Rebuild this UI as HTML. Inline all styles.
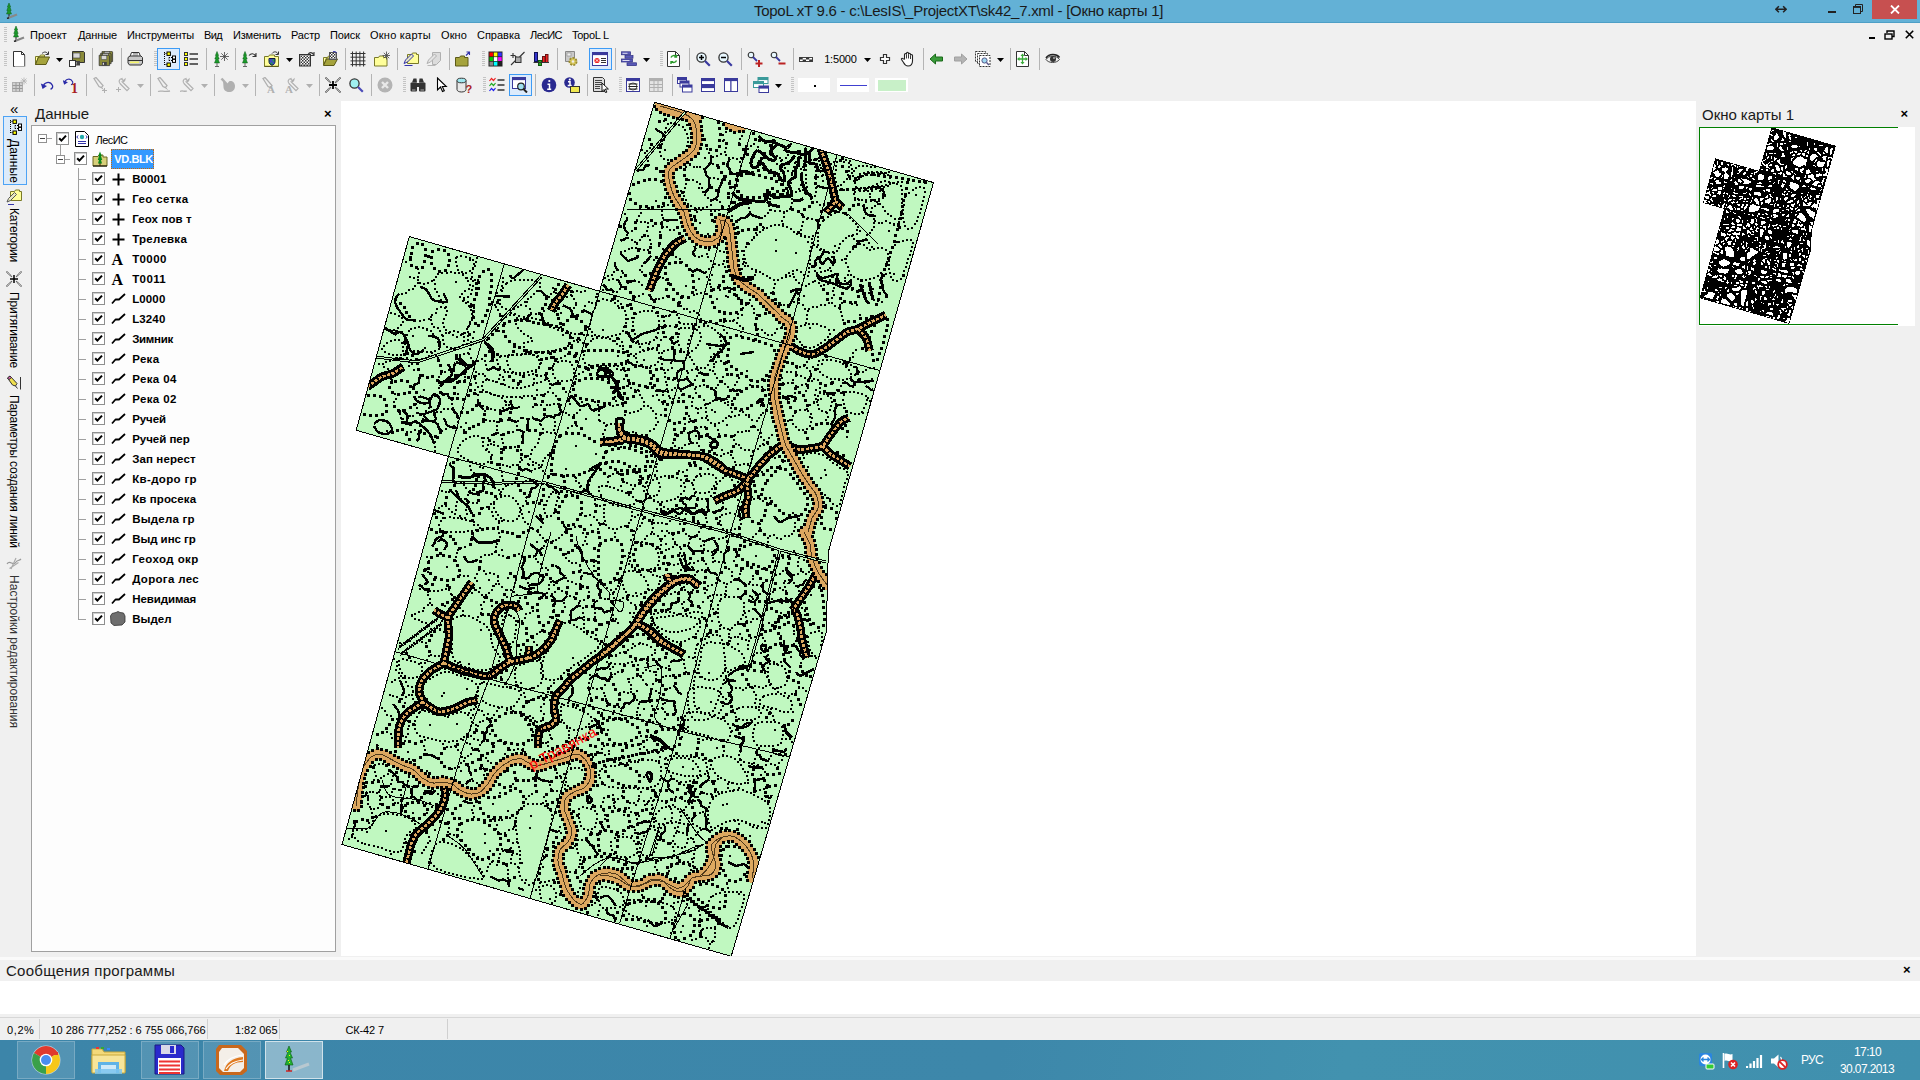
<!DOCTYPE html>
<html lang="ru"><head><meta charset="utf-8"><title>TopoL xT</title>
<style>
html,body{margin:0;padding:0;}
body{width:1920px;height:1080px;overflow:hidden;background:#f0f0f0;font-family:"Liberation Sans",sans-serif;font-size:11px;color:#000;position:relative;}
.a{position:absolute;}
.t{position:absolute;white-space:nowrap;line-height:1;}
#title{left:0;top:0;width:1920px;height:22px;background:#63b1d6;border-bottom:1px solid #4d9fc6;}
#closebtn{left:1872px;top:0;width:45px;height:19px;background:#c75050;}
#map{left:341px;top:101px;width:1355px;height:855px;background:#fff;}
#tree{left:31px;top:125px;width:303px;height:825px;background:#fdfdfd;border:1px solid #a0a0a0;box-sizing:content-box;}
.cb{position:absolute;width:11px;height:11px;border:1px solid #8e8f8f;background:#fff;box-shadow:inset 1px 1px 0 #cfcfcf;}
.vt{position:absolute;white-space:nowrap;transform-origin:0 0;transform:rotate(90deg);font-size:12px;line-height:1;}
.sep{position:absolute;width:1px;height:22px;background:#b4b4b4;}
.grip{position:absolute;width:3px;height:16px;background:repeating-linear-gradient(to bottom,#c4c4c4 0,#c4c4c4 1px,transparent 1px,transparent 2px);}
#taskbar{left:0;top:1040px;width:1920px;height:40px;background:linear-gradient(100deg,#3c85a9 0%,#3d87aa 52%,#4292af 70%,#4090ae 100%);}
.tb{position:absolute;top:1041px;width:58px;height:38px;background:rgba(255,255,255,.12);border:1px solid rgba(255,255,255,.22);box-sizing:border-box;}
</style></head><body>
<div class="a" id="title"></div><div class="a" id="closebtn"></div>
<div class="t" id="ttl" style="letter-spacing:-0.27px;left:754px;top:3px;font-size:15px;color:#1a1a1a;">TopoL xT 9.6 - c:\LesIS\_ProjectXT\sk42_7.xml - [Окно карты 1]</div>
<div class="t m" id="m0" style="letter-spacing:0.13px;left:30px;top:30px;font-size:11px;">Проект</div>
<div class="t m" id="m1" style="letter-spacing:-0.12px;left:78px;top:30px;font-size:11px;">Данные</div>
<div class="t m" id="m2" style="letter-spacing:-0.14px;left:127px;top:30px;font-size:11px;">Инструменты</div>
<div class="t m" id="m3" style="letter-spacing:-0.64px;left:204px;top:30px;font-size:11px;">Вид</div>
<div class="t m" id="m4" style="letter-spacing:-0.20px;left:233px;top:30px;font-size:11px;">Изменить</div>
<div class="t m" id="m5" style="letter-spacing:-0.15px;left:291px;top:30px;font-size:11px;">Растр</div>
<div class="t m" id="m6" style="letter-spacing:-0.10px;left:330px;top:30px;font-size:11px;">Поиск</div>
<div class="t m" id="m7" style="letter-spacing:0.24px;left:370px;top:30px;font-size:11px;">Окно карты</div>
<div class="t m" id="m8" style="letter-spacing:0.11px;left:441px;top:30px;font-size:11px;">Окно</div>
<div class="t m" id="m9" style="letter-spacing:-0.02px;left:477px;top:30px;font-size:11px;">Справка</div>
<div class="t m" id="m10" style="letter-spacing:-0.54px;left:530px;top:30px;font-size:11px;">ЛесИС</div>
<div class="t m" id="m11" style="letter-spacing:-0.25px;left:572px;top:30px;font-size:11px;">TopoL L</div>
<div class="a" id="map"></div>
<div class="a" id="tree"></div>
<div class="t" id="hd1" style="left:35px;top:106px;font-size:15px;color:#1a1a1a;">Данные</div>
<div class="t" style="left:324px;top:106.5px;font-size:13px;font-weight:bold;">×</div>
<div class="a" style="left:38px;top:134px;width:7px;height:7px;border:1px solid #919191;background:#fff"><div class="a" style="left:1px;top:3px;width:5px;height:1px;background:#444"></div></div>
<div class="a" style="left:47px;top:138px;width:5px;height:1px;background:#a0a0a0"></div>
<div class="cb" style="left:56px;top:132px"><svg width="11" height="11" viewBox="0 0 11 11" style="position:absolute;left:0;top:0"><path d="M2.2 5.2 L4.4 7.6 L9 2.6" stroke="#000" stroke-width="2" fill="none"/></svg></div>
<svg class="a" style="left:74px;top:131px" width="16" height="16" viewBox="0 0 16 16"><path d="M1.5 .5h9l4 4v11h-13z" fill="#fff" stroke="#000"/><circle cx="8" cy="6" r="2.2" fill="#2aa"/><path d="M4 4.5 2.8 6 4 7.5M12 4.5 13.2 6 12 7.5" stroke="#22a" fill="none"/><path d="M4 10.5h8M4 12.5h8" stroke="#33a"/></svg>
<div class="t" id="r_les" style="letter-spacing:-0.56px;left:95.6px;top:134.5px;font-size:11px;">ЛесИС</div>
<div class="a" style="left:60px;top:144px;width:1px;height:11px;background:#a0a0a0"></div>
<div class="a" style="left:56px;top:155px;width:7px;height:7px;border:1px solid #919191;background:#fff"><div class="a" style="left:1px;top:3px;width:5px;height:1px;background:#444"></div></div>
<div class="a" style="left:65px;top:159px;width:5px;height:1px;background:#a0a0a0"></div>
<div class="cb" style="left:74px;top:152px"><svg width="11" height="11" viewBox="0 0 11 11" style="position:absolute;left:0;top:0"><path d="M2.2 5.2 L4.4 7.6 L9 2.6" stroke="#000" stroke-width="2" fill="none"/></svg></div>
<svg class="a" style="left:92px;top:151px" width="16" height="16" viewBox="0 0 16 16"><path d="M1 5.5h5l1-1.5h4v2h4v9H1z" fill="#d8cf7a" stroke="#6b6820"/><path d="M1 15h14" stroke="#000"/><path d="M8 .5 6.2 5 7 5 5.8 9 7 9 6 12.5h4L9 9h1.2L9 5h.8z" fill="#0a8a1a"/><path d="M8 12v3" stroke="#320"/></svg>
<div class="a" style="left:111px;top:149px;width:41px;height:18px;background:#3399ff;border:1px dotted #c60;"></div>
<div class="t" id="r_vd" style="letter-spacing:-0.41px;left:114.3px;top:154px;font-size:11px;font-weight:bold;color:#fff">VD.BLK</div>
<div class="a" style="left:78px;top:168px;width:1px;height:452px;background:#a0a0a0"></div>
<div class="a" style="left:79px;top:179px;width:7px;height:1px;background:#a0a0a0"></div>
<div class="cb" style="left:92px;top:172px"><svg width="11" height="11" viewBox="0 0 11 11" style="position:absolute;left:0;top:0"><path d="M2.2 5.2 L4.4 7.6 L9 2.6" stroke="#000" stroke-width="2" fill="none"/></svg></div>
<svg class="a" style="left:112px;top:173px" width="13" height="13" viewBox="0 0 13 13"><path d="M6.5 .5v12M.5 6.5h12" stroke="#000" stroke-width="2"/></svg>
<div class="t r" id="r0" style="letter-spacing:0.06px;left:132.2px;top:174px;font-size:11.5px;font-weight:bold;">B0001</div>
<div class="a" style="left:79px;top:199px;width:7px;height:1px;background:#a0a0a0"></div>
<div class="cb" style="left:92px;top:192px"><svg width="11" height="11" viewBox="0 0 11 11" style="position:absolute;left:0;top:0"><path d="M2.2 5.2 L4.4 7.6 L9 2.6" stroke="#000" stroke-width="2" fill="none"/></svg></div>
<svg class="a" style="left:112px;top:193px" width="13" height="13" viewBox="0 0 13 13"><path d="M6.5 .5v12M.5 6.5h12" stroke="#000" stroke-width="2"/></svg>
<div class="t r" id="r1" style="letter-spacing:0.36px;left:132.2px;top:194px;font-size:11.5px;font-weight:bold;">Гео сетка</div>
<div class="a" style="left:79px;top:219px;width:7px;height:1px;background:#a0a0a0"></div>
<div class="cb" style="left:92px;top:212px"><svg width="11" height="11" viewBox="0 0 11 11" style="position:absolute;left:0;top:0"><path d="M2.2 5.2 L4.4 7.6 L9 2.6" stroke="#000" stroke-width="2" fill="none"/></svg></div>
<svg class="a" style="left:112px;top:213px" width="13" height="13" viewBox="0 0 13 13"><path d="M6.5 .5v12M.5 6.5h12" stroke="#000" stroke-width="2"/></svg>
<div class="t r" id="r2" style="letter-spacing:0.11px;left:132.2px;top:214px;font-size:11.5px;font-weight:bold;">Геох пов т</div>
<div class="a" style="left:79px;top:239px;width:7px;height:1px;background:#a0a0a0"></div>
<div class="cb" style="left:92px;top:232px"><svg width="11" height="11" viewBox="0 0 11 11" style="position:absolute;left:0;top:0"><path d="M2.2 5.2 L4.4 7.6 L9 2.6" stroke="#000" stroke-width="2" fill="none"/></svg></div>
<svg class="a" style="left:112px;top:233px" width="13" height="13" viewBox="0 0 13 13"><path d="M6.5 .5v12M.5 6.5h12" stroke="#000" stroke-width="2"/></svg>
<div class="t r" id="r3" style="letter-spacing:0.26px;left:132.2px;top:234px;font-size:11.5px;font-weight:bold;">Трелевка</div>
<div class="a" style="left:79px;top:259px;width:7px;height:1px;background:#a0a0a0"></div>
<div class="cb" style="left:92px;top:252px"><svg width="11" height="11" viewBox="0 0 11 11" style="position:absolute;left:0;top:0"><path d="M2.2 5.2 L4.4 7.6 L9 2.6" stroke="#000" stroke-width="2" fill="none"/></svg></div>
<div class="t" style="left:111.5px;top:252px;font-family:'Liberation Serif',serif;font-weight:bold;font-size:16px;">A</div>
<div class="t r" id="r4" style="letter-spacing:0.38px;left:132.2px;top:254px;font-size:11.5px;font-weight:bold;">T0000</div>
<div class="a" style="left:79px;top:279px;width:7px;height:1px;background:#a0a0a0"></div>
<div class="cb" style="left:92px;top:272px"><svg width="11" height="11" viewBox="0 0 11 11" style="position:absolute;left:0;top:0"><path d="M2.2 5.2 L4.4 7.6 L9 2.6" stroke="#000" stroke-width="2" fill="none"/></svg></div>
<div class="t" style="left:111.5px;top:272px;font-family:'Liberation Serif',serif;font-weight:bold;font-size:16px;">A</div>
<div class="t r" id="r5" style="letter-spacing:0.40px;left:132.2px;top:274px;font-size:11.5px;font-weight:bold;">T0011</div>
<div class="a" style="left:79px;top:299px;width:7px;height:1px;background:#a0a0a0"></div>
<div class="cb" style="left:92px;top:292px"><svg width="11" height="11" viewBox="0 0 11 11" style="position:absolute;left:0;top:0"><path d="M2.2 5.2 L4.4 7.6 L9 2.6" stroke="#000" stroke-width="2" fill="none"/></svg></div>
<svg class="a" style="left:111px;top:293px" width="15" height="12" viewBox="0 0 15 12"><path d="M1 10.5 4.5 6.5H8L14 1" stroke="#000" stroke-width="1.8" fill="none" stroke-linejoin="round"/></svg>
<div class="t r" id="r6" style="letter-spacing:0.12px;left:132.2px;top:294px;font-size:11.5px;font-weight:bold;">L0000</div>
<div class="a" style="left:79px;top:319px;width:7px;height:1px;background:#a0a0a0"></div>
<div class="cb" style="left:92px;top:312px"><svg width="11" height="11" viewBox="0 0 11 11" style="position:absolute;left:0;top:0"><path d="M2.2 5.2 L4.4 7.6 L9 2.6" stroke="#000" stroke-width="2" fill="none"/></svg></div>
<svg class="a" style="left:111px;top:313px" width="15" height="12" viewBox="0 0 15 12"><path d="M1 10.5 4.5 6.5H8L14 1" stroke="#000" stroke-width="1.8" fill="none" stroke-linejoin="round"/></svg>
<div class="t r" id="r7" style="letter-spacing:0.12px;left:132.2px;top:314px;font-size:11.5px;font-weight:bold;">L3240</div>
<div class="a" style="left:79px;top:339px;width:7px;height:1px;background:#a0a0a0"></div>
<div class="cb" style="left:92px;top:332px"><svg width="11" height="11" viewBox="0 0 11 11" style="position:absolute;left:0;top:0"><path d="M2.2 5.2 L4.4 7.6 L9 2.6" stroke="#000" stroke-width="2" fill="none"/></svg></div>
<svg class="a" style="left:111px;top:333px" width="15" height="12" viewBox="0 0 15 12"><path d="M1 10.5 4.5 6.5H8L14 1" stroke="#000" stroke-width="1.8" fill="none" stroke-linejoin="round"/></svg>
<div class="t r" id="r8" style="letter-spacing:-0.31px;left:132.2px;top:334px;font-size:11.5px;font-weight:bold;">Зимник</div>
<div class="a" style="left:79px;top:359px;width:7px;height:1px;background:#a0a0a0"></div>
<div class="cb" style="left:92px;top:352px"><svg width="11" height="11" viewBox="0 0 11 11" style="position:absolute;left:0;top:0"><path d="M2.2 5.2 L4.4 7.6 L9 2.6" stroke="#000" stroke-width="2" fill="none"/></svg></div>
<svg class="a" style="left:111px;top:353px" width="15" height="12" viewBox="0 0 15 12"><path d="M1 10.5 4.5 6.5H8L14 1" stroke="#000" stroke-width="1.8" fill="none" stroke-linejoin="round"/></svg>
<div class="t r" id="r9" style="letter-spacing:0.32px;left:132.2px;top:354px;font-size:11.5px;font-weight:bold;">Река</div>
<div class="a" style="left:79px;top:379px;width:7px;height:1px;background:#a0a0a0"></div>
<div class="cb" style="left:92px;top:372px"><svg width="11" height="11" viewBox="0 0 11 11" style="position:absolute;left:0;top:0"><path d="M2.2 5.2 L4.4 7.6 L9 2.6" stroke="#000" stroke-width="2" fill="none"/></svg></div>
<svg class="a" style="left:111px;top:373px" width="15" height="12" viewBox="0 0 15 12"><path d="M1 10.5 4.5 6.5H8L14 1" stroke="#000" stroke-width="1.8" fill="none" stroke-linejoin="round"/></svg>
<div class="t r" id="r10" style="letter-spacing:0.38px;left:132.2px;top:374px;font-size:11.5px;font-weight:bold;">Река 04</div>
<div class="a" style="left:79px;top:399px;width:7px;height:1px;background:#a0a0a0"></div>
<div class="cb" style="left:92px;top:392px"><svg width="11" height="11" viewBox="0 0 11 11" style="position:absolute;left:0;top:0"><path d="M2.2 5.2 L4.4 7.6 L9 2.6" stroke="#000" stroke-width="2" fill="none"/></svg></div>
<svg class="a" style="left:111px;top:393px" width="15" height="12" viewBox="0 0 15 12"><path d="M1 10.5 4.5 6.5H8L14 1" stroke="#000" stroke-width="1.8" fill="none" stroke-linejoin="round"/></svg>
<div class="t r" id="r11" style="letter-spacing:0.38px;left:132.2px;top:394px;font-size:11.5px;font-weight:bold;">Река 02</div>
<div class="a" style="left:79px;top:419px;width:7px;height:1px;background:#a0a0a0"></div>
<div class="cb" style="left:92px;top:412px"><svg width="11" height="11" viewBox="0 0 11 11" style="position:absolute;left:0;top:0"><path d="M2.2 5.2 L4.4 7.6 L9 2.6" stroke="#000" stroke-width="2" fill="none"/></svg></div>
<svg class="a" style="left:111px;top:413px" width="15" height="12" viewBox="0 0 15 12"><path d="M1 10.5 4.5 6.5H8L14 1" stroke="#000" stroke-width="1.8" fill="none" stroke-linejoin="round"/></svg>
<div class="t r" id="r12" style="letter-spacing:-0.10px;left:132.2px;top:414px;font-size:11.5px;font-weight:bold;">Ручей</div>
<div class="a" style="left:79px;top:439px;width:7px;height:1px;background:#a0a0a0"></div>
<div class="cb" style="left:92px;top:432px"><svg width="11" height="11" viewBox="0 0 11 11" style="position:absolute;left:0;top:0"><path d="M2.2 5.2 L4.4 7.6 L9 2.6" stroke="#000" stroke-width="2" fill="none"/></svg></div>
<svg class="a" style="left:111px;top:433px" width="15" height="12" viewBox="0 0 15 12"><path d="M1 10.5 4.5 6.5H8L14 1" stroke="#000" stroke-width="1.8" fill="none" stroke-linejoin="round"/></svg>
<div class="t r" id="r13" style="letter-spacing:-0.03px;left:132.2px;top:434px;font-size:11.5px;font-weight:bold;">Ручей пер</div>
<div class="a" style="left:79px;top:459px;width:7px;height:1px;background:#a0a0a0"></div>
<div class="cb" style="left:92px;top:452px"><svg width="11" height="11" viewBox="0 0 11 11" style="position:absolute;left:0;top:0"><path d="M2.2 5.2 L4.4 7.6 L9 2.6" stroke="#000" stroke-width="2" fill="none"/></svg></div>
<svg class="a" style="left:111px;top:453px" width="15" height="12" viewBox="0 0 15 12"><path d="M1 10.5 4.5 6.5H8L14 1" stroke="#000" stroke-width="1.8" fill="none" stroke-linejoin="round"/></svg>
<div class="t r" id="r14" style="letter-spacing:0.11px;left:132.2px;top:454px;font-size:11.5px;font-weight:bold;">Зап нерест</div>
<div class="a" style="left:79px;top:479px;width:7px;height:1px;background:#a0a0a0"></div>
<div class="cb" style="left:92px;top:472px"><svg width="11" height="11" viewBox="0 0 11 11" style="position:absolute;left:0;top:0"><path d="M2.2 5.2 L4.4 7.6 L9 2.6" stroke="#000" stroke-width="2" fill="none"/></svg></div>
<svg class="a" style="left:111px;top:473px" width="15" height="12" viewBox="0 0 15 12"><path d="M1 10.5 4.5 6.5H8L14 1" stroke="#000" stroke-width="1.8" fill="none" stroke-linejoin="round"/></svg>
<div class="t r" id="r15" style="letter-spacing:0.35px;left:132.2px;top:474px;font-size:11.5px;font-weight:bold;">Кв-доро гр</div>
<div class="a" style="left:79px;top:499px;width:7px;height:1px;background:#a0a0a0"></div>
<div class="cb" style="left:92px;top:492px"><svg width="11" height="11" viewBox="0 0 11 11" style="position:absolute;left:0;top:0"><path d="M2.2 5.2 L4.4 7.6 L9 2.6" stroke="#000" stroke-width="2" fill="none"/></svg></div>
<svg class="a" style="left:111px;top:493px" width="15" height="12" viewBox="0 0 15 12"><path d="M1 10.5 4.5 6.5H8L14 1" stroke="#000" stroke-width="1.8" fill="none" stroke-linejoin="round"/></svg>
<div class="t r" id="r16" style="letter-spacing:0.09px;left:132.2px;top:494px;font-size:11.5px;font-weight:bold;">Кв просека</div>
<div class="a" style="left:79px;top:519px;width:7px;height:1px;background:#a0a0a0"></div>
<div class="cb" style="left:92px;top:512px"><svg width="11" height="11" viewBox="0 0 11 11" style="position:absolute;left:0;top:0"><path d="M2.2 5.2 L4.4 7.6 L9 2.6" stroke="#000" stroke-width="2" fill="none"/></svg></div>
<svg class="a" style="left:111px;top:513px" width="15" height="12" viewBox="0 0 15 12"><path d="M1 10.5 4.5 6.5H8L14 1" stroke="#000" stroke-width="1.8" fill="none" stroke-linejoin="round"/></svg>
<div class="t r" id="r17" style="letter-spacing:0.24px;left:132.2px;top:514px;font-size:11.5px;font-weight:bold;">Выдела гр</div>
<div class="a" style="left:79px;top:539px;width:7px;height:1px;background:#a0a0a0"></div>
<div class="cb" style="left:92px;top:532px"><svg width="11" height="11" viewBox="0 0 11 11" style="position:absolute;left:0;top:0"><path d="M2.2 5.2 L4.4 7.6 L9 2.6" stroke="#000" stroke-width="2" fill="none"/></svg></div>
<svg class="a" style="left:111px;top:533px" width="15" height="12" viewBox="0 0 15 12"><path d="M1 10.5 4.5 6.5H8L14 1" stroke="#000" stroke-width="1.8" fill="none" stroke-linejoin="round"/></svg>
<div class="t r" id="r18" style="letter-spacing:-0.05px;left:132.2px;top:534px;font-size:11.5px;font-weight:bold;">Выд инс гр</div>
<div class="a" style="left:79px;top:559px;width:7px;height:1px;background:#a0a0a0"></div>
<div class="cb" style="left:92px;top:552px"><svg width="11" height="11" viewBox="0 0 11 11" style="position:absolute;left:0;top:0"><path d="M2.2 5.2 L4.4 7.6 L9 2.6" stroke="#000" stroke-width="2" fill="none"/></svg></div>
<svg class="a" style="left:111px;top:553px" width="15" height="12" viewBox="0 0 15 12"><path d="M1 10.5 4.5 6.5H8L14 1" stroke="#000" stroke-width="1.8" fill="none" stroke-linejoin="round"/></svg>
<div class="t r" id="r19" style="letter-spacing:0.42px;left:132.2px;top:554px;font-size:11.5px;font-weight:bold;">Геоход окр</div>
<div class="a" style="left:79px;top:579px;width:7px;height:1px;background:#a0a0a0"></div>
<div class="cb" style="left:92px;top:572px"><svg width="11" height="11" viewBox="0 0 11 11" style="position:absolute;left:0;top:0"><path d="M2.2 5.2 L4.4 7.6 L9 2.6" stroke="#000" stroke-width="2" fill="none"/></svg></div>
<svg class="a" style="left:111px;top:573px" width="15" height="12" viewBox="0 0 15 12"><path d="M1 10.5 4.5 6.5H8L14 1" stroke="#000" stroke-width="1.8" fill="none" stroke-linejoin="round"/></svg>
<div class="t r" id="r20" style="letter-spacing:0.32px;left:132.2px;top:574px;font-size:11.5px;font-weight:bold;">Дорога лес</div>
<div class="a" style="left:79px;top:599px;width:7px;height:1px;background:#a0a0a0"></div>
<div class="cb" style="left:92px;top:592px"><svg width="11" height="11" viewBox="0 0 11 11" style="position:absolute;left:0;top:0"><path d="M2.2 5.2 L4.4 7.6 L9 2.6" stroke="#000" stroke-width="2" fill="none"/></svg></div>
<svg class="a" style="left:111px;top:593px" width="15" height="12" viewBox="0 0 15 12"><path d="M1 10.5 4.5 6.5H8L14 1" stroke="#000" stroke-width="1.8" fill="none" stroke-linejoin="round"/></svg>
<div class="t r" id="r21" style="letter-spacing:-0.07px;left:132.2px;top:594px;font-size:11.5px;font-weight:bold;">Невидимая</div>
<div class="a" style="left:79px;top:619px;width:7px;height:1px;background:#a0a0a0"></div>
<div class="cb" style="left:92px;top:612px"><svg width="11" height="11" viewBox="0 0 11 11" style="position:absolute;left:0;top:0"><path d="M2.2 5.2 L4.4 7.6 L9 2.6" stroke="#000" stroke-width="2" fill="none"/></svg></div>
<svg class="a" style="left:110px;top:611px" width="16" height="15" viewBox="0 0 16 15"><path d="M2 2.5 6 1.5 8 .5 10 1.5 13.5 2 15 5 15 11 12 14 4 14.5 1 12 .5 5z" fill="#6e6e6e" stroke="#333" stroke-width=".8"/></svg>
<div class="t r" id="r22" style="letter-spacing:0.05px;left:132.2px;top:614px;font-size:11.5px;font-weight:bold;">Выдел</div>
<div class="t" style="left:10px;top:101px;font-size:15px;">«</div>
<div class="a" style="left:3px;top:116px;width:22px;height:67px;background:#dcebfa;border:1px solid #4da3f5"></div>
<div class="vt" id="v0" style="letter-spacing:0.11px;left:20px;top:138.5px;">Данные</div>
<div class="vt" id="v1" style="letter-spacing:-0.26px;left:20px;top:208px;">Категории</div>
<div class="vt" id="v2" style="letter-spacing:-0.17px;left:20px;top:292px;">Притягивание</div>
<div class="vt" id="v3" style="letter-spacing:-0.12px;left:20px;top:395px;">Параметры создания линий</div>
<div class="vt" id="v4" style="letter-spacing:0.02px;left:20px;top:575px;color:#333">Настройки редактирования</div>
<div class="a" style="left:1696px;top:103px;width:219px;height:24px;background:#f0f0f0"></div>
<div class="t" id="hd2" style="letter-spacing:-0.04px;left:1702px;top:106.5px;font-size:15px;color:#1a1a1a;">Окно карты 1</div>
<div class="t" style="left:1900.5px;top:107px;font-size:13px;font-weight:bold;">×</div>
<div class="a" id="ov" style="left:1699px;top:127px;width:216px;height:199px;background:#fff"></div>
<div class="a" style="left:1699px;top:127px;width:199px;height:1px;background:#008000"></div>
<div class="a" style="left:1699px;top:127px;width:1px;height:198px;background:#008000"></div>
<div class="a" style="left:1699px;top:324px;width:199px;height:1px;background:#008000"></div>
<div class="a" style="left:0;top:957px;width:1920px;height:3px;background:#fafafa"></div>
<div class="t" id="hd3" style="letter-spacing:0.27px;left:6px;top:963px;font-size:15px;color:#1a1a1a;">Сообщения программы</div>
<div class="t" style="left:1903px;top:963px;font-size:13px;font-weight:bold;">×</div>
<div class="a" style="left:0;top:981px;width:1920px;height:33px;background:#fff"></div>
<div class="a" style="left:0;top:1017px;width:1920px;height:1px;background:#d7d7d7"></div>
<div class="a" style="left:39px;top:1019px;width:1px;height:20px;background:#d0d0d0"></div>
<div class="a" style="left:207px;top:1019px;width:1px;height:20px;background:#d0d0d0"></div>
<div class="a" style="left:279px;top:1019px;width:1px;height:20px;background:#d0d0d0"></div>
<div class="a" style="left:447px;top:1019px;width:1px;height:20px;background:#d0d0d0"></div>
<div class="t" id="s0" style="letter-spacing:0.61px;left:7px;top:1025px;font-size:11px;">0,2%</div>
<div class="t" id="s1" style="letter-spacing:-0.03px;left:50.5px;top:1025px;font-size:11px;">10 286 777,252 : 6 755 066,766</div>
<div class="t" id="s2" style="letter-spacing:-0.04px;left:235px;top:1025px;font-size:11px;">1:82 065</div>
<div class="t" id="s3" style="letter-spacing:-0.13px;left:345.5px;top:1025px;font-size:11px;">СК-42 7</div>
<div class="a" id="taskbar"></div>
<div class="tb" style="left:17px;"></div>
<div class="tb" style="left:141px;"></div>
<div class="tb" style="left:203px;"></div>
<div class="tb" style="left:265px;background:rgba(255,255,255,.40);border-color:rgba(255,255,255,.6)"></div>
<div class="t" id="k0" style="letter-spacing:-0.68px;left:1801px;top:1054px;font-size:12px;color:#fff;">РУС</div>
<div class="t" id="k1" style="letter-spacing:-0.61px;left:1854px;top:1046px;font-size:12px;color:#fff;">17:10</div>
<div class="t" id="k2" style="letter-spacing:-0.61px;left:1840px;top:1063px;font-size:12px;color:#fff;">30.07.2013</div>
<div class="grip" style="left:4px;top:51px"></div>
<svg class="a" style="left:10.7px;top:51.0px" width="16" height="16" viewBox="0 0 16 16"><path d="M2.5 .5h8l3 3v12h-11z" fill="#fff" stroke="#333"/><path d="M10.5 .5v3h3" fill="none" stroke="#333"/><path d="M3.5 15.5h10.5v-11" fill="none" stroke="#aaa"/></svg>
<svg class="a" style="left:34.0px;top:51.0px" width="16" height="16" viewBox="0 0 16 16"><path d="M1.5 5.5h4l1-1.5h4v2h-6l-3 7.5z" fill="#ffff9a" stroke="#7a7a28"/><path d="M1.5 13.5l3-7.5h11l-3.5 7.5z" fill="#a5a33c" stroke="#5c5a18"/><path d="M8 2.5c2-2 4.5-2 6 .5M14.5 .5v3h-3" fill="none" stroke="#333" stroke-width="1"/></svg>
<svg class="a" style="left:56.0px;top:58.0px" width="7" height="4" viewBox="0 0 7 4"><path d="M0 0h7L3.5 4z" fill="#000"/></svg>
<svg class="a" style="left:69.0px;top:51.0px" width="16" height="16" viewBox="0 0 16 16"><path d="M3.5 .5h11l1 1v10h-12z" fill="#8a8a3a" stroke="#333"/><rect x="4" y="2" width="7" height="5" fill="#d8d8d8" stroke="#333" stroke-width=".6"/><rect x="5" y="10" width="6" height="4.5" fill="#444"/><rect x="6" y="11" width="1.5" height="2.5" fill="#ddd"/><rect x=".5" y="9.5" width="6" height="6" fill="#fff" stroke="#333"/></svg>
<div class="sep" style="left:92px;top:48px"></div>
<svg class="a" style="left:97.8px;top:51.0px" width="16" height="16" viewBox="0 0 16 16"><g transform="translate(3,-1) scale(.8)"><path d="M1.5 1.5h12l1 1v12h-13z" fill="#8a8a3a" stroke="#333"/><rect x="4" y="2" width="7" height="5" fill="#d8d8d8" stroke="#333" stroke-width=".6"/><rect x="5" y="10" width="6" height="4.5" fill="#444"/><rect x="6" y="11" width="1.5" height="2.5" fill="#ddd"/></g><g transform="translate(1.5,1) scale(.8)"><path d="M1.5 1.5h12l1 1v12h-13z" fill="#8a8a3a" stroke="#333"/><rect x="4" y="2" width="7" height="5" fill="#d8d8d8" stroke="#333" stroke-width=".6"/><rect x="5" y="10" width="6" height="4.5" fill="#444"/><rect x="6" y="11" width="1.5" height="2.5" fill="#ddd"/></g><g transform="translate(0,3) scale(.8)"><path d="M1.5 1.5h12l1 1v12h-13z" fill="#8a8a3a" stroke="#333"/><rect x="4" y="2" width="7" height="5" fill="#d8d8d8" stroke="#333" stroke-width=".6"/><rect x="5" y="10" width="6" height="4.5" fill="#444"/><rect x="6" y="11" width="1.5" height="2.5" fill="#ddd"/></g></svg>
<div class="sep" style="left:121px;top:48px"></div>
<svg class="a" style="left:127.0px;top:51.0px" width="16" height="16" viewBox="0 0 16 16"><path d="M4.5 1.5h7.5l1.5 4h-10.5z" fill="#fff" stroke="#333"/><path d="M1 6.5l2-1.5h11l1.5 1.5v5.5l-1.5 2h-11.5l-1.5-2z" fill="#c8c8c8" stroke="#333"/><path d="M1 9.5h14.5" stroke="#333"/><rect x="3" y="10.5" width="9" height="1.6" fill="#f5f56a"/><path d="M6 2.8h5M5.6 4.2h5.6" stroke="#555" stroke-width=".7"/></svg>
<div class="grip" style="left:154px;top:51px"></div>
<div class="a" style="left:157px;top:48px;width:23px;height:22px;background:#dcebfc;border:1px solid #3d9bf5;box-sizing:border-box"></div>
<svg class="a" style="left:160.5px;top:51.0px" width="16" height="16" viewBox="0 0 16 16"><path d="M3.5 1v13M3.5 2.5h4M3.5 13.5h4M8 6.5v3M8 6.5h4M8 9.5h4" stroke="#000" stroke-dasharray="1 1" fill="none"/><rect x="6" y="1" width="3.4" height="3.4" fill="#ff0" stroke="#000"/><rect x="6" y="12" width="3.4" height="3.4" fill="#ff0" stroke="#000"/><rect x="11.5" y="5" width="3" height="3" fill="#fff" stroke="#000"/><rect x="11.5" y="8.4" width="3" height="3" fill="#fff" stroke="#000"/></svg>
<svg class="a" style="left:183.0px;top:51.0px" width="16" height="16" viewBox="0 0 16 16"><rect x="1.5" y="1.5" width="3" height="3" fill="#ff0" stroke="#333"/><rect x="1.5" y="6.5" width="3" height="3" fill="#ff0" stroke="#333"/><rect x="1.5" y="11.5" width="3" height="3" fill="#ff0" stroke="#333"/><path d="M6.5 3h8.5M6.5 8h8.5M6.5 13h8.5" stroke="#333" stroke-width="1.6"/></svg>
<div class="sep" style="left:206px;top:48px"></div>
<svg class="a" style="left:212.5px;top:51.0px" width="16" height="16" viewBox="0 0 16 16"><g transform="translate(0,0)"><path d="M4 .5 2.4 4.5 3.2 4.5 1.8 8 3 8 1.5 12h5L5 8h1.2L4.8 4.5h.8z" fill="#1b9a2a" stroke="#0a5a14" stroke-width=".5"/><path d="M4 12v3.5M2 15.5h4" stroke="#666" stroke-width="1"/></g><path d="M11.5 1v9M7 5.5h9M8.3 2.3l6.4 6.4M14.7 2.3l-6.4 6.4" stroke="#444" stroke-width=".8"/></svg>
<div class="sep" style="left:235px;top:48px"></div>
<svg class="a" style="left:241.0px;top:51.0px" width="16" height="16" viewBox="0 0 16 16"><g transform="translate(0,0)"><path d="M4 .5 2.4 4.5 3.2 4.5 1.8 8 3 8 1.5 12h5L5 8h1.2L4.8 4.5h.8z" fill="#1b9a2a" stroke="#0a5a14" stroke-width=".5"/><path d="M4 12v3.5M2 15.5h4" stroke="#666" stroke-width="1"/></g><path d="M8 4.5c2-2.5 5-2.5 6.5.5M15 2v3.5h-3.5" fill="none" stroke="#333" stroke-width="1.1"/></svg>
<svg class="a" style="left:264.0px;top:51.0px" width="16" height="16" viewBox="0 0 16 16"><path d="M.5 5.5h4l1-1.5h5v1.5h4v10h-14z" fill="#ffff9a" stroke="#7a7a28"/><path d="M.5 15.5h14" stroke="#5c5a18" stroke-width="1.4"/><path d="M5 7.5h6v3c0 2-1.5 3.2-3 3.8-1.5-.6-3-1.8-3-3.8z" fill="#2a8a6a" stroke="#114"/><path d="M5.5 8l5 5M8 8l-2 4" stroke="#44c" stroke-width="1.2"/><path d="M8 2.5c2-2.5 5-2 6 .5M14.5 .5v3h-3" fill="none" stroke="#333"/></svg>
<svg class="a" style="left:286.0px;top:58.0px" width="7" height="4" viewBox="0 0 7 4"><path d="M0 0h7L3.5 4z" fill="#000"/></svg>
<svg class="a" style="left:298.7px;top:51.0px" width="16" height="16" viewBox="0 0 16 16"><pattern id="ck" width="3" height="3" patternUnits="userSpaceOnUse"><rect width="3" height="3" fill="#fff"/><rect width="1.5" height="1.5" fill="#333"/><rect x="1.5" y="1.5" width="1.5" height="1.5" fill="#333"/></pattern><rect x=".5" y="3.5" width="11" height="11.5" fill="url(#ck)" stroke="#333"/><path d="M9 3.5c1.5-2.5 4-2.5 5.5 0M15 1v3.5h-3.5" fill="none" stroke="#333" stroke-width="1.1"/></svg>
<svg class="a" style="left:322.0px;top:51.0px" width="16" height="16" viewBox="0 0 16 16"><path d="M1.5 6.5h4l1-1.5h3v2h-5l-3 7z" fill="#ffff9a" stroke="#7a7a28"/><path d="M1.5 14.5l3-6.5h11l-3.5 6.5z" fill="#a5a33c" stroke="#5c5a18"/><rect x="7.5" y="1.5" width="7" height="7" fill="url(#ck)" stroke="#555"/><path d="M11 .8c1.5-.8 3 0 3.8 1.2" stroke="#33a" fill="none"/></svg>
<div class="sep" style="left:345px;top:48px"></div>
<svg class="a" style="left:350.3px;top:51.0px" width="16" height="16" viewBox="0 0 16 16"><path d="M.5 2.5h15M.5 6.2h15M.5 9.9h15M.5 13.6h15M2.5 .5v15M6.2 .5v15M9.9 .5v15M13.6 .5v15" stroke="#333" stroke-width="1"/></svg>
<svg class="a" style="left:374.0px;top:51.0px" width="16" height="16" viewBox="0 0 16 16"><path d="M.5 6.5h4l1-1.5h4v1.5h3.5v8.5h-12.5z" fill="#ffff9a" stroke="#7a7a28"/><path d="M12.5 .5v8M8.5 4.5h7.5M9.8 1.8l5.4 5.4M15.2 1.8l-5.4 5.4" stroke="#444" stroke-width=".8"/></svg>
<div class="sep" style="left:397px;top:48px"></div>
<svg class="a" style="left:402.5px;top:51.0px" width="16" height="16" viewBox="0 0 16 16"><path d="M4.5 3.5h4l1-1.5h4v1.5h2v9h-11z" fill="#ffff9a" stroke="#7a7a28"/><path d="M1 12.5l1.5-3.5 6-6 2 2-6 6z" fill="#e8e8c0" stroke="#33a" stroke-width="1"/><path d="M1.5 14.5h8" stroke="#33a"/></svg>
<svg class="a" style="left:425.7px;top:51.0px" width="16" height="16" viewBox="0 0 16 16"><path d="M6.5 1.5h8v8l-4 4h-4z" fill="#dcdcdc" stroke="#b0b0b0"/><path d="M1 12.5l1.5-3.5 6-6 2 2-6 6z" fill="#e4e4e4" stroke="#b0b0b0"/><path d="M1.5 14.5h8" stroke="#b8b8b8"/></svg>
<div class="sep" style="left:449px;top:48px"></div>
<svg class="a" style="left:455.0px;top:51.0px" width="16" height="16" viewBox="0 0 16 16"><path d="M.5 6.5h4l1-1.5h4v1.5h3.5v8.5h-12.5z" fill="#a5a33c" stroke="#5c5a18"/><path d="M11 4.5l3.5-3.5M11.5 1h3v3" stroke="#33a" fill="none" stroke-width="1.1"/></svg>
<div class="grip" style="left:482px;top:51px"></div>
<svg class="a" style="left:487.8px;top:51.0px" width="16" height="16" viewBox="0 0 16 16"><rect x=".5" y=".5" width="14" height="15" fill="#222"/><rect x="1.5" y="1.5" width="3.6" height="3.9" fill="#f00"/><rect x="5.8" y="1.5" width="3.6" height="3.9" fill="#ff0"/><rect x="10.1" y="1.5" width="3.6" height="3.9" fill="#33f"/><rect x="1.5" y="6.1" width="3.6" height="3.9" fill="#0c0"/><rect x="5.8" y="6.1" width="3.6" height="3.9" fill="#fff"/><rect x="10.1" y="6.1" width="3.6" height="3.9" fill="#f0f"/><rect x="1.5" y="10.7" width="3.6" height="3.9" fill="#888"/><rect x="5.8" y="10.7" width="3.6" height="3.9" fill="#0ff"/><rect x="10.1" y="10.7" width="3.6" height="3.9" fill="#222"/></svg>
<svg class="a" style="left:510.3px;top:51.0px" width="16" height="16" viewBox="0 0 16 16"><path d="M1 14l5-5M9.5 6l5-5M3 2v5M.5 4.5h5M5 5l2 2" stroke="#333" stroke-width="1.1"/><rect x="5.5" y="6" width="5.5" height="5.5" fill="#aaa" stroke="#333"/></svg>
<svg class="a" style="left:533.0px;top:51.0px" width="16" height="16" viewBox="0 0 16 16"><rect x="1.5" y="1.5" width="3" height="9" fill="#33c" stroke="#115"/><rect x="5.5" y="9.5" width="3" height="5" fill="#2a2" stroke="#151"/><rect x="9.5" y="5.5" width="2.5" height="6" fill="#e22" stroke="#611"/><rect x="12.5" y="3.5" width="2.5" height="8" fill="#e22" stroke="#611"/><path d="M.5 11.5h15.5" stroke="#333"/></svg>
<div class="sep" style="left:557px;top:48px"></div>
<svg class="a" style="left:563.7px;top:51.0px" width="16" height="16" viewBox="0 0 16 16"><path d="M1.5 .5h9v10h-9z" fill="#c9c9c9" stroke="#888"/><rect x="3" y="2" width="4" height="3" fill="#eee" stroke="#888" stroke-width=".6"/><circle cx="9" cy="10.5" r="3.6" fill="#d8c860" stroke="#9a8c30" stroke-width="1.8" stroke-dasharray="2 1.2"/><circle cx="9" cy="10.5" r="1.2" fill="#eee"/></svg>
<div class="a" style="left:589px;top:48px;width:23px;height:22px;background:#dcebfc;border:1px solid #3d9bf5;box-sizing:border-box"></div>
<svg class="a" style="left:592.3px;top:51.0px" width="16" height="16" viewBox="0 0 16 16"><rect x="0.5" y="1.5" width="15" height="13" fill="#fff" stroke="#3a3a9c"/><rect x="0.5" y="1.5" width="15" height="2.6" fill="#3a3a9c"/><circle cx="5" cy="9.5" r="2.6" fill="#e22"/><path d="M3.8 8.3l2.4 2.4M6.2 8.3l-2.4 2.4" stroke="#fff" stroke-width=".9"/><path d="M9 7.5h5M9 9.5h5M9 11.5h5" stroke="#333"/></svg>
<div class="sep" style="left:615px;top:48px"></div>
<svg class="a" style="left:621.0px;top:51.0px" width="16" height="16" viewBox="0 0 16 16"><g fill="#5a5ab8" stroke="#2a2a80" stroke-width=".7"><rect x=".5" y=".8" width="9" height="3"/><rect x="4" y="4.6" width="8" height="2.6"/><rect x=".5" y="8" width="11" height="3"/><rect x="6" y="11.8" width="9.5" height="2.8"/></g><path d="M1.5 2.3h5M1.5 9.5h7" stroke="#fff" stroke-width=".8"/></svg>
<svg class="a" style="left:643.0px;top:58.0px" width="7" height="4" viewBox="0 0 7 4"><path d="M0 0h7L3.5 4z" fill="#000"/></svg>
<div class="grip" style="left:660px;top:51px"></div>
<svg class="a" style="left:665.7px;top:51.0px" width="16" height="16" viewBox="0 0 16 16"><path d="M1.5 .5h8l4 4v11h-12z" fill="#fff" stroke="#333"/><path d="M9.5 .5v4h4" fill="none" stroke="#333"/><path d="M5 6.5a3 3 0 0 1 5-1M10.5 3.8v2.2h-2.2M10.5 9.5a3 3 0 0 1-5 1M5 13v-2.2h2.2" fill="none" stroke="#2a9a2a" stroke-width="1.4"/></svg>
<div class="sep" style="left:689px;top:48px"></div>
<svg class="a" style="left:694.5px;top:51.0px" width="16" height="16" viewBox="0 0 16 16"><circle cx="6.5" cy="6.5" r="4.6" fill="#e8f8ff" stroke="#333" stroke-width="1.3"/><path d="M10 10l4.8 4.8" stroke="#3a3aa0" stroke-width="2.2"/><path d="M4 6.5h5M6.5 4v5" stroke="#000" stroke-width="1.5"/></svg>
<svg class="a" style="left:717.4px;top:51.0px" width="16" height="16" viewBox="0 0 16 16"><circle cx="6.5" cy="6.5" r="4.6" fill="#e8f8ff" stroke="#333" stroke-width="1.3"/><path d="M10 10l4.8 4.8" stroke="#3a3aa0" stroke-width="2.2"/><path d="M4 6.5h5" stroke="#000" stroke-width="1.5"/></svg>
<div class="sep" style="left:741px;top:48px"></div>
<svg class="a" style="left:746.6px;top:51.0px" width="16" height="16" viewBox="0 0 16 16"><circle cx="4" cy="4" r="2.8" fill="#e8f8ff" stroke="#333" stroke-width="1.1"/><path d="M6 6l4 4" stroke="#3a3aa0" stroke-width="1.8"/><path d="M8.5 12.5h7M12 9v7" stroke="#b22" stroke-width="2"/></svg>
<svg class="a" style="left:769.5px;top:51.0px" width="16" height="16" viewBox="0 0 16 16"><circle cx="4" cy="4" r="2.8" fill="#e8f8ff" stroke="#333" stroke-width="1.1"/><path d="M6 6l4 4" stroke="#3a3aa0" stroke-width="1.8"/><path d="M8.5 12.5h7" stroke="#b22" stroke-width="2"/></svg>
<div class="sep" style="left:793px;top:48px"></div>
<svg class="a" style="left:798.7px;top:51.5px" width="16" height="16" viewBox="0 0 16 16"><rect x=".5" y="5.5" width="13" height="4" fill="#fff" stroke="#444"/><path d="M.5 5.5h3.2v2h-3.2zM7 5.5h3.2v2H7zM3.7 7.5H7v2H3.7zM10.2 7.5h3.3v2h-3.3z" fill="#333"/></svg>
<div class="t" id="sc" style="letter-spacing:-0.19px;left:824.2px;top:54px;font-size:11px;">1:5000</div>
<svg class="a" style="left:864.0px;top:58.0px" width="7" height="4" viewBox="0 0 7 4"><path d="M0 0h7L3.5 4z" fill="#000"/></svg>
<svg class="a" style="left:876.5px;top:51.0px" width="16" height="16" viewBox="0 0 16 16"><path d="M6.5 3.5h3v3h3v3h-3v3h-3v-3h-3v-3h3z" fill="#fff" stroke="#333" stroke-width="1.2"/></svg>
<svg class="a" style="left:900.0px;top:51.0px" width="16" height="16" viewBox="0 0 16 16"><path d="M4.5 8V3.5a1 1 0 0 1 2 0V2.2a1 1 0 0 1 2 0v1a1 1 0 0 1 2 0v1.300a1 1 0 0 1 2 0V10c0 3-1.500 5-4.500 5-2.500 0-3.500-1.500-4.500-3.500L1.500 8.500c-.5-1 .7-1.800 1.500-.8z" fill="#fff" stroke="#222" stroke-width="1.1"/><path d="M6.5 3.5v4M8.5 3.2v4.300M10.5 4.500v3.500" stroke="#222" stroke-width=".9"/></svg>
<div class="sep" style="left:923px;top:48px"></div>
<svg class="a" style="left:929.0px;top:51.0px" width="16" height="16" viewBox="0 0 16 16"><path d="M1 8l5.5-5v3h7v4h-7v3z" fill="#3a9a3a" stroke="#1a6a1a"/></svg>
<svg class="a" style="left:952.0px;top:51.0px" width="16" height="16" viewBox="0 0 16 16"><path d="M15 8l-5.5-5v3h-7v4h7v3z" fill="#b4b4b4" stroke="#a0a0a0"/></svg>
<svg class="a" style="left:975.0px;top:51.0px" width="16" height="16" viewBox="0 0 16 16"><rect x=".5" y=".5" width="10" height="10" fill="#fff" stroke="#333" stroke-dasharray="2 1"/><rect x="2.5" y="2.5" width="10" height="10" fill="#fff" stroke="#333" stroke-dasharray="2 1"/><rect x="4.500" y="4.500" width="10.500" height="11" fill="#fff" stroke="#333" stroke-dasharray="2 1"/><circle cx="9.500" cy="9.500" r="2.600" fill="#9fd8f0" stroke="#558"/><path d="M11.500 11.500l2.500 2.500" stroke="#558" stroke-width="1.500"/></svg>
<svg class="a" style="left:996.9px;top:58.0px" width="7" height="4" viewBox="0 0 7 4"><path d="M0 0h7L3.5 4z" fill="#000"/></svg>
<div class="sep" style="left:1010px;top:48px"></div>
<svg class="a" style="left:1015.3px;top:51.0px" width="16" height="16" viewBox="0 0 16 16"><path d="M1.500 .5h8l4 4v11h-12z" fill="#fff" stroke="#333"/><path d="M9.500 .5v4h4" fill="none" stroke="#333"/><path d="M7.500 3.500v9M3 8h9" stroke="#3aaa3a" stroke-width="1.300"/><path d="M7.500 2.500l-2 2.500h4zM7.500 13.500l-2-2.500h4zM2 8l2.500-2v4zM13 8l-2.500-2v4z" fill="#3aaa3a"/></svg>
<div class="sep" style="left:1039px;top:48px"></div>
<svg class="a" style="left:1045.0px;top:51.0px" width="16" height="16" viewBox="0 0 16 16"><path d="M1 8.500c2.500-4.500 10.500-4.500 13.500 0-3 4-11 4-13.500 0z" fill="#eee" stroke="#444"/><circle cx="8" cy="8" r="3" fill="#333"/><circle cx="9" cy="7" r="1" fill="#aaa"/><path d="M1 7c3-4.500 10.500-4.500 13.500-.5" fill="none" stroke="#222" stroke-width="1.600"/></svg>
<div class="grip" style="left:4px;top:77px"></div>
<svg class="a" style="left:11.0px;top:77.0px" width="16" height="16" viewBox="0 0 16 16"><rect x="1.5" y="5.500" width="10" height="9" fill="#d0d0d0" stroke="#b0b0b0"/><path d="M1.500 8.500h10M1.500 11.500h10M5 5.500v9M8.500 5.500v9" stroke="#9a9a9a"/><path d="M13 .5v7M9.500 4h7M10.500 1.500l5 5M15.500 1.500l-5 5" stroke="#b0b0b0" stroke-width=".8"/></svg>
<div class="sep" style="left:34px;top:74px"></div>
<svg class="a" style="left:40.0px;top:77.0px" width="16" height="16" viewBox="0 0 16 16"><path d="M3 10.500C3.500 5 10 3.500 12.500 8.500c.8 2-1 3.500-2 3.500" fill="none" stroke="#2a2aa8" stroke-width="1.300"/><path d="M.8 6.500l1.800 5.500 4.400-3z" fill="#2a2aa8"/></svg>
<svg class="a" style="left:63.0px;top:77.0px" width="16" height="16" viewBox="0 0 16 16"><g transform="translate(-1,-2.500) scale(.85)"><path d="M3 10.500C3.500 5 10 3.500 12.500 8.500c.8 2-1 3.500-2 3.500" fill="none" stroke="#2a2aa8" stroke-width="1.300"/><path d="M.8 6.500l1.800 5.500 4.400-3z" fill="#2a2aa8"/></g><text x="8" y="15.500" font-family="Liberation Serif,serif" font-weight="bold" font-size="14" fill="#a82020">1</text></svg>
<div class="sep" style="left:86px;top:74px"></div>
<svg class="a" style="left:92.0px;top:77.0px" width="16" height="16" viewBox="0 0 16 16"><path d="M2 1.5l2-1 7 8-1.5 2.2L7 9.5z" fill="none" stroke="#b0b0b0" stroke-width="1.3"/><path d="M9.5 10.7l2 1.8" stroke="#b0b0b0"/><path d="M10 13.500h5M12.500 11v5" stroke="#b0b0b0"/></svg>
<svg class="a" style="left:115.7px;top:77.0px" width="16" height="16" viewBox="0 0 16 16"><path d="M6 1.5a3 3 0 0 0-1.8 5.3l6.8 6.8 2-2L6.3 4.9A3 3 0 0 0 9 2.2L7.3 3.6 5.9 2.2z" fill="none" stroke="#b0b0b0" stroke-width="1.2"/><path d="M0 12.500h5M2.500 10v5" stroke="#b0b0b0"/></svg>
<svg class="a" style="left:137.2px;top:84.0px" width="7" height="4" viewBox="0 0 7 4"><path d="M0 0h7L3.5 4z" fill="#b0b0b0"/></svg>
<div class="sep" style="left:150px;top:74px"></div>
<svg class="a" style="left:155.8px;top:77.0px" width="16" height="16" viewBox="0 0 16 16"><path d="M2 1.5l2-1 7 8-1.5 2.2L7 9.5z" fill="none" stroke="#b0b0b0" stroke-width="1.3"/><path d="M9.5 10.7l2 1.8" stroke="#b0b0b0"/><path d="M2 14.500c3-1.500 6 1 12-.5" stroke="#b0b0b0" fill="none" stroke-width="1.300"/></svg>
<svg class="a" style="left:179.5px;top:77.0px" width="16" height="16" viewBox="0 0 16 16"><path d="M6 1.5a3 3 0 0 0-1.8 5.3l6.8 6.8 2-2L6.3 4.9A3 3 0 0 0 9 2.2L7.3 3.6 5.9 2.2z" fill="none" stroke="#b0b0b0" stroke-width="1.2"/><path d="M0 14.500c2-1.500 4 .5 7-.5" stroke="#b0b0b0" fill="none" stroke-width="1.300"/></svg>
<svg class="a" style="left:201.0px;top:84.0px" width="7" height="4" viewBox="0 0 7 4"><path d="M0 0h7L3.5 4z" fill="#b0b0b0"/></svg>
<div class="sep" style="left:214px;top:74px"></div>
<svg class="a" style="left:220.0px;top:77.0px" width="16" height="16" viewBox="0 0 16 16"><path d="M3 3.500l4 3.500 2-2.500c2-1.500 6 .5 6 4.500s-2.500 6-6 6-5.500-2.500-5.500-5z" fill="#b0b0b0"/><path d="M1.500 1.500l5.500 6" stroke="#b0b0b0" stroke-width="2.500"/></svg>
<svg class="a" style="left:241.8px;top:84.0px" width="7" height="4" viewBox="0 0 7 4"><path d="M0 0h7L3.5 4z" fill="#b0b0b0"/></svg>
<div class="sep" style="left:255px;top:74px"></div>
<svg class="a" style="left:260.8px;top:77.0px" width="16" height="16" viewBox="0 0 16 16"><path d="M2 1.5l2-1 7 8-1.5 2.2L7 9.5z" fill="none" stroke="#b0b0b0" stroke-width="1.3"/><path d="M9.5 10.7l2 1.8" stroke="#b0b0b0"/><text x="6" y="16" font-family="Liberation Serif,serif" font-weight="bold" font-size="11" fill="#b0b0b0">A</text></svg>
<svg class="a" style="left:284.5px;top:77.0px" width="16" height="16" viewBox="0 0 16 16"><path d="M6 1.5a3 3 0 0 0-1.8 5.3l6.8 6.8 2-2L6.3 4.9A3 3 0 0 0 9 2.2L7.3 3.6 5.9 2.2z" fill="none" stroke="#b0b0b0" stroke-width="1.2"/><text x="0" y="16" font-family="Liberation Serif,serif" font-weight="bold" font-size="11" fill="#b0b0b0">A</text></svg>
<svg class="a" style="left:306.0px;top:84.0px" width="7" height="4" viewBox="0 0 7 4"><path d="M0 0h7L3.5 4z" fill="#b0b0b0"/></svg>
<div class="sep" style="left:319px;top:74px"></div>
<svg class="a" style="left:325.0px;top:77.0px" width="16" height="16" viewBox="0 0 16 16"><path d="M.5 .5l5.500 5.500M15.500 .5l-5.500 5.500M.5 15.500l5.500-5.500M15.500 15.500l-5.500-5.500" stroke="#555" stroke-width="2" stroke-dasharray="1 .6"/><path d="M8 4v8M4 8h8" stroke="#000" stroke-width="1.800"/></svg>
<svg class="a" style="left:348.3px;top:77.0px" width="16" height="16" viewBox="0 0 16 16"><circle cx="6.5" cy="6.5" r="4.6" fill="#9ff0f0" stroke="#333" stroke-width="1.3"/><path d="M10 10l4.8 4.8" stroke="#4a4ab8" stroke-width="2.2"/></svg>
<div class="sep" style="left:371px;top:74px"></div>
<svg class="a" style="left:377.0px;top:77.0px" width="16" height="16" viewBox="0 0 16 16"><circle cx="8" cy="8" r="7.500" fill="#b4b4b4"/><path d="M5 5l6 6M11 5l-6 6" stroke="#e8e8e8" stroke-width="2.400"/></svg>
<div class="grip" style="left:403px;top:77px"></div>
<svg class="a" style="left:409.5px;top:77.0px" width="16" height="16" viewBox="0 0 16 16"><path d="M2 5.500l1.500-4h3l.5 4zM9 5.500l.5-4h3l1.500 4z" fill="#333"/><rect x=".5" y="5.500" width="6.500" height="9" rx="1" fill="#333"/><rect x="9" y="5.500" width="6.500" height="9" rx="1" fill="#333"/><rect x="6.500" y="6" width="3" height="4" fill="#333"/><path d="M2 13h3.500M10.500 13h3.500" stroke="#aaa"/></svg>
<svg class="a" style="left:433.0px;top:77.0px" width="16" height="16" viewBox="0 0 16 16"><path d="M4.500 1v12l3-3 2 4.500 1.800-.8-2-4.200h4z" fill="#fff" stroke="#000" stroke-width="1.100"/></svg>
<svg class="a" style="left:456.0px;top:77.0px" width="16" height="16" viewBox="0 0 16 16"><path d="M1 3.500v9c0 1.500 2 2.500 4.500 2.500s4.500-1 4.500-2.500v-9" fill="#e8e8e8" stroke="#333"/><ellipse cx="5.500" cy="3.500" rx="4.500" ry="2.300" fill="#9fe8f0" stroke="#333"/><text x="9.500" y="15.500" font-family="Liberation Sans,sans-serif" font-weight="bold" font-size="11" fill="#a22">?</text></svg>
<div class="grip" style="left:483px;top:77px"></div>
<svg class="a" style="left:488.7px;top:77.0px" width="16" height="16" viewBox="0 0 16 16"><path d="M.5 4l2-2.500 2 2 2-2.500" stroke="#e22" fill="none" stroke-width="1.200"/><path d="M.5 9l2-2.500 2 2 2-2.500" stroke="#2a2" fill="none" stroke-width="1.200"/><path d="M.5 14l2-2.500 2 2 2-2.500" stroke="#22e" fill="none" stroke-width="1.200"/><path d="M8.500 3h7M8.500 8h7M8.500 13h7" stroke="#333" stroke-width="1.600"/></svg>
<div class="a" style="left:509px;top:74px;width:23px;height:22px;background:#dcebfc;border:1px solid #3d9bf5;box-sizing:border-box"></div>
<svg class="a" style="left:512.4px;top:77.0px" width="16" height="16" viewBox="0 0 16 16"><rect x="0.5" y="0.5" width="13" height="11" fill="#fff" stroke="#3a3a9c"/><rect x="0.5" y="0.5" width="13" height="2.6" fill="#3a3a9c"/><circle cx="9" cy="9.500" r="3.300" fill="#9fe0f0" stroke="#222" stroke-width="1.200"/><path d="M11.500 12l3.500 3.500" stroke="#222" stroke-width="2"/></svg>
<div class="sep" style="left:535px;top:74px"></div>
<svg class="a" style="left:540.5px;top:77.0px" width="16" height="16" viewBox="0 0 16 16"><circle cx="8" cy="8" r="7.3" fill="#2a2a90"/><path d="M6.5 7.2h2v4.526M6.2 12.225999999999999h4" stroke="#fff" stroke-width="1.500" fill="none"/><circle cx="8.3" cy="3.9849999999999994" r="1.100" fill="#fff"/></svg>
<svg class="a" style="left:563.7px;top:77.0px" width="16" height="16" viewBox="0 0 16 16"><circle cx="5.5" cy="5.5" r="5.3" fill="#2a2a90"/><path d="M4.0 4.7h2v3.286M3.7 8.485999999999999h4" stroke="#fff" stroke-width="1.500" fill="none"/><circle cx="5.8" cy="2.585" r="1.100" fill="#fff"/><rect x="6.500" y="9.500" width="9" height="6" fill="#f0e850" stroke="#333"/></svg>
<div class="sep" style="left:587px;top:74px"></div>
<svg class="a" style="left:593.0px;top:77.0px" width="16" height="16" viewBox="0 0 16 16"><path d="M.5 .5h9l2 2v12h-11z" fill="#ddd" stroke="#333"/><path d="M2 3.500h7M2 5.500h7M2 7.500h7M2 9.500h5M2 11.500h5" stroke="#333" stroke-width=".9"/><path d="M9 6v8.500l2-2 1.500 3.200 1.400-.6-1.500-3.100h3z" fill="#fff" stroke="#000" stroke-width=".9"/></svg>
<div class="grip" style="left:619px;top:77px"></div>
<svg class="a" style="left:625.5px;top:77.0px" width="16" height="16" viewBox="0 0 16 16"><rect x="0.5" y="1.5" width="13" height="13" fill="#fff" stroke="#3a3a9c"/><rect x="0.5" y="1.5" width="13" height="2.6" fill="#3a3a9c"/><path d="M2.500 7h9M2.500 9.500h9M2.500 12h9" stroke="#222" stroke-width="1.200"/><ellipse cx="7" cy="9.500" rx="4" ry="3.500" fill="none" stroke="#222" stroke-width=".8"/></svg>
<svg class="a" style="left:648.5px;top:77.0px" width="16" height="16" viewBox="0 0 16 16"><rect x=".5" y="1.500" width="13" height="13" fill="#e4e4e4" stroke="#b0b0b0"/><rect x=".5" y="1.500" width="13" height="2.600" fill="#b0b0b0"/><path d="M.5 7.500h13M.5 10.500h13M5 4v10.500M9 4v10.500" stroke="#b0b0b0"/></svg>
<div class="sep" style="left:672px;top:74px"></div>
<svg class="a" style="left:677.0px;top:77.0px" width="16" height="16" viewBox="0 0 16 16"><rect x="0.5" y="0.5" width="9" height="6" fill="#fff" stroke="#3a3a9c"/><rect x="0.5" y="0.5" width="9" height="2.6" fill="#3a3a9c"/><rect x="3" y="4" width="9" height="6" fill="#fff" stroke="#3a3a9c"/><rect x="3" y="4" width="9" height="2.6" fill="#3a3a9c"/><rect x="5.5" y="8" width="9.5" height="7" fill="#fff" stroke="#3a3a9c"/><rect x="5.5" y="8" width="9.5" height="2.6" fill="#3a3a9c"/></svg>
<svg class="a" style="left:700.5px;top:77.0px" width="16" height="16" viewBox="0 0 16 16"><rect x="0.5" y="1.5" width="13" height="6" fill="#fff" stroke="#3a3a9c"/><rect x="0.5" y="1.5" width="13" height="2.6" fill="#3a3a9c"/><rect x="0.5" y="8.5" width="13" height="6" fill="#fff" stroke="#3a3a9c"/><rect x="0.5" y="8.5" width="13" height="2.6" fill="#3a3a9c"/></svg>
<svg class="a" style="left:723.5px;top:77.0px" width="16" height="16" viewBox="0 0 16 16"><rect x="0.5" y="1.5" width="6.5" height="13" fill="#fff" stroke="#3a3a9c"/><rect x="0.5" y="1.5" width="6.5" height="2.6" fill="#3a3a9c"/><rect x="7" y="1.5" width="6.5" height="13" fill="#fff" stroke="#3a3a9c"/><rect x="7" y="1.5" width="6.5" height="2.6" fill="#3a3a9c"/></svg>
<div class="sep" style="left:747px;top:74px"></div>
<svg class="a" style="left:753.0px;top:77.0px" width="16" height="16" viewBox="0 0 16 16"><rect x="5" y="0.5" width="10" height="6" fill="#fff" stroke="#3a9a9a"/><rect x="5" y="0.5" width="10" height="2.6" fill="#3a9a9a"/><rect x="0.5" y="4.5" width="10" height="6" fill="#fff" stroke="#3a9a9a"/><rect x="0.5" y="4.5" width="10" height="2.6" fill="#3a9a9a"/><rect x="6" y="9" width="9.5" height="6.5" fill="#fff" stroke="#3a3a9c"/><rect x="6" y="9" width="9.5" height="2.6" fill="#3a3a9c"/></svg>
<svg class="a" style="left:774.8px;top:84.0px" width="7" height="4" viewBox="0 0 7 4"><path d="M0 0h7L3.5 4z" fill="#000"/></svg>
<div class="grip" style="left:791px;top:77px"></div>
<div class="a" style="left:798px;top:78px;width:32px;height:14px;background:#fff"></div><div class="a" style="left:813.5px;top:84.5px;width:2px;height:2px;background:#000"></div>
<div class="a" style="left:837px;top:78px;width:32px;height:14px;background:#fff"></div><div class="a" style="left:840px;top:85px;width:27px;height:1px;background:#4040d0"></div>
<div class="a" style="left:875px;top:78px;width:33px;height:14px;background:#fff"></div><div class="a" style="left:878px;top:80px;width:28px;height:11px;background:#c8f0c8"></div>
<svg class="a" style="left:1775px;top:5px" width="12" height="8.5" viewBox="0 0 14 10"><path d="M1 5h12M4.500 1.500 1 5l3.500 3.500M9.500 1.500 13 5 9.500 8.500" stroke="#222" stroke-width="1.800" fill="none"/></svg>
<div class="a" style="left:1828px;top:11px;width:8px;height:2px;background:#222"></div>
<svg class="a" style="left:1852px;top:3px" width="12" height="12" viewBox="0 0 12 12"><path d="M3.500 3.500V1.500h7v7h-2" fill="none" stroke="#222"/><rect x="1.500" y="3.500" width="7" height="7" fill="none" stroke="#222"/><path d="M1.500 4.200h7" stroke="#222" stroke-width="1.400"/></svg>
<svg class="a" style="left:1890px;top:5px" width="10" height="9" viewBox="0 0 10 9"><path d="M1 .5l8 8M9 .5l-8 8" stroke="#fff" stroke-width="1.800"/></svg>
<div class="a" style="left:1869px;top:37px;width:6px;height:2px;background:#000"></div>
<svg class="a" style="left:1884px;top:30px" width="11" height="10" viewBox="0 0 11 10"><path d="M3 3V1h7v5.500h-2" fill="none" stroke="#000" stroke-width="1.400"/><rect x="1" y="4" width="7" height="5" fill="none" stroke="#000" stroke-width="1.400"/></svg>
<svg class="a" style="left:1905px;top:30px" width="9" height="9" viewBox="0 0 9 9"><path d="M.8 .8l7.400 7.400M8.200 .8.800 8.200" stroke="#000" stroke-width="1.600"/></svg>
<svg class="a" style="left:4px;top:3px" width="16" height="16" viewBox="0 0 14 16"><path d="M4 0 2.400 4 3.200 4 1.800 7.500 3 7.500 1.500 11h5L5 7.500h1.200L4.800 4h.8z" fill="#1b9a2a" stroke="#0a5a14" stroke-width=".5"/><path d="M4 11v3.500" stroke="#222"/><path d="M3 15l9-3.500" stroke="#888" stroke-width="2"/><path d="M2 15.500l2-.8" stroke="#222" stroke-width="1.500"/></svg>
<svg class="a" style="left:11px;top:26px" width="16" height="16" viewBox="0 0 14 16"><path d="M4 0 2.400 4 3.200 4 1.800 7.500 3 7.500 1.500 11h5L5 7.500h1.200L4.800 4h.8z" fill="#1b9a2a" stroke="#0a5a14" stroke-width=".5"/><path d="M4 11v3.500" stroke="#222"/><path d="M3 15l9-3.500" stroke="#888" stroke-width="2"/><path d="M2 15.500l2-.8" stroke="#222" stroke-width="1.500"/></svg>
<div class="grip" style="left:4px;top:27px"></div>
<svg class="a" style="left:7px;top:119px" width="16" height="16" viewBox="0 0 16 16"><path d="M3.5 1v13M3.5 2.5h4M3.5 13.5h4M8 6.5v3M8 6.5h4M8 9.5h4" stroke="#000" stroke-dasharray="1 1" fill="none"/><rect x="6" y="1" width="3.4" height="3.4" fill="#ff0" stroke="#000"/><rect x="6" y="12" width="3.4" height="3.4" fill="#ff0" stroke="#000"/><rect x="11.5" y="5" width="3" height="3" fill="#fff" stroke="#000"/><rect x="11.5" y="8.4" width="3" height="3" fill="#fff" stroke="#000"/></svg>
<svg class="a" style="left:6px;top:189px" width="16" height="16" viewBox="0 0 16 16"><path d="M4.500 2.500h4l1-1.500h4v1.500h2v9h-11z" fill="#ffff9a" stroke="#7a7a28"/><path d="M1 13l1.500-3.500 6-6 2 2-6 6z" fill="#e8e8c0" stroke="#555"/><path d="M2 15.500h6" stroke="#33a"/></svg>
<svg class="a" style="left:6px;top:271px" width="16" height="16" viewBox="0 0 16 16"><path d="M.5 .5l5.500 5.500M15.500 .5l-5.500 5.500M.5 15.500l5.500-5.500M15.500 15.500l-5.500-5.500" stroke="#555" stroke-width="1.600" stroke-dasharray="1 .6"/><path d="M8 4v8M4 8h8" stroke="#000" stroke-width="1.500"/></svg>
<svg class="a" style="left:6px;top:375px" width="16" height="16" viewBox="0 0 16 16"><path d="M1.500 3l2.500-2 7 7.500-1.500 2.500-3-1z" fill="#f0e050" stroke="#333"/><path d="M1.500 3l2.500-2 1.500 1.500-2.500 2z" fill="#e060c0" stroke="#333"/><path d="M9.500 11l2 2.500M14.500 2v12.500" stroke="#333"/></svg>
<svg class="a" style="left:6px;top:555px" width="16" height="16" viewBox="0 0 16 16"><path d="M1 9c3-5 6 3 9-2 1-2 3-1 5-3" fill="none" stroke="#999" stroke-width="1.200"/><path d="M5 14l5-11M3.500 13.500l9-6" stroke="#aaa" stroke-width="1.200"/></svg>
<svg class="a" style="left:31px;top:1045px" width="30" height="30" viewBox="0 0 30 30"><circle cx="15" cy="15" r="14.500" fill="#fff" opacity=".6"/><path d="M15 15 2.900 8A14 14 0 0 1 27.100 8z" fill="#e03a2e"/><path d="M15 15 27.100 8A14 14 0 0 1 15 29z" fill="#f6c719"/><path d="M15 15 15 29A14 14 0 0 1 2.900 8z" fill="#3aa04a"/><path d="M15 8.500h12" stroke="#e03a2e" stroke-width="3"/><circle cx="15" cy="15" r="6.300" fill="#fff"/><circle cx="15" cy="15" r="5" fill="#4a8df0"/></svg>
<svg class="a" style="left:91px;top:1045px" width="35" height="30" viewBox="0 0 35 30"><path d="M1 4h10l2 3h21v20H1z" fill="#f3d97a" stroke="#c9a93a"/><rect x="5" y="2" width="3" height="2" fill="#e33"/><rect x="10" y="2" width="3" height="2" fill="#3a3"/><rect x="16" y="3" width="3" height="2" fill="#38f"/><path d="M1 10h33v18H1z" fill="#f7e59a" stroke="#c9a93a"/><path d="M7 17h21v11H7z" fill="#5fb3e6"/><path d="M10 20h15v8H10z" fill="#cfeaf8"/><path d="M4 24h27v5H4z" fill="#7cc4ee" opacity=".85"/></svg>
<svg class="a" style="left:154px;top:1044px" width="31" height="31" viewBox="0 0 31 31"><path d="M1 1h26l3 3v26H1z" fill="#2a2acc" stroke="#1a1a80"/><rect x="7" y="1" width="15" height="9" fill="#d8d8e8"/><rect x="16" y="2" width="4" height="7" fill="#2a2acc"/><rect x="4" y="14" width="23" height="16" fill="#fff"/><path d="M5 17.500h21M5 21.500h21M5 25.500h21M5 29h21" stroke="#e33" stroke-width="2"/></svg>
<svg class="a" style="left:215px;top:1044px" width="33" height="32" viewBox="0 0 33 32"><path d="M4 1h22l6 6v20l-5 4H5l-4-4V5z" fill="#c8681c"/><path d="M7 4h16l6 6v14l-4 4H8l-4-4V8z" fill="#f4efe8"/><path d="M9 27c2-8 8-13 19-14v5c-8 0-13 3-15 9z" fill="#e07a20"/><path d="M9 21c3-5 9-9 19-10" stroke="#fff" stroke-width="1.200" fill="none"/><path d="M11 25c3-5 9-8 17-9" stroke="#fff" stroke-width="1.200" fill="none"/></svg>
<svg class="a" style="left:283px;top:1046px" width="30" height="28" viewBox="0 0 30 28"><path d="M6 0 3.500 6 5 6 2.500 12 4.500 12 2 19h8l-2.500-7h2L7 6h1.500z" fill="#22b030" stroke="#0a5a14" stroke-width=".6"/><path d="M4 5l1 1M7 9l-1 1M5 14l1 1M7 16l-1 1" stroke="#ff0" stroke-width="1"/><path d="M6 19v6" stroke="#111" stroke-width="1.500"/><path d="M3 25h6" stroke="#c22" stroke-width="1.500"/><path d="M10 24l16-6" stroke="#b8c8d0" stroke-width="3"/></svg>
<svg class="a" style="left:1698px;top:1053px" width="17" height="17" viewBox="0 0 17 17"><rect x="1" y="0" width="13" height="13" rx="2" fill="#2a86e0"/><circle cx="7.500" cy="6.500" r="5" fill="#fff"/><path d="M3.500 6.500h8M5.500 4.500l-2 2 2 2M9.500 4.500l2 2-2 2" stroke="#2a86e0" stroke-width="1.300" fill="none"/><rect x="8" y="11" width="8" height="5" rx="1" fill="#3c3" stroke="#fff"/></svg>
<svg class="a" style="left:1721px;top:1052px" width="18" height="18" viewBox="0 0 18 18"><path d="M2.500 1v15" stroke="#fff" stroke-width="1.600"/><path d="M3.500 2c3-1.500 5 1.500 8 0v7c-3 1.500-5-1.500-8 0z" fill="#fff"/><circle cx="12" cy="12.500" r="4.800" fill="#d22"/><path d="M10 10.500l4 4M14 10.500l-4 4" stroke="#fff" stroke-width="1.500"/></svg>
<svg class="a" style="left:1746px;top:1054px" width="17" height="15" viewBox="0 0 17 15"><path d="M1 14v-2M4.500 14v-4.500M8 14V7M11.500 14V4M15 14V1" stroke="#fff" stroke-width="2.200"/></svg>
<svg class="a" style="left:1770px;top:1052px" width="18" height="18" viewBox="0 0 18 18"><path d="M1 6.500h3l4.500-4v13l-4.500-4H1z" fill="#fff"/><path d="M10.500 5c1.500 1.500 1.500 6 0 7.500" stroke="#fff" fill="none" stroke-width="1.200"/><circle cx="12.500" cy="12.500" r="4.300" fill="#fff" stroke="#d22" stroke-width="1.800"/><path d="M9.600 9.600l5.800 5.800" stroke="#d22" stroke-width="1.800"/></svg>
<svg class="a" style="left:341px;top:101px" width="1355" height="855" viewBox="341 101 1355 855" shape-rendering="crispEdges" fill="none">
<defs><clipPath id="mc"><polygon points="654.6,102.2 933.5,182.6 828.3,552 826.2,632 731.2,956.3 342,844.5 448.5,456.5 356.2,430.3 409.3,236.6 599.6,291.2"/></clipPath></defs>
<polygon points="654.6,102.2 933.5,182.6 828.3,552 826.2,632 731.2,956.3 342,844.5 448.5,456.5 356.2,430.3 409.3,236.6 599.6,291.2" fill="#c0f8c0"/>
<g clip-path="url(#mc)">
<path d="M655.0 102.5L678.3 109.2L685.8 111.5L703.3 116.0L700.0 123.5L693.3 121.0L686.7 120.2L678.3 118.5L670.0 116.0L661.7 112.7L655.0 108.5Z" fill="#dca860"/>
<path d="M722.4 120.8L725.6 128.0L733.6 132.0L742.0 131.6L747.6 128.4Z" fill="#dca860"/>
<path d="M821.0 149.0L829.5 174.1L835.1 199.1L834.2 203.1L826.0 213.0M835.0 201.0L843.0 208.0M685.0 238.0L676.0 243.0L670.2 248.8L664.9 255.6L657.0 270.1L649.0 291.0M619.0 423.0L619.3 427.4L620.7 431.9L623.0 435.6L625.0 437.0L628.6 437.8L640.0 439.0L646.3 441.1L652.0 444.0L659.9 451.0L663.6 452.5L698.6 455.5L706.8 457.3L715.9 462.3L724.0 469.0M791.0 346.0L797.9 350.6L805.9 353.7L812.0 354.4L815.7 353.5L826.4 347.4L847.0 332.0L858.0 329.0L872.9 321.1L886.0 315.0M858.0 329.0L863.4 334.4L866.0 338.0L867.7 342.5L869.6 351.0M788.0 446.0L797.9 449.2L802.0 449.7L820.6 446.9L824.0 444.6L829.0 437.0L839.4 423.2L843.0 420.3L849.0 417.6M822.4 446.0L831.0 454.4L850.0 466.4M600.0 442.4L612.0 441.2L624.0 439.0L632.0 439.6L640.0 441.0L646.5 443.1L652.0 446.0L657.7 452.8L661.5 454.4L667.1 454.9L694.6 455.3L702.5 456.7L708.3 459.7L724.0 470.0L746.8 478.3L749.0 477.6L751.6 475.3L760.0 464.4L768.5 455.4L781.0 445.6M619.0 424.0L620.0 432.0L623.0 438.4M748.4 478.0L747.0 486.0L748.4 497.0L745.2 508.0L746.4 518.4M748.4 479.0L741.5 487.2L738.0 490.4L734.1 492.5L724.0 496.4L714.0 501.0M472.0 582.0L448.7 615.6L447.8 621.5L448.9 632.0L448.8 638.1L444.0 662.0M448.0 618.0L440.0 614.0L434.0 610.0M444.0 663.0L432.0 670.0L425.7 675.4L422.0 680.0L419.7 686.0L419.0 692.0L419.5 694.1L422.4 700.0L422.0 702.0L419.6 704.5L408.0 712.0L403.8 716.9L401.7 720.4L399.4 725.9L398.6 730.1L397.9 740.4L398.0 748.0M422.0 702.0L435.6 710.6L437.5 711.6L440.0 712.0L445.6 711.2L456.0 708.0L468.0 702.0L478.0 700.0M444.0 663.0L455.6 668.3L464.1 671.3L482.8 675.8L489.0 676.0L492.9 674.0L500.0 668.0L508.0 662.9L512.0 661.3L530.0 658.0L536.0 654.9L540.0 652.0L547.4 645.1L551.3 640.1L560.0 620.0M510.0 662.0L506.0 648.0L495.2 625.6L494.2 621.8L494.2 617.8L495.7 613.5L498.0 610.0L501.6 606.8L506.0 605.0L510.2 604.8L516.0 606.0L518.1 608.6L519.0 611.0M698.0 586.0L689.9 578.8L686.1 577.8L682.1 578.4L678.0 580.0L670.8 584.4L661.0 592.7L654.0 600.0L644.0 612.0L635.7 624.6L617.5 642.6L607.4 651.3L592.0 662.0L570.0 680.0L562.0 690.0L556.8 695.0L554.9 698.9L554.0 708.0L556.1 718.3L555.2 722.0L550.0 726.0L541.6 728.8L540.0 730.0L539.1 731.6L538.0 740.0L538.0 748.0M638.0 624.0L650.0 630.0L660.0 640.0L666.8 644.8L674.1 649.2L684.0 654.0M816.0 574.0L808.0 588.0L792.4 610.4M792.4 610.4L794.5 611.4L797.0 614.0L797.6 615.5L800.0 626.0L802.5 642.2L807.0 658.0M600.0 656.0L622.4 637.4L631.5 628.9L635.4 624.1L640.0 616.0L650.0 602.0L655.6 596.1L670.2 583.1L676.0 580.5L686.0 579.0L690.5 580.1L700.0 586.0M638.0 624.0L648.0 630.0L656.6 638.7L660.0 641.5L680.0 652.0L684.0 655.0M444.0 785.0L445.1 793.3L445.0 798.0L442.3 806.0L438.9 811.7L433.1 818.7L428.3 823.5L419.4 830.6L415.0 835.9L411.3 843.9L406.0 864.0M568.3 285.0L561.7 295.0L555.0 303.3L550.8 310.8M367.5 386.7L381.7 376.7L393.3 373.3L403.3 366.7" stroke="#000" stroke-width="8.5" stroke-linejoin="round"/>
<path d="M606.0 442.4L624.0 440.4M528.0 659.0L529.0 646.0M668.0 574.0L670.0 581.0M666.0 574.0L668.0 580.0" stroke="#000" stroke-width="8.0" stroke-linejoin="round"/>
<path d="M660.0 106.0L678.2 111.3L688.4 115.9L693.0 120.0L694.8 123.5L696.0 127.6L696.9 134.0L696.9 140.3L695.7 146.3L694.0 150.0L689.5 154.6L671.1 167.6L669.0 171.0L668.5 173.0L669.3 181.8L672.3 191.9L674.9 197.8L684.0 212.0L687.3 224.1L690.9 231.7L694.6 236.7L699.8 240.2L706.1 241.9L712.4 241.3L718.0 238.0L719.3 236.4L721.1 232.1L722.0 228.0L720.0 220.0L723.7 220.5L726.1 221.9L728.0 224.0L729.5 228.9L734.0 268.6L736.0 276.0L738.3 279.4L741.2 282.2L747.6 287.2L758.0 294.0L780.0 315.0M780.0 316.0L788.8 322.3L790.6 325.7L791.0 329.6L789.5 337.9L780.9 357.9L775.0 375.9L773.8 385.9L775.0 400.0L778.9 420.0L784.0 440.1L786.0 446.0L802.0 474.0L810.0 486.0L815.1 492.6L817.6 497.9L818.4 504.1L818.0 508.0L817.2 510.1L812.0 518.0L808.0 532.0M804.0 532.0L810.0 544.0L811.5 556.0L815.0 566.1L819.2 574.0L827.0 585.0M356.0 806.0L359.1 779.8L361.0 772.0L363.9 766.2L368.8 759.3L371.9 756.4L375.8 754.4L380.0 754.0L381.9 754.4L402.1 765.1L412.2 769.0L415.7 771.4L422.0 778.0L430.0 782.4L434.0 783.1L442.0 782.0L450.1 783.3L453.7 785.0L458.3 788.9L463.9 792.0L468.0 793.6L472.0 794.1L478.1 792.9L481.8 790.8L488.0 784.0L492.7 775.9L497.0 770.6L503.9 764.6L512.0 760.0L518.1 758.7L522.0 759.0L531.9 764.9L535.7 766.0L538.0 766.0L564.0 758.0L574.3 754.2L578.3 754.3L580.4 755.1L585.4 759.6L589.2 765.8L590.7 772.0L590.4 778.2L589.2 781.9L585.6 786.7L582.2 789.0L575.9 791.1L570.4 794.1L567.2 796.5L565.1 799.7L564.1 803.7L564.3 809.9L571.3 828.1L572.0 832.0L571.8 834.2L570.3 838.2L568.0 842.0L561.3 848.2L560.0 850.0L558.7 853.7L557.9 860.0L558.9 865.9L562.0 874.0L565.2 886.1L566.9 889.9L570.4 895.5L574.0 900.0L578.1 903.2L580.1 904.0L582.0 904.0L583.4 903.2L587.1 898.0L588.5 894.2L590.0 884.0L593.1 878.6L597.7 875.0L603.9 873.3L610.1 872.9L616.0 874.0L619.3 876.0L628.5 884.2L632.0 886.0L635.8 886.0L640.0 885.1L646.1 883.2L652.0 880.4L656.0 880.0L664.0 882.0L676.0 888.0L678.3 888.2L682.1 887.1L685.6 884.7L692.0 878.0L700.0 876.0L703.3 873.4L706.5 870.0L710.3 864.3L713.3 858.0L714.5 854.0L715.0 847.7L716.0 844.0L719.2 840.1L724.0 836.0M600.0 876.0L607.8 875.7L612.0 876.5L620.0 880.0L628.0 885.2L634.0 886.7L640.0 886.0L650.0 880.0L656.1 879.1L660.2 879.5L663.8 881.2L668.3 886.5L674.0 890.4L678.1 891.9L681.8 891.5L685.2 889.0L688.0 886.0L690.7 879.6L692.0 878.0L695.6 876.8L710.4 874.9L713.3 872.5L715.3 868.5L716.0 864.0L711.5 849.7L711.3 845.8L712.0 844.0L714.4 841.3L720.0 838.0L725.9 836.2L730.1 835.8L734.2 836.6L740.2 840.4L746.4 846.6L750.0 852.0L752.6 857.8L754.0 864.0L753.8 868.3L752.0 878.0" stroke="#dca860" stroke-width="10.0" stroke-linecap="round" stroke-linejoin="round"/>
<path d="M821.0 149.0L829.5 174.1L835.1 199.1L834.2 203.1L826.0 213.0M835.0 201.0L843.0 208.0M685.0 238.0L676.0 243.0L670.2 248.8L664.9 255.6L657.0 270.1L649.0 291.0M619.0 423.0L619.3 427.4L620.7 431.9L623.0 435.6L625.0 437.0L628.6 437.8L640.0 439.0L646.3 441.1L652.0 444.0L659.9 451.0L663.6 452.5L698.6 455.5L706.8 457.3L715.9 462.3L724.0 469.0M791.0 346.0L797.9 350.6L805.9 353.7L812.0 354.4L815.7 353.5L826.4 347.4L847.0 332.0L858.0 329.0L872.9 321.1L886.0 315.0M858.0 329.0L863.4 334.4L866.0 338.0L867.7 342.5L869.6 351.0M788.0 446.0L797.9 449.2L802.0 449.7L820.6 446.9L824.0 444.6L829.0 437.0L839.4 423.2L843.0 420.3L849.0 417.6M822.4 446.0L831.0 454.4L850.0 466.4M600.0 442.4L612.0 441.2L624.0 439.0L632.0 439.6L640.0 441.0L646.5 443.1L652.0 446.0L657.7 452.8L661.5 454.4L667.1 454.9L694.6 455.3L702.5 456.7L708.3 459.7L724.0 470.0L746.8 478.3L749.0 477.6L751.6 475.3L760.0 464.4L768.5 455.4L781.0 445.6M619.0 424.0L620.0 432.0L623.0 438.4M748.4 478.0L747.0 486.0L748.4 497.0L745.2 508.0L746.4 518.4M748.4 479.0L741.5 487.2L738.0 490.4L734.1 492.5L724.0 496.4L714.0 501.0M472.0 582.0L448.7 615.6L447.8 621.5L448.9 632.0L448.8 638.1L444.0 662.0M448.0 618.0L440.0 614.0L434.0 610.0M444.0 663.0L432.0 670.0L425.7 675.4L422.0 680.0L419.7 686.0L419.0 692.0L419.5 694.1L422.4 700.0L422.0 702.0L419.6 704.5L408.0 712.0L403.8 716.9L401.7 720.4L399.4 725.9L398.6 730.1L397.9 740.4L398.0 748.0M422.0 702.0L435.6 710.6L437.5 711.6L440.0 712.0L445.6 711.2L456.0 708.0L468.0 702.0L478.0 700.0M444.0 663.0L455.6 668.3L464.1 671.3L482.8 675.8L489.0 676.0L492.9 674.0L500.0 668.0L508.0 662.9L512.0 661.3L530.0 658.0L536.0 654.9L540.0 652.0L547.4 645.1L551.3 640.1L560.0 620.0M510.0 662.0L506.0 648.0L495.2 625.6L494.2 621.8L494.2 617.8L495.7 613.5L498.0 610.0L501.6 606.8L506.0 605.0L510.2 604.8L516.0 606.0L518.1 608.6L519.0 611.0M698.0 586.0L689.9 578.8L686.1 577.8L682.1 578.4L678.0 580.0L670.8 584.4L661.0 592.7L654.0 600.0L644.0 612.0L635.7 624.6L617.5 642.6L607.4 651.3L592.0 662.0L570.0 680.0L562.0 690.0L556.8 695.0L554.9 698.9L554.0 708.0L556.1 718.3L555.2 722.0L550.0 726.0L541.6 728.8L540.0 730.0L539.1 731.6L538.0 740.0L538.0 748.0M638.0 624.0L650.0 630.0L660.0 640.0L666.8 644.8L674.1 649.2L684.0 654.0M816.0 574.0L808.0 588.0L792.4 610.4M792.4 610.4L794.5 611.4L797.0 614.0L797.6 615.5L800.0 626.0L802.5 642.2L807.0 658.0M600.0 656.0L622.4 637.4L631.5 628.9L635.4 624.1L640.0 616.0L650.0 602.0L655.6 596.1L670.2 583.1L676.0 580.5L686.0 579.0L690.5 580.1L700.0 586.0M638.0 624.0L648.0 630.0L656.6 638.7L660.0 641.5L680.0 652.0L684.0 655.0M444.0 785.0L445.1 793.3L445.0 798.0L442.3 806.0L438.9 811.7L433.1 818.7L428.3 823.5L419.4 830.6L415.0 835.9L411.3 843.9L406.0 864.0M568.3 285.0L561.7 295.0L555.0 303.3L550.8 310.8M367.5 386.7L381.7 376.7L393.3 373.3L403.3 366.7" stroke="#dca860" stroke-width="2.6" stroke-dasharray="3 1.6"/>
<path d="M606.0 442.4L624.0 440.4M528.0 659.0L529.0 646.0M668.0 574.0L670.0 581.0M666.0 574.0L668.0 580.0" stroke="#dca860" stroke-width="2.1" stroke-dasharray="3 1.6"/>
<path d="M660.0 106.0L678.2 111.3L688.4 115.9L693.0 120.0L694.8 123.5L696.0 127.6L696.9 134.0L696.9 140.3L695.7 146.3L694.0 150.0L689.5 154.6L671.1 167.6L669.0 171.0L668.5 173.0L669.3 181.8L672.3 191.9L674.9 197.8L684.0 212.0L687.3 224.1L690.9 231.7L694.6 236.7L699.8 240.2L706.1 241.9L712.4 241.3L718.0 238.0L719.3 236.4L721.1 232.1L722.0 228.0L720.0 220.0L723.7 220.5L726.1 221.9L728.0 224.0L729.5 228.9L734.0 268.6L736.0 276.0L738.3 279.4L741.2 282.2L747.6 287.2L758.0 294.0L780.0 315.0M780.0 316.0L788.8 322.3L790.6 325.7L791.0 329.6L789.5 337.9L780.9 357.9L775.0 375.9L773.8 385.9L775.0 400.0L778.9 420.0L784.0 440.1L786.0 446.0L802.0 474.0L810.0 486.0L815.1 492.6L817.6 497.9L818.4 504.1L818.0 508.0L817.2 510.1L812.0 518.0L808.0 532.0M804.0 532.0L810.0 544.0L811.5 556.0L815.0 566.1L819.2 574.0L827.0 585.0M356.0 806.0L359.1 779.8L361.0 772.0L363.9 766.2L368.8 759.3L371.9 756.4L375.8 754.4L380.0 754.0L381.9 754.4L402.1 765.1L412.2 769.0L415.7 771.4L422.0 778.0L430.0 782.4L434.0 783.1L442.0 782.0L450.1 783.3L453.7 785.0L458.3 788.9L463.9 792.0L468.0 793.6L472.0 794.1L478.1 792.9L481.8 790.8L488.0 784.0L492.7 775.9L497.0 770.6L503.9 764.6L512.0 760.0L518.1 758.7L522.0 759.0L531.9 764.9L535.7 766.0L538.0 766.0L564.0 758.0L574.3 754.2L578.3 754.3L580.4 755.1L585.4 759.6L589.2 765.8L590.7 772.0L590.4 778.2L589.2 781.9L585.6 786.7L582.2 789.0L575.9 791.1L570.4 794.1L567.2 796.5L565.1 799.7L564.1 803.7L564.3 809.9L571.3 828.1L572.0 832.0L571.8 834.2L570.3 838.2L568.0 842.0L561.3 848.2L560.0 850.0L558.7 853.7L557.9 860.0L558.9 865.9L562.0 874.0L565.2 886.1L566.9 889.9L570.4 895.5L574.0 900.0L578.1 903.2L580.1 904.0L582.0 904.0L583.4 903.2L587.1 898.0L588.5 894.2L590.0 884.0L593.1 878.6L597.7 875.0L603.9 873.3L610.1 872.9L616.0 874.0L619.3 876.0L628.5 884.2L632.0 886.0L635.8 886.0L640.0 885.1L646.1 883.2L652.0 880.4L656.0 880.0L664.0 882.0L676.0 888.0L678.3 888.2L682.1 887.1L685.6 884.7L692.0 878.0L700.0 876.0L703.3 873.4L706.5 870.0L710.3 864.3L713.3 858.0L714.5 854.0L715.0 847.7L716.0 844.0L719.2 840.1L724.0 836.0M600.0 876.0L607.8 875.7L612.0 876.5L620.0 880.0L628.0 885.2L634.0 886.7L640.0 886.0L650.0 880.0L656.1 879.1L660.2 879.5L663.8 881.2L668.3 886.5L674.0 890.4L678.1 891.9L681.8 891.5L685.2 889.0L688.0 886.0L690.7 879.6L692.0 878.0L695.6 876.8L710.4 874.9L713.3 872.5L715.3 868.5L716.0 864.0L711.5 849.7L711.3 845.8L712.0 844.0L714.4 841.3L720.0 838.0L725.9 836.2L730.1 835.8L734.2 836.6L740.2 840.4L746.4 846.6L750.0 852.0L752.6 857.8L754.0 864.0L753.8 868.3L752.0 878.0" stroke="#50391a" stroke-width="1"/>
<path d="M504.2 264.2L448.5 456.5M599.6 291.2L578.0 364.0L542.0 482.0L528.5 532.0L489.0 679.0L463.0 748.0L428.0 869.0M751.5 130.3L530.0 898.5M837.0 154.8L794.0 316.0L730.5 532.0L674.0 748.0L619.5 923.5M599.6 291.2L879.5 370.5M448.5 456.5L542.0 482.0M395.0 651.6L489.0 679.0L598.0 708.0L684.0 732.0L790.0 757.0M624.0 209.0L728.0 209.6M551.0 532.0L540.0 572.0L537.0 590.0M408.0 780.0L401.0 806.0M688.0 904.0L672.0 932.0M686.0 888.0L678.0 914.0L670.0 938.0" stroke="#000" stroke-width="1"/>
<path d="M440.6 481.6L494.0 483.2L542.0 482.0L636.0 509.0L724.0 531.6L780.0 550.0L826.0 562.0M686.0 111.0L636.0 170.0M780.0 550.0L770.0 588.0L758.0 636.0L748.0 670.0M541.7 275.8L483.3 339.7L416.7 362.0L375.8 357.0" stroke="#000" stroke-width="3"/><path d="M440.6 481.6L494.0 483.2L542.0 482.0L636.0 509.0L724.0 531.6L780.0 550.0L826.0 562.0M686.0 111.0L636.0 170.0M780.0 550.0L770.0 588.0L758.0 636.0L748.0 670.0M541.7 275.8L483.3 339.7L416.7 362.0L375.8 357.0" stroke="#c0f8c0" stroke-width="1"/>
<path d="M848.0 214.0L878.0 244.0M511.0 596.4L532.0 594.0L535.3 592.6L538.0 590.0M516.0 611.0L518.7 616.6L520.0 622.0L517.0 640.0L516.3 658.2L514.8 664.5L512.3 670.9L508.4 679.0L506.0 682.0M576.0 536.0L579.0 549.5L588.1 567.0L595.5 578.0L609.0 592.0L610.0 594.5L609.4 597.9L610.0 600.0L611.0 601.7L612.4 603.7L614.0 605.9L618.8 611.3L620.0 612.0L621.6 611.3L622.9 608.9L624.0 604.0L622.9 602.0L618.2 600.8L616.0 600.8L613.6 600.9L611.5 601.0L610.0 601.0M644.0 668.0L656.7 664.9L660.0 666.0L661.1 668.6L661.7 677.1L660.6 692.5L658.0 704.0L654.6 712.4L654.0 716.0L656.0 719.9L660.0 724.0M382.0 780.0L385.5 790.3L388.0 794.0L389.5 795.1L395.3 797.0L420.0 800.0L434.0 806.0M344.0 828.0L360.0 829.0L368.0 828.0L371.5 825.6L377.6 816.6L380.0 814.0L383.9 812.2L387.7 811.7L395.8 812.7L404.2 815.4L410.4 818.1L420.0 824.0M448.0 836.0L459.0 843.6L465.4 849.6L484.0 878.0M580.0 876.0L592.0 866.0L599.8 861.2L606.0 858.5L610.0 857.8L616.2 858.2L626.2 860.7L631.9 863.3L636.0 864.0L639.6 863.1L652.0 858.0L667.9 857.6L674.0 856.4L692.0 848.0L704.0 844.0M660.0 824.0L652.0 856.0M660.0 824.0L648.0 860.0M600.0 866.0L607.3 858.7L612.0 857.0L617.0 857.7L631.5 862.5L636.0 863.0L641.7 862.6L688.4 852.5L694.5 850.0L704.0 844.0M680.0 808.0L696.0 832.0L699.6 836.2L706.0 842.0" stroke="#000" stroke-width="1"/>
<path d="M398.0 650.0l2.2 -5M400.5 656.0l2.2 -5M399.8 648.6l2.2 -5M402.3 654.6l2.2 -5M401.6 647.3l2.2 -5M404.1 653.3l2.2 -5M403.5 645.9l2.2 -5M406.0 651.9l2.2 -5M405.3 644.5l2.2 -5M407.8 650.5l2.2 -5M407.1 643.2l2.2 -5M409.6 649.2l2.2 -5M408.9 641.8l2.2 -5M411.4 647.8l2.2 -5M410.7 640.5l2.2 -5M413.2 646.5l2.2 -5M412.5 639.1l2.2 -5M415.0 645.1l2.2 -5M414.4 637.7l2.2 -5M416.9 643.7l2.2 -5M416.2 636.4l2.2 -5M418.7 642.4l2.2 -5M418.0 635.0l2.2 -5M420.5 641.0l2.2 -5M419.8 633.6l2.2 -5M422.3 639.6l2.2 -5M421.6 632.3l2.2 -5M424.1 638.3l2.2 -5M423.5 630.9l2.2 -5M426.0 636.9l2.2 -5M425.3 629.5l2.2 -5M427.8 635.5l2.2 -5M427.1 628.2l2.2 -5M429.6 634.2l2.2 -5M428.9 626.8l2.2 -5M431.4 632.8l2.2 -5M430.7 625.5l2.2 -5M433.2 631.5l2.2 -5M432.5 624.1l2.2 -5M435.0 630.1l2.2 -5M434.4 622.7l2.2 -5M436.9 628.7l2.2 -5M436.2 621.4l2.2 -5M438.7 627.4l2.2 -5" stroke="#000" stroke-width="1"/>
<path d="M758.3 135.8L763.3 140.8L772.2 141.8L785.7 147.4L787.5 147.5L790.0 145.0M776.7 145.0L771.7 149.2L770.3 151.3L770.0 153.3L774.2 156.7L776.7 160.0M757.5 150.0L769.2 159.2L774.2 160.8M757.5 150.0L754.8 152.9L752.5 156.9L750.8 163.3L751.7 166.0L753.3 167.5L755.5 167.7L757.5 166.7L759.2 161.7L761.1 162.3L763.3 164.2L766.7 169.2L768.2 170.5L771.7 172.5L777.5 174.2L781.7 180.0L784.2 181.7M784.2 149.2L787.5 151.7L795.0 152.5L803.3 154.6L805.3 154.2L810.0 151.7L813.3 148.3M795.0 155.8L789.7 161.8L787.5 163.3L781.7 165.0L780.3 166.6L780.0 168.3L783.3 171.7L784.0 174.1L784.2 181.7M799.2 155.8L798.3 163.3L795.8 169.2L795.8 176.7L790.0 180.0L788.6 182.0L788.3 184.2L790.8 189.2L791.5 191.9L791.7 194.2L790.0 195.8M739.2 170.8L746.7 171.7L751.7 174.2M732.5 192.5L736.6 197.0L740.2 199.1L761.6 201.8L763.3 201.7L765.5 199.9L766.7 197.5L767.5 192.5L774.2 197.5L793.3 195.8M793.3 200.0L800.8 200.0L803.3 198.3M801.7 173.3L801.7 180.0L805.8 193.3L810.0 194.2L811.7 197.5M805.0 147.5L805.8 157.1L805.0 163.3L803.3 168.3M810.0 151.7L809.1 161.2L810.0 163.3L816.7 164.2L817.5 170.0L821.7 171.7M766.7 201.7L771.7 205.0L780.0 206.7M860.0 284.0L866.0 300.0L869.0 304.0M869.0 282.0L873.0 300.0M458.0 476.0L463.4 477.5L468.0 478.0L478.2 474.4L484.4 474.3L489.8 477.4L493.0 481.3L494.0 483.0L493.9 485.9L493.0 488.0M617.0 425.0L616.0 420.0L617.7 418.5L620.0 418.0L622.4 419.1L624.0 421.0L622.0 425.6M710.0 444.0L714.0 441.0L716.4 442.1L718.0 444.0L717.0 446.2L715.0 448.0L712.9 447.9L711.0 447.0L710.0 444.0M472.0 536.0L475.9 540.7L478.0 542.0L481.6 542.9L490.0 543.0L500.0 540.0M784.0 724.0L786.0 732.0L792.0 738.0M588.0 795.0L592.0 800.0L590.9 802.1L589.0 803.0L587.8 801.4L587.0 799.0L588.0 795.0" stroke="#000" stroke-width="3.0" stroke-linejoin="round"/>
<path d="M746.7 145.0L745.0 153.3L742.5 160.0M817.0 274.0L819.9 277.0L822.0 278.0L825.8 277.4L836.7 273.8L838.0 274.0L835.9 280.2L836.0 282.0L839.4 283.5L846.0 284.0L848.3 282.7L851.0 280.0L850.9 283.9L850.0 286.0L848.6 287.2L846.6 288.0L842.3 287.5L832.0 283.0L820.0 280.0L818.2 278.0L817.0 274.0M818.0 256.0L820.8 262.8L822.0 264.0L823.4 263.2L826.5 259.0L828.0 258.0L829.9 259.6L833.0 264.0L833.6 262.8L834.0 256.0M790.0 292.0L796.8 288.8L798.0 289.0L788.0 308.0M864.0 204.0L864.5 210.1L866.0 214.0L869.9 215.5L876.0 216.0M878.0 186.0L884.0 192.0L884.1 194.2L883.0 198.0M385.0 328.0L394.0 334.0L400.0 332.0L403.1 334.1L406.8 339.7L410.0 350.0L413.8 353.6L416.0 354.0L418.0 353.5L424.0 350.0M428.0 336.0L434.1 336.5L438.0 338.0L439.5 341.9L440.0 348.0M414.0 396.0L416.1 400.1L418.0 402.0L424.0 403.6L428.0 403.0L429.5 401.6L432.9 395.0L434.0 394.0L435.7 394.4L439.2 397.9L440.0 400.0L439.5 404.0L437.5 408.3L436.0 410.0L424.0 414.0L424.3 416.1L428.0 420.0M402.0 410.0L406.9 414.2L408.0 416.0L406.0 424.0L407.3 424.1L414.0 422.0L417.8 422.6L420.0 424.0L425.9 429.3L430.0 434.0L432.2 438.5L434.0 444.0M374.0 424.0L377.6 421.0L380.0 420.0L386.2 420.9L389.5 423.7L391.8 428.1L392.0 430.0L390.8 431.9L388.5 433.3L386.0 434.0L381.9 433.6L378.0 432.0L376.2 430.1L374.0 426.0M444.0 418.0L446.5 424.2L448.0 426.0L452.0 427.3L458.0 428.0M448.0 364.0L451.1 369.7L452.0 374.0L450.9 375.9L444.0 382.0L444.8 382.3L452.0 380.0L458.2 376.7L463.7 372.5L467.8 367.4L468.0 366.0L466.8 364.8L460.0 362.0L459.4 359.9L460.0 356.0M484.0 342.0L490.7 346.6L492.0 348.0L493.8 352.0L494.0 356.0L493.0 358.4L490.0 362.0M596.0 374.0L600.0 370.0L604.0 369.8L608.0 371.0L609.2 372.4L612.0 378.0L616.9 382.1L618.0 384.0L618.0 396.0L619.8 398.1L624.0 400.0M568.0 402.0L570.2 397.0L572.0 396.0L580.0 406.0L582.1 406.2L588.0 404.0L589.4 405.7L590.4 408.3L592.0 410.0L598.1 409.2L606.0 406.0M630.0 340.0L636.0 338.0L640.0 335.0L643.8 333.4L656.0 330.0L660.0 326.0M706.0 344.0L720.0 346.0L722.9 345.1L724.0 344.0M456.0 490.0L460.0 500.0L468.0 506.0L472.0 514.0M468.0 492.0L473.8 493.9L476.0 494.0L484.0 490.0M434.0 510.0L444.0 514.0M588.0 472.0L592.0 468.0L594.2 466.7L599.3 464.3L600.0 465.0L589.9 478.6L588.0 482.0L587.4 486.8L589.0 494.0M660.0 512.0L665.5 514.0L668.0 514.0L675.9 509.4L680.0 508.0L682.0 508.4L692.0 514.0L694.3 513.5L698.2 510.5L700.0 510.0L701.8 510.9L706.0 516.0M536.0 516.0L542.0 522.0L540.0 514.0M602.0 370.0L608.0 372.5L610.0 374.0L612.7 377.6L616.0 384.0L619.0 394.0L622.0 400.0M850.0 378.0L851.4 380.0L854.0 382.0L855.6 382.3L874.0 381.0M856.0 366.0L858.0 372.0L854.0 376.0M782.0 398.0L790.0 396.0L794.7 397.0L796.0 398.0L794.0 402.0M757.0 402.0L760.0 399.0L761.9 401.2L763.0 404.0L760.0 406.0M660.0 510.0L668.0 513.0L672.0 510.0L678.0 513.5L680.0 514.0L681.6 512.9L684.4 508.9L686.0 508.0L687.5 508.6L692.4 513.3L694.0 514.0L696.1 513.3L702.0 509.0L703.8 510.1L706.0 514.0M774.0 516.0L778.2 521.1L780.0 522.0L781.8 521.7L788.0 518.0L800.0 516.0M720.0 334.0L724.0 338.0L725.9 341.9L726.0 344.0L725.0 346.2L722.0 350.0M740.0 354.0L754.0 352.0M712.0 362.0L715.0 356.0L720.0 352.0M438.0 542.0L439.7 540.2L442.0 539.0L445.9 542.0L447.0 544.0L446.5 546.1L444.0 550.0M464.0 556.0L466.1 560.4L468.0 562.0L472.0 561.7L478.0 560.0M422.0 574.0L428.0 582.0L426.4 583.5L424.0 584.0M519.0 586.0L526.0 589.0L535.0 588.0M530.0 544.0L540.0 552.0L542.0 556.0M393.0 704.0L398.0 710.0L400.0 718.0M400.0 680.0L404.0 690.0L403.7 692.5L402.0 696.0M594.0 718.0L600.0 726.0L602.0 734.0M684.0 552.0L686.0 564.0L690.0 570.0M680.0 724.0L684.0 732.0M768.0 603.0L780.0 600.0L788.0 602.0L790.5 600.1L792.0 598.0M784.0 640.0L784.2 648.4L785.0 652.0L787.1 652.9L792.0 652.0M762.0 644.0L766.0 647.0L765.4 649.9L764.0 652.0L762.3 650.6L761.0 648.0L762.0 644.0M764.0 656.0L767.3 659.9L768.0 662.0L762.0 666.0L762.7 668.1L766.0 672.0M728.0 676.0L734.1 671.0L740.2 668.6L746.0 668.0L747.6 669.9L748.0 672.0M720.0 702.0L726.1 704.0L728.0 704.0L729.9 702.6L731.4 700.3L732.0 698.0L731.1 695.8L728.0 692.0M724.0 684.0L728.0 680.0L736.0 681.0M796.0 672.0L797.5 674.2L800.0 676.0L814.0 669.0M732.0 724.0L737.8 727.3L742.1 728.0L748.0 726.0L752.0 722.0M734.0 736.0L744.0 739.0M678.0 732.0L681.9 727.6L684.0 724.0L684.0 721.8L682.0 716.0M786.0 572.0L791.1 576.4L792.0 578.0L791.3 580.2L788.0 584.0M714.0 540.0L717.6 545.8L718.0 548.0L716.0 551.6L712.0 556.0M680.0 558.0L681.8 564.1L684.0 568.0L688.0 569.5L694.0 570.0M752.0 590.0L757.1 594.4L758.0 596.0L757.5 598.3L754.0 602.0L751.9 601.9L748.0 600.0M424.0 792.0L432.0 794.0L433.5 792.1L434.0 790.0M646.0 774.0L649.0 780.8L650.0 782.0L651.0 781.0L652.0 776.0L650.2 773.5L648.0 772.0L646.0 774.0M688.0 786.0L690.2 792.8L692.0 796.0L693.1 795.1L696.0 788.0M506.0 852.0L514.0 851.0M518.0 888.0L524.0 890.0M648.0 920.0L654.0 926.0L656.2 925.9L660.0 924.0M600.0 898.0L605.8 895.7L608.0 896.0L611.0 898.8L616.0 906.0M646.0 774.0L648.7 778.7L650.0 780.0L651.0 778.7L652.0 774.0L650.2 772.5L648.0 772.0L646.0 774.0M688.0 784.0L690.8 789.7L692.0 794.0L691.3 796.4L688.0 802.0L689.5 802.0L694.0 800.0M686.0 788.0L694.0 786.0M764.0 796.0L770.0 798.0L772.0 795.0M748.0 766.0L756.0 768.0L757.5 766.1L758.0 764.0M728.0 862.0L736.0 866.0L744.0 864.0L746.5 865.9L748.0 868.0M774.0 750.0L784.0 752.0L785.6 750.1L786.0 748.0M712.0 916.0L720.0 920.0L719.5 922.2L718.0 924.0M399.2 293.3L395.8 297.9L395.0 300.1L395.0 302.5L397.3 307.8L405.0 318.3L407.4 319.8L413.3 320.0M420.0 286.7L424.2 288.3L426.7 290.0L431.8 298.7L435.4 300.9L443.2 302.2L446.7 301.7L446.9 300.1L443.3 293.3M384.2 328.3L396.7 335.0M485.0 341.7L491.7 351.7L492.5 356.1L492.5 361.7M460.0 358.3L466.7 365.0L473.3 365.0L463.3 371.7L456.7 378.3L446.7 380.0L444.6 381.5L440.0 386.7M596.7 370.0L602.4 368.5L606.7 368.3L611.5 371.5L613.2 373.5L613.3 375.0L607.3 376.5L600.0 376.7L597.5 375.1L596.7 373.3M613.3 386.7L620.0 393.3L623.3 400.0M510.0 275.0L511.0 277.2L513.3 278.3L523.3 270.0M495.0 295.8L510.0 296.7M509.7 886.6L508.4 884.5L508.6 882.0M508.6 882.0L502.8 879.3L499.0 880.8L490.3 876.4M515.4 820.4L515.3 824.4L513.9 828.2M510.6 849.3L507.4 850.6L504.0 850.1M376.0 744.2L378.1 746.5M394.2 773.1L391.8 772.2L389.9 770.6M831.5 423.7L834.9 417.9L835.4 414.6L834.6 410.9L835.5 407.7L837.3 404.9M825.8 393.4L834.1 393.6M605.3 524.0L603.3 523.6L600.0 524.6M404.5 842.8L407.6 842.4M615.0 919.0L613.7 915.8L609.9 914.7L606.9 912.9L606.4 908.8M542.9 858.9L545.7 856.3M706.6 905.9L704.5 907.2L701.1 907.6L698.7 909.6M462.8 800.6L469.4 803.2L473.0 803.1M404.7 785.5L402.7 782.3L397.8 781.9L397.5 777.1L394.4 774.9M687.6 544.6L689.7 548.5L693.1 551.3M690.3 537.5L693.8 537.1L697.1 535.6M702.8 551.1L693.1 551.3M707.9 512.1L697.8 511.4M739.8 518.1L739.2 511.6L739.8 508.4M865.6 386.0L868.7 387.4L871.2 390.0L873.4 389.4M550.7 384.3L552.4 384.9L555.7 383.4L558.9 383.5M547.8 379.4L546.4 378.0L545.4 375.0M558.3 403.6L561.1 411.5M801.3 212.8L803.4 216.6M818.6 227.4L818.3 223.4L816.9 220.6M837.7 211.9L833.4 210.9L833.2 210.4M858.0 241.7L866.1 239.9M843.9 382.2L847.1 383.2L849.5 385.8L852.8 386.5M837.3 404.9L840.7 404.9M782.1 396.0L788.0 399.9M682.9 361.4L674.1 360.5M674.5 350.8L674.1 360.5M608.4 704.4L606.6 701.5L605.9 698.3M567.0 528.8L564.3 526.2L564.0 524.3M353.4 820.3L354.7 823.4L354.7 826.5L352.8 829.8L353.1 830.8M626.7 864.4L626.2 860.7L626.7 857.5M596.3 892.7L596.0 896.6L598.0 901.2M550.2 829.6L558.5 832.2M438.5 759.3L432.4 755.5L428.7 755.1L425.4 753.9M430.5 791.8L425.3 791.3M419.2 785.2L417.7 786.4L414.4 786.4L411.6 787.6M737.6 727.3L741.5 727.7L744.3 724.5L747.6 722.9L751.5 723.3M740.1 752.4L741.1 749.1L740.2 745.3L743.2 742.5L743.6 739.1M752.1 719.8L751.5 723.3M756.9 754.5L760.1 755.2L761.2 759.2L764.6 759.6L767.2 761.2M710.3 831.3L706.1 829.1M706.1 829.1L701.6 829.2M660.5 839.9L660.5 836.5L661.7 833.6L665.0 831.4L665.0 828.1M686.3 833.8L687.7 831.5L687.5 827.5L689.2 824.1M589.8 727.9L592.8 725.9L597.3 724.2M713.2 551.5L716.1 549.9M724.1 561.9L724.3 553.3M797.1 587.3L799.5 585.4L802.9 584.6L804.5 581.5L806.9 579.6M723.3 507.2L720.8 510.3L717.0 510.8L713.7 512.2M709.1 511.2L707.5 507.4L708.1 503.4L707.2 499.5M643.2 502.0L647.1 498.1M579.4 494.0L581.8 491.7L584.9 490.6M630.7 492.2L626.6 492.8M643.2 502.0L636.2 500.8M617.5 472.9L621.5 474.9M717.8 575.5L714.7 573.2L710.3 572.6L707.9 569.2M691.9 605.6L691.8 602.2L688.3 599.6L690.3 595.8L688.9 592.7M647.7 668.5L648.0 664.9L646.8 661.5M661.2 667.0L656.7 662.6L656.0 660.3M627.1 598.7L627.9 594.4M613.9 580.7L615.9 579.9L619.1 579.9M621.8 577.9L619.1 579.7M611.5 611.5L608.2 610.9L604.4 612.7L601.7 608.4L594.8 608.2M735.3 550.1L737.2 552.9L737.4 556.3M738.5 579.4L734.7 579.5M724.3 553.3L729.4 549.3M490.8 435.0L494.3 434.6L497.2 432.6M453.2 408.7L454.1 411.7L456.7 413.9L457.4 417.0M442.1 431.0L438.8 428.6L437.8 424.3L434.5 421.9M434.7 411.5L434.4 415.0L435.9 418.5L434.5 421.9M434.5 421.9L430.8 420.9L423.1 420.5M416.7 441.1L419.2 438.1L418.6 433.7L421.6 431.0M420.8 375.5L419.1 378.8L418.8 383.1L414.5 384.7L412.7 388.0M391.1 378.2L392.1 381.4M419.3 396.2L429.4 399.4M430.3 406.5L429.4 399.4M452.1 399.0L449.0 397.8L447.5 393.8L443.2 394.6L440.8 392.3M405.8 353.3L407.2 348.0M405.8 344.9L404.6 343.7L404.9 337.3L406.0 334.1M592.0 314.1L584.3 310.6M530.8 353.3L527.2 352.1L525.8 353.5M656.5 390.7L659.7 390.4L663.0 391.6L666.1 390.4M626.2 371.3L622.9 369.9M692.7 384.3L680.8 389.6M692.7 384.3L689.4 381.6L687.0 378.1M678.0 386.7L680.8 389.6M677.4 380.3L684.0 379.9L687.0 378.1M682.9 361.4L684.3 365.0L683.5 368.7M621.4 287.4L623.5 287.0L625.5 287.7M634.9 280.5L628.8 281.9M706.1 174.9L704.9 168.9M881.4 273.2L882.5 276.0L880.6 279.7L880.9 283.0L883.1 285.7L882.9 289.0L884.1 292.0L886.4 294.7L886.7 297.8M853.7 247.9L853.5 246.8L857.1 245.1M857.4 244.8L858.0 241.7M823.7 252.0L820.6 257.3L817.0 258.5L815.2 261.0L815.7 265.1L813.3 267.1M829.0 252.2L823.7 252.0M663.6 134.8L661.2 132.2L657.9 130.6L655.4 128.1M554.0 449.2L552.5 452.3L549.6 453.8M561.1 411.5L559.5 414.6L555.6 414.9L553.7 417.5M600.7 598.0L599.1 594.8L601.2 590.7L597.8 587.9L597.4 584.4M571.4 620.1L575.4 619.8L579.1 617.6L583.2 618.6M571.4 620.1L570.6 615.6L570.9 611.1M579.2 604.8L570.9 611.1M529.2 591.3L531.8 593.2L535.1 592.4L541.2 592.9L543.9 594.4M611.1 653.8L608.9 656.8L609.1 657.3M609.8 663.0L608.4 667.1M611.5 673.8L609.0 680.6M481.8 491.2L483.9 488.7L483.0 485.2L483.5 482.2L485.6 479.8M428.6 589.9L424.5 589.5L421.8 586.4L418.4 584.8M550.0 782.1L546.5 780.8L542.7 780.5L536.1 777.0M466.0 784.7L468.1 781.1L471.4 780.2M540.7 656.5L539.4 659.8L538.2 660.9M569.7 701.5L568.9 698.2L571.6 695.7L572.5 692.8L572.8 686.7M592.9 846.0L589.9 844.5L588.2 841.3L585.1 839.9M596.8 855.5L597.5 854.1L593.9 848.9L592.9 846.0M600.9 823.0L602.2 826.6L604.5 830.1M706.1 829.1L706.6 819.1L705.1 815.8L704.8 812.5M728.3 927.7L718.6 922.9M718.6 922.9L716.9 920.3L716.8 918.1M523.8 577.6L523.3 570.7L521.6 567.3L524.8 560.4L523.3 557.0M484.3 733.9L484.3 740.2M484.3 740.2L480.8 742.8M491.5 723.9L487.0 728.3L486.7 731.8L484.3 733.9M435.9 804.5L436.3 808.1L435.7 809.2M411.6 787.6L411.5 792.1L412.2 796.5M420.0 799.7L417.0 800.2M412.2 796.5L415.1 797.7L417.0 800.2M390.3 786.2L381.5 786.7M364.5 796.6L366.0 794.8L367.1 791.4M762.7 767.6L754.5 767.5M691.7 819.7L695.7 814.6M749.1 686.9L752.7 687.6M755.0 790.4L754.5 787.5L755.3 784.4L754.0 781.5M763.6 778.8L754.8 780.1M703.8 541.6L713.4 537.9M706.3 637.3L707.4 634.3L710.7 632.3M683.3 658.9L677.5 661.2L674.0 660.5L670.8 661.7M678.3 601.3L675.3 602.8L671.6 603.3L671.0 608.2L664.8 610.8M792.3 575.9L786.4 570.0M661.0 276.3L657.2 280.1M648.3 294.9L650.1 295.6L651.5 298.9L654.3 300.4M628.0 219.1L625.0 222.1L624.1 226.3M627.9 232.7L625.0 230.1L624.1 226.3M626.7 237.4L623.9 239.6L620.4 240.7M553.7 417.5L549.7 416.1L545.6 416.7M545.6 416.7L540.8 421.1M573.2 316.3L572.0 311.9M572.0 311.9L569.9 308.5L562.9 305.5M539.7 314.0L542.1 315.9L543.0 323.0L550.0 325.1M540.1 290.1L544.7 295.1L548.0 296.5M526.3 318.8L528.5 316.0L531.4 313.9M688.8 433.1L688.7 436.8L691.3 443.6M637.2 364.8L633.4 365.0L630.3 362.9L627.9 362.2M683.5 368.7L680.0 369.8L677.3 372.3M676.5 379.3L677.3 372.3M674.5 350.8L672.3 348.5M673.5 361.1L670.6 359.9L664.3 359.8L661.4 358.6M708.7 177.6L706.1 174.9M708.7 177.6L709.6 187.6M704.3 193.3L709.6 187.6M828.6 188.2L824.4 187.9L818.0 186.1L816.5 187.5M812.8 160.0L818.4 159.0M811.1 372.5L811.0 375.6L809.7 378.4M555.9 601.0L559.5 601.2L563.1 600.4M555.9 601.0L554.5 603.8L553.8 607.3M567.2 595.7L563.1 600.4M529.3 585.4L532.8 584.3L536.4 584.5L539.9 583.5M525.2 578.2L528.9 577.7L531.1 574.4L534.4 573.2M534.4 573.2L537.7 573.1L540.5 575.4L543.9 575.6M539.9 583.5L542.5 579.9L543.9 575.6M550.6 595.0L553.6 597.7L555.9 601.0M608.4 667.1L605.2 668.8L601.3 668.1L597.9 669.5M607.3 681.0L605.2 678.5L601.6 678.6L596.3 675.4M596.3 675.4L592.7 676.2L590.1 678.7M587.4 686.7L589.3 689.1M533.1 557.0L535.9 555.0L537.4 551.5L543.1 547.6M582.8 572.9L586.2 573.0L589.6 574.2L593.1 573.1M579.0 547.0L582.2 553.1L581.7 556.8L583.0 559.9M449.1 589.6L449.8 585.8M645.1 832.5L642.4 832.7L639.1 834.1L636.2 832.5M650.6 821.4L647.5 821.8L644.4 821.4L641.5 822.8L638.5 823.2M629.5 825.5L634.8 827.7M700.3 936.4L700.4 932.5L702.1 929.0M711.3 942.2L714.1 940.5M401.2 814.9L401.5 807.5M790.9 667.6L783.7 661.0M802.3 656.7L800.4 655.5L800.0 651.9L797.8 649.8L796.5 646.9L793.8 645.2M695.4 495.5L691.9 496.0L689.3 499.5L685.2 497.6L682.1 499.2M695.6 507.7L686.6 508.3M686.6 508.3L686.0 505.1L683.2 503.1L681.9 500.2M633.0 693.2L634.5 695.9L634.7 699.0M639.1 702.5L642.1 701.1L645.5 701.6L648.6 700.8M648.6 700.8L650.7 693.2L651.0 689.3M620.9 709.1L623.6 707.1L624.9 703.0L629.5 703.5L634.7 699.0M659.1 723.2L660.4 726.5L663.1 729.0M699.3 372.3L705.0 374.7M621.4 287.4L620.3 283.8L618.4 280.6M614.6 262.4L615.3 266.2L617.3 269.6M602.8 284.5L605.1 286.2L607.0 290.0L611.8 289.6L614.1 292.7M628.2 261.4L625.9 258.5L620.4 253.6M528.2 419.6L527.5 426.5L527.7 430.0M531.9 417.2L534.5 419.3L537.9 419.6L540.8 421.1M523.6 432.2L522.3 436.4L523.4 440.7M509.3 419.5L516.9 422.2M518.1 408.2L513.3 408.0M498.9 410.5L502.5 411.0L505.9 410.0L509.2 408.3L512.8 408.4M518.0 429.8L521.0 430.7L523.6 432.2M634.0 342.6L631.5 340.1L630.2 336.8L628.1 334.0M672.7 344.2L671.7 340.9L669.6 338.2M672.7 344.2L677.8 341.4M711.1 162.6L704.9 168.9M711.1 162.6L710.8 159.6L711.8 156.6M694.2 245.8L695.4 248.9L693.0 252.5L694.0 256.0M705.3 273.3L696.9 269.4L693.1 271.7L690.5 269.9M710.5 200.3L715.5 199.0M736.2 221.5L741.6 217.9L745.3 217.9L750.3 213.5M760.9 218.5L757.4 216.8L753.5 216.0L750.3 213.5M727.3 163.0L729.0 160.9L729.7 158.3M727.3 163.0L727.6 166.7L730.1 169.6L730.6 173.2M730.6 173.2L734.9 174.1L739.2 173.1M734.4 289.7L727.8 287.6L726.3 288.5M636.5 171.1L639.7 169.7L643.5 169.7L645.3 165.4L649.0 165.3M465.7 498.5L468.4 502.2M551.9 580.7L554.1 581.9L556.6 581.6M556.6 581.6L565.3 576.9M519.3 468.1L522.2 470.4L526.1 468.8L532.4 471.7M525.7 498.0L529.2 496.4L531.4 488.7L535.6 487.7L538.0 485.0M530.4 480.0L533.2 481.3L538.0 485.0M485.7 769.6L482.3 768.0M672.4 778.3L667.8 781.5M667.8 781.5L668.6 785.0L668.0 788.5M668.0 788.5L674.0 792.9M660.8 777.4L664.1 779.9L667.8 781.5M707.5 809.3L701.0 805.7L700.3 801.2L697.1 799.4M728.7 679.7L725.4 677.6M731.8 690.4L731.5 686.6L728.9 683.5L728.7 679.7M741.9 667.8L745.8 665.9L750.2 665.6M788.9 612.3L789.3 616.1L786.9 618.3M792.6 602.8L785.9 598.8M738.5 579.4L745.8 585.0M745.7 593.5L743.0 594.9L741.0 597.2M674.9 701.1L667.7 700.7L664.1 699.8M681.7 694.4L678.6 692.5L675.1 686.5M674.9 714.9L675.8 711.4L674.1 704.5L674.9 701.1M740.8 390.8L738.6 390.0L734.9 391.3L732.3 389.3M661.6 223.1L662.2 226.7M663.5 219.4L667.1 220.8L670.8 219.9L678.2 220.0M643.5 263.6L646.4 261.4L651.1 255.8M628.2 261.4L631.2 259.7L637.7 257.7M478.1 401.1L478.7 404.5M483.4 409.8L481.4 406.9L478.7 404.5M510.3 402.3L513.3 408.0M500.7 368.0L498.2 370.2L493.7 367.2L487.3 370.7M718.4 190.5L722.8 179.6M715.5 199.0L718.1 195.4L718.5 191.0M735.9 187.4L731.0 187.0M458.4 498.4L453.3 493.1L450.4 490.9M443.6 532.4L442.6 536.2L438.4 537.4L435.6 539.8L434.4 543.4L432.2 546.3M555.4 565.4L560.1 569.2L560.3 573.1L565.4 576.6M450.1 462.5L450.3 465.6L453.5 468.0L453.3 480.6L455.2 483.3M546.3 484.6L548.6 486.7L552.3 486.7L554.3 489.3L559.3 493.0M473.9 749.2L476.1 749.8L478.2 749.2M471.4 774.0L469.1 771.2L469.0 767.3L466.8 764.5M697.4 797.5L693.6 796.1L687.7 791.0M767.7 607.6L766.5 605.7L767.6 601.5M737.4 623.9L744.7 624.6M454.3 379.6L451.6 381.3L448.6 382.1L445.2 380.8L439.5 382.9M438.1 380.2L439.5 382.9M455.2 362.6L453.3 369.8M465.7 366.6L466.1 371.2L464.0 375.2M455.7 362.2L462.7 364.3L465.7 366.6M727.2 398.4L723.7 399.7L720.1 398.4L716.5 398.5M716.5 398.5L715.5 395.4L715.5 391.9L713.3 389.3M700.5 785.9L703.0 783.4L709.0 779.5M712.8 798.2L711.7 794.4M707.8 774.7L708.8 777.0L709.0 779.5M761.9 617.6L754.1 608.4M768.7 595.0L763.5 591.1M763.5 591.1L762.4 586.2M762.4 586.2L762.7 583.9L764.0 582.0M696.3 429.9L698.9 433.4L699.5 437.7M714.0 440.2L707.5 435.7M688.8 433.1L696.3 429.9" stroke="#000" stroke-width="2.4" stroke-linejoin="round"/>
<path d="M728.0 211.6L740.0 204.0L752.0 201.6M732.0 276.0L744.0 280.0L748.6 279.5L754.0 278.0M650.0 736.0L660.0 740.0L668.0 748.0" stroke="#000" stroke-width="4.0" stroke-linejoin="round"/>
<path d="M663 120h2v2h-2zm7 2h2v2h-2zm-3 1h2v2h-2zm7 0h2v2h-2zm4 1h2v2h-2zm8 0h2v2h-2zm-4 2h2v2h-2zm-17 1h2v2h-2zm19 2h2v2h-2zm-20 2h2v2h-2zm61 0h2v2h-2zm-39 2h2v2h-2zm36 1h2v2h-2zm-58 1h2v2h-2zm77 0h2v2h-2zm-54 2h2v2h-2zm52 1h2v2h-2zm-76 1h2v2h-2zm60 0h2v2h-2zm32 0h2v2h-2zm-33 1h2v2h-2zm52 0h2v2h-2zm-87 1h2v2h-2zm51 1h2v2h-2zm-77 1h2v2h-2zm65 0h2v2h-2zm27 0h2v2h-2zm37 0h2v2h-2zm-104 2h2v2h-2zm64 0h2v2h-2zm-97 1h2v2h-2zm104 0h2v2h-2zm-108 1h2v2h-2zm8 0h2v2h-2zm2 0h2v2h-2zm1 0h2v2h-2zm65 0h2v2h-2zm45 0h2v2h-2zm-64 1h2v2h-2zm41 0h2v2h-2zm-106 1h2v2h-2zm23 0h2v2h-2zm-18 1h2v2h-2zm151 0h2v2h-2zm2 0h2v2h-2zm-140 1h2v2h-2zm65 0h2v2h-2zm21 0h2v2h-2zm14 0h2v2h-2zm12 0h2v2h-2zm19 0h2v2h-2zm4 0h2v2h-2zm-150 1h2v2h-2zm64 0h2v2h-2zm12 1h2v2h-2zm52 0h2v2h-2zm-47 1h2v2h-2zm62 0h2v2h-2zm13 0h2v2h-2zm-140 1h2v2h-2zm50 0h2v2h-2zm6 0h2v2h-2zm60 0h2v2h-2zm-131 1h2v2h-2zm67 0h2v2h-2zm-8 1h2v2h-2zm24 0h2v2h-2zm4 0h2v2h-2zm8 0h2v2h-2zm23 0h2v2h-2zm2 0h2v2h-2zm14 0h2v2h-2zm6 0h2v2h-2zm15 0h2v2h-2zm18 0h2v2h-2zm-155 1h2v2h-2zm73 0h2v2h-2zm33 0h2v2h-2zm72 0h2v2h-2zm-174 1h2v2h-2zm114 0h2v2h-2zm29 0h2v2h-2zm35 0h2v2h-2zm-198 1h2v2h-2zm113 0h2v2h-2zm13 0h2v2h-2zm7 0h2v2h-2zm23 0h2v2h-2zm15 0h2v2h-2zm31 0h2v2h-2zm-110 1h2v2h-2zm56 0h2v2h-2zm12 0h2v2h-2zm26 0h2v2h-2zm3 0h2v2h-2zm7 0h2v2h-2zm-49 1h2v2h-2zm19 0h2v2h-2zm35 0h2v2h-2zm-159 1h2v2h-2zm23 0h2v2h-2zm64 0h2v2h-2zm12 0h2v2h-2zm42 0h2v2h-2zm-182 1h2v2h-2zm41 0h2v2h-2zm70 0h2v2h-2zm39 0h2v2h-2zm21 0h2v2h-2zm31 0h2v2h-2zm-110 1h2v2h-2zm41 0h2v2h-2zm17 0h2v2h-2zm7 0h2v2h-2zm30 0h2v2h-2zm23 0h2v2h-2zm4 0h2v2h-2zm4 0h2v2h-2zm-181 1h2v2h-2zm8 0h2v2h-2zm3 0h2v2h-2zm3 0h2v2h-2zm80 0h2v2h-2zm2 0h2v2h-2zm12 0h2v2h-2zm21 0h2v2h-2zm34 0h2v2h-2zm22 0h2v2h-2zm4 0h2v2h-2zm-112 1h2v2h-2zm22 0h2v2h-2zm36 0h2v2h-2zm35 0h2v2h-2zm-152 1h2v2h-2zm63 0h2v2h-2zm34 0h2v2h-2zm22 0h2v2h-2zm29 0h2v2h-2zm-112 1h2v2h-2zm31 0h2v2h-2zm33 0h2v2h-2zm2 0h2v2h-2zm30 0h2v2h-2zm-55 1h2v2h-2zm7 0h2v2h-2zm5 0h2v2h-2zm23 0h2v2h-2zm7 0h2v2h-2zm26 0h2v2h-2zm5 0h2v2h-2zm-79 1h2v2h-2zm93 0h2v2h-2zm4 0h2v2h-2zm5 0h2v2h-2zm4 0h2v2h-2zm8 0h2v2h-2zm-97 1h2v2h-2zm10 0h2v2h-2zm50 0h2v2h-2zm12 0h2v2h-2zm5 0h2v2h-2zm5 0h2v2h-2zm4 0h2v2h-2zm4 0h2v2h-2zm3 0h2v2h-2zm1 0h2v2h-2zm-107 1h2v2h-2zm56 0h2v2h-2zm25 0h2v2h-2zm5 0h2v2h-2zm15 0h2v2h-2zm4 0h2v2h-2zm-92 1h2v2h-2zm14 0h2v2h-2zm10 0h2v2h-2zm7 0h2v2h-2zm25 0h2v2h-2zm19 0h2v2h-2zm4 0h2v2h-2zm4 0h2v2h-2zm13 0h2v2h-2zm-151 1h2v2h-2zm85 0h2v2h-2zm31 0h2v2h-2zm9 0h2v2h-2zm1 0h2v2h-2zm-138 1h2v2h-2zm55 0h2v2h-2zm22 0h2v2h-2zm16 0h2v2h-2zm40 0h2v2h-2zm2 0h2v2h-2zm-150 1h2v2h-2zm4 0h2v2h-2zm121 0h2v2h-2zm55 0h2v2h-2zm-172 1h2v2h-2zm5 0h2v2h-2zm68 0h2v2h-2zm15 0h2v2h-2zm10 0h2v2h-2zm31 0h2v2h-2zm3 0h2v2h-2zm9 0h2v2h-2zm-171 1h2v2h-2zm1 0h2v2h-2zm4 0h2v2h-2zm29 0h2v2h-2zm133 0h2v2h-2zm2 0h2v2h-2zm-127 1h2v2h-2zm72 0h2v2h-2zm21 0h2v2h-2zm31 0h2v2h-2zm1 0h2v2h-2zm30 0h2v2h-2zm-188 1h2v2h-2zm139 0h2v2h-2zm8 0h2v2h-2zm37 0h2v2h-2zm8 0h2v2h-2zm9 0h2v2h-2zm4 0h2v2h-2zm-111 1h2v2h-2zm15 0h2v2h-2zm10 0h2v2h-2zm39 0h2v2h-2zm35 0h2v2h-2zm3 0h2v2h-2zm1 0h2v2h-2zm-208 1h2v2h-2zm14 0h2v2h-2zm177 0h2v2h-2zm13 0h2v2h-2zm7 0h2v2h-2zm-96 1h2v2h-2zm40 0h2v2h-2zm45 0h2v2h-2zm-48 1h2v2h-2zm35 0h2v2h-2zm5 0h2v2h-2zm4 0h2v2h-2zm6 0h2v2h-2zm13 0h2v2h-2zm-94 1h2v2h-2zm49 0h2v2h-2zm13 0h2v2h-2zm3 0h2v2h-2zm1 0h2v2h-2zm1 0h2v2h-2zm2 0h2v2h-2zm4 0h2v2h-2zm4 0h2v2h-2zm36 0h2v2h-2zm-235 1h2v2h-2zm14 0h2v2h-2zm3 0h2v2h-2zm89 0h2v2h-2zm25 0h2v2h-2zm41 0h2v2h-2zm4 0h2v2h-2zm3 0h2v2h-2zm1 0h2v2h-2zm3 0h2v2h-2zm48 0h2v2h-2zm8 0h2v2h-2zm-125 1h2v2h-2zm7 0h2v2h-2zm42 0h2v2h-2zm7 0h2v2h-2zm21 0h2v2h-2zm-73 1h2v2h-2zm37 0h2v2h-2zm4 0h2v2h-2zm28 0h2v2h-2zm30 0h2v2h-2zm11 0h2v2h-2zm-232 1h2v2h-2zm107 0h2v2h-2zm12 0h2v2h-2zm7 0h2v2h-2zm53 0h2v2h-2zm4 0h2v2h-2zm4 0h2v2h-2zm4 0h2v2h-2zm8 0h2v2h-2zm-196 1h2v2h-2zm19 0h2v2h-2zm64 0h2v2h-2zm25 0h2v2h-2zm4 0h2v2h-2zm20 0h2v2h-2zm39 0h2v2h-2zm70 0h2v2h-2zm-16 1h2v2h-2zm-139 1h2v2h-2zm3 0h2v2h-2zm19 0h2v2h-2zm62 0h2v2h-2zm16 0h2v2h-2zm13 0h2v2h-2zm19 0h2v2h-2zm-197 1h2v2h-2zm104 0h2v2h-2zm97 0h2v2h-2zm10 0h2v2h-2zm-232 1h2v2h-2zm131 0h2v2h-2zm91 0h2v2h-2zm-36 1h2v2h-2zm35 0h2v2h-2zm19 0h2v2h-2zm-216 1h2v2h-2zm104 0h2v2h-2zm43 0h2v2h-2zm28 0h2v2h-2zm-116 1h2v2h-2zm3 0h2v2h-2zm22 0h2v2h-2zm19 0h2v2h-2zm47 0h2v2h-2zm21 0h2v2h-2zm23 0h2v2h-2zm-216 1h2v2h-2zm31 0h2v2h-2zm29 0h2v2h-2zm109 0h2v2h-2zm4 0h2v2h-2zm3 0h2v2h-2zm4 0h2v2h-2zm5 0h2v2h-2zm2 0h2v2h-2zm2 0h2v2h-2zm-219 1h2v2h-2zm55 0h2v2h-2zm160 0h2v2h-2zm4 0h2v2h-2zm4 0h2v2h-2zm25 0h2v2h-2zm19 0h2v2h-2zm-203 1h2v2h-2zm50 0h2v2h-2zm43 0h2v2h-2zm4 0h2v2h-2zm49 0h2v2h-2zm11 0h2v2h-2zm-85 1h2v2h-2zm110 0h2v2h-2zm-214 1h2v2h-2zm60 0h2v2h-2zm111 0h2v2h-2zm19 0h2v2h-2zm2 0h2v2h-2zm-212 1h2v2h-2zm43 0h2v2h-2zm109 0h2v2h-2zm4 0h2v2h-2zm35 0h2v2h-2zm45 0h2v2h-2zm18 0h2v2h-2zm-258 1h2v2h-2zm27 0h2v2h-2zm31 0h2v2h-2zm7 0h2v2h-2zm40 0h2v2h-2zm94 0h2v2h-2zm12 0h2v2h-2zm-213 1h2v2h-2zm45 0h2v2h-2zm84 0h2v2h-2zm92 0h2v2h-2zm19 0h2v2h-2zm-250 1h2v2h-2zm43 0h2v2h-2zm4 0h2v2h-2zm4 0h2v2h-2zm46 0h2v2h-2zm118 0h2v2h-2zm5 0h2v2h-2zm-232 1h2v2h-2zm88 0h2v2h-2zm62 0h2v2h-2zm131 0h2v2h-2zm-220 1h2v2h-2zm18 0h2v2h-2zm51 0h2v2h-2zm1 0h2v2h-2zm132 0h2v2h-2zm-241 1h2v2h-2zm49 0h2v2h-2zm4 0h2v2h-2zm60 0h2v2h-2zm5 0h2v2h-2zm7 0h2v2h-2zm98 0h2v2h-2zm17 0h2v2h-2zm-205 1h2v2h-2zm32 0h2v2h-2zm21 0h2v2h-2zm34 0h2v2h-2zm55 0h2v2h-2zm32 0h2v2h-2zm-230 1h2v2h-2zm127 0h2v2h-2zm16 0h2v2h-2zm51 0h2v2h-2zm8 0h2v2h-2zm77 0h2v2h-2zm-295 1h2v2h-2zm87 0h2v2h-2zm176 0h2v2h-2zm15 0h2v2h-2zm-241 1h2v2h-2zm169 0h2v2h-2zm16 0h2v2h-2zm26 0h2v2h-2zm28 0h2v2h-2zm-262 1h2v2h-2zm93 0h2v2h-2zm33 0h2v2h-2zm126 0h2v2h-2zm-107 1h2v2h-2zm19 0h2v2h-2zm1 0h2v2h-2zm24 0h2v2h-2zm90 0h2v2h-2zm-291 1h2v2h-2zm36 0h2v2h-2zm32 0h2v2h-2zm67 0h2v2h-2zm46 0h2v2h-2zm42 0h2v2h-2zm14 0h2v2h-2zm39 0h2v2h-2zm-96 1h2v2h-2zm5 0h2v2h-2zm62 0h2v2h-2zm21 0h2v2h-2zm4 0h2v2h-2zm-262 1h2v2h-2zm179 0h2v2h-2zm8 0h2v2h-2zm-187 1h2v2h-2zm145 0h2v2h-2zm41 0h2v2h-2zm30 0h2v2h-2zm22 0h2v2h-2zm11 0h2v2h-2zm31 0h2v2h-2zm-276 1h2v2h-2zm4 0h2v2h-2zm17 0h2v2h-2zm141 0h2v2h-2zm96 0h2v2h-2zm5 0h2v2h-2zm-256 1h2v2h-2zm52 0h2v2h-2zm174 0h2v2h-2zm5 0h2v2h-2zm3 0h2v2h-2zm8 0h2v2h-2zm-107 1h2v2h-2zm73 0h2v2h-2zm38 0h2v2h-2zm21 0h2v2h-2zm-140 1h2v2h-2zm4 0h2v2h-2zm41 0h2v2h-2zm74 0h2v2h-2zm-241 1h2v2h-2zm118 0h2v2h-2zm12 0h2v2h-2zm19 0h2v2h-2zm96 0h2v2h-2zm1 0h2v2h-2zm6 0h2v2h-2zm-257 1h2v2h-2zm15 0h2v2h-2zm4 0h2v2h-2zm90 0h2v2h-2zm6 0h2v2h-2zm24 0h2v2h-2zm71 0h2v2h-2zm16 0h2v2h-2zm-212 1h2v2h-2zm102 0h2v2h-2zm3 0h2v2h-2zm52 0h2v2h-2zm93 0h2v2h-2zm-276 1h2v2h-2zm155 0h2v2h-2zm117 0h2v2h-2zm-238 1h2v2h-2zm4 0h2v2h-2zm89 0h2v2h-2zm38 0h2v2h-2zm56 0h2v2h-2zm15 0h2v2h-2zm-240 1h2v2h-2zm15 0h2v2h-2zm213 0h2v2h-2zm29 0h2v2h-2zm-229 1h2v2h-2zm100 0h2v2h-2zm34 0h2v2h-2zm-166 1h2v2h-2zm128 0h2v2h-2zm60 0h2v2h-2zm2 0h2v2h-2zm52 0h2v2h-2zm-162 1h2v2h-2zm30 0h2v2h-2zm59 0h2v2h-2zm4 0h2v2h-2zm56 0h2v2h-2zm-230 1h2v2h-2zm130 0h2v2h-2zm96 0h2v2h-2zm14 0h2v2h-2zm-219 1h2v2h-2zm153 0h2v2h-2zm4 0h2v2h-2zm8 0h2v2h-2zm36 0h2v2h-2zm3 0h2v2h-2zm-210 1h2v2h-2zm112 0h2v2h-2zm51 0h2v2h-2zm4 0h2v2h-2zm9 0h2v2h-2zm-190 1h2v2h-2zm126 0h2v2h-2zm92 0h2v2h-2zm-34 1h2v2h-2zm42 0h2v2h-2zm12 0h2v2h-2zm-234 1h2v2h-2zm8 0h2v2h-2zm10 0h2v2h-2zm102 0h2v2h-2zm24 0h2v2h-2zm91 0h2v2h-2zm40 0h2v2h-2zm4 0h2v2h-2zm-93 1h2v2h-2zm25 0h2v2h-2zm14 0h2v2h-2zm46 0h2v2h-2zm-268 1h2v2h-2zm173 0h2v2h-2zm89 0h2v2h-2zm2 0h2v2h-2zm-262 1h2v2h-2zm175 0h2v2h-2zm57 0h2v2h-2zm44 0h2v2h-2zm-276 1h2v2h-2zm14 0h2v2h-2zm98 0h2v2h-2zm91 0h2v2h-2zm20 0h2v2h-2zm-46 1h2v2h-2zm4 0h2v2h-2zm46 0h2v2h-2zm31 0h2v2h-2zm-236 1h2v2h-2zm176 0h2v2h-2zm-89 1h2v2h-2zm65 0h2v2h-2zm6 0h2v2h-2zm39 0h2v2h-2zm16 0h2v2h-2zm40 0h2v2h-2zm-280 1h2v2h-2zm4 0h2v2h-2zm81 0h2v2h-2zm122 0h2v2h-2zm28 0h2v2h-2zm11 0h2v2h-2zm4 0h2v2h-2zm10 0h2v2h-2zm-263 1h2v2h-2zm11 0h2v2h-2zm23 0h2v2h-2zm158 0h2v2h-2zm32 0h2v2h-2zm21 0h2v2h-2zm-230 1h2v2h-2zm4 0h2v2h-2zm61 0h2v2h-2zm111 0h2v2h-2zm4 0h2v2h-2zm46 0h2v2h-2zm16 0h2v2h-2zm-261 1h2v2h-2zm95 0h2v2h-2zm22 0h2v2h-2zm2 0h2v2h-2zm32 0h2v2h-2zm34 0h2v2h-2zm27 0h2v2h-2zm74 0h2v2h-2zm-290 1h2v2h-2zm103 0h2v2h-2zm99 0h2v2h-2zm5 0h2v2h-2zm5 0h2v2h-2zm17 0h2v2h-2zm-177 1h2v2h-2zm123 0h2v2h-2zm33 0h2v2h-2zm5 0h2v2h-2zm-127 1h2v2h-2zm181 0h2v2h-2zm-215 1h2v2h-2zm71 0h2v2h-2zm166 0h2v2h-2zm-449 1h2v2h-2zm234 0h2v2h-2zm7 0h2v2h-2zm108 0h2v2h-2zm37 0h2v2h-2zm-390 1h2v2h-2zm9 0h2v2h-2zm210 0h2v2h-2zm23 0h2v2h-2zm9 0h2v2h-2zm124 0h2v2h-2zm58 0h2v2h-2zm-434 1h2v2h-2zm14 0h2v2h-2zm7 0h2v2h-2zm203 1h2v2h-2zm63 0h2v2h-2zm2 0h2v2h-2zm100 0h2v2h-2zm1 0h2v2h-2zm62 0h2v2h-2zm-497 1h2v2h-2zm59 0h2v2h-2zm3 0h2v2h-2zm181 0h2v2h-2zm156 0h2v2h-2zm25 0h2v2h-2zm7 0h2v2h-2zm-131 1h2v2h-2zm13 0h2v2h-2zm165 0h2v2h-2zm-483 1h2v2h-2zm50 0h2v2h-2zm20 0h2v2h-2zm206 0h2v2h-2zm62 0h2v2h-2zm91 0h2v2h-2zm52 0h2v2h-2zm-141 1h2v2h-2zm100 0h2v2h-2zm61 0h2v2h-2zm-433 1h2v2h-2zm240 0h2v2h-2zm1 0h2v2h-2zm8 0h2v2h-2zm20 0h2v2h-2zm67 0h2v2h-2zm-91 1h2v2h-2zm114 0h2v2h-2zm56 0h2v2h-2zm-432 1h2v2h-2zm18 0h2v2h-2zm167 0h2v2h-2zm45 0h2v2h-2zm58 0h2v2h-2zm3 0h2v2h-2zm138 0h2v2h-2zm-173 1h2v2h-2zm12 0h2v2h-2zm88 0h2v2h-2zm35 0h2v2h-2zm58 0h2v2h-2zm-433 1h2v2h-2zm336 0h2v2h-2zm11 0h2v2h-2zm10 0h2v2h-2zm-412 1h2v2h-2zm55 0h2v2h-2zm236 0h2v2h-2zm33 0h2v2h-2zm10 0h2v2h-2zm137 0h2v2h-2zm-431 1h2v2h-2zm159 0h2v2h-2zm1 0h2v2h-2zm22 0h2v2h-2zm60 0h2v2h-2zm56 0h2v2h-2zm41 0h2v2h-2zm31 0h2v2h-2zm-358 1h2v2h-2zm152 0h2v2h-2zm171 0h2v2h-2zm22 0h2v2h-2zm10 0h2v2h-2zm6 0h2v2h-2zm18 0h2v2h-2zm55 0h2v2h-2zm-453 1h2v2h-2zm11 0h2v2h-2zm152 0h2v2h-2zm28 0h2v2h-2zm64 0h2v2h-2zm50 0h2v2h-2zm4 0h2v2h-2zm41 0h2v2h-2zm8 0h2v2h-2zm12 0h2v2h-2zm-402 1h2v2h-2zm23 0h2v2h-2zm5 0h2v2h-2zm8 0h2v2h-2zm4 0h2v2h-2zm7 0h2v2h-2zm6 0h2v2h-2zm151 0h2v2h-2zm82 0h2v2h-2zm84 0h2v2h-2zm28 0h2v2h-2zm64 0h2v2h-2zm9 0h2v2h-2zm-452 1h2v2h-2zm25 0h2v2h-2zm300 0h2v2h-2zm30 0h2v2h-2zm93 0h2v2h-2zm8 0h2v2h-2zm-431 1h2v2h-2zm149 0h2v2h-2zm32 0h2v2h-2zm68 0h2v2h-2zm43 0h2v2h-2zm31 0h2v2h-2zm18 0h2v2h-2zm28 0h2v2h-2zm16 0h2v2h-2zm3 0h2v2h-2zm-243 1h2v2h-2zm159 0h2v2h-2zm23 0h2v2h-2zm18 0h2v2h-2zm70 0h2v2h-2zm-468 1h2v2h-2zm8 0h2v2h-2zm18 0h2v2h-2zm36 0h2v2h-2zm149 0h2v2h-2zm86 0h2v2h-2zm44 0h2v2h-2zm35 0h2v2h-2zm8 0h2v2h-2zm38 0h2v2h-2zm22 0h2v2h-2zm37 0h2v2h-2zm-477 1h2v2h-2zm52 0h2v2h-2zm1 0h2v2h-2zm36 0h2v2h-2zm38 0h2v2h-2zm64 0h2v2h-2zm58 0h2v2h-2zm107 0h2v2h-2zm12 0h2v2h-2zm63 0h2v2h-2zm29 0h2v2h-2zm-403 1h2v2h-2zm142 0h2v2h-2zm86 0h2v2h-2zm50 0h2v2h-2zm109 0h2v2h-2zm12 0h2v2h-2zm31 0h2v2h-2zm-483 1h2v2h-2zm16 0h2v2h-2zm41 0h2v2h-2zm3 0h2v2h-2zm37 0h2v2h-2zm5 0h2v2h-2zm4 0h2v2h-2zm4 0h2v2h-2zm4 0h2v2h-2zm77 0h2v2h-2zm8 0h2v2h-2zm1 0h2v2h-2zm48 0h2v2h-2zm44 0h2v2h-2zm64 0h2v2h-2zm4 0h2v2h-2zm18 0h2v2h-2zm34 0h2v2h-2zm32 0h2v2h-2zm4 0h2v2h-2zm27 0h2v2h-2zm-461 1h2v2h-2zm36 0h2v2h-2zm5 0h2v2h-2zm38 0h2v2h-2zm25 0h2v2h-2zm99 0h2v2h-2zm180 0h2v2h-2zm24 0h2v2h-2zm6 0h2v2h-2zm52 0h2v2h-2zm-441 1h2v2h-2zm47 0h2v2h-2zm136 0h2v2h-2zm174 0h2v2h-2zm-395 1h2v2h-2zm2 0h2v2h-2zm8 0h2v2h-2zm79 0h2v2h-2zm33 0h2v2h-2zm88 0h2v2h-2zm171 0h2v2h-2zm20 0h2v2h-2zm-395 1h2v2h-2zm11 0h2v2h-2zm71 0h2v2h-2zm204 0h2v2h-2zm65 0h2v2h-2zm34 0h2v2h-2zm19 0h2v2h-2zm20 0h2v2h-2zm-378 1h2v2h-2zm172 0h2v2h-2zm160 0h2v2h-2zm22 0h2v2h-2zm13 0h2v2h-2zm-422 1h2v2h-2zm58 0h2v2h-2zm19 0h2v2h-2zm10 0h2v2h-2zm184 0h2v2h-2zm120 0h2v2h-2zm15 0h2v2h-2zm-281 1h2v2h-2zm86 0h2v2h-2zm85 0h2v2h-2zm-208 1h2v2h-2zm50 0h2v2h-2zm221 0h2v2h-2zm60 0h2v2h-2zm11 0h2v2h-2zm-432 1h2v2h-2zm22 0h2v2h-2zm34 0h2v2h-2zm151 0h2v2h-2zm253 0h2v2h-2zm-464 1h2v2h-2zm63 0h2v2h-2zm29 0h2v2h-2zm102 0h2v2h-2zm93 0h2v2h-2zm24 0h2v2h-2zm132 0h2v2h-2zm-387 1h2v2h-2zm37 0h2v2h-2zm35 0h2v2h-2zm2 0h2v2h-2zm38 0h2v2h-2zm8 0h2v2h-2zm248 0h2v2h-2zm29 0h2v2h-2zm-425 1h2v2h-2zm117 0h2v2h-2zm19 0h2v2h-2zm8 0h2v2h-2zm36 0h2v2h-2zm156 0h2v2h-2zm-367 1h2v2h-2zm91 0h2v2h-2zm59 0h2v2h-2zm145 0h2v2h-2zm70 0h2v2h-2zm94 0h2v2h-2zm4 0h2v2h-2zm-467 1h2v2h-2zm60 0h2v2h-2zm9 0h2v2h-2zm63 0h2v2h-2zm17 0h2v2h-2zm46 0h2v2h-2zm46 0h2v2h-2zm54 0h2v2h-2zm8 0h2v2h-2zm2 0h2v2h-2zm-309 1h2v2h-2zm173 0h2v2h-2zm123 0h2v2h-2zm41 0h2v2h-2zm99 0h2v2h-2zm-395 1h2v2h-2zm59 0h2v2h-2zm3 0h2v2h-2zm71 0h2v2h-2zm67 0h2v2h-2zm28 0h2v2h-2zm59 0h2v2h-2zm78 0h2v2h-2zm-344 1h2v2h-2zm8 0h2v2h-2zm63 0h2v2h-2zm18 0h2v2h-2zm18 0h2v2h-2zm29 0h2v2h-2zm39 0h2v2h-2zm93 0h2v2h-2zm144 0h2v2h-2zm-408 1h2v2h-2zm199 0h2v2h-2zm169 0h2v2h-2zm-304 1h2v2h-2zm46 0h2v2h-2zm29 0h2v2h-2zm12 0h2v2h-2zm41 0h2v2h-2zm3 0h2v2h-2zm58 0h2v2h-2zm-276 1h2v2h-2zm23 0h2v2h-2zm34 0h2v2h-2zm2 0h2v2h-2zm52 0h2v2h-2zm55 0h2v2h-2zm143 0h2v2h-2zm124 0h2v2h-2zm-411 1h2v2h-2zm135 0h2v2h-2zm1 0h2v2h-2zm12 0h2v2h-2zm7 0h2v2h-2zm260 0h2v2h-2zm-410 1h2v2h-2zm24 0h2v2h-2zm33 0h2v2h-2zm2 0h2v2h-2zm62 0h2v2h-2zm205 0h2v2h-2zm88 0h2v2h-2zm-439 1h2v2h-2zm23 0h2v2h-2zm31 0h2v2h-2zm79 0h2v2h-2zm16 0h2v2h-2zm4 0h2v2h-2zm19 0h2v2h-2zm63 0h2v2h-2zm71 0h2v2h-2zm42 0h2v2h-2zm8 0h2v2h-2zm30 0h2v2h-2zm3 0h2v2h-2zm10 0h2v2h-2zm-371 1h2v2h-2zm20 0h2v2h-2zm9 0h2v2h-2zm121 0h2v2h-2zm126 0h2v2h-2zm1 0h2v2h-2zm104 0h2v2h-2zm-357 1h2v2h-2zm26 0h2v2h-2zm55 0h2v2h-2zm20 0h2v2h-2zm150 0h2v2h-2zm34 0h2v2h-2zm1 0h2v2h-2zm3 0h2v2h-2zm4 0h2v2h-2zm15 0h2v2h-2zm18 0h2v2h-2zm4 0h2v2h-2zm15 0h2v2h-2zm17 0h2v2h-2zm-388 1h2v2h-2zm57 0h2v2h-2zm59 0h2v2h-2zm33 0h2v2h-2zm63 0h2v2h-2zm71 0h2v2h-2zm83 0h2v2h-2zm-394 1h2v2h-2zm5 0h2v2h-2zm50 0h2v2h-2zm6 0h2v2h-2zm16 0h2v2h-2zm295 0h2v2h-2zm4 0h2v2h-2zm23 0h2v2h-2zm-395 1h2v2h-2zm29 0h2v2h-2zm100 0h2v2h-2zm21 0h2v2h-2zm24 0h2v2h-2zm3 0h2v2h-2zm121 0h2v2h-2zm96 0h2v2h-2zm1 0h2v2h-2zm-403 1h2v2h-2zm69 0h2v2h-2zm8 0h2v2h-2zm16 0h2v2h-2zm154 0h2v2h-2zm3 0h2v2h-2zm67 0h2v2h-2zm51 0h2v2h-2zm4 0h2v2h-2zm31 0h2v2h-2zm-369 1h2v2h-2zm27 0h2v2h-2zm12 0h2v2h-2zm74 0h2v2h-2zm-137 1h2v2h-2zm97 0h2v2h-2zm12 0h2v2h-2zm69 0h2v2h-2zm19 0h2v2h-2zm4 0h2v2h-2zm4 0h2v2h-2zm22 0h2v2h-2zm20 0h2v2h-2zm114 0h2v2h-2zm-334 1h2v2h-2zm98 0h2v2h-2zm21 0h2v2h-2zm47 0h2v2h-2zm32 0h2v2h-2zm4 0h2v2h-2zm14 0h2v2h-2zm151 0h2v2h-2zm-450 1h2v2h-2zm45 0h2v2h-2zm75 0h2v2h-2zm20 0h2v2h-2zm30 0h2v2h-2zm95 0h2v2h-2zm41 0h2v2h-2zm57 0h2v2h-2zm-359 1h2v2h-2zm77 0h2v2h-2zm28 0h2v2h-2zm15 0h2v2h-2zm16 0h2v2h-2zm5 0h2v2h-2zm6 0h2v2h-2zm94 0h2v2h-2zm102 0h2v2h-2zm-306 1h2v2h-2zm14 0h2v2h-2zm64 0h2v2h-2zm4 0h2v2h-2zm112 0h2v2h-2zm44 0h2v2h-2zm7 0h2v2h-2zm22 0h2v2h-2zm43 0h2v2h-2zm15 0h2v2h-2zm50 0h2v2h-2zm53 0h2v2h-2zm-461 1h2v2h-2zm74 0h2v2h-2zm27 0h2v2h-2zm2 0h2v2h-2zm17 0h2v2h-2zm73 0h2v2h-2zm66 0h2v2h-2zm8 0h2v2h-2zm3 0h2v2h-2zm173 0h2v2h-2zm31 0h2v2h-2zm-442 1h2v2h-2zm75 0h2v2h-2zm18 0h2v2h-2zm140 0h2v2h-2zm-262 1h2v2h-2zm70 0h2v2h-2zm45 0h2v2h-2zm11 0h2v2h-2zm4 0h2v2h-2zm100 0h2v2h-2zm2 0h2v2h-2zm45 0h2v2h-2zm59 0h2v2h-2zm-309 1h2v2h-2zm15 0h2v2h-2zm77 0h2v2h-2zm3 0h2v2h-2zm1 0h2v2h-2zm2 0h2v2h-2zm9 0h2v2h-2zm90 0h2v2h-2zm2 0h2v2h-2zm73 0h2v2h-2zm106 0h2v2h-2zm-383 1h2v2h-2zm7 0h2v2h-2zm41 0h2v2h-2zm29 0h2v2h-2zm17 0h2v2h-2zm4 0h2v2h-2zm4 0h2v2h-2zm14 0h2v2h-2zm51 0h2v2h-2zm143 0h2v2h-2zm109 0h2v2h-2zm-423 1h2v2h-2zm95 0h2v2h-2zm15 0h2v2h-2zm14 0h2v2h-2zm115 0h2v2h-2zm5 0h2v2h-2zm62 0h2v2h-2zm4 0h2v2h-2zm3 0h2v2h-2zm-330 1h2v2h-2zm67 0h2v2h-2zm64 0h2v2h-2zm99 0h2v2h-2zm46 0h2v2h-2zm45 0h2v2h-2zm-281 1h2v2h-2zm105 0h2v2h-2zm78 0h2v2h-2zm54 0h2v2h-2zm57 0h2v2h-2zm69 0h2v2h-2zm-374 1h2v2h-2zm38 0h2v2h-2zm29 0h2v2h-2zm17 0h2v2h-2zm27 0h2v2h-2zm47 0h2v2h-2zm94 0h2v2h-2zm4 0h2v2h-2zm4 0h2v2h-2zm12 0h2v2h-2zm105 0h2v2h-2zm4 0h2v2h-2zm4 0h2v2h-2zm-416 1h2v2h-2zm146 0h2v2h-2zm5 0h2v2h-2zm107 0h2v2h-2zm6 0h2v2h-2zm140 0h2v2h-2zm-336 1h2v2h-2zm164 0h2v2h-2zm33 0h2v2h-2zm4 0h2v2h-2zm34 0h2v2h-2zm4 0h2v2h-2zm15 0h2v2h-2zm17 0h2v2h-2zm61 0h2v2h-2zm20 0h2v2h-2zm-402 1h2v2h-2zm15 0h2v2h-2zm10 0h2v2h-2zm24 0h2v2h-2zm82 0h2v2h-2zm11 0h2v2h-2zm27 0h2v2h-2zm36 0h2v2h-2zm51 0h2v2h-2zm1 0h2v2h-2zm23 0h2v2h-2zm57 0h2v2h-2zm26 0h2v2h-2zm43 0h2v2h-2zm-439 1h2v2h-2zm12 0h2v2h-2zm17 0h2v2h-2zm8 0h2v2h-2zm15 0h2v2h-2zm60 0h2v2h-2zm20 0h2v2h-2zm36 0h2v2h-2zm5 0h2v2h-2zm122 0h2v2h-2zm4 0h2v2h-2zm4 0h2v2h-2zm23 0h2v2h-2zm31 0h2v2h-2zm38 0h2v2h-2zm1 0h2v2h-2zm28 0h2v2h-2zm-399 1h2v2h-2zm16 0h2v2h-2zm40 0h2v2h-2zm123 0h2v2h-2zm69 0h2v2h-2zm20 0h2v2h-2zm14 0h2v2h-2zm2 0h2v2h-2zm48 0h2v2h-2zm15 0h2v2h-2zm19 0h2v2h-2zm-387 1h2v2h-2zm4 0h2v2h-2zm33 0h2v2h-2zm19 0h2v2h-2zm112 0h2v2h-2zm5 0h2v2h-2zm40 0h2v2h-2zm31 0h2v2h-2zm63 0h2v2h-2zm18 0h2v2h-2zm9 0h2v2h-2zm38 0h2v2h-2zm67 0h2v2h-2zm5 0h2v2h-2zm-425 1h2v2h-2zm22 0h2v2h-2zm9 0h2v2h-2zm14 0h2v2h-2zm45 0h2v2h-2zm22 0h2v2h-2zm41 0h2v2h-2zm5 0h2v2h-2zm56 0h2v2h-2zm-173 1h2v2h-2zm8 0h2v2h-2zm10 0h2v2h-2zm6 0h2v2h-2zm118 0h2v2h-2zm149 0h2v2h-2zm-295 1h2v2h-2zm3 0h2v2h-2zm15 0h2v2h-2zm1 0h2v2h-2zm101 0h2v2h-2zm5 0h2v2h-2zm87 0h2v2h-2zm19 0h2v2h-2zm16 0h2v2h-2zm7 0h2v2h-2zm18 0h2v2h-2zm9 0h2v2h-2zm38 0h2v2h-2zm10 0h2v2h-2zm-342 1h2v2h-2zm29 0h2v2h-2zm1 0h2v2h-2zm61 0h2v2h-2zm51 0h2v2h-2zm4 0h2v2h-2zm41 0h2v2h-2zm15 0h2v2h-2zm44 0h2v2h-2zm151 0h2v2h-2zm-423 1h2v2h-2zm35 0h2v2h-2zm11 0h2v2h-2zm8 0h2v2h-2zm102 0h2v2h-2zm7 0h2v2h-2zm14 0h2v2h-2zm4 0h2v2h-2zm7 0h2v2h-2zm21 0h2v2h-2zm152 0h2v2h-2zm4 0h2v2h-2zm-359 1h2v2h-2zm30 0h2v2h-2zm25 0h2v2h-2zm60 0h2v2h-2zm64 0h2v2h-2zm7 0h2v2h-2zm13 0h2v2h-2zm79 0h2v2h-2zm50 0h2v2h-2zm-284 1h2v2h-2zm7 0h2v2h-2zm133 0h2v2h-2zm6 0h2v2h-2zm5 0h2v2h-2zm48 0h2v2h-2zm8 0h2v2h-2zm2 0h2v2h-2zm12 0h2v2h-2zm23 0h2v2h-2zm19 0h2v2h-2zm5 0h2v2h-2zm103 0h2v2h-2zm-392 1h2v2h-2zm37 0h2v2h-2zm58 0h2v2h-2zm42 0h2v2h-2zm24 0h2v2h-2zm5 0h2v2h-2zm4 0h2v2h-2zm30 0h2v2h-2zm21 0h2v2h-2zm-251 1h2v2h-2zm187 0h2v2h-2zm17 0h2v2h-2zm9 0h2v2h-2zm178 0h2v2h-2zm-402 1h2v2h-2zm4 0h2v2h-2zm44 0h2v2h-2zm25 0h2v2h-2zm19 0h2v2h-2zm90 0h2v2h-2zm3 0h2v2h-2zm74 0h2v2h-2zm7 0h2v2h-2zm28 0h2v2h-2zm136 0h2v2h-2zm4 0h2v2h-2zm-438 1h2v2h-2zm73 0h2v2h-2zm68 0h2v2h-2zm42 0h2v2h-2zm17 0h2v2h-2zm22 0h2v2h-2zm2 0h2v2h-2zm23 0h2v2h-2zm40 0h2v2h-2zm22 0h2v2h-2zm21 0h2v2h-2zm5 0h2v2h-2zm-288 1h2v2h-2zm33 0h2v2h-2zm57 0h2v2h-2zm50 0h2v2h-2zm44 0h2v2h-2zm15 0h2v2h-2zm1 0h2v2h-2zm12 0h2v2h-2zm150 0h2v2h-2zm-413 1h2v2h-2zm15 0h2v2h-2zm4 0h2v2h-2zm118 0h2v2h-2zm59 0h2v2h-2zm53 0h2v2h-2zm10 0h2v2h-2zm175 0h2v2h-2zm-377 1h2v2h-2zm23 0h2v2h-2zm21 0h2v2h-2zm99 0h2v2h-2zm1 0h2v2h-2zm29 0h2v2h-2zm22 0h2v2h-2zm3 0h2v2h-2zm7 0h2v2h-2zm39 0h2v2h-2zm-225 1h2v2h-2zm8 0h2v2h-2zm101 0h2v2h-2zm107 0h2v2h-2zm19 0h2v2h-2zm25 0h2v2h-2zm79 0h2v2h-2zm16 0h2v2h-2zm-434 1h2v2h-2zm55 0h2v2h-2zm129 0h2v2h-2zm52 0h2v2h-2zm3 0h2v2h-2zm-220 1h2v2h-2zm4 0h2v2h-2zm40 0h2v2h-2zm12 0h2v2h-2zm65 0h2v2h-2zm62 0h2v2h-2zm54 0h2v2h-2zm164 0h2v2h-2zm2 0h2v2h-2zm8 0h2v2h-2zm-389 1h2v2h-2zm26 0h2v2h-2zm4 0h2v2h-2zm34 0h2v2h-2zm75 0h2v2h-2zm84 0h2v2h-2zm5 0h2v2h-2zm4 0h2v2h-2zm31 0h2v2h-2zm8 0h2v2h-2zm14 0h2v2h-2zm100 0h2v2h-2zm-428 1h2v2h-2zm28 0h2v2h-2zm29 0h2v2h-2zm31 0h2v2h-2zm90 0h2v2h-2zm63 0h2v2h-2zm26 0h2v2h-2zm3 0h2v2h-2zm20 0h2v2h-2zm9 0h2v2h-2zm39 0h2v2h-2zm-193 1h2v2h-2zm29 0h2v2h-2zm87 0h2v2h-2zm5 0h2v2h-2zm9 0h2v2h-2zm11 0h2v2h-2zm188 0h2v2h-2zm-453 1h2v2h-2zm11 0h2v2h-2zm4 0h2v2h-2zm17 0h2v2h-2zm96 0h2v2h-2zm17 0h2v2h-2zm4 0h2v2h-2zm33 0h2v2h-2zm59 0h2v2h-2zm20 0h2v2h-2zm28 0h2v2h-2zm-307 1h2v2h-2zm37 0h2v2h-2zm5 0h2v2h-2zm4 0h2v2h-2zm104 0h2v2h-2zm4 0h2v2h-2zm5 0h2v2h-2zm82 0h2v2h-2zm14 0h2v2h-2zm44 0h2v2h-2zm4 0h2v2h-2zm30 0h2v2h-2zm-286 1h2v2h-2zm36 0h2v2h-2zm191 0h2v2h-2zm3 0h2v2h-2zm27 0h2v2h-2zm164 0h2v2h-2zm-464 1h2v2h-2zm75 0h2v2h-2zm5 0h2v2h-2zm48 0h2v2h-2zm5 0h2v2h-2zm3 0h2v2h-2zm1 0h2v2h-2zm3 0h2v2h-2zm1 0h2v2h-2zm38 0h2v2h-2zm63 0h2v2h-2zm5 0h2v2h-2zm78 0h2v2h-2zm-321 1h2v2h-2zm4 0h2v2h-2zm4 0h2v2h-2zm35 0h2v2h-2zm24 0h2v2h-2zm49 0h2v2h-2zm3 0h2v2h-2zm1 0h2v2h-2zm4 0h2v2h-2zm4 0h2v2h-2zm12 0h2v2h-2zm1 0h2v2h-2zm50 0h2v2h-2zm104 0h2v2h-2zm138 0h2v2h-2zm-397 1h2v2h-2zm72 0h2v2h-2zm4 0h2v2h-2zm3 0h2v2h-2zm30 0h2v2h-2zm27 0h2v2h-2zm53 0h2v2h-2zm10 0h2v2h-2zm6 0h2v2h-2zm-134 1h2v2h-2zm8 0h2v2h-2zm29 0h2v2h-2zm124 0h2v2h-2zm29 0h2v2h-2zm21 0h2v2h-2zm142 0h2v2h-2zm-446 1h2v2h-2zm19 0h2v2h-2zm12 0h2v2h-2zm33 0h2v2h-2zm90 0h2v2h-2zm75 0h2v2h-2zm23 0h2v2h-2zm27 0h2v2h-2zm164 0h2v2h-2zm-452 1h2v2h-2zm5 0h2v2h-2zm19 0h2v2h-2zm60 0h2v2h-2zm75 0h2v2h-2zm26 0h2v2h-2zm78 0h2v2h-2zm148 0h2v2h-2zm-415 1h2v2h-2zm17 0h2v2h-2zm7 0h2v2h-2zm79 0h2v2h-2zm42 0h2v2h-2zm89 0h2v2h-2zm16 0h2v2h-2zm48 0h2v2h-2zm131 0h2v2h-2zm4 0h2v2h-2zm4 0h2v2h-2zm19 0h2v2h-2zm-460 1h2v2h-2zm83 0h2v2h-2zm3 0h2v2h-2zm2 0h2v2h-2zm7 0h2v2h-2zm22 0h2v2h-2zm55 0h2v2h-2zm4 0h2v2h-2zm118 0h2v2h-2zm26 0h2v2h-2zm11 0h2v2h-2zm98 0h2v2h-2zm17 0h2v2h-2zm-450 1h2v2h-2zm23 0h2v2h-2zm66 0h2v2h-2zm83 0h2v2h-2zm12 0h2v2h-2zm67 0h2v2h-2zm21 0h2v2h-2zm58 0h2v2h-2zm91 0h2v2h-2zm33 0h2v2h-2zm8 0h2v2h-2zm-307 1h2v2h-2zm44 0h2v2h-2zm86 0h2v2h-2zm177 0h2v2h-2zm-469 1h2v2h-2zm4 0h2v2h-2zm29 0h2v2h-2zm86 0h2v2h-2zm42 0h2v2h-2zm14 0h2v2h-2zm72 0h2v2h-2zm36 0h2v2h-2zm32 0h2v2h-2zm20 0h2v2h-2zm108 0h2v2h-2zm21 0h2v2h-2zm-370 1h2v2h-2zm13 0h2v2h-2zm22 0h2v2h-2zm64 0h2v2h-2zm17 0h2v2h-2zm33 0h2v2h-2zm33 0h2v2h-2zm53 0h2v2h-2zm96 0h2v2h-2zm1 0h2v2h-2zm13 0h2v2h-2zm33 0h2v2h-2zm-442 1h2v2h-2zm144 0h2v2h-2zm40 0h2v2h-2zm4 0h2v2h-2zm4 0h2v2h-2zm5 0h2v2h-2zm4 0h2v2h-2zm4 0h2v2h-2zm4 0h2v2h-2zm21 0h2v2h-2zm12 0h2v2h-2zm153 0h2v2h-2zm-420 1h2v2h-2zm116 0h2v2h-2zm39 0h2v2h-2zm104 0h2v2h-2zm4 0h2v2h-2zm50 0h2v2h-2zm17 0h2v2h-2zm86 0h2v2h-2zm13 0h2v2h-2zm33 0h2v2h-2zm8 0h2v2h-2zm-315 1h2v2h-2zm13 0h2v2h-2zm98 0h2v2h-2zm12 0h2v2h-2zm10 0h2v2h-2zm25 0h2v2h-2zm4 0h2v2h-2zm4 0h2v2h-2zm92 0h2v2h-2zm10 0h2v2h-2zm63 0h2v2h-2zm4 0h2v2h-2zm-486 1h2v2h-2zm86 0h2v2h-2zm13 0h2v2h-2zm23 0h2v2h-2zm64 0h2v2h-2zm12 0h2v2h-2zm31 0h2v2h-2zm67 0h2v2h-2zm12 0h2v2h-2zm122 0h2v2h-2zm-404 1h2v2h-2zm35 0h2v2h-2zm4 0h2v2h-2zm51 0h2v2h-2zm32 0h2v2h-2zm17 0h2v2h-2zm68 0h2v2h-2zm43 0h2v2h-2zm4 0h2v2h-2zm24 0h2v2h-2zm6 0h2v2h-2zm12 0h2v2h-2zm139 0h2v2h-2zm17 0h2v2h-2zm-412 1h2v2h-2zm78 0h2v2h-2zm155 0h2v2h-2zm26 0h2v2h-2zm34 0h2v2h-2zm63 0h2v2h-2zm47 0h2v2h-2zm-412 1h2v2h-2zm31 0h2v2h-2zm29 0h2v2h-2zm3 0h2v2h-2zm5 0h2v2h-2zm15 0h2v2h-2zm8 0h2v2h-2zm47 0h2v2h-2zm204 0h2v2h-2zm4 0h2v2h-2zm5 0h2v2h-2zm24 0h2v2h-2zm39 0h2v2h-2zm4 0h2v2h-2zm-351 1h2v2h-2zm4 0h2v2h-2zm4 0h2v2h-2zm4 0h2v2h-2zm50 0h2v2h-2zm91 0h2v2h-2zm23 0h2v2h-2zm11 0h2v2h-2zm97 0h2v2h-2zm-355 1h2v2h-2zm38 0h2v2h-2zm4 0h2v2h-2zm33 0h2v2h-2zm17 0h2v2h-2zm20 0h2v2h-2zm26 0h2v2h-2zm136 0h2v2h-2zm81 0h2v2h-2zm55 0h2v2h-2zm-351 1h2v2h-2zm20 0h2v2h-2zm4 0h2v2h-2zm5 0h2v2h-2zm7 0h2v2h-2zm1 0h2v2h-2zm8 0h2v2h-2zm182 0h2v2h-2zm70 0h2v2h-2zm26 0h2v2h-2zm-347 1h2v2h-2zm9 0h2v2h-2zm52 0h2v2h-2zm4 0h2v2h-2zm35 0h2v2h-2zm121 0h2v2h-2zm99 0h2v2h-2zm5 0h2v2h-2zm-362 1h2v2h-2zm26 0h2v2h-2zm38 0h2v2h-2zm71 0h2v2h-2zm91 0h2v2h-2zm22 0h2v2h-2zm36 0h2v2h-2zm104 0h2v2h-2zm24 0h2v2h-2zm-296 1h2v2h-2zm162 0h2v2h-2zm22 0h2v2h-2zm43 0h2v2h-2zm23 0h2v2h-2zm5 0h2v2h-2zm-335 1h2v2h-2zm12 0h2v2h-2zm12 0h2v2h-2zm35 0h2v2h-2zm42 0h2v2h-2zm48 0h2v2h-2zm185 0h2v2h-2zm5 0h2v2h-2zm17 0h2v2h-2zm4 0h2v2h-2zm4 0h2v2h-2zm8 0h2v2h-2zm25 0h2v2h-2zm-407 1h2v2h-2zm21 0h2v2h-2zm3 0h2v2h-2zm15 0h2v2h-2zm41 0h2v2h-2zm26 0h2v2h-2zm42 0h2v2h-2zm60 0h2v2h-2zm22 0h2v2h-2zm55 0h2v2h-2zm43 0h2v2h-2zm25 0h2v2h-2zm21 0h2v2h-2zm4 0h2v2h-2zm17 0h2v2h-2zm-367 1h2v2h-2zm56 0h2v2h-2zm9 0h2v2h-2zm4 0h2v2h-2zm5 0h2v2h-2zm42 0h2v2h-2zm69 0h2v2h-2zm42 0h2v2h-2zm2 0h2v2h-2zm90 0h2v2h-2zm57 0h2v2h-2zm-386 1h2v2h-2zm13 0h2v2h-2zm1 0h2v2h-2zm44 0h2v2h-2zm34 0h2v2h-2zm91 0h2v2h-2zm54 0h2v2h-2zm17 0h2v2h-2zm127 0h2v2h-2zm-425 1h2v2h-2zm37 0h2v2h-2zm58 0h2v2h-2zm3 0h2v2h-2zm246 0h2v2h-2zm5 0h2v2h-2zm4 0h2v2h-2zm1 0h2v2h-2zm50 0h2v2h-2zm22 0h2v2h-2zm-364 1h2v2h-2zm2 0h2v2h-2zm47 0h2v2h-2zm143 0h2v2h-2zm32 0h2v2h-2zm59 0h2v2h-2zm22 0h2v2h-2zm-301 1h2v2h-2zm13 0h2v2h-2zm15 0h2v2h-2zm134 0h2v2h-2zm11 0h2v2h-2zm15 0h2v2h-2zm11 0h2v2h-2zm14 0h2v2h-2zm17 0h2v2h-2zm15 0h2v2h-2zm52 0h2v2h-2zm-320 1h2v2h-2zm47 0h2v2h-2zm44 0h2v2h-2zm54 0h2v2h-2zm1 0h2v2h-2zm72 0h2v2h-2zm96 0h2v2h-2zm45 0h2v2h-2zm-363 1h2v2h-2zm31 0h2v2h-2zm16 0h2v2h-2zm99 0h2v2h-2zm72 0h2v2h-2zm32 0h2v2h-2zm34 0h2v2h-2zm36 0h2v2h-2zm55 0h2v2h-2zm-414 1h2v2h-2zm74 0h2v2h-2zm4 0h2v2h-2zm4 0h2v2h-2zm29 0h2v2h-2zm81 0h2v2h-2zm44 0h2v2h-2zm41 0h2v2h-2zm92 0h2v2h-2zm12 0h2v2h-2zm-153 1h2v2h-2zm28 0h2v2h-2zm38 0h2v2h-2zm30 0h2v2h-2zm-339 1h2v2h-2zm51 0h2v2h-2zm8 0h2v2h-2zm54 0h2v2h-2zm37 0h2v2h-2zm61 0h2v2h-2zm3 0h2v2h-2zm34 0h2v2h-2zm93 0h2v2h-2zm51 0h2v2h-2zm21 0h2v2h-2zm-198 1h2v2h-2zm17 0h2v2h-2zm1 0h2v2h-2zm11 0h2v2h-2zm13 0h2v2h-2zm125 0h2v2h-2zm-326 1h2v2h-2zm2 0h2v2h-2zm4 0h2v2h-2zm1 0h2v2h-2zm61 0h2v2h-2zm18 0h2v2h-2zm4 0h2v2h-2zm98 0h2v2h-2zm152 0h2v2h-2zm26 0h2v2h-2zm4 0h2v2h-2zm4 0h2v2h-2zm-364 1h2v2h-2zm63 0h2v2h-2zm143 0h2v2h-2zm99 0h2v2h-2zm25 0h2v2h-2zm15 0h2v2h-2zm6 0h2v2h-2zm17 0h2v2h-2zm-463 1h2v2h-2zm63 0h2v2h-2zm18 0h2v2h-2zm15 0h2v2h-2zm54 0h2v2h-2zm279 0h2v2h-2zm38 0h2v2h-2zm-384 1h2v2h-2zm16 0h2v2h-2zm1 0h2v2h-2zm42 0h2v2h-2zm4 0h2v2h-2zm99 0h2v2h-2zm17 0h2v2h-2zm6 0h2v2h-2zm19 0h2v2h-2zm122 0h2v2h-2zm11 0h2v2h-2zm29 0h2v2h-2zm-346 1h2v2h-2zm1 0h2v2h-2zm4 0h2v2h-2zm21 0h2v2h-2zm4 0h2v2h-2zm4 0h2v2h-2zm24 0h2v2h-2zm97 0h2v2h-2zm16 0h2v2h-2zm123 0h2v2h-2zm26 0h2v2h-2zm10 0h2v2h-2zm38 0h2v2h-2zm-447 1h2v2h-2zm88 0h2v2h-2zm4 0h2v2h-2zm1 0h2v2h-2zm4 0h2v2h-2zm4 0h2v2h-2zm95 0h2v2h-2zm-113 1h2v2h-2zm20 0h2v2h-2zm120 0h2v2h-2zm28 0h2v2h-2zm9 0h2v2h-2zm14 0h2v2h-2zm138 0h2v2h-2zm37 0h2v2h-2zm-472 1h2v2h-2zm162 0h2v2h-2zm115 0h2v2h-2zm116 0h2v2h-2zm27 0h2v2h-2zm5 0h2v2h-2zm-369 1h2v2h-2zm26 0h2v2h-2zm181 0h2v2h-2zm45 0h2v2h-2zm11 0h2v2h-2zm2 0h2v2h-2zm101 0h2v2h-2zm25 0h2v2h-2zm24 0h2v2h-2zm-449 1h2v2h-2zm87 0h2v2h-2zm6 0h2v2h-2zm105 0h2v2h-2zm97 0h2v2h-2zm8 0h2v2h-2zm11 0h2v2h-2zm138 0h2v2h-2zm-476 1h2v2h-2zm112 0h2v2h-2zm4 0h2v2h-2zm72 0h2v2h-2zm13 0h2v2h-2zm49 0h2v2h-2zm18 0h2v2h-2zm30 0h2v2h-2zm36 0h2v2h-2zm32 0h2v2h-2zm54 0h2v2h-2zm3 0h2v2h-2zm15 0h2v2h-2zm-352 1h2v2h-2zm230 0h2v2h-2zm15 0h2v2h-2zm89 0h2v2h-2zm-398 1h2v2h-2zm36 0h2v2h-2zm102 0h2v2h-2zm4 0h2v2h-2zm12 0h2v2h-2zm93 0h2v2h-2zm43 0h2v2h-2zm2 0h2v2h-2zm128 0h2v2h-2zm8 0h2v2h-2zm22 0h2v2h-2zm-360 1h2v2h-2zm3 0h2v2h-2zm28 0h2v2h-2zm4 0h2v2h-2zm6 0h2v2h-2zm3 0h2v2h-2zm11 0h2v2h-2zm37 0h2v2h-2zm6 0h2v2h-2zm6 0h2v2h-2zm7 0h2v2h-2zm1 0h2v2h-2zm87 0h2v2h-2zm23 0h2v2h-2zm82 0h2v2h-2zm8 0h2v2h-2zm23 0h2v2h-2zm-358 1h2v2h-2zm97 0h2v2h-2zm33 0h2v2h-2zm10 0h2v2h-2zm21 0h2v2h-2zm4 0h2v2h-2zm44 0h2v2h-2zm139 0h2v2h-2zm-400 1h2v2h-2zm56 0h2v2h-2zm32 0h2v2h-2zm14 0h2v2h-2zm66 0h2v2h-2zm2 0h2v2h-2zm-184 1h2v2h-2zm12 0h2v2h-2zm24 0h2v2h-2zm10 0h2v2h-2zm40 0h2v2h-2zm148 0h2v2h-2zm45 0h2v2h-2zm5 0h2v2h-2zm5 0h2v2h-2zm25 0h2v2h-2zm113 0h2v2h-2zm1 0h2v2h-2zm19 0h2v2h-2zm-420 1h2v2h-2zm4 0h2v2h-2zm4 0h2v2h-2zm39 0h2v2h-2zm150 0h2v2h-2zm57 0h2v2h-2zm109 0h2v2h-2zm12 0h2v2h-2zm-385 1h2v2h-2zm61 0h2v2h-2zm5 0h2v2h-2zm80 0h2v2h-2zm132 0h2v2h-2zm88 0h2v2h-2zm5 0h2v2h-2zm25 0h2v2h-2zm-404 1h2v2h-2zm59 0h2v2h-2zm109 0h2v2h-2zm5 0h2v2h-2zm39 0h2v2h-2zm15 0h2v2h-2zm87 0h2v2h-2zm27 0h2v2h-2zm41 0h2v2h-2zm14 0h2v2h-2zm25 0h2v2h-2zm-410 1h2v2h-2zm4 0h2v2h-2zm121 0h2v2h-2zm64 0h2v2h-2zm8 0h2v2h-2zm72 0h2v2h-2zm9 0h2v2h-2zm17 0h2v2h-2zm11 0h2v2h-2zm53 0h2v2h-2zm30 0h2v2h-2zm36 0h2v2h-2zm-445 1h2v2h-2zm1 0h2v2h-2zm148 0h2v2h-2zm11 0h2v2h-2zm53 0h2v2h-2zm68 0h2v2h-2zm65 0h2v2h-2zm32 0h2v2h-2zm32 0h2v2h-2zm24 0h2v2h-2zm12 0h2v2h-2zm-463 1h2v2h-2zm23 0h2v2h-2zm233 0h2v2h-2zm155 0h2v2h-2zm44 0h2v2h-2zm4 0h2v2h-2zm-290 1h2v2h-2zm5 0h2v2h-2zm25 0h2v2h-2zm26 0h2v2h-2zm36 0h2v2h-2zm78 0h2v2h-2zm7 0h2v2h-2zm3 0h2v2h-2zm12 0h2v2h-2zm-354 1h2v2h-2zm3 0h2v2h-2zm3 0h2v2h-2zm252 0h2v2h-2zm24 0h2v2h-2zm18 0h2v2h-2zm22 0h2v2h-2zm6 0h2v2h-2zm58 0h2v2h-2zm-62 1h2v2h-2zm18 0h2v2h-2zm61 0h2v2h-2zm18 0h2v2h-2zm-427 1h2v2h-2zm57 0h2v2h-2zm63 0h2v2h-2zm2 0h2v2h-2zm31 0h2v2h-2zm68 0h2v2h-2zm34 0h2v2h-2zm46 0h2v2h-2zm4 0h2v2h-2zm20 0h2v2h-2zm33 0h2v2h-2zm53 0h2v2h-2zm-410 1h2v2h-2zm1 0h2v2h-2zm20 0h2v2h-2zm104 0h2v2h-2zm2 0h2v2h-2zm57 0h2v2h-2zm104 0h2v2h-2zm-204 1h2v2h-2zm22 0h2v2h-2zm91 0h2v2h-2zm109 0h2v2h-2zm44 0h2v2h-2zm38 0h2v2h-2zm2 0h2v2h-2zm34 0h2v2h-2zm-336 1h2v2h-2zm4 0h2v2h-2zm24 0h2v2h-2zm82 0h2v2h-2zm91 0h2v2h-2zm32 0h2v2h-2zm34 0h2v2h-2zm31 0h2v2h-2zm-330 1h2v2h-2zm39 0h2v2h-2zm2 0h2v2h-2zm56 0h2v2h-2zm103 0h2v2h-2zm31 0h2v2h-2zm122 0h2v2h-2zm-345 1h2v2h-2zm138 0h2v2h-2zm107 0h2v2h-2zm8 0h2v2h-2zm-179 1h2v2h-2zm71 0h2v2h-2zm4 0h2v2h-2zm70 0h2v2h-2zm30 0h2v2h-2zm78 0h2v2h-2zm38 0h2v2h-2zm-290 1h2v2h-2zm35 0h2v2h-2zm31 0h2v2h-2zm49 0h2v2h-2zm71 0h2v2h-2zm-307 1h2v2h-2zm34 0h2v2h-2zm43 0h2v2h-2zm20 0h2v2h-2zm38 0h2v2h-2zm17 0h2v2h-2zm5 0h2v2h-2zm29 0h2v2h-2zm109 0h2v2h-2zm95 0h2v2h-2zm-360 1h2v2h-2zm11 0h2v2h-2zm240 0h2v2h-2zm4 0h2v2h-2zm46 0h2v2h-2zm4 0h2v2h-2zm41 0h2v2h-2zm-228 1h2v2h-2zm129 0h2v2h-2zm-251 1h2v2h-2zm97 0h2v2h-2zm111 0h2v2h-2zm153 0h2v2h-2zm-404 1h2v2h-2zm12 0h2v2h-2zm6 0h2v2h-2zm43 0h2v2h-2zm33 0h2v2h-2zm20 0h2v2h-2zm1 0h2v2h-2zm9 0h2v2h-2zm27 0h2v2h-2zm51 0h2v2h-2zm113 0h2v2h-2zm40 0h2v2h-2zm41 0h2v2h-2zm4 0h2v2h-2zm-416 1h2v2h-2zm32 0h2v2h-2zm23 0h2v2h-2zm208 0h2v2h-2zm34 0h2v2h-2zm62 0h2v2h-2zm3 0h2v2h-2zm-342 1h2v2h-2zm4 0h2v2h-2zm102 0h2v2h-2zm11 0h2v2h-2zm23 0h2v2h-2zm19 0h2v2h-2zm60 0h2v2h-2zm1 0h2v2h-2zm6 0h2v2h-2zm105 0h2v2h-2zm4 0h2v2h-2zm-244 1h2v2h-2zm43 0h2v2h-2zm2 0h2v2h-2zm8 0h2v2h-2zm4 0h2v2h-2zm74 0h2v2h-2zm7 0h2v2h-2zm52 0h2v2h-2zm73 0h2v2h-2zm-205 1h2v2h-2zm47 0h2v2h-2zm116 0h2v2h-2zm-218 1h2v2h-2zm39 0h2v2h-2zm45 0h2v2h-2zm57 0h2v2h-2zm93 0h2v2h-2zm37 0h2v2h-2zm-298 1h2v2h-2zm4 0h2v2h-2zm218 0h2v2h-2zm38 0h2v2h-2zm-264 1h2v2h-2zm134 0h2v2h-2zm114 0h2v2h-2zm43 0h2v2h-2zm86 0h2v2h-2zm-410 1h2v2h-2zm45 0h2v2h-2zm2 0h2v2h-2zm4 0h2v2h-2zm281 0h2v2h-2zm-303 1h2v2h-2zm36 0h2v2h-2zm37 0h2v2h-2zm160 0h2v2h-2zm16 0h2v2h-2zm19 1h2v2h-2zm30 0h2v2h-2zm-301 1h2v2h-2zm132 0h2v2h-2zm-160 1h2v2h-2zm48 0h2v2h-2zm11 0h2v2h-2zm219 0h2v2h-2zm54 0h2v2h-2zm1 0h2v2h-2zm-265 1h2v2h-2zm35 0h2v2h-2zm135 0h2v2h-2zm20 0h2v2h-2zm4 0h2v2h-2zm70 0h2v2h-2zm-276 1h2v2h-2zm198 0h2v2h-2zm47 0h2v2h-2zm27 0h2v2h-2zm5 0h2v2h-2zm-308 1h2v2h-2zm28 0h2v2h-2zm6 0h2v2h-2zm191 0h2v2h-2zm54 0h2v2h-2zm25 0h2v2h-2zm-281 1h2v2h-2zm15 0h2v2h-2zm78 0h2v2h-2zm99 0h2v2h-2zm24 0h2v2h-2zm11 0h2v2h-2zm1 0h2v2h-2zm49 0h2v2h-2zm-325 1h2v2h-2zm69 0h2v2h-2zm11 0h2v2h-2zm20 0h2v2h-2zm86 0h2v2h-2zm-163 1h2v2h-2zm221 0h2v2h-2zm3 0h2v2h-2zm59 0h2v2h-2zm-254 1h2v2h-2zm14 0h2v2h-2zm141 0h2v2h-2zm116 0h2v2h-2zm-272 1h2v2h-2zm35 0h2v2h-2zm11 0h2v2h-2zm21 0h2v2h-2zm148 0h2v2h-2zm11 0h2v2h-2zm10 0h2v2h-2zm23 0h2v2h-2zm4 0h2v2h-2zm-314 1h2v2h-2zm318 0h2v2h-2zm1 0h2v2h-2zm-296 1h2v2h-2zm31 0h2v2h-2zm161 0h2v2h-2zm103 0h2v2h-2zm-25 1h2v2h-2zm83 0h2v2h-2zm4 0h2v2h-2zm22 0h2v2h-2zm-306 1h2v2h-2zm65 0h2v2h-2zm57 0h2v2h-2zm71 0h2v2h-2zm83 0h2v2h-2zm12 0h2v2h-2zm-327 1h2v2h-2zm56 0h2v2h-2zm169 0h2v2h-2zm14 0h2v2h-2zm72 0h2v2h-2zm20 0h2v2h-2zm-362 1h2v2h-2zm67 0h2v2h-2zm193 0h2v2h-2zm30 0h2v2h-2zm-260 1h2v2h-2zm164 0h2v2h-2zm-191 1h2v2h-2zm57 0h2v2h-2zm24 0h2v2h-2zm188 0h2v2h-2zm42 0h2v2h-2zm29 0h2v2h-2zm23 0h2v2h-2zm-336 1h2v2h-2zm39 0h2v2h-2zm129 0h2v2h-2zm93 0h2v2h-2zm-284 1h2v2h-2zm54 0h2v2h-2zm138 0h2v2h-2zm170 0h2v2h-2zm-287 1h2v2h-2zm242 0h2v2h-2zm-315 1h2v2h-2zm2 0h2v2h-2zm16 0h2v2h-2zm32 0h2v2h-2zm13 0h2v2h-2zm202 0h2v2h-2zm48 0h2v2h-2zm-307 1h2v2h-2zm60 0h2v2h-2zm215 0h2v2h-2zm82 0h2v2h-2zm-353 1h2v2h-2zm4 0h2v2h-2zm44 0h2v2h-2zm129 0h2v2h-2zm87 0h2v2h-2zm4 0h2v2h-2zm-249 1h2v2h-2zm4 0h2v2h-2zm10 0h2v2h-2zm4 0h2v2h-2zm1 0h2v2h-2zm11 0h2v2h-2zm4 0h2v2h-2zm6 0h2v2h-2zm3 0h2v2h-2zm149 0h2v2h-2zm45 0h2v2h-2zm4 0h2v2h-2zm8 0h2v2h-2zm89 0h2v2h-2zm-367 1h2v2h-2zm37 0h2v2h-2zm129 0h2v2h-2zm114 0h2v2h-2zm30 0h2v2h-2zm-300 1h2v2h-2zm30 0h2v2h-2zm31 0h2v2h-2zm115 0h2v2h-2zm56 0h2v2h-2zm96 0h2v2h-2zm-325 1h2v2h-2zm17 0h2v2h-2zm39 0h2v2h-2zm240 0h2v2h-2zm61 0h2v2h-2zm-305 1h2v2h-2zm31 0h2v2h-2zm142 0h2v2h-2zm136 0h2v2h-2zm-373 1h2v2h-2zm122 0h2v2h-2zm94 0h2v2h-2zm138 0h2v2h-2zm-282 1h2v2h-2zm114 0h2v2h-2zm22 0h2v2h-2zm-177 1h2v2h-2zm181 0h2v2h-2zm79 0h2v2h-2zm85 0h2v2h-2zm-373 1h2v2h-2zm143 0h2v2h-2zm-72 1h2v2h-2zm6 0h2v2h-2zm43 0h2v2h-2zm19 0h2v2h-2zm7 0h2v2h-2zm80 0h2v2h-2zm5 0h2v2h-2zm4 0h2v2h-2zm-236 1h2v2h-2zm177 0h2v2h-2zm5 0h2v2h-2zm58 0h2v2h-2zm113 0h2v2h-2zm22 0h2v2h-2zm-346 1h2v2h-2zm107 0h2v2h-2zm1 0h2v2h-2zm45 0h2v2h-2zm10 0h2v2h-2zm4 0h2v2h-2zm16 0h2v2h-2zm2 0h2v2h-2zm10 0h2v2h-2zm4 0h2v2h-2zm25 0h2v2h-2zm-256 1h2v2h-2zm105 0h2v2h-2zm17 0h2v2h-2zm16 0h2v2h-2zm53 0h2v2h-2zm12 0h2v2h-2zm23 0h2v2h-2zm34 0h2v2h-2zm-264 1h2v2h-2zm82 0h2v2h-2zm28 0h2v2h-2zm81 0h2v2h-2zm12 0h2v2h-2zm8 0h2v2h-2zm39 0h2v2h-2zm7 0h2v2h-2zm98 0h2v2h-2zm-173 1h2v2h-2zm9 0h2v2h-2zm30 0h2v2h-2zm160 0h2v2h-2zm-370 1h2v2h-2zm9 0h2v2h-2zm17 0h2v2h-2zm27 0h2v2h-2zm109 0h2v2h-2zm14 0h2v2h-2zm28 0h2v2h-2zm13 0h2v2h-2zm38 0h2v2h-2zm-206 1h2v2h-2zm50 0h2v2h-2zm14 0h2v2h-2zm99 0h2v2h-2zm31 0h2v2h-2zm-256 1h2v2h-2zm59 0h2v2h-2zm85 0h2v2h-2zm15 0h2v2h-2zm1 0h2v2h-2zm23 0h2v2h-2zm69 0h2v2h-2zm22 0h2v2h-2zm15 0h2v2h-2zm-297 1h2v2h-2zm5 0h2v2h-2zm54 0h2v2h-2zm32 0h2v2h-2zm32 0h2v2h-2zm48 0h2v2h-2zm14 0h2v2h-2zm5 0h2v2h-2zm4 0h2v2h-2zm9 0h2v2h-2zm25 0h2v2h-2zm8 0h2v2h-2zm153 0h2v2h-2zm-357 1h2v2h-2zm17 0h2v2h-2zm7 0h2v2h-2zm7 0h2v2h-2zm24 0h2v2h-2zm174 0h2v2h-2zm-253 1h2v2h-2zm28 0h2v2h-2zm16 0h2v2h-2zm30 0h2v2h-2zm51 0h2v2h-2zm42 0h2v2h-2zm4 0h2v2h-2zm58 0h2v2h-2zm-187 1h2v2h-2zm75 0h2v2h-2zm21 0h2v2h-2zm4 0h2v2h-2zm1 0h2v2h-2zm14 0h2v2h-2zm14 0h2v2h-2zm8 0h2v2h-2zm5 0h2v2h-2zm33 0h2v2h-2zm33 0h2v2h-2zm-153 1h2v2h-2zm19 0h2v2h-2zm19 0h2v2h-2zm11 0h2v2h-2zm35 0h2v2h-2zm15 0h2v2h-2zm25 0h2v2h-2zm159 0h2v2h-2zm-378 1h2v2h-2zm29 0h2v2h-2zm119 0h2v2h-2zm-111 1h2v2h-2zm81 0h2v2h-2zm3 0h2v2h-2zm46 0h2v2h-2zm61 0h2v2h-2zm18 0h2v2h-2zm-213 1h2v2h-2zm119 0h2v2h-2zm29 0h2v2h-2zm-205 1h2v2h-2zm28 0h2v2h-2zm104 0h2v2h-2zm25 0h2v2h-2zm23 0h2v2h-2zm22 0h2v2h-2zm15 0h2v2h-2zm25 0h2v2h-2zm-238 1h2v2h-2zm3 0h2v2h-2zm28 0h2v2h-2zm24 0h2v2h-2zm52 0h2v2h-2zm14 0h2v2h-2zm64 0h2v2h-2zm65 0h2v2h-2zm13 0h2v2h-2zm134 0h2v2h-2zm-287 1h2v2h-2zm15 0h2v2h-2zm6 0h2v2h-2zm49 0h2v2h-2zm5 0h2v2h-2zm64 0h2v2h-2zm5 0h2v2h-2zm5 0h2v2h-2zm9 0h2v2h-2zm1 0h2v2h-2zm-215 1h2v2h-2zm51 0h2v2h-2zm8 0h2v2h-2zm32 0h2v2h-2zm55 0h2v2h-2zm2 0h2v2h-2zm33 0h2v2h-2zm-213 1h2v2h-2zm33 0h2v2h-2zm100 0h2v2h-2zm28 0h2v2h-2zm28 0h2v2h-2zm168 0h2v2h-2zm-320 1h2v2h-2zm4 0h2v2h-2zm21 0h2v2h-2zm116 0h2v2h-2zm4 0h2v2h-2zm4 0h2v2h-2zm57 0h2v2h-2zm131 0h2v2h-2zm-346 1h2v2h-2zm5 0h2v2h-2zm48 0h2v2h-2zm9 0h2v2h-2zm35 0h2v2h-2zm8 0h2v2h-2zm32 0h2v2h-2zm45 0h2v2h-2zm57 0h2v2h-2zm-222 1h2v2h-2zm46 0h2v2h-2zm90 0h2v2h-2zm2 0h2v2h-2zm47 0h2v2h-2zm60 0h2v2h-2zm12 0h2v2h-2zm57 0h2v2h-2zm1 0h2v2h-2zm-367 1h2v2h-2zm4 0h2v2h-2zm32 0h2v2h-2zm106 0h2v2h-2zm72 0h2v2h-2zm27 0h2v2h-2zm4 0h2v2h-2zm2 0h2v2h-2zm46 0h2v2h-2zm6 0h2v2h-2zm70 0h2v2h-2zm-235 1h2v2h-2zm41 0h2v2h-2zm18 0h2v2h-2zm17 0h2v2h-2zm67 0h2v2h-2zm103 0h2v2h-2zm-325 1h2v2h-2zm10 0h2v2h-2zm21 0h2v2h-2zm10 0h2v2h-2zm49 0h2v2h-2zm48 0h2v2h-2zm13 0h2v2h-2zm96 0h2v2h-2zm67 0h2v2h-2zm-373 1h2v2h-2zm12 0h2v2h-2zm25 0h2v2h-2zm164 0h2v2h-2zm4 0h2v2h-2zm80 0h2v2h-2zm-274 1h2v2h-2zm5 0h2v2h-2zm4 0h2v2h-2zm133 0h2v2h-2zm4 0h2v2h-2zm109 0h2v2h-2zm44 0h2v2h-2zm-276 1h2v2h-2zm3 0h2v2h-2zm24 0h2v2h-2zm77 0h2v2h-2zm23 0h2v2h-2zm16 0h2v2h-2zm9 0h2v2h-2zm53 0h2v2h-2zm137 0h2v2h-2zm7 0h2v2h-2zm-296 1h2v2h-2zm2 0h2v2h-2zm10 0h2v2h-2zm48 0h2v2h-2zm1 0h2v2h-2zm8 0h2v2h-2zm9 0h2v2h-2zm8 0h2v2h-2zm196 0h2v2h-2zm-384 1h2v2h-2zm4 0h2v2h-2zm10 0h2v2h-2zm67 0h2v2h-2zm77 0h2v2h-2zm18 0h2v2h-2zm4 0h2v2h-2zm4 0h2v2h-2zm112 0h2v2h-2zm99 0h2v2h-2zm-370 1h2v2h-2zm20 0h2v2h-2zm2 0h2v2h-2zm71 0h2v2h-2zm104 0h2v2h-2zm59 0h2v2h-2zm-284 1h2v2h-2zm44 0h2v2h-2zm11 0h2v2h-2zm26 0h2v2h-2zm110 0h2v2h-2zm14 0h2v2h-2zm-195 1h2v2h-2zm40 0h2v2h-2zm55 0h2v2h-2zm11 0h2v2h-2zm49 0h2v2h-2zm53 0h2v2h-2zm4 0h2v2h-2zm7 0h2v2h-2zm58 0h2v2h-2zm-291 1h2v2h-2zm21 0h2v2h-2zm10 0h2v2h-2zm55 0h2v2h-2zm35 0h2v2h-2zm130 0h2v2h-2zm-44 1h2v2h-2zm67 0h2v2h-2zm-257 1h2v2h-2zm40 0h2v2h-2zm4 0h2v2h-2zm24 0h2v2h-2zm9 0h2v2h-2zm103 0h2v2h-2zm81 0h2v2h-2zm3 0h2v2h-2zm-171 1h2v2h-2zm9 0h2v2h-2zm28 0h2v2h-2zm22 0h2v2h-2zm52 0h2v2h-2zm74 0h2v2h-2zm63 0h2v2h-2zm-338 1h2v2h-2zm12 0h2v2h-2zm55 0h2v2h-2zm164 0h2v2h-2zm20 0h2v2h-2zm20 0h2v2h-2zm9 0h2v2h-2zm-237 1h2v2h-2zm92 0h2v2h-2zm48 0h2v2h-2zm4 0h2v2h-2zm80 0h2v2h-2zm-262 1h2v2h-2zm33 0h2v2h-2zm26 0h2v2h-2zm28 0h2v2h-2zm4 0h2v2h-2zm34 0h2v2h-2zm1 0h2v2h-2zm46 0h2v2h-2zm22 0h2v2h-2zm22 0h2v2h-2zm62 0h2v2h-2zm58 0h2v2h-2zm-346 1h2v2h-2zm97 0h2v2h-2zm47 0h2v2h-2zm10 0h2v2h-2zm31 0h2v2h-2zm37 0h2v2h-2zm48 0h2v2h-2zm-277 1h2v2h-2zm2 0h2v2h-2zm9 0h2v2h-2zm4 0h2v2h-2zm3 0h2v2h-2zm4 0h2v2h-2zm36 0h2v2h-2zm22 0h2v2h-2zm156 0h2v2h-2zm27 0h2v2h-2zm-244 1h2v2h-2zm34 0h2v2h-2zm21 0h2v2h-2zm26 0h2v2h-2zm100 0h2v2h-2zm42 0h2v2h-2zm-219 1h2v2h-2zm38 0h2v2h-2zm93 0h2v2h-2zm34 0h2v2h-2zm22 0h2v2h-2zm30 0h2v2h-2zm57 0h2v2h-2zm58 0h2v2h-2zm-357 1h2v2h-2zm29 0h2v2h-2zm29 0h2v2h-2zm3 0h2v2h-2zm6 0h2v2h-2zm5 0h2v2h-2zm92 0h2v2h-2zm65 0h2v2h-2zm28 0h2v2h-2zm22 0h2v2h-2zm-246 1h2v2h-2zm51 0h2v2h-2zm127 0h2v2h-2zm55 0h2v2h-2zm-208 1h2v2h-2zm44 0h2v2h-2zm56 0h2v2h-2zm30 0h2v2h-2zm13 0h2v2h-2zm12 0h2v2h-2zm4 0h2v2h-2zm4 0h2v2h-2zm133 0h2v2h-2zm-267 1h2v2h-2zm124 0h2v2h-2zm14 0h2v2h-2zm1 0h2v2h-2zm13 0h2v2h-2zm61 0h2v2h-2zm19 0h2v2h-2zm-321 1h2v2h-2zm35 0h2v2h-2zm4 0h2v2h-2zm113 0h2v2h-2zm9 0h2v2h-2zm6 0h2v2h-2zm115 0h2v2h-2zm-142 1h2v2h-2zm46 0h2v2h-2zm15 0h2v2h-2zm-142 1h2v2h-2zm43 0h2v2h-2zm34 0h2v2h-2zm46 0h2v2h-2zm118 0h2v2h-2zm56 0h2v2h-2zm-315 1h2v2h-2zm50 0h2v2h-2zm2 0h2v2h-2zm77 0h2v2h-2zm44 0h2v2h-2zm48 0h2v2h-2zm59 0h2v2h-2zm-320 1h2v2h-2zm58 0h2v2h-2zm35 0h2v2h-2zm34 0h2v2h-2zm2 0h2v2h-2zm2 0h2v2h-2zm27 0h2v2h-2zm15 0h2v2h-2zm4 0h2v2h-2zm20 0h2v2h-2zm72 0h2v2h-2zm14 0h2v2h-2zm12 0h2v2h-2zm-259 1h2v2h-2zm62 0h2v2h-2zm189 0h2v2h-2zm4 0h2v2h-2zm-288 1h2v2h-2zm25 0h2v2h-2zm4 0h2v2h-2zm65 0h2v2h-2zm97 0h2v2h-2zm28 0h2v2h-2zm5 0h2v2h-2zm16 0h2v2h-2zm76 0h2v2h-2zm35 0h2v2h-2zm-347 1h2v2h-2zm4 0h2v2h-2zm5 0h2v2h-2zm4 0h2v2h-2zm4 0h2v2h-2zm74 0h2v2h-2zm27 0h2v2h-2zm87 0h2v2h-2zm47 0h2v2h-2zm28 0h2v2h-2zm-228 1h2v2h-2zm84 0h2v2h-2zm32 0h2v2h-2zm54 0h2v2h-2zm-18 1h2v2h-2zm3 0h2v2h-2zm32 0h2v2h-2zm70 0h2v2h-2zm36 0h2v2h-2zm-252 1h2v2h-2zm22 0h2v2h-2zm71 0h2v2h-2zm40 0h2v2h-2zm24 0h2v2h-2zm77 0h2v2h-2zm-127 1h2v2h-2zm11 0h2v2h-2zm7 0h2v2h-2zm24 0h2v2h-2zm8 0h2v2h-2zm30 0h2v2h-2zm43 0h2v2h-2zm15 0h2v2h-2zm4 0h2v2h-2zm-289 1h2v2h-2zm86 0h2v2h-2zm29 0h2v2h-2zm111 0h2v2h-2zm15 0h2v2h-2zm12 0h2v2h-2zm-210 1h2v2h-2zm16 0h2v2h-2zm155 0h2v2h-2zm9 0h2v2h-2zm45 0h2v2h-2zm9 0h2v2h-2zm-143 1h2v2h-2zm11 0h2v2h-2zm15 0h2v2h-2zm2 0h2v2h-2zm11 0h2v2h-2zm17 0h2v2h-2zm10 0h2v2h-2zm19 0h2v2h-2zm30 0h2v2h-2zm32 0h2v2h-2zm-283 1h2v2h-2zm49 0h2v2h-2zm9 0h2v2h-2zm75 0h2v2h-2zm114 0h2v2h-2zm-246 1h2v2h-2zm46 0h2v2h-2zm8 0h2v2h-2zm32 0h2v2h-2zm76 0h2v2h-2zm42 0h2v2h-2zm-166 1h2v2h-2zm9 0h2v2h-2zm92 0h2v2h-2zm4 0h2v2h-2zm33 0h2v2h-2zm93 0h2v2h-2zm-288 1h2v2h-2zm157 0h2v2h-2zm4 0h2v2h-2zm48 0h2v2h-2zm-192 1h2v2h-2zm90 0h2v2h-2zm63 0h2v2h-2zm16 0h2v2h-2zm9 0h2v2h-2zm-92 1h2v2h-2zm50 0h2v2h-2zm28 0h2v2h-2zm16 0h2v2h-2zm27 0h2v2h-2zm-160 1h2v2h-2zm109 0h2v2h-2zm48 0h2v2h-2zm-236 1h2v2h-2zm31 0h2v2h-2zm82 0h2v2h-2zm1 0h2v2h-2zm94 0h2v2h-2zm7 0h2v2h-2zm-219 1h2v2h-2zm170 1h2v2h-2zm25 0h2v2h-2zm4 0h2v2h-2zm9 0h2v2h-2zm12 0h2v2h-2zm23 0h2v2h-2zm-246 1h2v2h-2zm44 0h2v2h-2zm164 0h2v2h-2zm38 0h2v2h-2zm14 0h2v2h-2zm-222 1h2v2h-2zm212 0h2v2h-2zm86 0h2v2h-2zm-299 1h2v2h-2zm1 0h2v2h-2zm216 0h2v2h-2zm9 0h2v2h-2zm73 0h2v2h-2zm-337 1h2v2h-2zm172 0h2v2h-2zm1 0h2v2h-2zm28 0h2v2h-2zm22 0h2v2h-2zm4 0h2v2h-2zm-192 1h2v2h-2zm27 0h2v2h-2zm47 0h2v2h-2zm147 0h2v2h-2zm77 0h2v2h-2zm-305 1h2v2h-2zm4 0h2v2h-2zm10 0h2v2h-2zm297 0h2v2h-2zm-293 1h2v2h-2zm19 0h2v2h-2zm103 0h2v2h-2zm40 0h2v2h-2zm17 0h2v2h-2zm42 0h2v2h-2zm14 0h2v2h-2zm18 0h2v2h-2zm-329 1h2v2h-2zm29 0h2v2h-2zm25 0h2v2h-2zm149 0h2v2h-2zm29 0h2v2h-2zm77 0h2v2h-2zm-229 1h2v2h-2zm59 0h2v2h-2zm147 0h2v2h-2zm63 0h2v2h-2zm7 0h2v2h-2zm16 0h2v2h-2zm-263 1h2v2h-2zm148 0h2v2h-2zm18 1h2v2h-2zm102 0h2v2h-2zm-375 1h2v2h-2zm27 0h2v2h-2zm113 0h2v2h-2zm27 0h2v2h-2zm34 0h2v2h-2zm29 0h2v2h-2zm39 0h2v2h-2zm6 0h2v2h-2zm11 0h2v2h-2zm19 0h2v2h-2zm-196 1h2v2h-2zm56 0h2v2h-2zm119 0h2v2h-2zm6 0h2v2h-2zm4 0h2v2h-2zm55 0h2v2h-2zm20 0h2v2h-2zm-226 1h2v2h-2zm4 0h2v2h-2zm91 0h2v2h-2zm15 0h2v2h-2zm4 0h2v2h-2zm4 0h2v2h-2zm4 0h2v2h-2zm31 0h2v2h-2zm-184 1h2v2h-2zm88 0h2v2h-2zm41 0h2v2h-2zm8 0h2v2h-2zm11 0h2v2h-2zm17 0h2v2h-2zm-126 1h2v2h-2zm52 0h2v2h-2zm26 0h2v2h-2zm16 0h2v2h-2zm12 0h2v2h-2zm-106 1h2v2h-2zm14 0h2v2h-2zm182 0h2v2h-2zm1 0h2v2h-2zm21 0h2v2h-2zm-351 1h2v2h-2zm185 0h2v2h-2zm60 0h2v2h-2zm-150 1h2v2h-2zm4 0h2v2h-2zm89 0h2v2h-2zm20 0h2v2h-2zm38 0h2v2h-2zm15 0h2v2h-2zm-228 1h2v2h-2zm171 0h2v2h-2zm78 0h2v2h-2zm33 0h2v2h-2zm39 0h2v2h-2zm-375 1h2v2h-2zm53 0h2v2h-2zm69 0h2v2h-2zm33 0h2v2h-2zm54 0h2v2h-2zm4 0h2v2h-2zm4 0h2v2h-2zm4 0h2v2h-2zm34 0h2v2h-2zm13 0h2v2h-2zm8 0h2v2h-2zm4 0h2v2h-2zm69 0h2v2h-2zm11 0h2v2h-2zm-302 1h2v2h-2zm110 0h2v2h-2zm2 0h2v2h-2zm33 0h2v2h-2zm4 0h2v2h-2zm65 0h2v2h-2zm43 0h2v2h-2zm17 0h2v2h-2zm25 0h2v2h-2zm18 0h2v2h-2zm-373 1h2v2h-2zm196 0h2v2h-2zm1 0h2v2h-2zm12 0h2v2h-2zm14 0h2v2h-2zm46 0h2v2h-2zm35 0h2v2h-2zm71 0h2v2h-2zm6 0h2v2h-2zm-319 1h2v2h-2zm188 0h2v2h-2zm78 0h2v2h-2zm-279 1h2v2h-2zm9 0h2v2h-2zm8 0h2v2h-2zm246 0h2v2h-2zm35 0h2v2h-2zm5 0h2v2h-2zm18 0h2v2h-2zm8 0h2v2h-2zm-346 1h2v2h-2zm181 0h2v2h-2zm12 0h2v2h-2zm42 0h2v2h-2zm81 0h2v2h-2zm18 0h2v2h-2zm-330 1h2v2h-2zm4 0h2v2h-2zm30 0h2v2h-2zm84 0h2v2h-2zm11 0h2v2h-2zm29 0h2v2h-2zm35 0h2v2h-2zm19 0h2v2h-2zm56 0h2v2h-2zm21 0h2v2h-2zm-255 1h2v2h-2zm83 0h2v2h-2zm13 0h2v2h-2zm50 0h2v2h-2zm16 0h2v2h-2zm-185 1h2v2h-2zm33 0h2v2h-2zm17 0h2v2h-2zm41 0h2v2h-2zm173 0h2v2h-2zm-213 1h2v2h-2zm55 0h2v2h-2zm16 0h2v2h-2zm138 0h2v2h-2zm18 0h2v2h-2zm-264 1h2v2h-2zm27 0h2v2h-2zm203 0h2v2h-2zm15 0h2v2h-2zm55 0h2v2h-2zm3 0h2v2h-2zm-315 1h2v2h-2zm21 0h2v2h-2zm70 0h2v2h-2zm54 0h2v2h-2zm24 0h2v2h-2zm14 0h2v2h-2zm60 0h2v2h-2zm65 0h2v2h-2zm-234 1h2v2h-2zm21 0h2v2h-2zm159 0h2v2h-2zm19 0h2v2h-2zm-235 1h2v2h-2zm13 0h2v2h-2zm70 0h2v2h-2zm21 0h2v2h-2zm97 0h2v2h-2zm8 0h2v2h-2zm60 0h2v2h-2zm10 0h2v2h-2zm-298 1h2v2h-2zm3 0h2v2h-2zm77 0h2v2h-2zm4 0h2v2h-2zm79 0h2v2h-2zm28 0h2v2h-2zm40 0h2v2h-2zm22 0h2v2h-2zm-200 1h2v2h-2zm5 0h2v2h-2zm50 0h2v2h-2zm19 0h2v2h-2zm25 0h2v2h-2zm32 0h2v2h-2zm32 0h2v2h-2zm34 0h2v2h-2zm7 0h2v2h-2zm4 0h2v2h-2zm-264 1h2v2h-2zm1 0h2v2h-2zm35 0h2v2h-2zm89 0h2v2h-2zm90 0h2v2h-2zm53 0h2v2h-2zm35 0h2v2h-2zm-294 1h2v2h-2zm12 0h2v2h-2zm170 0h2v2h-2zm42 0h2v2h-2zm59 0h2v2h-2zm-311 1h2v2h-2zm6 0h2v2h-2zm127 0h2v2h-2zm51 0h2v2h-2zm24 0h2v2h-2zm23 0h2v2h-2zm75 0h2v2h-2zm-360 1h2v2h-2zm26 0h2v2h-2zm103 0h2v2h-2zm9 0h2v2h-2zm1 0h2v2h-2zm57 0h2v2h-2zm8 0h2v2h-2zm24 0h2v2h-2zm57 0h2v2h-2zm33 0h2v2h-2zm-296 1h2v2h-2zm7 0h2v2h-2zm26 0h2v2h-2zm1 0h2v2h-2zm16 0h2v2h-2zm14 0h2v2h-2zm1 0h2v2h-2zm4 0h2v2h-2zm18 0h2v2h-2zm82 0h2v2h-2zm38 0h2v2h-2zm3 0h2v2h-2zm4 0h2v2h-2zm29 0h2v2h-2zm8 0h2v2h-2zm14 0h2v2h-2zm76 0h2v2h-2zm-354 1h2v2h-2zm1 0h2v2h-2zm4 0h2v2h-2zm4 0h2v2h-2zm124 0h2v2h-2zm164 0h2v2h-2zm37 0h2v2h-2zm23 0h2v2h-2zm13 0h2v2h-2zm-371 1h2v2h-2zm51 0h2v2h-2zm35 0h2v2h-2zm41 0h2v2h-2zm34 0h2v2h-2zm25 0h2v2h-2zm12 0h2v2h-2zm49 0h2v2h-2zm4 0h2v2h-2zm9 0h2v2h-2zm85 0h2v2h-2zm-301 1h2v2h-2zm17 0h2v2h-2zm58 0h2v2h-2zm19 0h2v2h-2zm47 0h2v2h-2zm23 0h2v2h-2zm69 0h2v2h-2zm-254 1h2v2h-2zm101 0h2v2h-2zm15 0h2v2h-2zm46 0h2v2h-2zm28 0h2v2h-2zm26 0h2v2h-2zm4 0h2v2h-2zm54 0h2v2h-2zm21 0h2v2h-2zm14 0h2v2h-2zm10 0h2v2h-2zm16 0h2v2h-2zm-358 1h2v2h-2zm24 0h2v2h-2zm30 0h2v2h-2zm4 0h2v2h-2zm31 0h2v2h-2zm112 0h2v2h-2zm84 0h2v2h-2zm4 0h2v2h-2zm4 0h2v2h-2zm5 0h2v2h-2zm30 0h2v2h-2zm55 0h2v2h-2zm-268 1h2v2h-2zm27 0h2v2h-2zm19 0h2v2h-2zm44 0h2v2h-2zm4 0h2v2h-2zm28 0h2v2h-2zm45 0h2v2h-2zm40 0h2v2h-2zm-266 1h2v2h-2zm23 0h2v2h-2zm67 0h2v2h-2zm134 0h2v2h-2zm17 0h2v2h-2zm4 0h2v2h-2zm5 0h2v2h-2zm4 0h2v2h-2zm14 0h2v2h-2zm17 0h2v2h-2zm-284 1h2v2h-2zm35 0h2v2h-2zm68 0h2v2h-2zm12 0h2v2h-2zm1 0h2v2h-2zm13 0h2v2h-2zm9 0h2v2h-2zm85 0h2v2h-2zm33 0h2v2h-2zm45 0h2v2h-2zm-356 1h2v2h-2zm175 0h2v2h-2zm3 0h2v2h-2zm19 0h2v2h-2zm94 0h2v2h-2zm20 0h2v2h-2zm12 0h2v2h-2zm19 0h2v2h-2zm9 0h2v2h-2zm-197 1h2v2h-2zm32 0h2v2h-2zm4 0h2v2h-2zm8 0h2v2h-2zm-48 1h2v2h-2zm17 0h2v2h-2zm16 0h2v2h-2zm66 0h2v2h-2zm32 0h2v2h-2zm9 0h2v2h-2zm56 0h2v2h-2zm-292 1h2v2h-2zm111 0h2v2h-2zm16 0h2v2h-2zm73 0h2v2h-2zm19 0h2v2h-2zm77 0h2v2h-2zm-350 1h2v2h-2zm134 0h2v2h-2zm15 0h2v2h-2zm52 0h2v2h-2zm113 0h2v2h-2zm11 0h2v2h-2zm27 0h2v2h-2zm-188 1h2v2h-2zm88 0h2v2h-2zm-254 1h2v2h-2zm4 0h2v2h-2zm49 0h2v2h-2zm154 0h2v2h-2zm5 0h2v2h-2zm71 0h2v2h-2zm7 0h2v2h-2zm37 0h2v2h-2zm-310 1h2v2h-2zm47 0h2v2h-2zm88 0h2v2h-2zm14 0h2v2h-2zm-29 1h2v2h-2zm29 0h2v2h-2zm42 0h2v2h-2zm108 0h2v2h-2zm-320 1h2v2h-2zm36 0h2v2h-2zm123 0h2v2h-2zm100 0h2v2h-2zm17 0h2v2h-2zm102 0h2v2h-2zm-320 1h2v2h-2zm113 0h2v2h-2zm41 0h2v2h-2zm77 0h2v2h-2zm5 0h2v2h-2zm35 0h2v2h-2zm-247 1h2v2h-2zm48 0h2v2h-2zm251 0h2v2h-2zm-382 1h2v2h-2zm40 0h2v2h-2zm44 0h2v2h-2zm26 0h2v2h-2zm128 0h2v2h-2zm5 0h2v2h-2zm78 0h2v2h-2zm5 0h2v2h-2zm56 0h2v2h-2zm-386 1h2v2h-2zm88 0h2v2h-2zm155 0h2v2h-2zm4 0h2v2h-2zm4 0h2v2h-2zm24 0h2v2h-2zm4 0h2v2h-2zm18 0h2v2h-2zm-235 1h2v2h-2zm24 0h2v2h-2zm25 0h2v2h-2zm53 0h2v2h-2zm12 0h2v2h-2zm35 0h2v2h-2zm4 0h2v2h-2zm24 0h2v2h-2zm16 0h2v2h-2zm16 0h2v2h-2zm12 0h2v2h-2zm15 0h2v2h-2zm1 0h2v2h-2zm27 0h2v2h-2zm36 0h2v2h-2zm-366 1h2v2h-2zm66 0h2v2h-2zm45 0h2v2h-2zm125 0h2v2h-2zm3 0h2v2h-2zm25 0h2v2h-2zm2 0h2v2h-2zm5 0h2v2h-2zm-274 1h2v2h-2zm51 0h2v2h-2zm46 0h2v2h-2zm104 0h2v2h-2zm64 0h2v2h-2zm66 0h2v2h-2zm41 0h2v2h-2zm21 0h2v2h-2zm-393 1h2v2h-2zm49 0h2v2h-2zm4 0h2v2h-2zm4 0h2v2h-2zm33 0h2v2h-2zm4 0h2v2h-2zm5 0h2v2h-2zm158 0h2v2h-2zm4 0h2v2h-2zm10 0h2v2h-2zm4 0h2v2h-2zm-230 1h2v2h-2zm21 0h2v2h-2zm27 0h2v2h-2zm45 0h2v2h-2zm34 0h2v2h-2zm11 0h2v2h-2zm38 0h2v2h-2zm19 0h2v2h-2zm9 0h2v2h-2zm4 0h2v2h-2zm26 0h2v2h-2zm11 0h2v2h-2zm16 0h2v2h-2zm28 0h2v2h-2zm-273 1h2v2h-2zm41 0h2v2h-2zm11 0h2v2h-2zm126 0h2v2h-2zm6 0h2v2h-2zm38 0h2v2h-2zm92 0h2v2h-2zm-372 1h2v2h-2zm38 0h2v2h-2zm160 0h2v2h-2zm3 0h2v2h-2zm37 0h2v2h-2zm46 0h2v2h-2zm42 0h2v2h-2zm12 0h2v2h-2zm4 0h2v2h-2zm48 0h2v2h-2zm5 0h2v2h-2zm-391 1h2v2h-2zm58 0h2v2h-2zm26 0h2v2h-2zm81 0h2v2h-2zm178 0h2v2h-2zm-320 1h2v2h-2zm74 0h2v2h-2zm6 0h2v2h-2zm93 0h2v2h-2zm37 0h2v2h-2zm1 0h2v2h-2zm47 0h2v2h-2zm12 0h2v2h-2zm35 0h2v2h-2zm-325 1h2v2h-2zm10 0h2v2h-2zm48 0h2v2h-2zm150 0h2v2h-2zm89 0h2v2h-2zm19 0h2v2h-2zm13 0h2v2h-2zm-325 1h2v2h-2zm139 0h2v2h-2zm5 0h2v2h-2zm48 0h2v2h-2zm36 0h2v2h-2zm46 0h2v2h-2zm69 0h2v2h-2zm20 0h2v2h-2zm-305 1h2v2h-2zm18 0h2v2h-2zm82 0h2v2h-2zm113 0h2v2h-2zm-256 1h2v2h-2zm75 0h2v2h-2zm58 0h2v2h-2zm81 0h2v2h-2zm66 0h2v2h-2zm14 0h2v2h-2zm-307 1h2v2h-2zm292 0h2v2h-2zm-233 1h2v2h-2zm90 0h2v2h-2zm81 0h2v2h-2zm36 0h2v2h-2zm6 0h2v2h-2zm62 0h2v2h-2zm32 0h2v2h-2zm-210 1h2v2h-2zm73 0h2v2h-2zm67 0h2v2h-2zm8 0h2v2h-2zm-301 1h2v2h-2zm9 0h2v2h-2zm62 0h2v2h-2zm79 0h2v2h-2zm81 0h2v2h-2zm28 0h2v2h-2zm30 0h2v2h-2zm8 0h2v2h-2zm-288 1h2v2h-2zm41 0h2v2h-2zm8 0h2v2h-2zm27 0h2v2h-2zm170 0h2v2h-2zm44 0h2v2h-2zm-71 1h2v2h-2zm7 0h2v2h-2zm16 0h2v2h-2zm16 0h2v2h-2zm96 0h2v2h-2zm25 0h2v2h-2zm-375 1h2v2h-2zm96 0h2v2h-2zm44 0h2v2h-2zm86 0h2v2h-2zm4 0h2v2h-2zm4 0h2v2h-2zm137 0h2v2h-2zm-312 1h2v2h-2zm117 0h2v2h-2zm191 0h2v2h-2zm11 0h2v2h-2zm-331 1h2v2h-2zm3 0h2v2h-2zm21 0h2v2h-2zm22 0h2v2h-2zm50 0h2v2h-2zm75 0h2v2h-2zm34 0h2v2h-2zm33 0h2v2h-2zm11 0h2v2h-2zm54 0h2v2h-2zm-236 1h2v2h-2zm38 0h2v2h-2zm117 0h2v2h-2zm4 0h2v2h-2zm-226 1h2v2h-2zm42 0h2v2h-2zm84 0h2v2h-2zm103 0h2v2h-2zm39 0h2v2h-2zm22 0h2v2h-2zm-190 1h2v2h-2zm16 0h2v2h-2zm59 0h2v2h-2zm27 0h2v2h-2zm16 0h2v2h-2zm20 0h2v2h-2zm6 0h2v2h-2zm3 0h2v2h-2zm17 0h2v2h-2zm53 0h2v2h-2zm14 0h2v2h-2zm-307 1h2v2h-2zm18 0h2v2h-2zm198 0h2v2h-2zm11 0h2v2h-2zm9 0h2v2h-2zm12 0h2v2h-2zm34 0h2v2h-2zm-306 1h2v2h-2zm65 0h2v2h-2zm39 0h2v2h-2zm2 0h2v2h-2zm72 0h2v2h-2zm20 0h2v2h-2zm16 0h2v2h-2zm37 0h2v2h-2zm-20 1h2v2h-2zm24 0h2v2h-2zm-336 1h2v2h-2zm135 0h2v2h-2zm53 0h2v2h-2zm75 0h2v2h-2zm12 0h2v2h-2zm16 0h2v2h-2zm28 0h2v2h-2zm1 0h2v2h-2zm19 0h2v2h-2zm16 0h2v2h-2zm31 0h2v2h-2zm26 0h2v2h-2zm-400 1h2v2h-2zm91 0h2v2h-2zm21 0h2v2h-2zm143 0h2v2h-2zm4 0h2v2h-2zm30 0h2v2h-2zm97 0h2v2h-2zm-408 1h2v2h-2zm14 0h2v2h-2zm3 0h2v2h-2zm9 0h2v2h-2zm66 0h2v2h-2zm148 0h2v2h-2zm67 0h2v2h-2zm8 0h2v2h-2zm5 0h2v2h-2zm-268 1h2v2h-2zm58 0h2v2h-2zm90 0h2v2h-2zm33 0h2v2h-2zm6 0h2v2h-2zm4 0h2v2h-2zm55 0h2v2h-2zm25 0h2v2h-2zm1 0h2v2h-2zm5 0h2v2h-2zm9 0h2v2h-2zm56 0h2v2h-2zm-257 1h2v2h-2zm110 0h2v2h-2zm50 0h2v2h-2zm7 0h2v2h-2zm24 0h2v2h-2zm20 0h2v2h-2zm18 0h2v2h-2zm55 0h2v2h-2zm-302 1h2v2h-2zm116 0h2v2h-2zm46 0h2v2h-2zm128 0h2v2h-2zm-358 1h2v2h-2zm42 0h2v2h-2zm18 0h2v2h-2zm87 0h2v2h-2zm53 0h2v2h-2zm81 0h2v2h-2zm-134 1h2v2h-2zm34 0h2v2h-2zm70 0h2v2h-2zm22 0h2v2h-2zm45 0h2v2h-2zm-317 1h2v2h-2zm244 0h2v2h-2zm39 0h2v2h-2zm13 0h2v2h-2zm-253 1h2v2h-2zm26 0h2v2h-2zm107 0h2v2h-2zm27 0h2v2h-2zm155 0h2v2h-2zm-262 1h2v2h-2zm47 0h2v2h-2zm144 0h2v2h-2zm29 0h2v2h-2zm-317 1h2v2h-2zm173 0h2v2h-2zm77 0h2v2h-2zm64 0h2v2h-2zm-313 1h2v2h-2zm94 0h2v2h-2zm45 0h2v2h-2zm29 0h2v2h-2zm35 0h2v2h-2zm40 0h2v2h-2zm29 0h2v2h-2zm33 0h2v2h-2zm4 0h2v2h-2zm51 0h2v2h-2zm-314 1h2v2h-2zm5 0h2v2h-2zm17 0h2v2h-2zm222 0h2v2h-2zm-311 1h2v2h-2zm185 0h2v2h-2zm36 0h2v2h-2zm102 0h2v2h-2zm14 0h2v2h-2zm-339 1h2v2h-2zm6 0h2v2h-2zm4 0h2v2h-2zm65 0h2v2h-2zm84 0h2v2h-2zm24 0h2v2h-2zm4 0h2v2h-2zm137 0h2v2h-2zm14 0h2v2h-2zm45 0h2v2h-2zm3 0h2v2h-2zm-362 1h2v2h-2zm47 0h2v2h-2zm44 0h2v2h-2zm104 0h2v2h-2zm41 0h2v2h-2zm6 0h2v2h-2zm6 0h2v2h-2zm24 0h2v2h-2zm66 0h2v2h-2zm-218 1h2v2h-2zm12 0h2v2h-2zm24 0h2v2h-2zm84 0h2v2h-2zm51 0h2v2h-2zm72 0h2v2h-2zm-422 1h2v2h-2zm9 0h2v2h-2zm241 0h2v2h-2zm125 0h2v2h-2zm34 0h2v2h-2zm-396 1h2v2h-2zm20 0h2v2h-2zm213 0h2v2h-2zm44 0h2v2h-2zm-285 1h2v2h-2zm12 0h2v2h-2zm44 0h2v2h-2zm44 0h2v2h-2zm34 0h2v2h-2zm4 0h2v2h-2zm6 0h2v2h-2zm38 0h2v2h-2zm55 0h2v2h-2zm12 0h2v2h-2zm48 0h2v2h-2zm4 0h2v2h-2zm25 0h2v2h-2zm28 0h2v2h-2zm17 0h2v2h-2zm-373 1h2v2h-2zm18 0h2v2h-2zm45 0h2v2h-2zm147 0h2v2h-2zm25 0h2v2h-2zm39 0h2v2h-2zm74 0h2v2h-2zm29 0h2v2h-2zm7 0h2v2h-2zm-360 1h2v2h-2zm4 0h2v2h-2zm33 0h2v2h-2zm83 0h2v2h-2zm37 0h2v2h-2zm33 0h2v2h-2zm17 0h2v2h-2zm173 0h2v2h-2zm-382 1h2v2h-2zm50 0h2v2h-2zm55 0h2v2h-2zm91 0h2v2h-2zm5 0h2v2h-2zm4 0h2v2h-2zm60 0h2v2h-2zm67 0h2v2h-2zm19 0h2v2h-2zm4 0h2v2h-2zm3 0h2v2h-2zm-378 1h2v2h-2zm62 0h2v2h-2zm36 0h2v2h-2zm23 0h2v2h-2zm22 0h2v2h-2zm32 0h2v2h-2zm5 0h2v2h-2zm59 0h2v2h-2zm58 0h2v2h-2zm3 0h2v2h-2zm26 0h2v2h-2zm18 0h2v2h-2zm35 0h2v2h-2zm-381 1h2v2h-2zm272 0h2v2h-2zm95 0h2v2h-2zm18 0h2v2h-2zm-360 1h2v2h-2zm43 0h2v2h-2zm29 0h2v2h-2zm48 0h2v2h-2zm71 0h2v2h-2zm49 0h2v2h-2zm77 0h2v2h-2zm-270 1h2v2h-2zm47 0h2v2h-2zm55 0h2v2h-2zm95 0h2v2h-2zm19 0h2v2h-2zm41 0h2v2h-2zm9 0h2v2h-2zm33 0h2v2h-2zm-368 1h2v2h-2zm45 0h2v2h-2zm28 0h2v2h-2zm17 0h2v2h-2zm51 0h2v2h-2zm69 0h2v2h-2zm48 0h2v2h-2zm40 0h2v2h-2zm27 0h2v2h-2zm60 0h2v2h-2zm-389 1h2v2h-2zm82 0h2v2h-2zm4 0h2v2h-2zm4 0h2v2h-2zm29 0h2v2h-2zm52 0h2v2h-2zm31 0h2v2h-2zm48 0h2v2h-2zm85 0h2v2h-2zm32 0h2v2h-2zm-341 1h2v2h-2zm121 0h2v2h-2zm107 0h2v2h-2zm75 0h2v2h-2zm-280 1h2v2h-2zm4 0h2v2h-2zm169 0h2v2h-2zm4 0h2v2h-2zm32 0h2v2h-2zm2 0h2v2h-2zm30 0h2v2h-2zm42 0h2v2h-2zm40 0h2v2h-2zm-369 1h2v2h-2zm3 0h2v2h-2zm39 0h2v2h-2zm12 0h2v2h-2zm88 0h2v2h-2zm23 0h2v2h-2zm22 0h2v2h-2zm25 0h2v2h-2zm32 0h2v2h-2zm54 0h2v2h-2zm2 0h2v2h-2zm10 0h2v2h-2zm14 0h2v2h-2zm42 0h2v2h-2zm21 0h2v2h-2zm-271 1h2v2h-2zm82 0h2v2h-2zm18 0h2v2h-2zm-194 1h2v2h-2zm16 0h2v2h-2zm20 0h2v2h-2zm86 0h2v2h-2zm47 0h2v2h-2zm66 0h2v2h-2zm-255 1h2v2h-2zm4 0h2v2h-2zm56 0h2v2h-2zm100 0h2v2h-2zm76 0h2v2h-2zm3 0h2v2h-2zm1 0h2v2h-2zm25 0h2v2h-2zm4 0h2v2h-2zm51 0h2v2h-2zm5 0h2v2h-2zm42 0h2v2h-2zm-351 1h2v2h-2zm16 0h2v2h-2zm68 0h2v2h-2zm42 0h2v2h-2zm69 0h2v2h-2zm29 0h2v2h-2zm22 0h2v2h-2zm32 0h2v2h-2zm5 0h2v2h-2zm2 0h2v2h-2zm65 0h2v2h-2zm20 0h2v2h-2zm-388 1h2v2h-2zm4 0h2v2h-2zm2 0h2v2h-2zm4 0h2v2h-2zm4 0h2v2h-2zm52 0h2v2h-2zm50 0h2v2h-2zm118 0h2v2h-2zm-203 1h2v2h-2zm38 0h2v2h-2zm74 0h2v2h-2zm4 0h2v2h-2zm12 0h2v2h-2zm32 0h2v2h-2zm38 0h2v2h-2zm1 0h2v2h-2zm27 0h2v2h-2zm49 0h2v2h-2zm12 0h2v2h-2zm-322 1h2v2h-2zm155 0h2v2h-2zm4 0h2v2h-2zm89 0h2v2h-2zm15 0h2v2h-2zm2 0h2v2h-2zm49 0h2v2h-2zm4 0h2v2h-2zm11 0h2v2h-2zm45 0h2v2h-2zm-297 1h2v2h-2zm135 0h2v2h-2zm49 0h2v2h-2zm38 0h2v2h-2zm93 0h2v2h-2zm-395 1h2v2h-2zm14 0h2v2h-2zm20 0h2v2h-2zm58 0h2v2h-2zm32 0h2v2h-2zm113 0h2v2h-2zm140 0h2v2h-2zm-287 1h2v2h-2zm39 0h2v2h-2zm20 0h2v2h-2zm13 0h2v2h-2zm35 0h2v2h-2zm-113 1h2v2h-2zm4 0h2v2h-2zm7 0h2v2h-2zm4 0h2v2h-2zm155 0h2v2h-2zm7 0h2v2h-2zm70 0h2v2h-2zm48 0h2v2h-2zm-276 1h2v2h-2zm110 0h2v2h-2zm26 0h2v2h-2zm16 0h2v2h-2zm47 0h2v2h-2zm76 0h2v2h-2zm15 0h2v2h-2zm-377 1h2v2h-2zm91 0h2v2h-2zm19 0h2v2h-2zm20 0h2v2h-2zm13 0h2v2h-2zm21 0h2v2h-2zm102 0h2v2h-2zm81 0h2v2h-2zm11 0h2v2h-2zm-354 1h2v2h-2zm4 0h2v2h-2zm62 0h2v2h-2zm25 0h2v2h-2zm4 0h2v2h-2zm11 0h2v2h-2zm180 0h2v2h-2zm4 0h2v2h-2zm57 0h2v2h-2zm22 0h2v2h-2zm18 0h2v2h-2zm-321 1h2v2h-2zm33 0h2v2h-2zm21 0h2v2h-2zm2 0h2v2h-2zm15 0h2v2h-2zm44 0h2v2h-2zm8 0h2v2h-2zm1 0h2v2h-2zm68 0h2v2h-2zm23 0h2v2h-2zm13 0h2v2h-2zm4 0h2v2h-2zm11 0h2v2h-2zm15 0h2v2h-2zm4 0h2v2h-2zm6 0h2v2h-2zm7 0h2v2h-2zm10 0h2v2h-2zm10 0h2v2h-2zm4 0h2v2h-2zm1 0h2v2h-2zm21 0h2v2h-2zm4 0h2v2h-2zm-336 1h2v2h-2zm48 0h2v2h-2zm6 0h2v2h-2zm5 0h2v2h-2zm4 0h2v2h-2zm59 0h2v2h-2zm8 0h2v2h-2zm5 0h2v2h-2zm29 0h2v2h-2zm20 0h2v2h-2zm1 0h2v2h-2zm15 0h2v2h-2zm23 0h2v2h-2zm4 0h2v2h-2zm20 0h2v2h-2zm61 0h2v2h-2zm-254 1h2v2h-2zm68 0h2v2h-2zm143 0h2v2h-2zm11 0h2v2h-2zm-330 1h2v2h-2zm65 0h2v2h-2zm41 0h2v2h-2zm118 0h2v2h-2zm19 0h2v2h-2zm62 0h2v2h-2zm78 0h2v2h-2zm10 0h2v2h-2zm-393 1h2v2h-2zm10 0h2v2h-2zm54 0h2v2h-2zm71 0h2v2h-2zm76 0h2v2h-2zm7 0h2v2h-2zm89 0h2v2h-2zm11 0h2v2h-2zm23 0h2v2h-2zm24 0h2v2h-2zm-334 1h2v2h-2zm80 0h2v2h-2zm19 0h2v2h-2zm61 0h2v2h-2zm16 0h2v2h-2zm8 0h2v2h-2zm31 0h2v2h-2zm29 0h2v2h-2zm6 0h2v2h-2zm91 0h2v2h-2zm11 0h2v2h-2zm-206 1h2v2h-2zm131 0h2v2h-2zm51 0h2v2h-2zm4 0h2v2h-2zm5 0h2v2h-2zm11 0h2v2h-2zm-402 1h2v2h-2zm19 0h2v2h-2zm3 0h2v2h-2zm64 0h2v2h-2zm45 0h2v2h-2zm235 0h2v2h-2zm12 0h2v2h-2zm-375 1h2v2h-2zm49 0h2v2h-2zm36 0h2v2h-2zm63 0h2v2h-2zm5 0h2v2h-2zm59 0h2v2h-2zm114 0h2v2h-2zm10 0h2v2h-2zm35 0h2v2h-2zm20 0h2v2h-2zm5 0h2v2h-2zm-392 1h2v2h-2zm9 0h2v2h-2zm119 0h2v2h-2zm22 0h2v2h-2zm141 0h2v2h-2zm35 0h2v2h-2zm40 0h2v2h-2zm-218 1h2v2h-2zm46 0h2v2h-2zm70 0h2v2h-2zm33 0h2v2h-2zm94 0h2v2h-2zm-388 1h2v2h-2zm2 0h2v2h-2zm11 0h2v2h-2zm14 0h2v2h-2zm92 0h2v2h-2zm207 0h2v2h-2zm30 0h2v2h-2zm-225 1h2v2h-2zm13 0h2v2h-2zm6 0h2v2h-2zm87 0h2v2h-2zm27 0h2v2h-2zm54 0h2v2h-2zm42 0h2v2h-2zm-277 1h2v2h-2zm43 0h2v2h-2zm65 0h2v2h-2zm58 0h2v2h-2zm39 0h2v2h-2zm103 0h2v2h-2zm-376 1h2v2h-2zm102 0h2v2h-2zm126 0h2v2h-2zm7 0h2v2h-2zm44 0h2v2h-2zm17 0h2v2h-2zm12 0h2v2h-2zm-318 1h2v2h-2zm81 0h2v2h-2zm73 0h2v2h-2zm9 0h2v2h-2zm97 0h2v2h-2zm90 0h2v2h-2zm-211 1h2v2h-2zm18 0h2v2h-2zm77 0h2v2h-2zm24 0h2v2h-2zm53 0h2v2h-2zm44 0h2v2h-2zm-285 1h2v2h-2zm15 0h2v2h-2zm74 0h2v2h-2zm110 0h2v2h-2zm14 0h2v2h-2zm104 0h2v2h-2zm-298 1h2v2h-2zm20 0h2v2h-2zm54 0h2v2h-2zm39 0h2v2h-2zm45 0h2v2h-2zm43 0h2v2h-2zm28 0h2v2h-2zm41 0h2v2h-2zm-288 1h2v2h-2zm22 0h2v2h-2zm4 0h2v2h-2zm9 0h2v2h-2zm30 0h2v2h-2zm20 0h2v2h-2zm12 0h2v2h-2zm46 0h2v2h-2zm124 0h2v2h-2zm5 0h2v2h-2zm4 0h2v2h-2zm4 0h2v2h-2zm3 0h2v2h-2zm9 0h2v2h-2zm-386 1h2v2h-2zm57 0h2v2h-2zm60 0h2v2h-2zm8 0h2v2h-2zm69 0h2v2h-2zm62 0h2v2h-2zm24 0h2v2h-2zm37 0h2v2h-2zm16 0h2v2h-2zm24 0h2v2h-2zm17 0h2v2h-2zm7 0h2v2h-2zm9 0h2v2h-2zm-298 1h2v2h-2zm37 0h2v2h-2zm133 0h2v2h-2zm14 0h2v2h-2zm5 0h2v2h-2zm26 0h2v2h-2zm8 0h2v2h-2zm40 0h2v2h-2zm34 0h2v2h-2zm5 0h2v2h-2zm15 0h2v2h-2zm-320 1h2v2h-2zm8 0h2v2h-2zm28 0h2v2h-2zm73 0h2v2h-2zm24 0h2v2h-2zm50 0h2v2h-2zm67 0h2v2h-2zm12 0h2v2h-2zm26 0h2v2h-2zm8 0h2v2h-2zm-382 1h2v2h-2zm40 0h2v2h-2zm57 0h2v2h-2zm15 0h2v2h-2zm16 0h2v2h-2zm28 0h2v2h-2zm20 0h2v2h-2zm53 0h2v2h-2zm7 0h2v2h-2zm92 0h2v2h-2zm67 0h2v2h-2zm-360 1h2v2h-2zm9 0h2v2h-2zm32 0h2v2h-2zm123 0h2v2h-2zm53 0h2v2h-2zm28 0h2v2h-2zm24 0h2v2h-2zm4 0h2v2h-2zm4 0h2v2h-2zm4 0h2v2h-2zm69 0h2v2h-2zm14 0h2v2h-2zm4 0h2v2h-2zm5 0h2v2h-2zm-379 1h2v2h-2zm5 0h2v2h-2zm38 0h2v2h-2zm8 0h2v2h-2zm4 0h2v2h-2zm82 0h2v2h-2zm51 0h2v2h-2zm54 0h2v2h-2zm31 0h2v2h-2zm3 0h2v2h-2zm11 0h2v2h-2zm4 0h2v2h-2zm4 0h2v2h-2zm10 0h2v2h-2zm16 0h2v2h-2zm26 0h2v2h-2zm10 0h2v2h-2zm-338 1h2v2h-2zm20 0h2v2h-2zm35 0h2v2h-2zm56 0h2v2h-2zm44 0h2v2h-2zm25 0h2v2h-2zm92 0h2v2h-2zm-318 1h2v2h-2zm24 0h2v2h-2zm38 0h2v2h-2zm19 0h2v2h-2zm5 0h2v2h-2zm11 0h2v2h-2zm10 0h2v2h-2zm67 0h2v2h-2zm61 0h2v2h-2zm15 0h2v2h-2zm3 0h2v2h-2zm70 0h2v2h-2zm5 0h2v2h-2zm-324 1h2v2h-2zm54 0h2v2h-2zm85 0h2v2h-2zm155 0h2v2h-2zm29 0h2v2h-2zm59 0h2v2h-2zm-356 1h2v2h-2zm31 0h2v2h-2zm78 0h2v2h-2zm65 0h2v2h-2zm101 0h2v2h-2zm20 0h2v2h-2zm24 0h2v2h-2zm23 0h2v2h-2zm-288 1h2v2h-2zm16 0h2v2h-2zm5 0h2v2h-2zm41 0h2v2h-2zm10 0h2v2h-2zm135 0h2v2h-2zm40 0h2v2h-2zm-325 1h2v2h-2zm4 0h2v2h-2zm90 0h2v2h-2zm178 0h2v2h-2zm43 0h2v2h-2zm13 0h2v2h-2zm18 0h2v2h-2zm16 0h2v2h-2zm-212 1h2v2h-2zm19 0h2v2h-2zm116 0h2v2h-2zm5 0h2v2h-2zm2 0h2v2h-2zm3 0h2v2h-2zm7 0h2v2h-2zm4 0h2v2h-2zm5 0h2v2h-2zm39 0h2v2h-2zm4 0h2v2h-2zm4 0h2v2h-2zm23 0h2v2h-2zm-366 1h2v2h-2zm7 0h2v2h-2zm68 0h2v2h-2zm52 0h2v2h-2zm6 0h2v2h-2zm51 0h2v2h-2zm57 0h2v2h-2zm76 0h2v2h-2zm-253 1h2v2h-2zm8 0h2v2h-2zm57 0h2v2h-2zm23 0h2v2h-2zm1 0h2v2h-2zm86 0h2v2h-2zm6 0h2v2h-2zm4 0h2v2h-2zm105 0h2v2h-2zm5 0h2v2h-2zm4 0h2v2h-2zm4 0h2v2h-2zm-302 1h2v2h-2zm73 0h2v2h-2zm18 0h2v2h-2zm194 0h2v2h-2zm21 0h2v2h-2zm-322 1h2v2h-2zm132 0h2v2h-2zm94 0h2v2h-2zm45 0h2v2h-2zm-313 1h2v2h-2zm15 0h2v2h-2zm46 0h2v2h-2zm52 0h2v2h-2zm6 0h2v2h-2zm144 0h2v2h-2zm77 0h2v2h-2zm-346 1h2v2h-2zm62 0h2v2h-2zm7 0h2v2h-2zm89 0h2v2h-2zm19 1h2v2h-2zm3 0h2v2h-2zm99 0h2v2h-2zm94 0h2v2h-2zm-215 1h2v2h-2zm3 0h2v2h-2zm114 0h2v2h-2zm46 0h2v2h-2zm-322 1h2v2h-2zm7 0h2v2h-2zm61 0h2v2h-2zm56 0h2v2h-2zm50 0h2v2h-2zm8 0h2v2h-2zm96 0h2v2h-2zm68 0h2v2h-2zm-284 1h2v2h-2zm104 0h2v2h-2zm4 0h2v2h-2zm30 0h2v2h-2zm128 0h2v2h-2zm39 0h2v2h-2zm-226 1h2v2h-2zm20 0h2v2h-2zm119 0h2v2h-2zm44 0h2v2h-2zm51 0h2v2h-2zm-396 1h2v2h-2zm146 0h2v2h-2zm115 0h2v2h-2zm44 0h2v2h-2zm39 0h2v2h-2zm-314 1h2v2h-2zm172 0h2v2h-2zm13 0h2v2h-2zm94 0h2v2h-2zm57 0h2v2h-2zm-362 1h2v2h-2zm17 0h2v2h-2zm59 0h2v2h-2zm23 0h2v2h-2zm210 0h2v2h-2zm-150 1h2v2h-2zm19 0h2v2h-2zm82 0h2v2h-2zm28 0h2v2h-2zm18 0h2v2h-2zm7 0h2v2h-2zm79 0h2v2h-2zm-380 1h2v2h-2zm17 0h2v2h-2zm51 0h2v2h-2zm170 0h2v2h-2zm67 0h2v2h-2zm22 0h2v2h-2zm-324 1h2v2h-2zm18 0h2v2h-2zm40 0h2v2h-2zm124 0h2v2h-2zm94 0h2v2h-2zm71 0h2v2h-2zm-361 1h2v2h-2zm36 0h2v2h-2zm123 0h2v2h-2zm18 0h2v2h-2zm6 0h2v2h-2zm4 0h2v2h-2zm133 0h2v2h-2zm-280 1h2v2h-2zm29 0h2v2h-2zm13 0h2v2h-2zm78 0h2v2h-2zm31 0h2v2h-2zm70 0h2v2h-2zm45 0h2v2h-2zm1 0h2v2h-2zm8 0h2v2h-2zm9 0h2v2h-2zm66 0h2v2h-2zm4 0h2v2h-2zm4 0h2v2h-2zm-365 1h2v2h-2zm11 0h2v2h-2zm27 0h2v2h-2zm15 0h2v2h-2zm54 0h2v2h-2zm40 0h2v2h-2zm75 0h2v2h-2zm56 0h2v2h-2zm8 0h2v2h-2zm9 0h2v2h-2zm4 0h2v2h-2zm4 0h2v2h-2zm-323 1h2v2h-2zm35 0h2v2h-2zm5 0h2v2h-2zm8 0h2v2h-2zm4 0h2v2h-2zm41 0h2v2h-2zm256 0h2v2h-2zm-332 1h2v2h-2zm27 0h2v2h-2zm99 0h2v2h-2zm244 0h2v2h-2zm-325 1h2v2h-2zm27 0h2v2h-2zm49 0h2v2h-2zm3 0h2v2h-2zm235 0h2v2h-2zm-338 1h2v2h-2zm27 0h2v2h-2zm171 0h2v2h-2zm-161 1h2v2h-2zm44 0h2v2h-2zm233 0h2v2h-2zm21 0h2v2h-2zm-354 1h2v2h-2zm31 0h2v2h-2zm93 0h2v2h-2zm56 0h2v2h-2zm157 0h2v2h-2zm4 0h2v2h-2zm4 0h2v2h-2zm4 0h2v2h-2zm-326 1h2v2h-2zm4 0h2v2h-2zm5 0h2v2h-2zm188 0h2v2h-2zm-172 1h2v2h-2zm98 0h2v2h-2zm147 0h2v2h-2zm42 0h2v2h-2zm-281 1h2v2h-2zm40 0h2v2h-2zm5 0h2v2h-2zm79 0h2v2h-2zm38 0h2v2h-2zm26 0h2v2h-2zm4 0h2v2h-2zm-245 1h2v2h-2zm33 0h2v2h-2zm15 0h2v2h-2zm35 0h2v2h-2zm2 0h2v2h-2zm4 0h2v2h-2zm8 0h2v2h-2zm125 0h2v2h-2zm7 0h2v2h-2zm-175 1h2v2h-2zm44 0h2v2h-2zm26 0h2v2h-2zm4 0h2v2h-2zm56 0h2v2h-2zm54 0h2v2h-2zm61 0h2v2h-2zm33 0h2v2h-2zm-349 1h2v2h-2zm117 0h2v2h-2zm20 0h2v2h-2zm112 0h2v2h-2zm2 0h2v2h-2zm114 0h2v2h-2zm-312 1h2v2h-2zm138 0h2v2h-2zm2 0h2v2h-2zm1 0h2v2h-2zm56 0h2v2h-2zm-187 1h2v2h-2zm34 0h2v2h-2zm104 0h2v2h-2zm167 0h2v2h-2zm-295 1h2v2h-2zm62 0h2v2h-2zm62 0h2v2h-2zm86 0h2v2h-2zm5 0h2v2h-2zm27 0h2v2h-2zm16 0h2v2h-2zm18 0h2v2h-2zm-289 1h2v2h-2zm202 0h2v2h-2zm4 0h2v2h-2zm5 0h2v2h-2zm4 0h2v2h-2zm4 0h2v2h-2zm10 0h2v2h-2zm26 0h2v2h-2zm4 0h2v2h-2zm44 0h2v2h-2zm12 0h2v2h-2zm-321 1h2v2h-2zm19 0h2v2h-2zm59 0h2v2h-2zm53 0h2v2h-2zm67 0h2v2h-2zm31 0h2v2h-2zm3 0h2v2h-2zm1 0h2v2h-2zm24 0h2v2h-2zm12 0h2v2h-2zm-266 1h2v2h-2zm21 0h2v2h-2zm180 0h2v2h-2zm11 0h2v2h-2zm4 0h2v2h-2zm4 0h2v2h-2zm14 0h2v2h-2zm16 0h2v2h-2zm-306 1h2v2h-2zm198 0h2v2h-2zm3 0h2v2h-2zm55 0h2v2h-2zm7 0h2v2h-2zm17 0h2v2h-2zm46 0h2v2h-2zm5 0h2v2h-2zm15 0h2v2h-2zm14 0h2v2h-2zm-356 1h2v2h-2zm199 0h2v2h-2zm2 0h2v2h-2zm5 0h2v2h-2zm20 0h2v2h-2zm4 0h2v2h-2zm5 0h2v2h-2zm4 0h2v2h-2zm16 0h2v2h-2zm35 0h2v2h-2zm37 0h2v2h-2zm1 0h2v2h-2zm41 0h2v2h-2zm-318 1h2v2h-2zm24 0h2v2h-2zm127 0h2v2h-2zm20 0h2v2h-2zm21 0h2v2h-2zm3 0h2v2h-2zm34 0h2v2h-2zm16 0h2v2h-2zm3 0h2v2h-2zm55 0h2v2h-2zm1 0h2v2h-2zm-137 1h2v2h-2zm4 0h2v2h-2zm3 0h2v2h-2zm100 0h2v2h-2zm6 0h2v2h-2zm-283 1h2v2h-2zm30 0h2v2h-2zm136 0h2v2h-2zm32 0h2v2h-2zm47 0h2v2h-2zm43 0h2v2h-2zm5 0h2v2h-2zm25 0h2v2h-2zm-400 1h2v2h-2zm4 0h2v2h-2zm187 0h2v2h-2zm53 0h2v2h-2zm42 0h2v2h-2zm2 0h2v2h-2zm29 0h2v2h-2zm56 0h2v2h-2zm19 0h2v2h-2zm-396 1h2v2h-2zm244 0h2v2h-2zm9 0h2v2h-2zm83 0h2v2h-2zm30 0h2v2h-2zm25 0h2v2h-2zm9 0h2v2h-2zm-401 1h2v2h-2zm237 0h2v2h-2zm4 0h2v2h-2zm139 0h2v2h-2zm-295 1h2v2h-2zm147 0h2v2h-2zm55 0h2v2h-2zm22 0h2v2h-2zm15 0h2v2h-2zm9 0h2v2h-2zm71 0h2v2h-2zm-405 1h2v2h-2zm82 0h2v2h-2zm116 0h2v2h-2zm4 0h2v2h-2zm4 0h2v2h-2zm87 0h2v2h-2zm1 0h2v2h-2zm-215 1h2v2h-2zm119 0h2v2h-2zm31 0h2v2h-2zm91 0h2v2h-2zm17 0h2v2h-2zm3 0h2v2h-2zm30 0h2v2h-2zm20 0h2v2h-2zm-208 1h2v2h-2zm27 0h2v2h-2zm-192 1h2v2h-2zm37 0h2v2h-2zm34 0h2v2h-2zm24 0h2v2h-2zm115 0h2v2h-2zm61 0h2v2h-2zm8 0h2v2h-2zm31 0h2v2h-2zm7 0h2v2h-2zm-332 1h2v2h-2zm192 0h2v2h-2zm102 0h2v2h-2zm76 0h2v2h-2zm3 0h2v2h-2zm17 0h2v2h-2zm-208 1h2v2h-2zm116 0h2v2h-2zm35 0h2v2h-2zm7 0h2v2h-2zm-327 1h2v2h-2zm6 0h2v2h-2zm170 0h2v2h-2zm2 0h2v2h-2zm111 0h2v2h-2zm28 0h2v2h-2zm-234 1h2v2h-2zm13 0h2v2h-2zm115 0h2v2h-2zm82 0h2v2h-2zm19 0h2v2h-2zm61 0h2v2h-2zm-385 1h2v2h-2zm8 0h2v2h-2zm9 0h2v2h-2zm16 0h2v2h-2zm151 0h2v2h-2zm101 0h2v2h-2zm10 0h2v2h-2zm14 0h2v2h-2zm4 0h2v2h-2zm4 0h2v2h-2zm4 0h2v2h-2zm4 0h2v2h-2zm17 0h2v2h-2zm29 0h2v2h-2zm-338 1h2v2h-2zm152 0h2v2h-2zm83 0h2v2h-2zm-263 1h2v2h-2zm180 0h2v2h-2zm5 0h2v2h-2zm34 0h2v2h-2zm98 0h2v2h-2zm23 0h2v2h-2zm-249 1h2v2h-2zm202 0h2v2h-2zm44 0h2v2h-2zm-344 1h2v2h-2zm4 0h2v2h-2zm14 0h2v2h-2zm268 0h2v2h-2zm34 0h2v2h-2zm31 0h2v2h-2zm23 0h2v2h-2zm-340 1h2v2h-2zm65 0h2v2h-2zm43 0h2v2h-2zm32 0h2v2h-2zm129 0h2v2h-2zm13 0h2v2h-2zm25 0h2v2h-2zm-153 1h2v2h-2zm4 0h2v2h-2zm36 0h2v2h-2zm79 0h2v2h-2zm5 0h2v2h-2zm43 0h2v2h-2zm-252 1h2v2h-2zm255 0h2v2h-2zm1 0h2v2h-2zm12 0h2v2h-2zm3 0h2v2h-2zm-357 1h2v2h-2zm122 0h2v2h-2zm145 0h2v2h-2zm22 0h2v2h-2zm48 0h2v2h-2zm9 0h2v2h-2zm4 0h2v2h-2zm-335 1h2v2h-2zm1 0h2v2h-2zm143 0h2v2h-2zm15 0h2v2h-2zm40 0h2v2h-2zm79 0h2v2h-2zm6 0h2v2h-2zm-122 1h2v2h-2zm87 0h2v2h-2zm-46 1h2v2h-2zm4 0h2v2h-2zm38 0h2v2h-2zm37 0h2v2h-2zm-70 1h2v2h-2zm4 0h2v2h-2zm1 0h2v2h-2zm3 0h2v2h-2zm4 0h2v2h-2zm4 0h2v2h-2zm5 0h2v2h-2zm4 0h2v2h-2zm85 0h2v2h-2zm11 0h2v2h-2zm-346 1h2v2h-2zm2 0h2v2h-2zm156 0h2v2h-2zm14 0h2v2h-2zm73 0h2v2h-2zm116 0h2v2h-2zm10 0h2v2h-2zm-384 1h2v2h-2zm19 0h2v2h-2zm2 0h2v2h-2zm253 0h2v2h-2zm80 0h2v2h-2zm4 0h2v2h-2zm5 0h2v2h-2zm17 0h2v2h-2zm-335 1h2v2h-2zm3 0h2v2h-2zm7 0h2v2h-2zm118 0h2v2h-2zm4 0h2v2h-2zm4 0h2v2h-2zm169 0h2v2h-2zm3 0h2v2h-2zm23 0h2v2h-2zm-386 1h2v2h-2zm3 0h2v2h-2zm6 0h2v2h-2zm13 0h2v2h-2zm144 0h2v2h-2zm105 0h2v2h-2zm14 0h2v2h-2zm60 0h2v2h-2zm3 0h2v2h-2zm4 0h2v2h-2zm4 0h2v2h-2zm21 0h2v2h-2zm-370 1h2v2h-2zm123 0h2v2h-2zm204 0h2v2h-2zm18 0h2v2h-2zm29 0h2v2h-2zm-313 1h2v2h-2zm94 0h2v2h-2zm168 0h2v2h-2zm7 0h2v2h-2zm4 0h2v2h-2zm8 0h2v2h-2zm-318 1h2v2h-2zm212 0h2v2h-2zm42 0h2v2h-2zm99 0h2v2h-2zm-386 1h2v2h-2zm12 0h2v2h-2zm10 0h2v2h-2zm51 0h2v2h-2zm88 0h2v2h-2zm93 0h2v2h-2zm17 0h2v2h-2zm16 0h2v2h-2zm61 0h2v2h-2zm-330 1h2v2h-2zm4 0h2v2h-2zm21 0h2v2h-2zm133 0h2v2h-2zm132 0h2v2h-2zm22 0h2v2h-2zm60 0h2v2h-2zm-390 1h2v2h-2zm39 0h2v2h-2zm182 0h2v2h-2zm15 0h2v2h-2zm47 0h2v2h-2zm29 0h2v2h-2zm-278 1h2v2h-2zm1 0h2v2h-2zm123 0h2v2h-2zm92 0h2v2h-2zm21 0h2v2h-2zm36 0h2v2h-2zm7 0h2v2h-2zm31 0h2v2h-2zm49 0h2v2h-2zm-394 1h2v2h-2zm12 0h2v2h-2zm13 0h2v2h-2zm27 0h2v2h-2zm234 0h2v2h-2zm4 0h2v2h-2zm-241 1h2v2h-2zm129 0h2v2h-2zm92 0h2v2h-2zm6 0h2v2h-2zm5 0h2v2h-2zm4 0h2v2h-2zm9 0h2v2h-2zm13 0h2v2h-2zm10 0h2v2h-2zm10 0h2v2h-2zm70 0h2v2h-2zm-174 1h2v2h-2zm12 0h2v2h-2zm12 0h2v2h-2zm33 0h2v2h-2zm-253 1h2v2h-2zm3 0h2v2h-2zm25 0h2v2h-2zm7 0h2v2h-2zm113 0h2v2h-2zm71 0h2v2h-2zm16 0h2v2h-2zm4 0h2v2h-2zm32 0h2v2h-2zm26 0h2v2h-2zm18 0h2v2h-2zm-342 1h2v2h-2zm12 0h2v2h-2zm46 0h2v2h-2zm67 0h2v2h-2zm35 0h2v2h-2zm5 0h2v2h-2zm4 0h2v2h-2zm4 0h2v2h-2zm106 0h2v2h-2zm42 0h2v2h-2zm38 0h2v2h-2zm41 0h2v2h-2zm-175 1h2v2h-2zm43 0h2v2h-2zm9 0h2v2h-2zm7 0h2v2h-2zm21 0h2v2h-2zm50 0h2v2h-2zm-249 1h2v2h-2zm50 0h2v2h-2zm21 0h2v2h-2zm2 0h2v2h-2zm54 0h2v2h-2zm13 0h2v2h-2zm55 0h2v2h-2zm-299 1h2v2h-2zm62 0h2v2h-2zm151 0h2v2h-2zm9 0h2v2h-2zm9 0h2v2h-2zm65 0h2v2h-2zm4 0h2v2h-2zm5 0h2v2h-2zm11 0h2v2h-2zm23 0h2v2h-2zm-331 1h2v2h-2zm10 0h2v2h-2zm160 0h2v2h-2zm39 0h2v2h-2zm28 0h2v2h-2zm14 0h2v2h-2zm24 0h2v2h-2zm9 0h2v2h-2zm108 0h2v2h-2zm-399 1h2v2h-2zm3 0h2v2h-2zm205 0h2v2h-2zm12 0h2v2h-2zm61 0h2v2h-2zm19 0h2v2h-2zm7 0h2v2h-2zm-206 1h2v2h-2zm47 0h2v2h-2zm165 0h2v2h-2zm-176 1h2v2h-2zm43 0h2v2h-2zm44 0h2v2h-2zm9 0h2v2h-2zm55 0h2v2h-2zm23 0h2v2h-2zm26 0h2v2h-2zm-321 1h2v2h-2zm225 0h2v2h-2zm19 0h2v2h-2zm49 0h2v2h-2zm23 0h2v2h-2zm67 0h2v2h-2zm-398 1h2v2h-2zm41 0h2v2h-2zm14 0h2v2h-2zm46 0h2v2h-2zm162 0h2v2h-2zm37 0h2v2h-2zm12 0h2v2h-2zm16 0h2v2h-2zm-316 1h2v2h-2zm4 0h2v2h-2zm5 0h2v2h-2zm124 0h2v2h-2zm62 0h2v2h-2zm18 0h2v2h-2zm55 0h2v2h-2zm4 0h2v2h-2zm-276 1h2v2h-2zm17 0h2v2h-2zm4 0h2v2h-2zm151 0h2v2h-2zm53 0h2v2h-2zm19 0h2v2h-2zm12 0h2v2h-2zm51 0h2v2h-2zm21 0h2v2h-2zm-332 1h2v2h-2zm155 0h2v2h-2zm108 0h2v2h-2zm42 0h2v2h-2zm89 0h2v2h-2zm-397 1h2v2h-2zm2 0h2v2h-2zm30 0h2v2h-2zm69 0h2v2h-2zm-65 1h2v2h-2zm97 0h2v2h-2zm4 0h2v2h-2zm6 0h2v2h-2zm63 0h2v2h-2zm76 0h2v2h-2zm17 0h2v2h-2zm17 0h2v2h-2zm-196 1h2v2h-2zm59 0h2v2h-2zm45 0h2v2h-2zm8 0h2v2h-2zm32 0h2v2h-2zm15 0h2v2h-2zm13 0h2v2h-2zm43 0h2v2h-2zm-213 1h2v2h-2zm4 0h2v2h-2zm3 0h2v2h-2zm178 0h2v2h-2zm54 0h2v2h-2zm4 0h2v2h-2zm31 0h2v2h-2zm-396 1h2v2h-2zm39 0h2v2h-2zm3 0h2v2h-2zm80 0h2v2h-2zm161 0h2v2h-2zm15 0h2v2h-2zm21 0h2v2h-2zm38 0h2v2h-2zm5 0h2v2h-2zm7 0h2v2h-2zm-226 1h2v2h-2zm64 0h2v2h-2zm22 0h2v2h-2zm48 0h2v2h-2zm4 0h2v2h-2zm22 0h2v2h-2zm50 0h2v2h-2zm20 0h2v2h-2zm16 0h2v2h-2zm-393 1h2v2h-2zm227 0h2v2h-2zm42 0h2v2h-2zm29 0h2v2h-2zm1 0h2v2h-2zm4 0h2v2h-2zm7 0h2v2h-2zm1 0h2v2h-2zm29 0h2v2h-2zm37 0h2v2h-2zm19 0h2v2h-2zm-350 1h2v2h-2zm33 0h2v2h-2zm103 0h2v2h-2zm108 0h2v2h-2zm4 0h2v2h-2zm21 0h2v2h-2zm4 0h2v2h-2zm5 0h2v2h-2zm29 0h2v2h-2zm17 0h2v2h-2zm11 0h2v2h-2zm18 0h2v2h-2zm-396 1h2v2h-2zm61 0h2v2h-2zm64 0h2v2h-2zm167 0h2v2h-2zm86 0h2v2h-2zm4 0h2v2h-2zm-238 1h2v2h-2zm65 0h2v2h-2zm70 0h2v2h-2zm3 0h2v2h-2zm43 0h2v2h-2zm21 0h2v2h-2zm40 0h2v2h-2zm-198 1h2v2h-2zm35 0h2v2h-2zm59 0h2v2h-2zm11 0h2v2h-2zm13 0h2v2h-2zm33 0h2v2h-2zm42 0h2v2h-2zm-383 1h2v2h-2zm46 0h2v2h-2zm33 0h2v2h-2zm81 0h2v2h-2zm20 0h2v2h-2zm108 0h2v2h-2zm3 0h2v2h-2zm14 0h2v2h-2zm25 0h2v2h-2zm15 0h2v2h-2zm42 0h2v2h-2zm5 0h2v2h-2zm4 0h2v2h-2zm-400 1h2v2h-2zm130 0h2v2h-2zm17 0h2v2h-2zm71 0h2v2h-2zm8 0h2v2h-2zm56 0h2v2h-2zm2 0h2v2h-2zm-293 1h2v2h-2zm5 0h2v2h-2zm52 0h2v2h-2zm13 0h2v2h-2zm8 0h2v2h-2zm74 0h2v2h-2zm7 0h2v2h-2zm72 0h2v2h-2zm47 0h2v2h-2zm20 0h2v2h-2zm46 0h2v2h-2zm11 0h2v2h-2zm-359 1h2v2h-2zm33 0h2v2h-2zm173 0h2v2h-2zm66 0h2v2h-2zm22 0h2v2h-2zm11 0h2v2h-2zm19 0h2v2h-2zm-310 1h2v2h-2zm43 0h2v2h-2zm38 0h2v2h-2zm14 0h2v2h-2zm36 0h2v2h-2zm51 0h2v2h-2zm42 0h2v2h-2zm55 0h2v2h-2zm13 0h2v2h-2zm20 0h2v2h-2zm19 0h2v2h-2zm12 0h2v2h-2zm-283 1h2v2h-2zm78 0h2v2h-2zm56 0h2v2h-2zm74 0h2v2h-2zm41 0h2v2h-2zm7 0h2v2h-2zm-330 1h2v2h-2zm97 0h2v2h-2zm35 0h2v2h-2zm16 0h2v2h-2zm16 0h2v2h-2zm106 0h2v2h-2zm-271 1h2v2h-2zm55 0h2v2h-2zm3 0h2v2h-2zm44 0h2v2h-2zm233 0h2v2h-2zm9 0h2v2h-2zm-148 1h2v2h-2zm84 0h2v2h-2zm12 0h2v2h-2zm14 0h2v2h-2zm16 0h2v2h-2zm76 0h2v2h-2zm-398 1h2v2h-2zm77 0h2v2h-2zm28 0h2v2h-2zm162 0h2v2h-2zm4 0h2v2h-2zm4 0h2v2h-2zm-272 1h2v2h-2zm260 0h2v2h-2zm16 0h2v2h-2zm60 0h2v2h-2zm-342 1h2v2h-2zm56 0h2v2h-2zm112 0h2v2h-2zm171 0h2v2h-2zm5 0h2v2h-2zm-233 1h2v2h-2zm87 0h2v2h-2zm31 0h2v2h-2zm4 0h2v2h-2zm60 0h2v2h-2zm16 0h2v2h-2zm2 0h2v2h-2zm-302 1h2v2h-2zm72 0h2v2h-2zm204 0h2v2h-2zm39 0h2v2h-2zm-233 1h2v2h-2zm4 0h2v2h-2zm73 0h2v2h-2zm94 0h2v2h-2zm83 0h2v2h-2zm-332 1h2v2h-2zm42 0h2v2h-2zm24 0h2v2h-2zm20 0h2v2h-2zm37 0h2v2h-2zm28 0h2v2h-2zm5 0h2v2h-2zm153 0h2v2h-2zm16 0h2v2h-2zm42 0h2v2h-2zm-364 1h2v2h-2zm71 0h2v2h-2zm16 0h2v2h-2zm94 0h2v2h-2zm90 0h2v2h-2zm2 0h2v2h-2zm3 0h2v2h-2zm16 0h2v2h-2zm13 0h2v2h-2zm5 0h2v2h-2zm-306 1h2v2h-2zm132 0h2v2h-2zm75 0h2v2h-2zm126 0h2v2h-2zm-328 1h2v2h-2zm82 0h2v2h-2zm119 0h2v2h-2zm19 0h2v2h-2zm17 0h2v2h-2zm85 0h2v2h-2zm2 0h2v2h-2zm-320 1h2v2h-2zm25 0h2v2h-2zm23 0h2v2h-2zm93 0h2v2h-2zm154 0h2v2h-2zm5 0h2v2h-2zm7 0h2v2h-2zm-303 1h2v2h-2zm52 0h2v2h-2zm26 0h2v2h-2zm51 0h2v2h-2zm34 0h2v2h-2zm28 0h2v2h-2zm67 0h2v2h-2zm16 0h2v2h-2zm26 0h2v2h-2zm-180 1h2v2h-2zm75 0h2v2h-2zm60 0h2v2h-2zm58 0h2v2h-2zm-309 1h2v2h-2zm38 0h2v2h-2zm39 0h2v2h-2zm149 0h2v2h-2zm83 0h2v2h-2zm-305 1h2v2h-2zm11 0h2v2h-2zm31 0h2v2h-2zm58 0h2v2h-2zm13 0h2v2h-2zm8 0h2v2h-2zm9 0h2v2h-2zm154 0h2v2h-2zm14 0h2v2h-2zm3 0h2v2h-2zm-297 1h2v2h-2zm4 0h2v2h-2zm146 0h2v2h-2zm94 0h2v2h-2zm2 0h2v2h-2zm14 0h2v2h-2zm29 0h2v2h-2zm1 0h2v2h-2zm-262 1h2v2h-2zm44 0h2v2h-2zm3 0h2v2h-2zm44 0h2v2h-2zm65 0h2v2h-2zm59 0h2v2h-2zm-246 1h2v2h-2zm109 0h2v2h-2zm17 0h2v2h-2zm97 0h2v2h-2zm80 0h2v2h-2zm-263 1h2v2h-2zm81 0h2v2h-2zm8 0h2v2h-2zm114 0h2v2h-2zm9 0h2v2h-2zm8 0h2v2h-2zm23 0h2v2h-2zm-205 1h2v2h-2zm74 0h2v2h-2zm74 0h2v2h-2zm22 0h2v2h-2zm8 0h2v2h-2zm83 0h2v2h-2zm-252 1h2v2h-2zm103 0h2v2h-2zm3 0h2v2h-2zm37 0h2v2h-2zm4 0h2v2h-2zm5 0h2v2h-2zm-131 1h2v2h-2zm154 0h2v2h-2zm11 0h2v2h-2zm4 0h2v2h-2zm4 0h2v2h-2zm22 0h2v2h-2zm-264 1h2v2h-2zm42 0h2v2h-2zm17 0h2v2h-2zm22 0h2v2h-2zm9 0h2v2h-2zm172 0h2v2h-2zm-150 1h2v2h-2zm38 0h2v2h-2zm61 0h2v2h-2zm20 0h2v2h-2zm-168 1h2v2h-2zm163 0h2v2h-2zm2 0h2v2h-2zm-183 1h2v2h-2zm17 0h2v2h-2zm148 0h2v2h-2zm40 0h2v2h-2zm4 0h2v2h-2zm4 0h2v2h-2zm5 0h2v2h-2zm-262 1h2v2h-2zm80 0h2v2h-2zm9 0h2v2h-2zm2 0h2v2h-2zm134 0h2v2h-2zm-166 1h2v2h-2zm25 0h2v2h-2zm26 0h2v2h-2zm39 0h2v2h-2zm2 0h2v2h-2zm94 0h2v2h-2zm-179 1h2v2h-2zm-63 1h2v2h-2zm43 0h2v2h-2zm30 0h2v2h-2zm165 0h2v2h-2zm18 0h2v2h-2zm3 0h2v2h-2zm-205 1h2v2h-2zm30 0h2v2h-2zm25 0h2v2h-2zm36 0h2v2h-2zm76 0h2v2h-2zm16 0h2v2h-2zm-152 1h2v2h-2zm-82 1h2v2h-2zm43 0h2v2h-2zm217 0h2v2h-2zm-256 1h2v2h-2zm67 0h2v2h-2zm68 0h2v2h-2zm56 0h2v2h-2zm25 0h2v2h-2zm34 0h2v2h-2zm-204 1h2v2h-2zm182 0h2v2h-2zm-224 1h2v2h-2zm37 0h2v2h-2zm37 0h2v2h-2zm19 0h2v2h-2zm32 0h2v2h-2zm-121 1h2v2h-2zm4 1h2v2h-2zm55 0h2v2h-2zm125 0h2v2h-2zm-176 1h2v2h-2zm4 1h2v2h-2zm23 0h2v2h-2zm36 0h2v2h-2zm17 0h2v2h-2zm-72 1h2v2h-2zm5 1h2v2h-2zm4 0h2v2h-2zm34 0h2v2h-2zm125 0h2v2h-2zm-155 1h2v2h-2zm4 0h2v2h-2zm40 1h2v2h-2zm4 0h2v2h-2zm9 0h2v2h-2zm18 0h2v2h-2zm1 0h2v2h-2zm-5 1h2v2h-2zm-8 1h2v2h-2zm4 0h2v2h-2zm-20 1h2v2h-2zm8 0h2v2h-2zm7 0h2v2h-2zm187 0h2v2h-2zm-127 1h2v2h-2zm127 0h2v2h-2zm-198 1h2v2h-2zm18 0h2v2h-2zm-4 1h2v2h-2zm8 0h2v2h-2zm-12 1h2v2h-2zm63 0h2v2h-2zm4 0h2v2h-2zm-26 1h2v2h-2zm30 0h2v2h-2zm118 0h2v2h-2zm-174 1h2v2h-2zm45 0h2v2h-2zm15 0h2v2h-2zm-78 1h2v2h-2zm4 0h2v2h-2zm78 1h2v2h-2zm-40 1h2v2h-2zm147 0h2v2h-2zm4 0h2v2h-2zm4 0h2v2h-2zm4 0h2v2h-2zm4 0h2v2h-2zm-185 1h2v2h-2zm42 0h2v2h-2zm23 0h2v2h-2zm99 0h2v2h-2zm-180 1h2v2h-2zm176 0h2v2h-2zm23 0h2v2h-2zm-97 1h2v2h-2zm102 0h2v2h-2zm-31 1h2v2h-2zm-157 1h2v2h-2zm42 0h2v2h-2zm25 0h2v2h-2zm88 0h2v2h-2zm-170 1h2v2h-2zm9 1h2v2h-2zm194 0h2v2h-2zm-116 1h2v2h-2zm2 0h2v2h-2zm4 0h2v2h-2zm4 0h2v2h-2zm2 0h2v2h-2zm-85 1h2v2h-2zm44 0h2v2h-2zm25 0h2v2h-2zm18 0h2v2h-2zm5 0h2v2h-2zm35 0h2v2h-2zm2 0h2v2h-2zm25 0h2v2h-2zm-58 1h2v2h-2zm4 0h2v2h-2zm4 0h2v2h-2zm19 0h2v2h-2zm42 0h2v2h-2zm-168 1h2v2h-2zm43 0h2v2h-2zm30 0h2v2h-2zm38 0h2v2h-2zm11 0h2v2h-2zm69 0h2v2h-2zm-76 1h2v2h-2zm20 0h2v2h-2zm-95 1h2v2h-2zm8 0h2v2h-2zm23 0h2v2h-2zm85 0h2v2h-2zm-62 1h2v2h-2zm25 0h2v2h-2zm-51 1h2v2h-2zm5 0h2v2h-2zm48 0h2v2h-2zm69 0h2v2h-2zm-139 1h2v2h-2zm4 0h2v2h-2zm4 0h2v2h-2zm4 0h2v2h-2zm74 0h2v2h-2zm-15 1h2v2h-2zm34 0h2v2h-2zm-109 2h2v2h-2zm27 0h2v2h-2zm73 0h2v2h-2zm41 0h2v2h-2zm-29 1h2v2h-2zm-35 1h2v2h-2zm-47 1h2v2h-2zm-31 1h2v2h-2zm102 0h2v2h-2zm14 0h2v2h-2zm25 0h2v2h-2zm-106 1h2v2h-2zm4 1h2v2h-2zm38 0h2v2h-2zm-34 1h2v2h-2zm76 0h2v2h-2zm-17 1h2v2h-2zm38 0h2v2h-2zm-106 1h2v2h-2zm13 0h2v2h-2zm27 0h2v2h-2zm48 0h2v2h-2zm-105 1h2v2h-2zm33 0h2v2h-2zm21 1h2v2h-2zm-17 1h2v2h-2zm13 0h2v2h-2zm58 0h2v2h-2zm13 0h2v2h-2zm-80 1h2v2h-2zm5 0h2v2h-2zm57 0h2v2h-2zm-71 2h2v2h-2zm36 0h2v2h-2zm44 0h2v2h-2zm7 0h2v2h-2zm-19 1h2v2h-2zm-8 1h2v2h-2zm4 0h2v2h-2zm19 0h2v2h-2zm-57 1h2v2h-2zm30 0h2v2h-2zm12 0h2v2h-2zm-34 3h2v2h-2zm-10 1h2v2h-2zm44 0h2v2h-2zm-15 4h2v2h-2zm2 0h2v2h-2zm13 0h2v2h-2zm-9 1h2v2h-2zm-10 1h2v2h-2zm-4 1h2v2h-2zm16 1h2v2h-2zm2 3h2v2h-2zm-1 4h2v2h-2z" fill="#000"/>
<path d="M653 105h3v3h-3zm2 3h3v3h-3zm4 3h3v3h-3zm4 2h3v3h-3zm4 1h3v3h-3zm5 2h3v3h-3zm29 0h3v3h-3zm-25 1h3v3h-3zm-12 1h3v3h-3zm17 0h3v3h-3zm4 1h3v3h-3zm-27 1h3v3h-3zm41 0h3v3h-3zm18 1h3v3h-3zm-29 2h3v3h-3zm34 0h3v3h-3zm-22 2h3v3h-3zm-11 2h3v3h-3zm29 0h3v3h-3zm7 0h3v3h-3zm-25 2h3v3h-3zm29 0h3v3h-3zm9 1h3v3h-3zm4 0h3v3h-3zm-9 1h3v3h-3zm-43 1h3v3h-3zm62 0h3v3h-3zm-33 1h3v3h-3zm-57 1h3v3h-3zm39 0h3v3h-3zm-11 2h3v3h-3zm-42 2h3v3h-3zm53 0h3v3h-3zm2 0h3v3h-3zm51 0h3v3h-3zm-94 1h3v3h-3zm58 0h3v3h-3zm40 0h3v3h-3zm14 0h3v3h-3zm-82 2h3v3h-3zm74 0h3v3h-3zm-39 1h3v3h-3zm-75 1h3v3h-3zm50 0h3v3h-3zm38 0h3v3h-3zm-79 1h3v3h-3zm46 0h3v3h-3zm64 0h3v3h-3zm1 0h3v3h-3zm-82 1h3v3h-3zm30 0h3v3h-3zm-19 2h3v3h-3zm10 1h3v3h-3zm33 0h3v3h-3zm-57 1h3v3h-3zm30 0h3v3h-3zm-33 2h3v3h-3zm15 1h3v3h-3zm66 0h3v3h-3zm6 0h3v3h-3zm-23 1h3v3h-3zm-68 1h3v3h-3zm16 1h3v3h-3zm58 0h3v3h-3zm-78 2h3v3h-3zm86 0h3v3h-3zm81 0h3v3h-3zm-151 1h3v3h-3zm-20 1h3v3h-3zm169 0h3v3h-3zm-153 2h3v3h-3zm-19 1h3v3h-3zm55 0h3v3h-3zm-39 1h3v3h-3zm33 1h3v3h-3zm88 0h3v3h-3zm-140 1h3v3h-3zm177 0h3v3h-3zm-162 1h3v3h-3zm38 0h3v3h-3zm99 0h3v3h-3zm-161 1h3v3h-3zm20 1h3v3h-3zm8 0h3v3h-3zm80 0h3v3h-3zm-6 1h3v3h-3zm-98 1h3v3h-3zm3 0h3v3h-3zm183 0h3v3h-3zm-125 1h3v3h-3zm31 0h3v3h-3zm17 0h3v3h-3zm-96 1h3v3h-3zm57 0h3v3h-3zm11 0h3v3h-3zm5 0h3v3h-3zm1 0h3v3h-3zm29 0h3v3h-3zm-37 1h3v3h-3zm14 0h3v3h-3zm113 0h3v3h-3zm6 0h3v3h-3zm-209 1h3v3h-3zm21 0h3v3h-3zm57 0h3v3h-3zm18 0h3v3h-3zm15 0h3v3h-3zm104 0h3v3h-3zm-154 1h3v3h-3zm1 0h3v3h-3zm124 0h3v3h-3zm11 0h3v3h-3zm24 0h3v3h-3zm6 0h3v3h-3zm-217 1h3v3h-3zm92 0h3v3h-3zm50 0h3v3h-3zm81 0h3v3h-3zm-125 1h3v3h-3zm84 0h3v3h-3zm47 0h3v3h-3zm-253 1h3v3h-3zm6 0h3v3h-3zm31 0h3v3h-3zm38 0h3v3h-3zm12 0h3v3h-3zm43 0h3v3h-3zm129 0h3v3h-3zm-264 1h3v3h-3zm19 0h3v3h-3zm74 0h3v3h-3zm176 0h3v3h-3zm-252 1h3v3h-3zm115 0h3v3h-3zm143 0h3v3h-3zm5 0h3v3h-3zm-286 1h3v3h-3zm36 0h3v3h-3zm233 0h3v3h-3zm18 0h3v3h-3zm-196 1h3v3h-3zm86 0h3v3h-3zm-182 1h3v3h-3zm31 0h3v3h-3zm117 0h3v3h-3zm1 0h3v3h-3zm-47 1h3v3h-3zm1 0h3v3h-3zm-60 1h3v3h-3zm35 1h3v3h-3zm19 0h3v3h-3zm147 0h3v3h-3zm-105 1h3v3h-3zm14 0h3v3h-3zm85 0h3v3h-3zm35 0h3v3h-3zm-241 1h3v3h-3zm176 0h3v3h-3zm6 0h3v3h-3zm6 0h3v3h-3zm6 0h3v3h-3zm6 0h3v3h-3zm17 0h3v3h-3zm-166 1h3v3h-3zm51 0h3v3h-3zm16 0h3v3h-3zm-106 1h3v3h-3zm60 0h3v3h-3zm1 0h3v3h-3zm39 0h3v3h-3zm-95 1h3v3h-3zm87 0h3v3h-3zm-140 1h3v3h-3zm38 0h3v3h-3zm61 0h3v3h-3zm59 0h3v3h-3zm-23 1h3v3h-3zm10 0h3v3h-3zm6 0h3v3h-3zm2 0h3v3h-3zm123 0h3v3h-3zm-226 1h3v3h-3zm62 0h3v3h-3zm23 0h3v3h-3zm120 0h3v3h-3zm-143 1h3v3h-3zm-76 1h3v3h-3zm4 0h3v3h-3zm59 0h3v3h-3zm19 0h3v3h-3zm6 0h3v3h-3zm6 0h3v3h-3zm6 0h3v3h-3zm2 0h3v3h-3zm-20 1h3v3h-3zm6 0h3v3h-3zm-123 1h3v3h-3zm52 0h3v3h-3zm57 0h3v3h-3zm5 0h3v3h-3zm2 0h3v3h-3zm157 1h3v3h-3zm-232 1h3v3h-3zm60 1h3v3h-3zm3 0h3v3h-3zm78 0h3v3h-3zm-177 1h3v3h-3zm28 0h3v3h-3zm21 0h3v3h-3zm144 0h3v3h-3zm30 1h3v3h-3zm-185 1h3v3h-3zm180 0h3v3h-3zm-213 1h3v3h-3zm6 0h3v3h-3zm12 0h3v3h-3zm29 0h3v3h-3zm122 0h3v3h-3zm93 0h3v3h-3zm-250 1h3v3h-3zm70 0h3v3h-3zm-74 1h3v3h-3zm28 1h3v3h-3zm19 0h3v3h-3zm97 0h3v3h-3zm12 0h3v3h-3zm45 0h3v3h-3zm-160 1h3v3h-3zm109 1h3v3h-3zm23 0h3v3h-3zm80 1h3v3h-3zm-223 1h3v3h-3zm167 0h3v3h-3zm-134 1h3v3h-3zm8 0h3v3h-3zm-29 1h3v3h-3zm33 0h3v3h-3zm-29 1h3v3h-3zm-14 1h3v3h-3zm35 0h3v3h-3zm13 0h3v3h-3zm94 0h3v3h-3zm78 1h3v3h-3zm-209 1h3v3h-3zm-40 1h3v3h-3zm44 0h3v3h-3zm17 0h3v3h-3zm19 0h3v3h-3zm86 0h3v3h-3zm-103 1h3v3h-3zm22 0h3v3h-3zm-101 1h3v3h-3zm46 0h3v3h-3zm-26 1h3v3h-3zm6 0h3v3h-3zm31 1h3v3h-3zm41 0h3v3h-3zm27 0h3v3h-3zm138 0h3v3h-3zm-278 2h3v3h-3zm62 0h3v3h-3zm34 0h3v3h-3zm-39 1h3v3h-3zm60 0h3v3h-3zm162 0h3v3h-3zm-264 1h3v3h-3zm60 0h3v3h-3zm39 0h3v3h-3zm14 1h3v3h-3zm6 0h3v3h-3zm2 0h3v3h-3zm141 0h3v3h-3zm-213 1h3v3h-3zm32 0h3v3h-3zm26 0h3v3h-3zm-45 2h3v3h-3zm41 0h3v3h-3zm60 0h3v3h-3zm-119 1h3v3h-3zm56 0h3v3h-3zm-49 1h3v3h-3zm28 0h3v3h-3zm-70 1h3v3h-3zm16 0h3v3h-3zm41 0h3v3h-3zm194 0h3v3h-3zm-190 1h3v3h-3zm4 0h3v3h-3zm-49 1h3v3h-3zm64 0h3v3h-3zm11 0h3v3h-3zm-46 1h3v3h-3zm36 0h3v3h-3zm-33 3h3v3h-3zm30 0h3v3h-3zm172 0h3v3h-3zm-158 1h3v3h-3zm-319 1h3v3h-3zm242 0h3v3h-3zm67 0h3v3h-3zm21 0h3v3h-3zm-325 1h3v3h-3zm274 0h3v3h-3zm22 0h3v3h-3zm-18 2h3v3h-3zm14 0h3v3h-3zm22 0h3v3h-3zm-324 1h3v3h-3zm238 0h3v3h-3zm55 0h3v3h-3zm4 0h3v3h-3zm183 0h3v3h-3zm-166 1h3v3h-3zm-301 1h3v3h-3zm13 0h3v3h-3zm200 0h3v3h-3zm-194 1h3v3h-3zm194 0h3v3h-3zm-206 1h3v3h-3zm305 0h3v3h-3zm-88 1h3v3h-3zm78 0h3v3h-3zm163 0h3v3h-3zm-479 1h3v3h-3zm37 1h3v3h-3zm223 0h3v3h-3zm-246 1h3v3h-3zm312 0h3v3h-3zm-309 1h3v3h-3zm209 0h3v3h-3zm-227 1h3v3h-3zm21 0h3v3h-3zm225 0h3v3h-3zm71 0h3v3h-3zm161 1h3v3h-3zm-478 1h3v3h-3zm39 1h3v3h-3zm289 0h3v3h-3zm-314 1h3v3h-3zm303 0h3v3h-3zm-52 1h3v3h-3zm5 0h3v3h-3zm-249 1h3v3h-3zm238 0h3v3h-3zm217 1h3v3h-3zm-475 1h3v3h-3zm37 0h3v3h-3zm238 0h3v3h-3zm52 0h3v3h-3zm-10 1h3v3h-3zm84 0h3v3h-3zm-396 1h3v3h-3zm6 0h3v3h-3zm243 0h3v3h-3zm-231 1h3v3h-3zm54 1h3v3h-3zm201 0h3v3h-3zm50 0h3v3h-3zm145 0h3v3h-3zm-439 1h3v3h-3zm284 0h3v3h-3zm-290 1h3v3h-3zm44 0h3v3h-3zm243 0h3v3h-3zm-76 2h3v3h-3zm15 0h3v3h-3zm75 0h3v3h-3zm-249 1h3v3h-3zm134 1h3v3h-3zm20 0h3v3h-3zm47 0h3v3h-3zm38 0h3v3h-3zm153 0h3v3h-3zm20 0h3v3h-3zm-424 1h3v3h-3zm244 0h3v3h-3zm109 0h3v3h-3zm-89 1h3v3h-3zm5 0h3v3h-3zm-81 2h3v3h-3zm65 0h3v3h-3zm105 0h3v3h-3zm-346 1h3v3h-3zm256 0h3v3h-3zm114 0h3v3h-3zm-234 1h3v3h-3zm66 0h3v3h-3zm30 0h3v3h-3zm158 0h3v3h-3zm-403 1h3v3h-3zm-2 1h3v3h-3zm192 0h3v3h-3zm66 0h3v3h-3zm16 0h3v3h-3zm-192 1h3v3h-3zm112 0h3v3h-3zm49 1h3v3h-3zm35 0h3v3h-3zm-263 1h3v3h-3zm247 0h3v3h-3zm124 0h3v3h-3zm-169 1h3v3h-3zm25 0h3v3h-3zm162 0h3v3h-3zm-404 1h3v3h-3zm2 0h3v3h-3zm147 0h3v3h-3zm99 0h3v3h-3zm10 0h3v3h-3zm24 0h3v3h-3zm88 0h3v3h-3zm6 0h3v3h-3zm-297 1h3v3h-3zm111 0h3v3h-3zm7 0h3v3h-3zm40 0h3v3h-3zm21 0h3v3h-3zm7 0h3v3h-3zm59 0h3v3h-3zm23 0h3v3h-3zm-112 1h3v3h-3zm51 0h3v3h-3zm97 0h3v3h-3zm-288 1h3v3h-3zm158 0h3v3h-3zm128 0h3v3h-3zm-367 1h3v3h-3zm140 0h3v3h-3zm62 0h3v3h-3zm53 0h3v3h-3zm-269 1h3v3h-3zm201 0h3v3h-3zm96 0h3v3h-3zm25 0h3v3h-3zm29 0h3v3h-3zm15 0h3v3h-3zm37 0h3v3h-3zm-403 1h3v3h-3zm258 0h3v3h-3zm15 0h3v3h-3zm16 0h3v3h-3zm-29 1h3v3h-3zm-103 1h3v3h-3zm35 0h3v3h-3zm14 0h3v3h-3zm28 0h3v3h-3zm43 0h3v3h-3zm105 0h3v3h-3zm-244 1h3v3h-3zm67 0h3v3h-3zm7 0h3v3h-3zm80 0h3v3h-3zm-279 1h3v3h-3zm57 0h3v3h-3zm192 0h3v3h-3zm102 0h3v3h-3zm-445 1h3v3h-3zm79 0h3v3h-3zm138 0h3v3h-3zm21 0h3v3h-3zm40 0h3v3h-3zm83 0h3v3h-3zm19 0h3v3h-3zm23 0h3v3h-3zm29 0h3v3h-3zm51 0h3v3h-3zm-137 1h3v3h-3zm31 0h3v3h-3zm-118 1h3v3h-3zm190 0h3v3h-3zm-347 1h3v3h-3zm182 0h3v3h-3zm33 0h3v3h-3zm138 0h3v3h-3zm5 0h3v3h-3zm-455 1h3v3h-3zm341 0h3v3h-3zm5 0h3v3h-3zm14 0h3v3h-3zm15 0h3v3h-3zm4 0h3v3h-3zm-290 1h3v3h-3zm56 0h3v3h-3zm85 0h3v3h-3zm246 0h3v3h-3zm-403 1h3v3h-3zm154 0h3v3h-3zm51 0h3v3h-3zm-208 1h3v3h-3zm293 0h3v3h-3zm15 0h3v3h-3zm-374 1h3v3h-3zm218 0h3v3h-3zm31 0h3v3h-3zm61 0h3v3h-3zm-172 1h3v3h-3zm16 0h3v3h-3zm73 0h3v3h-3zm110 1h3v3h-3zm25 0h3v3h-3zm-279 1h3v3h-3zm295 0h3v3h-3zm-309 1h3v3h-3zm109 0h3v3h-3zm137 0h3v3h-3zm-313 1h3v3h-3zm251 0h3v3h-3zm67 0h3v3h-3zm12 0h3v3h-3zm33 0h3v3h-3zm-230 1h3v3h-3zm95 0h3v3h-3zm90 0h3v3h-3zm6 0h3v3h-3zm35 0h3v3h-3zm20 0h3v3h-3zm-228 1h3v3h-3zm-72 1h3v3h-3zm92 0h3v3h-3zm182 0h3v3h-3zm14 0h3v3h-3zm16 0h3v3h-3zm-380 1h3v3h-3zm162 0h3v3h-3zm3 0h3v3h-3zm88 0h3v3h-3zm209 0h3v3h-3zm-398 1h3v3h-3zm85 1h3v3h-3zm18 0h3v3h-3zm180 0h3v3h-3zm36 0h3v3h-3zm68 0h3v3h-3zm6 0h3v3h-3zm-142 1h3v3h-3zm52 0h3v3h-3zm111 0h3v3h-3zm-473 1h3v3h-3zm101 0h3v3h-3zm6 0h3v3h-3zm6 0h3v3h-3zm40 0h3v3h-3zm153 0h3v3h-3zm-238 1h3v3h-3zm27 0h3v3h-3zm72 0h3v3h-3zm119 0h3v3h-3zm10 0h3v3h-3zm138 0h3v3h-3zm6 0h3v3h-3zm-321 1h3v3h-3zm172 0h3v3h-3zm74 0h3v3h-3zm16 0h3v3h-3zm-320 1h3v3h-3zm29 0h3v3h-3zm34 0h3v3h-3zm22 0h3v3h-3zm156 0h3v3h-3zm128 0h3v3h-3zm-300 1h3v3h-3zm19 0h3v3h-3zm132 0h3v3h-3zm60 0h3v3h-3zm28 0h3v3h-3zm-305 1h3v3h-3zm25 0h3v3h-3zm47 0h3v3h-3zm126 0h3v3h-3zm198 0h3v3h-3zm13 0h3v3h-3zm-331 1h3v3h-3zm29 0h3v3h-3zm40 0h3v3h-3zm39 0h3v3h-3zm29 0h3v3h-3zm-31 1h3v3h-3zm134 0h3v3h-3zm-411 1h3v3h-3zm400 0h3v3h-3zm-223 1h3v3h-3zm23 0h3v3h-3zm171 0h3v3h-3zm-260 1h3v3h-3zm136 0h3v3h-3zm254 0h3v3h-3zm-495 1h3v3h-3zm5 0h3v3h-3zm107 0h3v3h-3zm293 0h3v3h-3zm75 0h3v3h-3zm-470 1h3v3h-3zm166 0h3v3h-3zm59 0h3v3h-3zm37 0h3v3h-3zm-82 1h3v3h-3zm47 0h3v3h-3zm48 0h3v3h-3zm109 0h3v3h-3zm-316 1h3v3h-3zm23 0h3v3h-3zm265 0h3v3h-3zm-21 1h3v3h-3zm-231 1h3v3h-3zm290 0h3v3h-3zm89 0h3v3h-3zm-314 1h3v3h-3zm102 0h3v3h-3zm58 0h3v3h-3zm12 0h3v3h-3zm42 0h3v3h-3zm85 0h3v3h-3zm-381 1h3v3h-3zm90 0h3v3h-3zm39 0h3v3h-3zm131 0h3v3h-3zm7 1h3v3h-3zm-2 1h3v3h-3zm40 0h3v3h-3zm-284 1h3v3h-3zm250 0h3v3h-3zm23 0h3v3h-3zm101 1h3v3h-3zm-314 1h3v3h-3zm159 0h3v3h-3zm37 0h3v3h-3zm-251 1h3v3h-3zm72 0h3v3h-3zm206 0h3v3h-3zm-134 1h3v3h-3zm63 0h3v3h-3zm50 0h3v3h-3zm9 0h3v3h-3zm-266 1h3v3h-3zm116 0h3v3h-3zm-111 1h3v3h-3zm52 0h3v3h-3zm101 0h3v3h-3zm-107 1h3v3h-3zm297 0h3v3h-3zm19 0h3v3h-3zm-427 1h3v3h-3zm274 0h3v3h-3zm62 0h3v3h-3zm-266 1h3v3h-3zm36 0h3v3h-3zm28 0h3v3h-3zm6 0h3v3h-3zm6 0h3v3h-3zm6 0h3v3h-3zm6 0h3v3h-3zm62 0h3v3h-3zm100 0h3v3h-3zm4 0h3v3h-3zm-289 1h3v3h-3zm3 0h3v3h-3zm21 0h3v3h-3zm41 0h3v3h-3zm28 0h3v3h-3zm36 0h3v3h-3zm9 0h3v3h-3zm53 0h3v3h-3zm41 0h3v3h-3zm-191 1h3v3h-3zm6 0h3v3h-3zm6 0h3v3h-3zm6 0h3v3h-3zm21 0h3v3h-3zm54 0h3v3h-3zm-216 1h3v3h-3zm143 0h3v3h-3zm19 0h3v3h-3zm7 0h3v3h-3zm212 0h3v3h-3zm91 0h3v3h-3zm-475 1h3v3h-3zm93 0h3v3h-3zm279 0h3v3h-3zm96 0h3v3h-3zm-460 1h3v3h-3zm44 0h3v3h-3zm29 0h3v3h-3zm90 0h3v3h-3zm53 0h3v3h-3zm99 0h3v3h-3zm98 0h3v3h-3zm-251 1h3v3h-3zm144 0h3v3h-3zm108 0h3v3h-3zm-275 1h3v3h-3zm2 0h3v3h-3zm233 0h3v3h-3zm-390 1h3v3h-3zm4 0h3v3h-3zm56 0h3v3h-3zm90 0h3v3h-3zm229 0h3v3h-3zm-359 1h3v3h-3zm125 0h3v3h-3zm14 0h3v3h-3zm322 0h3v3h-3zm-439 1h3v3h-3zm117 0h3v3h-3zm156 0h3v3h-3zm162 0h3v3h-3zm-297 1h3v3h-3zm50 0h3v3h-3zm102 0h3v3h-3zm56 0h3v3h-3zm-58 1h3v3h-3zm61 0h3v3h-3zm57 0h3v3h-3zm-427 1h3v3h-3zm56 0h3v3h-3zm148 0h3v3h-3zm103 0h3v3h-3zm49 0h3v3h-3zm19 0h3v3h-3zm54 0h3v3h-3zm-243 1h3v3h-3zm6 0h3v3h-3zm6 0h3v3h-3zm-175 1h3v3h-3zm157 0h3v3h-3zm44 0h3v3h-3zm205 0h3v3h-3zm-267 1h3v3h-3zm12 0h3v3h-3zm44 0h3v3h-3zm96 0h3v3h-3zm52 0h3v3h-3zm13 0h3v3h-3zm-211 1h3v3h-3zm7 0h3v3h-3zm7 0h3v3h-3zm47 0h3v3h-3zm126 0h3v3h-3zm-223 1h3v3h-3zm38 0h3v3h-3zm20 0h3v3h-3zm16 0h3v3h-3zm38 0h3v3h-3zm-243 1h3v3h-3zm170 0h3v3h-3zm40 0h3v3h-3zm28 0h3v3h-3zm70 0h3v3h-3zm10 0h3v3h-3zm79 0h3v3h-3zm-34 1h3v3h-3zm-340 1h3v3h-3zm209 0h3v3h-3zm120 0h3v3h-3zm-120 1h3v3h-3zm-104 1h3v3h-3zm59 0h3v3h-3zm136 0h3v3h-3zm116 0h3v3h-3zm-267 1h3v3h-3zm114 0h3v3h-3zm3 0h3v3h-3zm20 0h3v3h-3zm4 0h3v3h-3zm-311 1h3v3h-3zm2 0h3v3h-3zm33 0h3v3h-3zm3 0h3v3h-3zm168 0h3v3h-3zm27 0h3v3h-3zm84 0h3v3h-3zm29 0h3v3h-3zm14 0h3v3h-3zm-348 1h3v3h-3zm42 0h3v3h-3zm35 0h3v3h-3zm14 0h3v3h-3zm223 0h3v3h-3zm23 0h3v3h-3zm-342 1h3v3h-3zm41 0h3v3h-3zm117 1h3v3h-3zm6 0h3v3h-3zm6 0h3v3h-3zm11 0h3v3h-3zm43 0h3v3h-3zm17 0h3v3h-3zm6 0h3v3h-3zm-72 1h3v3h-3zm55 0h3v3h-3zm105 0h3v3h-3zm17 0h3v3h-3zm80 0h3v3h-3zm-458 1h3v3h-3zm36 0h3v3h-3zm76 0h3v3h-3zm66 0h3v3h-3zm49 0h3v3h-3zm29 0h3v3h-3zm46 0h3v3h-3zm48 0h3v3h-3zm13 0h3v3h-3zm4 0h3v3h-3zm40 0h3v3h-3zm50 0h3v3h-3zm-463 1h3v3h-3zm12 0h3v3h-3zm52 0h3v3h-3zm5 0h3v3h-3zm56 0h3v3h-3zm98 0h3v3h-3zm103 0h3v3h-3zm36 0h3v3h-3zm-366 1h3v3h-3zm66 0h3v3h-3zm151 0h3v3h-3zm224 0h3v3h-3zm-314 1h3v3h-3zm41 0h3v3h-3zm15 0h3v3h-3zm55 0h3v3h-3zm4 0h3v3h-3zm17 0h3v3h-3zm170 0h3v3h-3zm11 0h3v3h-3zm-361 1h3v3h-3zm309 0h3v3h-3zm3 0h3v3h-3zm72 0h3v3h-3zm-215 1h3v3h-3zm15 0h3v3h-3zm114 0h3v3h-3zm39 0h3v3h-3zm18 0h3v3h-3zm-415 1h3v3h-3zm235 0h3v3h-3zm62 0h3v3h-3zm45 0h3v3h-3zm5 0h3v3h-3zm-368 1h3v3h-3zm65 0h3v3h-3zm157 0h3v3h-3zm12 0h3v3h-3zm24 0h3v3h-3zm5 0h3v3h-3zm-239 1h3v3h-3zm150 0h3v3h-3zm56 0h3v3h-3zm92 0h3v3h-3zm35 0h3v3h-3zm33 0h3v3h-3zm16 0h3v3h-3zm-222 1h3v3h-3zm195 0h3v3h-3zm-298 1h3v3h-3zm260 0h3v3h-3zm32 0h3v3h-3zm76 0h3v3h-3zm-224 1h3v3h-3zm21 0h3v3h-3zm106 0h3v3h-3zm83 0h3v3h-3zm-432 1h3v3h-3zm17 0h3v3h-3zm7 0h3v3h-3zm24 0h3v3h-3zm173 0h3v3h-3zm186 0h3v3h-3zm44 0h3v3h-3zm-439 1h3v3h-3zm50 0h3v3h-3zm20 0h3v3h-3zm150 0h3v3h-3zm155 0h3v3h-3zm-381 1h3v3h-3zm285 0h3v3h-3zm54 0h3v3h-3zm32 0h3v3h-3zm64 0h3v3h-3zm-465 1h3v3h-3zm6 0h3v3h-3zm61 0h3v3h-3zm33 0h3v3h-3zm75 0h3v3h-3zm32 0h3v3h-3zm190 0h3v3h-3zm38 0h3v3h-3zm-423 1h3v3h-3zm253 0h3v3h-3zm56 0h3v3h-3zm10 0h3v3h-3zm29 0h3v3h-3zm-106 1h3v3h-3zm157 0h3v3h-3zm-349 1h3v3h-3zm22 0h3v3h-3zm5 0h3v3h-3zm77 0h3v3h-3zm46 0h3v3h-3zm33 0h3v3h-3zm14 0h3v3h-3zm107 0h3v3h-3zm-350 1h3v3h-3zm79 0h3v3h-3zm96 0h3v3h-3zm27 0h3v3h-3zm176 0h3v3h-3zm7 0h3v3h-3zm-177 1h3v3h-3zm213 0h3v3h-3zm29 0h3v3h-3zm-292 1h3v3h-3zm56 0h3v3h-3zm66 0h3v3h-3zm14 0h3v3h-3zm5 0h3v3h-3zm-58 1h3v3h-3zm47 0h3v3h-3zm85 0h3v3h-3zm23 0h3v3h-3zm8 0h3v3h-3zm-184 1h3v3h-3zm5 0h3v3h-3zm13 0h3v3h-3zm148 0h3v3h-3zm-356 1h3v3h-3zm121 0h3v3h-3zm132 0h3v3h-3zm65 0h3v3h-3zm-346 1h3v3h-3zm90 0h3v3h-3zm275 0h3v3h-3zm12 0h3v3h-3zm44 0h3v3h-3zm-413 1h3v3h-3zm387 0h3v3h-3zm-371 1h3v3h-3zm276 0h3v3h-3zm104 0h3v3h-3zm-303 1h3v3h-3zm248 0h3v3h-3zm12 0h3v3h-3zm24 0h3v3h-3zm-299 1h3v3h-3zm72 0h3v3h-3zm121 0h3v3h-3zm76 0h3v3h-3zm-343 1h3v3h-3zm6 0h3v3h-3zm362 0h3v3h-3zm-380 1h3v3h-3zm13 0h3v3h-3zm226 0h3v3h-3zm157 0h3v3h-3zm13 0h3v3h-3zm51 0h3v3h-3zm-385 1h3v3h-3zm6 0h3v3h-3zm43 0h3v3h-3zm261 0h3v3h-3zm-271 1h3v3h-3zm186 0h3v3h-3zm-322 1h3v3h-3zm18 0h3v3h-3zm38 0h3v3h-3zm64 0h3v3h-3zm60 0h3v3h-3zm-174 1h3v3h-3zm6 0h3v3h-3zm289 0h3v3h-3zm118 0h3v3h-3zm-326 1h3v3h-3zm116 1h3v3h-3zm199 0h3v3h-3zm-263 1h3v3h-3zm175 0h3v3h-3zm-201 1h3v3h-3zm17 0h3v3h-3zm1 1h3v3h-3zm168 0h3v3h-3zm26 0h3v3h-3zm89 0h3v3h-3zm-369 1h3v3h-3zm7 0h3v3h-3zm61 0h3v3h-3zm210 0h3v3h-3zm80 0h3v3h-3zm-371 1h3v3h-3zm3 0h3v3h-3zm170 0h3v3h-3zm104 0h3v3h-3zm-5 1h3v3h-3zm147 0h3v3h-3zm6 0h3v3h-3zm-417 1h3v3h-3zm68 0h3v3h-3zm307 0h3v3h-3zm31 0h3v3h-3zm16 1h3v3h-3zm13 0h3v3h-3zm-372 1h3v3h-3zm280 0h3v3h-3zm22 0h3v3h-3zm-80 1h3v3h-3zm-226 1h3v3h-3zm112 0h3v3h-3zm103 0h3v3h-3zm22 0h3v3h-3zm106 0h3v3h-3zm30 0h3v3h-3zm-440 1h3v3h-3zm272 0h3v3h-3zm112 0h3v3h-3zm-389 1h3v3h-3zm132 0h3v3h-3zm6 0h3v3h-3zm241 0h3v3h-3zm71 1h3v3h-3zm-455 1h3v3h-3zm48 0h3v3h-3zm24 0h3v3h-3zm1 0h3v3h-3zm43 0h3v3h-3zm173 0h3v3h-3zm124 0h3v3h-3zm-381 1h3v3h-3zm116 0h3v3h-3zm26 0h3v3h-3zm6 0h3v3h-3zm6 0h3v3h-3zm209 0h3v3h-3zm-381 1h3v3h-3zm97 0h3v3h-3zm172 0h3v3h-3zm32 0h3v3h-3zm-277 1h3v3h-3zm130 0h3v3h-3zm24 0h3v3h-3zm62 0h3v3h-3zm31 0h3v3h-3zm29 0h3v3h-3zm19 0h3v3h-3zm52 0h3v3h-3zm-342 1h3v3h-3zm124 0h3v3h-3zm142 0h3v3h-3zm18 0h3v3h-3zm12 0h3v3h-3zm-294 1h3v3h-3zm152 1h3v3h-3zm199 0h3v3h-3zm19 0h3v3h-3zm-398 1h3v3h-3zm265 0h3v3h-3zm104 0h3v3h-3zm-289 1h3v3h-3zm67 1h3v3h-3zm38 0h3v3h-3zm-72 1h3v3h-3zm268 0h3v3h-3zm-11 1h3v3h-3zm-170 2h3v3h-3zm6 0h3v3h-3zm15 0h3v3h-3zm-112 1h3v3h-3zm36 0h3v3h-3zm81 0h3v3h-3zm98 0h3v3h-3zm59 0h3v3h-3zm-287 1h3v3h-3zm5 0h3v3h-3zm114 0h3v3h-3zm146 0h3v3h-3zm-152 1h3v3h-3zm11 0h3v3h-3zm12 0h3v3h-3zm30 0h3v3h-3zm110 0h3v3h-3zm-278 1h3v3h-3zm109 0h3v3h-3zm-95 1h3v3h-3zm118 0h3v3h-3zm68 0h3v3h-3zm91 0h3v3h-3zm-188 1h3v3h-3zm40 0h3v3h-3zm63 0h3v3h-3zm22 0h3v3h-3zm-230 1h3v3h-3zm52 0h3v3h-3zm52 0h3v3h-3zm36 0h3v3h-3zm142 0h3v3h-3zm54 0h3v3h-3zm-123 1h3v3h-3zm-193 1h3v3h-3zm275 0h3v3h-3zm-246 1h3v3h-3zm101 0h3v3h-3zm192 0h3v3h-3zm-318 1h3v3h-3zm121 0h3v3h-3zm133 0h3v3h-3zm6 0h3v3h-3zm-182 1h3v3h-3zm-102 1h3v3h-3zm51 0h3v3h-3zm247 0h3v3h-3zm-342 1h3v3h-3zm204 0h3v3h-3zm121 1h3v3h-3zm6 0h3v3h-3zm-176 1h3v3h-3zm6 0h3v3h-3zm29 0h3v3h-3zm5 0h3v3h-3zm-199 1h3v3h-3zm38 0h3v3h-3zm115 0h3v3h-3zm88 0h3v3h-3zm107 0h3v3h-3zm-201 1h3v3h-3zm5 0h3v3h-3zm19 0h3v3h-3zm65 0h3v3h-3zm-192 1h3v3h-3zm2 0h3v3h-3zm52 0h3v3h-3zm239 0h3v3h-3zm-100 1h3v3h-3zm5 0h3v3h-3zm-100 1h3v3h-3zm34 0h3v3h-3zm16 0h3v3h-3zm5 0h3v3h-3zm153 0h3v3h-3zm-284 1h3v3h-3zm76 0h3v3h-3zm15 0h3v3h-3zm123 0h3v3h-3zm38 0h3v3h-3zm6 0h3v3h-3zm-258 1h3v3h-3zm181 0h3v3h-3zm80 0h3v3h-3zm12 0h3v3h-3zm-202 1h3v3h-3zm10 0h3v3h-3zm15 0h3v3h-3zm19 0h3v3h-3zm5 0h3v3h-3zm146 0h3v3h-3zm-234 1h3v3h-3zm70 0h3v3h-3zm6 0h3v3h-3zm6 0h3v3h-3zm12 0h3v3h-3zm122 0h3v3h-3zm39 0h3v3h-3zm-173 1h3v3h-3zm6 0h3v3h-3zm136 0h3v3h-3zm-191 1h3v3h-3zm33 0h3v3h-3zm19 0h3v3h-3zm158 0h3v3h-3zm-276 1h3v3h-3zm86 0h3v3h-3zm23 0h3v3h-3zm50 0h3v3h-3zm-202 1h3v3h-3zm78 0h3v3h-3zm2 0h3v3h-3zm24 0h3v3h-3zm43 0h3v3h-3zm141 0h3v3h-3zm27 0h3v3h-3zm18 0h3v3h-3zm-247 1h3v3h-3zm6 0h3v3h-3zm6 0h3v3h-3zm152 0h3v3h-3zm32 0h3v3h-3zm14 0h3v3h-3zm-293 1h3v3h-3zm70 0h3v3h-3zm15 0h3v3h-3zm77 0h3v3h-3zm8 0h3v3h-3zm24 0h3v3h-3zm125 0h3v3h-3zm-313 1h3v3h-3zm32 1h3v3h-3zm126 0h3v3h-3zm151 0h3v3h-3zm18 0h3v3h-3zm-335 1h3v3h-3zm146 0h3v3h-3zm18 1h3v3h-3zm46 0h3v3h-3zm81 0h3v3h-3zm32 0h3v3h-3zm-235 1h3v3h-3zm189 0h3v3h-3zm60 1h3v3h-3zm-174 1h3v3h-3zm126 0h3v3h-3zm32 0h3v3h-3zm5 0h3v3h-3zm-348 2h3v3h-3zm21 0h3v3h-3zm43 0h3v3h-3zm216 0h3v3h-3zm20 0h3v3h-3zm62 0h3v3h-3zm-252 2h3v3h-3zm240 0h3v3h-3zm-89 1h3v3h-3zm85 0h3v3h-3zm-327 1h3v3h-3zm70 0h3v3h-3zm219 0h3v3h-3zm57 0h3v3h-3zm-369 1h3v3h-3zm70 0h3v3h-3zm66 0h3v3h-3zm-106 1h3v3h-3zm81 0h3v3h-3zm194 0h3v3h-3zm52 0h3v3h-3zm-321 1h3v3h-3zm5 1h3v3h-3zm33 0h3v3h-3zm280 0h3v3h-3zm17 0h3v3h-3zm-343 1h3v3h-3zm283 0h3v3h-3zm-218 1h3v3h-3zm23 0h3v3h-3zm6 0h3v3h-3zm238 0h3v3h-3zm-315 1h3v3h-3zm70 0h3v3h-3zm12 0h3v3h-3zm181 0h3v3h-3zm-312 1h3v3h-3zm131 0h3v3h-3zm245 0h3v3h-3zm-141 1h3v3h-3zm84 0h3v3h-3zm42 0h3v3h-3zm-110 1h3v3h-3zm115 0h3v3h-3zm-334 1h3v3h-3zm63 0h3v3h-3zm139 0h3v3h-3zm-118 1h3v3h-3zm209 0h3v3h-3zm-238 1h3v3h-3zm48 0h3v3h-3zm242 0h3v3h-3zm-378 1h3v3h-3zm82 0h3v3h-3zm12 0h3v3h-3zm231 0h3v3h-3zm43 0h3v3h-3zm-153 1h3v3h-3zm107 0h3v3h-3zm40 0h3v3h-3zm-211 1h3v3h-3zm80 0h3v3h-3zm20 0h3v3h-3zm79 0h3v3h-3zm-216 1h3v3h-3zm264 0h3v3h-3zm-83 1h3v3h-3zm85 0h3v3h-3zm-344 1h3v3h-3zm100 0h3v3h-3zm231 0h3v3h-3zm19 0h3v3h-3zm-159 1h3v3h-3zm133 0h3v3h-3zm-40 1h3v3h-3zm14 0h3v3h-3zm-224 1h3v3h-3zm40 0h3v3h-3zm214 0h3v3h-3zm13 0h3v3h-3zm-264 1h3v3h-3zm138 0h3v3h-3zm18 0h3v3h-3zm122 0h3v3h-3zm-402 1h3v3h-3zm45 0h3v3h-3zm304 0h3v3h-3zm-203 1h3v3h-3zm221 0h3v3h-3zm-328 1h3v3h-3zm291 0h3v3h-3zm25 0h3v3h-3zm6 0h3v3h-3zm12 0h3v3h-3zm12 0h3v3h-3zm-383 2h3v3h-3zm208 0h3v3h-3zm49 0h3v3h-3zm128 0h3v3h-3zm-263 1h3v3h-3zm158 0h3v3h-3zm25 0h3v3h-3zm95 0h3v3h-3zm-259 1h3v3h-3zm221 0h3v3h-3zm19 0h3v3h-3zm-345 1h3v3h-3zm177 0h3v3h-3zm44 0h3v3h-3zm68 0h3v3h-3zm44 0h3v3h-3zm-53 1h3v3h-3zm-190 1h3v3h-3zm122 1h3v3h-3zm14 0h3v3h-3zm20 0h3v3h-3zm40 0h3v3h-3zm57 0h3v3h-3zm6 0h3v3h-3zm-248 1h3v3h-3zm231 0h3v3h-3zm-236 1h3v3h-3zm135 0h3v3h-3zm1 0h3v3h-3zm-124 1h3v3h-3zm47 0h3v3h-3zm83 1h3v3h-3zm91 0h3v3h-3zm13 0h3v3h-3zm-327 1h3v3h-3zm6 0h3v3h-3zm246 0h3v3h-3zm85 0h3v3h-3zm-393 1h3v3h-3zm51 0h3v3h-3zm84 0h3v3h-3zm18 0h3v3h-3zm99 0h3v3h-3zm147 0h3v3h-3zm-353 1h3v3h-3zm51 0h3v3h-3zm103 0h3v3h-3zm129 0h3v3h-3zm38 0h3v3h-3zm-358 1h3v3h-3zm62 0h3v3h-3zm90 0h3v3h-3zm-156 1h3v3h-3zm9 0h3v3h-3zm62 0h3v3h-3zm16 0h3v3h-3zm43 0h3v3h-3zm32 0h3v3h-3zm80 0h3v3h-3zm135 0h3v3h-3zm-341 1h3v3h-3zm40 0h3v3h-3zm75 0h3v3h-3zm85 0h3v3h-3zm1 0h3v3h-3zm66 1h3v3h-3zm25 0h3v3h-3zm-193 1h3v3h-3zm161 0h3v3h-3zm67 0h3v3h-3zm-349 1h3v3h-3zm67 0h3v3h-3zm2 0h3v3h-3zm218 0h3v3h-3zm75 0h3v3h-3zm-213 1h3v3h-3zm-146 2h3v3h-3zm18 0h3v3h-3zm140 0h3v3h-3zm191 0h3v3h-3zm-231 1h3v3h-3zm34 0h3v3h-3zm12 0h3v3h-3zm197 0h3v3h-3zm-87 1h3v3h-3zm17 0h3v3h-3zm-193 1h3v3h-3zm84 0h3v3h-3zm-180 1h3v3h-3zm145 0h3v3h-3zm46 0h3v3h-3zm110 0h3v3h-3zm48 0h3v3h-3zm-334 1h3v3h-3zm151 0h3v3h-3zm31 0h3v3h-3zm98 0h3v3h-3zm12 0h3v3h-3zm-187 1h3v3h-3zm24 0h3v3h-3zm42 0h3v3h-3zm43 0h3v3h-3zm56 0h3v3h-3zm75 0h3v3h-3zm-71 1h3v3h-3zm23 0h3v3h-3zm-212 1h3v3h-3zm22 0h3v3h-3zm80 0h3v3h-3zm71 0h3v3h-3zm77 0h3v3h-3zm-346 1h3v3h-3zm135 0h3v3h-3zm-158 1h3v3h-3zm124 0h3v3h-3zm75 0h3v3h-3zm99 0h3v3h-3zm1 0h3v3h-3zm4 0h3v3h-3zm33 0h3v3h-3zm44 0h3v3h-3zm-244 1h3v3h-3zm26 0h3v3h-3zm24 0h3v3h-3zm-54 2h3v3h-3zm93 0h3v3h-3zm41 0h3v3h-3zm103 0h3v3h-3zm-365 1h3v3h-3zm253 0h3v3h-3zm-130 1h3v3h-3zm70 0h3v3h-3zm183 0h3v3h-3zm-379 1h3v3h-3zm6 0h3v3h-3zm71 0h3v3h-3zm164 0h3v3h-3zm60 0h3v3h-3zm36 0h3v3h-3zm8 0h3v3h-3zm-333 1h3v3h-3zm80 0h3v3h-3zm69 0h3v3h-3zm24 0h3v3h-3zm50 0h3v3h-3zm116 0h3v3h-3zm18 0h3v3h-3zm-375 1h3v3h-3zm77 0h3v3h-3zm16 0h3v3h-3zm140 0h3v3h-3zm26 1h3v3h-3zm12 0h3v3h-3zm76 0h3v3h-3zm11 0h3v3h-3zm28 0h3v3h-3zm-75 1h3v3h-3zm-288 1h3v3h-3zm128 0h3v3h-3zm9 0h3v3h-3zm2 0h3v3h-3zm41 0h3v3h-3zm-154 1h3v3h-3zm106 0h3v3h-3zm186 0h3v3h-3zm35 0h3v3h-3zm-379 1h3v3h-3zm170 0h3v3h-3zm23 0h3v3h-3zm126 0h3v3h-3zm72 0h3v3h-3zm-156 1h3v3h-3zm5 0h3v3h-3zm120 0h3v3h-3zm-120 1h3v3h-3zm85 0h3v3h-3zm-296 1h3v3h-3zm95 0h3v3h-3zm85 0h3v3h-3zm99 0h3v3h-3zm11 0h3v3h-3zm62 0h3v3h-3zm-124 1h3v3h-3zm73 0h3v3h-3zm11 0h3v3h-3zm-290 1h3v3h-3zm246 0h3v3h-3zm26 0h3v3h-3zm70 0h3v3h-3zm-393 1h3v3h-3zm170 0h3v3h-3zm22 0h3v3h-3zm39 0h3v3h-3zm82 0h3v3h-3zm1 0h3v3h-3zm22 0h3v3h-3zm22 0h3v3h-3zm-361 1h3v3h-3zm217 0h3v3h-3zm24 0h3v3h-3zm100 0h3v3h-3zm45 0h3v3h-3zm-387 1h3v3h-3zm35 0h3v3h-3zm189 0h3v3h-3zm6 0h3v3h-3zm31 0h3v3h-3zm-106 1h3v3h-3zm60 0h3v3h-3zm66 0h3v3h-3zm51 0h3v3h-3zm67 0h3v3h-3zm-250 1h3v3h-3zm148 0h3v3h-3zm50 0h3v3h-3zm-341 1h3v3h-3zm80 0h3v3h-3zm107 0h3v3h-3zm140 0h3v3h-3zm56 0h3v3h-3zm-267 1h3v3h-3zm52 0h3v3h-3zm228 0h3v3h-3zm-368 2h3v3h-3zm56 0h3v3h-3zm159 0h3v3h-3zm-238 1h3v3h-3zm87 0h3v3h-3zm183 0h3v3h-3zm110 0h3v3h-3zm-265 1h3v3h-3zm64 0h3v3h-3zm103 0h3v3h-3zm43 0h3v3h-3zm-326 1h3v3h-3zm7 0h3v3h-3zm12 0h3v3h-3zm166 0h3v3h-3zm153 0h3v3h-3zm-325 1h3v3h-3zm153 0h3v3h-3zm19 0h3v3h-3zm147 0h3v3h-3zm52 1h3v3h-3zm-262 1h3v3h-3zm54 0h3v3h-3zm94 0h3v3h-3zm-103 1h3v3h-3zm174 0h3v3h-3zm-343 1h3v3h-3zm172 0h3v3h-3zm-157 1h3v3h-3zm133 0h3v3h-3zm165 0h3v3h-3zm75 0h3v3h-3zm-238 1h3v3h-3zm231 0h3v3h-3zm-246 1h3v3h-3zm20 0h3v3h-3zm232 0h3v3h-3zm-261 1h3v3h-3zm22 0h3v3h-3zm124 0h3v3h-3zm119 0h3v3h-3zm-395 1h3v3h-3zm253 0h3v3h-3zm93 0h3v3h-3zm47 1h3v3h-3zm-124 1h3v3h-3zm48 0h3v3h-3zm-217 1h3v3h-3zm38 0h3v3h-3zm79 0h3v3h-3zm46 0h3v3h-3zm-115 1h3v3h-3zm102 0h3v3h-3zm108 0h3v3h-3zm-282 1h3v3h-3zm40 0h3v3h-3zm278 1h3v3h-3zm-234 1h3v3h-3zm-134 1h3v3h-3zm32 0h3v3h-3zm39 0h3v3h-3zm16 0h3v3h-3zm5 0h3v3h-3zm98 0h3v3h-3zm96 0h3v3h-3zm-201 1h3v3h-3zm36 0h3v3h-3zm103 0h3v3h-3zm-226 1h3v3h-3zm316 0h3v3h-3zm-277 1h3v3h-3zm11 0h3v3h-3zm50 0h3v3h-3zm41 0h3v3h-3zm66 0h3v3h-3zm-141 1h3v3h-3zm241 0h3v3h-3zm6 0h3v3h-3zm58 0h3v3h-3zm-376 1h3v3h-3zm49 0h3v3h-3zm116 0h3v3h-3zm29 0h3v3h-3zm163 0h3v3h-3zm-277 1h3v3h-3zm-85 1h3v3h-3zm95 0h3v3h-3zm126 0h3v3h-3zm-110 1h3v3h-3zm88 0h3v3h-3zm50 0h3v3h-3zm1 0h3v3h-3zm-106 1h3v3h-3zm6 0h3v3h-3zm106 0h3v3h-3zm-166 1h3v3h-3zm291 0h3v3h-3zm-212 1h3v3h-3zm160 0h3v3h-3zm35 0h3v3h-3zm-299 1h3v3h-3zm180 0h3v3h-3zm79 0h3v3h-3zm-229 1h3v3h-3zm118 0h3v3h-3zm6 0h3v3h-3zm1 0h3v3h-3zm23 0h3v3h-3zm107 0h3v3h-3zm-239 1h3v3h-3zm9 0h3v3h-3zm88 0h3v3h-3zm126 0h3v3h-3zm12 1h3v3h-3zm-74 1h3v3h-3zm110 0h3v3h-3zm-342 1h3v3h-3zm6 0h3v3h-3zm275 0h3v3h-3zm44 0h3v3h-3zm-251 1h3v3h-3zm2 0h3v3h-3zm151 0h3v3h-3zm76 0h3v3h-3zm-247 1h3v3h-3zm241 0h3v3h-3zm-227 1h3v3h-3zm229 0h3v3h-3zm-77 1h3v3h-3zm-116 1h3v3h-3zm6 0h3v3h-3zm168 0h3v3h-3zm16 0h3v3h-3zm26 0h3v3h-3zm5 0h3v3h-3zm15 0h3v3h-3zm-229 1h3v3h-3zm17 0h3v3h-3zm94 0h3v3h-3zm101 0h3v3h-3zm-289 1h3v3h-3zm51 0h3v3h-3zm209 0h3v3h-3zm-239 1h3v3h-3zm9 0h3v3h-3zm59 0h3v3h-3zm139 0h3v3h-3zm29 0h3v3h-3zm13 0h3v3h-3zm-266 1h3v3h-3zm291 0h3v3h-3zm-214 1h3v3h-3zm1 0h3v3h-3zm1 0h3v3h-3zm50 0h3v3h-3zm133 0h3v3h-3zm26 0h3v3h-3zm-267 1h3v3h-3zm163 0h3v3h-3zm38 0h3v3h-3zm18 0h3v3h-3zm10 0h3v3h-3zm21 0h3v3h-3zm30 0h3v3h-3zm-48 1h3v3h-3zm4 1h3v3h-3zm39 0h3v3h-3zm-292 1h3v3h-3zm248 0h3v3h-3zm-178 1h3v3h-3zm166 0h3v3h-3zm-220 1h3v3h-3zm168 0h3v3h-3zm37 0h3v3h-3zm23 0h3v3h-3zm-336 1h3v3h-3zm110 0h3v3h-3zm43 0h3v3h-3zm129 0h3v3h-3zm49 0h3v3h-3zm-173 1h3v3h-3zm118 0h3v3h-3zm-184 1h3v3h-3zm23 0h3v3h-3zm229 0h3v3h-3zm-141 1h3v3h-3zm6 0h3v3h-3zm118 0h3v3h-3zm-330 1h3v3h-3zm318 0h3v3h-3zm-218 1h3v3h-3zm99 0h3v3h-3zm2 0h3v3h-3zm174 0h3v3h-3zm-274 1h3v3h-3zm163 0h3v3h-3zm-47 1h3v3h-3zm132 0h3v3h-3zm-79 1h3v3h-3zm-272 1h3v3h-3zm98 0h3v3h-3zm100 0h3v3h-3zm170 0h3v3h-3zm-196 1h3v3h-3zm52 0h3v3h-3zm74 2h3v3h-3zm53 0h3v3h-3zm-257 1h3v3h-3zm82 0h3v3h-3zm75 0h3v3h-3zm95 0h3v3h-3zm-257 1h3v3h-3zm139 0h3v3h-3zm124 0h3v3h-3zm11 0h3v3h-3zm-366 1h3v3h-3zm197 0h3v3h-3zm162 0h3v3h-3zm2 0h3v3h-3zm-17 1h3v3h-3zm-108 2h3v3h-3zm124 0h3v3h-3zm-19 1h3v3h-3zm-338 1h3v3h-3zm196 1h3v3h-3zm-219 1h3v3h-3zm260 0h3v3h-3zm117 1h3v3h-3zm-153 2h3v3h-3zm-221 1h3v3h-3zm256 0h3v3h-3zm-30 1h3v3h-3zm6 1h3v3h-3zm6 0h3v3h-3zm6 0h3v3h-3zm6 0h3v3h-3zm125 0h3v3h-3zm-16 2h3v3h-3zm-14 1h3v3h-3zm6 1h3v3h-3zm-136 2h3v3h-3zm9 0h3v3h-3zm107 1h3v3h-3zm10 0h3v3h-3zm50 0h3v3h-3zm-58 2h3v3h-3zm-145 1h3v3h-3zm40 0h3v3h-3zm32 0h3v3h-3zm-163 1h3v3h-3zm62 0h3v3h-3zm54 0h3v3h-3zm132 0h3v3h-3zm-60 1h3v3h-3zm67 0h3v3h-3zm28 0h3v3h-3zm13 0h3v3h-3zm-301 1h3v3h-3zm183 1h3v3h-3zm4 0h3v3h-3zm-120 1h3v3h-3zm69 0h3v3h-3zm105 0h3v3h-3zm-69 1h3v3h-3zm6 0h3v3h-3zm127 0h3v3h-3zm-18 1h3v3h-3zm22 0h3v3h-3zm-315 1h3v3h-3zm180 0h3v3h-3zm113 0h3v3h-3zm-227 1h3v3h-3zm8 0h3v3h-3zm-68 1h3v3h-3zm245 0h3v3h-3zm-138 1h3v3h-3zm185 0h3v3h-3zm-134 1h3v3h-3zm139 1h3v3h-3zm-293 1h3v3h-3zm170 0h3v3h-3zm-62 1h3v3h-3zm135 0h3v3h-3zm-232 1h3v3h-3zm146 0h3v3h-3zm-152 2h3v3h-3zm38 1h3v3h-3zm67 1h3v3h-3zm50 0h3v3h-3zm-114 3h3v3h-3zm68 2h3v3h-3zm44 0h3v3h-3zm132 0h3v3h-3zm-242 1h3v3h-3zm-15 2h3v3h-3zm58 0h3v3h-3zm-53 1h3v3h-3zm-10 1h3v3h-3zm69 0h3v3h-3zm17 0h3v3h-3zm43 0h3v3h-3zm136 0h3v3h-3zm-207 1h3v3h-3zm60 0h3v3h-3zm6 0h3v3h-3zm-258 1h3v3h-3zm129 0h3v3h-3zm202 0h3v3h-3zm-204 1h3v3h-3zm47 2h3v3h-3zm36 0h3v3h-3zm8 0h3v3h-3zm183 0h3v3h-3zm-223 1h3v3h-3zm12 0h3v3h-3zm-186 1h3v3h-3zm120 0h3v3h-3zm91 0h3v3h-3zm117 0h3v3h-3zm-148 2h3v3h-3zm10 0h3v3h-3zm-171 1h3v3h-3zm231 0h3v3h-3zm-70 1h3v3h-3zm148 1h3v3h-3zm1 0h3v3h-3zm-221 1h3v3h-3zm4 0h3v3h-3zm5 0h3v3h-3zm78 0h3v3h-3zm-93 1h3v3h-3zm264 0h3v3h-3zm-246 1h3v3h-3zm144 0h3v3h-3zm6 0h3v3h-3zm53 0h3v3h-3zm-205 1h3v3h-3zm80 0h3v3h-3zm50 0h3v3h-3zm-152 1h3v3h-3zm28 1h3v3h-3zm82 0h3v3h-3zm22 0h3v3h-3zm50 0h3v3h-3zm42 0h3v3h-3zm43 0h3v3h-3zm-163 1h3v3h-3zm12 0h3v3h-3zm4 0h3v3h-3zm6 0h3v3h-3zm12 0h3v3h-3zm-245 1h3v3h-3zm97 0h3v3h-3zm36 0h3v3h-3zm88 0h3v3h-3zm8 0h3v3h-3zm-126 1h3v3h-3zm35 0h3v3h-3zm77 0h3v3h-3zm35 0h3v3h-3zm7 0h3v3h-3zm87 0h3v3h-3zm56 0h3v3h-3zm-383 1h3v3h-3zm81 0h3v3h-3zm108 0h3v3h-3zm29 0h3v3h-3zm-94 2h3v3h-3zm69 0h3v3h-3zm-213 1h3v3h-3zm24 0h3v3h-3zm116 0h3v3h-3zm103 0h3v3h-3zm14 0h3v3h-3zm142 0h3v3h-3zm-297 1h3v3h-3zm45 1h3v3h-3zm201 0h3v3h-3zm46 0h3v3h-3zm-186 1h3v3h-3zm40 0h3v3h-3zm36 0h3v3h-3zm-287 1h3v3h-3zm145 1h3v3h-3zm8 0h3v3h-3zm64 0h3v3h-3zm59 0h3v3h-3zm6 0h3v3h-3zm6 0h3v3h-3zm63 0h3v3h-3zm-261 1h3v3h-3zm16 0h3v3h-3zm155 0h3v3h-3zm9 1h3v3h-3zm-274 1h3v3h-3zm92 0h3v3h-3zm8 0h3v3h-3zm157 0h3v3h-3zm16 0h3v3h-3zm-58 1h3v3h-3zm81 0h3v3h-3zm61 0h3v3h-3zm-362 1h3v3h-3zm229 0h3v3h-3zm-111 1h3v3h-3zm37 0h3v3h-3zm-65 1h3v3h-3zm179 0h3v3h-3zm-10 1h3v3h-3zm107 0h3v3h-3zm-88 1h3v3h-3zm25 0h3v3h-3zm-93 1h3v3h-3zm11 0h3v3h-3zm11 0h3v3h-3zm-122 1h3v3h-3zm13 0h3v3h-3zm28 0h3v3h-3zm103 0h3v3h-3zm23 0h3v3h-3zm67 0h3v3h-3zm-312 1h3v3h-3zm12 0h3v3h-3zm145 0h3v3h-3zm77 0h3v3h-3zm-138 1h3v3h-3zm64 0h3v3h-3zm129 0h3v3h-3zm-295 1h3v3h-3zm12 0h3v3h-3zm77 0h3v3h-3zm12 0h3v3h-3zm7 0h3v3h-3zm12 0h3v3h-3zm79 0h3v3h-3zm12 0h3v3h-3zm11 0h3v3h-3zm-168 1h3v3h-3zm60 0h3v3h-3zm90 0h3v3h-3zm12 0h3v3h-3zm1 0h3v3h-3zm18 0h3v3h-3zm19 0h3v3h-3zm22 0h3v3h-3zm-116 1h3v3h-3zm27 0h3v3h-3zm23 0h3v3h-3zm13 0h3v3h-3zm6 0h3v3h-3zm-139 1h3v3h-3zm64 0h3v3h-3zm16 0h3v3h-3zm22 0h3v3h-3zm79 0h3v3h-3zm49 0h3v3h-3zm-97 1h3v3h-3zm36 0h3v3h-3zm6 0h3v3h-3zm-291 1h3v3h-3zm67 0h3v3h-3zm64 0h3v3h-3zm44 0h3v3h-3zm25 0h3v3h-3zm88 0h3v3h-3zm32 0h3v3h-3zm-316 1h3v3h-3zm191 0h3v3h-3zm89 0h3v3h-3zm11 0h3v3h-3zm101 0h3v3h-3zm-401 1h3v3h-3zm14 0h3v3h-3zm182 0h3v3h-3zm13 0h3v3h-3zm41 0h3v3h-3zm34 0h3v3h-3zm118 0h3v3h-3zm-379 1h3v3h-3zm97 0h3v3h-3zm160 0h3v3h-3zm-284 1h3v3h-3zm22 0h3v3h-3zm174 0h3v3h-3zm21 0h3v3h-3zm12 0h3v3h-3zm51 0h3v3h-3zm108 0h3v3h-3zm-315 1h3v3h-3zm46 0h3v3h-3zm29 0h3v3h-3zm5 0h3v3h-3zm38 0h3v3h-3zm81 0h3v3h-3zm3 0h3v3h-3zm1 0h3v3h-3zm32 0h3v3h-3zm20 0h3v3h-3zm-272 1h3v3h-3zm88 0h3v3h-3zm13 0h3v3h-3zm66 0h3v3h-3zm4 0h3v3h-3zm41 0h3v3h-3zm66 0h3v3h-3zm77 0h3v3h-3zm6 0h3v3h-3zm-391 1h3v3h-3zm88 0h3v3h-3zm73 0h3v3h-3zm33 0h3v3h-3zm44 0h3v3h-3zm-125 1h3v3h-3zm43 0h3v3h-3zm72 0h3v3h-3zm6 0h3v3h-3zm-230 1h3v3h-3zm22 0h3v3h-3zm109 0h3v3h-3zm17 0h3v3h-3zm77 0h3v3h-3zm-185 1h3v3h-3zm65 0h3v3h-3zm112 0h3v3h-3zm4 0h3v3h-3zm86 0h3v3h-3zm-329 1h3v3h-3zm4 0h3v3h-3zm22 0h3v3h-3zm76 0h3v3h-3zm2 0h3v3h-3zm53 0h3v3h-3zm9 0h3v3h-3zm34 0h3v3h-3zm15 0h3v3h-3zm17 0h3v3h-3zm3 0h3v3h-3zm31 0h3v3h-3zm-228 1h3v3h-3zm86 0h3v3h-3zm37 0h3v3h-3zm35 0h3v3h-3zm35 0h3v3h-3zm22 0h3v3h-3zm81 0h3v3h-3zm-326 1h3v3h-3zm22 0h3v3h-3zm174 0h3v3h-3zm23 0h3v3h-3zm11 0h3v3h-3zm-242 1h3v3h-3zm38 0h3v3h-3zm31 0h3v3h-3zm31 0h3v3h-3zm95 0h3v3h-3zm32 0h3v3h-3zm-103 1h3v3h-3zm67 0h3v3h-3zm30 0h3v3h-3zm27 0h3v3h-3zm-232 1h3v3h-3zm26 0h3v3h-3zm52 0h3v3h-3zm1 0h3v3h-3zm48 0h3v3h-3zm5 0h3v3h-3zm39 0h3v3h-3zm36 0h3v3h-3zm-209 1h3v3h-3zm95 0h3v3h-3zm30 0h3v3h-3zm72 0h3v3h-3zm21 0h3v3h-3zm21 0h3v3h-3zm-255 1h3v3h-3zm23 0h3v3h-3zm51 0h3v3h-3zm80 0h3v3h-3zm30 0h3v3h-3zm38 0h3v3h-3zm-219 1h3v3h-3zm45 0h3v3h-3zm75 0h3v3h-3zm57 0h3v3h-3zm45 0h3v3h-3zm-198 1h3v3h-3zm52 0h3v3h-3zm31 0h3v3h-3zm27 0h3v3h-3zm21 0h3v3h-3zm102 0h3v3h-3zm147 0h3v3h-3zm-291 1h3v3h-3zm59 0h3v3h-3zm10 0h3v3h-3zm30 0h3v3h-3zm168 0h3v3h-3zm-386 1h3v3h-3zm22 0h3v3h-3zm12 0h3v3h-3zm20 0h3v3h-3zm54 0h3v3h-3zm15 0h3v3h-3zm17 0h3v3h-3zm25 0h3v3h-3zm9 0h3v3h-3zm-37 1h3v3h-3zm33 0h3v3h-3zm68 0h3v3h-3zm31 0h3v3h-3zm-240 1h3v3h-3zm9 0h3v3h-3zm109 0h3v3h-3zm81 0h3v3h-3zm-186 1h3v3h-3zm16 0h3v3h-3zm4 0h3v3h-3zm350 0h3v3h-3zm-414 1h3v3h-3zm122 0h3v3h-3zm13 0h3v3h-3zm36 0h3v3h-3zm49 0h3v3h-3zm167 0h3v3h-3zm15 0h3v3h-3zm6 0h3v3h-3zm-134 1h3v3h-3zm-226 1h3v3h-3zm15 0h3v3h-3zm14 0h3v3h-3zm153 0h3v3h-3zm13 0h3v3h-3zm-175 1h3v3h-3zm4 0h3v3h-3zm9 0h3v3h-3zm51 0h3v3h-3zm38 0h3v3h-3zm21 0h3v3h-3zm-192 1h3v3h-3zm87 0h3v3h-3zm34 0h3v3h-3zm30 0h3v3h-3zm18 0h3v3h-3zm51 0h3v3h-3zm179 0h3v3h-3zm-347 1h3v3h-3zm338 0h3v3h-3zm-299 1h3v3h-3zm62 0h3v3h-3zm6 0h3v3h-3zm5 0h3v3h-3zm7 0h3v3h-3zm77 0h3v3h-3zm142 0h3v3h-3zm10 0h3v3h-3zm-386 1h3v3h-3zm117 0h3v3h-3zm56 0h3v3h-3zm44 0h3v3h-3zm44 0h3v3h-3zm73 0h3v3h-3zm-346 1h3v3h-3zm6 0h3v3h-3zm47 0h3v3h-3zm40 0h3v3h-3zm23 0h3v3h-3zm100 0h3v3h-3zm111 0h3v3h-3zm3 0h3v3h-3zm-333 1h3v3h-3zm239 0h3v3h-3zm16 0h3v3h-3zm61 0h3v3h-3zm34 0h3v3h-3zm-214 1h3v3h-3zm79 0h3v3h-3zm-155 1h3v3h-3zm39 0h3v3h-3zm17 0h3v3h-3zm14 0h3v3h-3zm42 0h3v3h-3zm58 0h3v3h-3zm4 0h3v3h-3zm26 0h3v3h-3zm144 0h3v3h-3zm8 0h3v3h-3zm-410 1h3v3h-3zm16 0h3v3h-3zm22 0h3v3h-3zm5 0h3v3h-3zm102 0h3v3h-3zm64 0h3v3h-3zm55 0h3v3h-3zm6 0h3v3h-3zm54 0h3v3h-3zm11 0h3v3h-3zm69 0h3v3h-3zm-406 1h3v3h-3zm65 0h3v3h-3zm9 0h3v3h-3zm4 0h3v3h-3zm5 0h3v3h-3zm21 0h3v3h-3zm37 0h3v3h-3zm262 0h3v3h-3zm-334 1h3v3h-3zm39 0h3v3h-3zm4 0h3v3h-3zm40 0h3v3h-3zm55 0h3v3h-3zm77 0h3v3h-3zm-197 1h3v3h-3zm40 0h3v3h-3zm100 0h3v3h-3zm87 0h3v3h-3zm38 0h3v3h-3zm-205 1h3v3h-3zm41 0h3v3h-3zm15 0h3v3h-3zm86 0h3v3h-3zm8 0h3v3h-3zm6 0h3v3h-3zm-236 1h3v3h-3zm90 0h3v3h-3zm16 0h3v3h-3zm87 0h3v3h-3zm131 0h3v3h-3zm-392 1h3v3h-3zm92 0h3v3h-3zm33 0h3v3h-3zm99 0h3v3h-3zm115 0h3v3h-3zm64 0h3v3h-3zm-341 1h3v3h-3zm81 0h3v3h-3zm57 0h3v3h-3zm93 0h3v3h-3zm30 0h3v3h-3zm-228 1h3v3h-3zm89 0h3v3h-3zm36 0h3v3h-3zm-99 1h3v3h-3zm95 0h3v3h-3zm-216 1h3v3h-3zm99 0h3v3h-3zm38 0h3v3h-3zm24 0h3v3h-3zm85 0h3v3h-3zm48 0h3v3h-3zm111 0h3v3h-3zm-386 1h3v3h-3zm40 0h3v3h-3zm58 0h3v3h-3zm9 0h3v3h-3zm6 0h3v3h-3zm66 0h3v3h-3zm14 0h3v3h-3zm49 0h3v3h-3zm58 0h3v3h-3zm-215 1h3v3h-3zm9 0h3v3h-3zm-5 1h3v3h-3zm87 0h3v3h-3zm56 0h3v3h-3zm58 0h3v3h-3zm-270 1h3v3h-3zm169 0h3v3h-3zm-209 1h3v3h-3zm115 0h3v3h-3zm151 0h3v3h-3zm39 0h3v3h-3zm102 0h3v3h-3zm-407 1h3v3h-3zm51 0h3v3h-3zm6 0h3v3h-3zm61 0h3v3h-3zm44 0h3v3h-3zm29 0h3v3h-3zm7 0h3v3h-3zm-152 1h3v3h-3zm-25 1h3v3h-3zm11 0h3v3h-3zm43 0h3v3h-3zm111 0h3v3h-3zm22 0h3v3h-3zm-168 1h3v3h-3zm4 0h3v3h-3zm19 0h3v3h-3zm36 0h3v3h-3zm-99 1h3v3h-3zm197 0h3v3h-3zm36 0h3v3h-3zm-207 1h3v3h-3zm1 0h3v3h-3zm14 0h3v3h-3zm207 0h3v3h-3zm83 0h3v3h-3zm-237 1h3v3h-3zm25 0h3v3h-3zm41 0h3v3h-3zm104 0h3v3h-3zm-198 1h3v3h-3zm20 0h3v3h-3zm103 0h3v3h-3zm19 0h3v3h-3zm34 0h3v3h-3zm16 0h3v3h-3zm27 0h3v3h-3zm-292 1h3v3h-3zm4 0h3v3h-3zm260 0h3v3h-3zm24 0h3v3h-3zm64 0h3v3h-3zm-301 1h3v3h-3zm154 0h3v3h-3zm14 0h3v3h-3zm39 0h3v3h-3zm12 0h3v3h-3zm-107 1h3v3h-3zm38 0h3v3h-3zm-103 1h3v3h-3zm31 0h3v3h-3zm88 0h3v3h-3zm66 0h3v3h-3zm13 0h3v3h-3zm44 0h3v3h-3zm-270 1h3v3h-3zm88 1h3v3h-3zm48 0h3v3h-3zm17 0h3v3h-3zm30 0h3v3h-3zm21 0h3v3h-3zm-220 1h3v3h-3zm80 0h3v3h-3zm-116 1h3v3h-3zm122 0h3v3h-3zm6 0h3v3h-3zm6 0h3v3h-3zm66 0h3v3h-3zm-159 1h3v3h-3zm6 0h3v3h-3zm35 0h3v3h-3zm5 0h3v3h-3zm194 0h3v3h-3zm-291 1h3v3h-3zm110 0h3v3h-3zm6 0h3v3h-3zm84 0h3v3h-3zm-195 1h3v3h-3zm100 0h3v3h-3zm17 0h3v3h-3zm6 0h3v3h-3zm117 0h3v3h-3zm-251 1h3v3h-3zm84 0h3v3h-3zm189 0h3v3h-3zm-181 1h3v3h-3zm36 0h3v3h-3zm90 0h3v3h-3zm26 0h3v3h-3zm-155 1h3v3h-3zm16 0h3v3h-3zm-2 1h3v3h-3zm105 0h3v3h-3zm73 0h3v3h-3zm-148 1h3v3h-3zm87 1h3v3h-3zm32 0h3v3h-3zm20 1h3v3h-3zm-63 1h3v3h-3zm156 0h3v3h-3zm5 0h3v3h-3zm-269 1h3v3h-3zm37 0h3v3h-3zm243 0h3v3h-3zm-160 1h3v3h-3zm28 0h3v3h-3zm18 0h3v3h-3zm102 0h3v3h-3zm4 0h3v3h-3zm-129 1h3v3h-3zm11 0h3v3h-3zm109 0h3v3h-3zm14 0h3v3h-3zm-308 1h3v3h-3zm140 0h3v3h-3zm51 0h3v3h-3zm-119 1h3v3h-3zm93 0h3v3h-3zm8 0h3v3h-3zm117 0h3v3h-3zm22 0h3v3h-3zm-148 1h3v3h-3zm7 0h3v3h-3zm19 0h3v3h-3zm-169 1h3v3h-3zm10 0h3v3h-3zm48 0h3v3h-3zm71 0h3v3h-3zm166 0h3v3h-3zm-124 1h3v3h-3zm94 0h3v3h-3zm-156 1h3v3h-3zm8 0h3v3h-3zm73 0h3v3h-3zm-137 1h3v3h-3zm86 0h3v3h-3zm159 0h3v3h-3zm-302 1h3v3h-3zm132 0h3v3h-3zm23 0h3v3h-3zm111 0h3v3h-3zm-248 1h3v3h-3zm47 0h3v3h-3zm54 0h3v3h-3zm55 0h3v3h-3zm46 0h3v3h-3zm65 1h3v3h-3zm4 0h3v3h-3zm17 0h3v3h-3zm-196 1h3v3h-3zm85 0h3v3h-3zm68 0h3v3h-3zm17 0h3v3h-3zm-165 1h3v3h-3zm14 0h3v3h-3zm96 0h3v3h-3zm-168 1h3v3h-3zm76 0h3v3h-3zm160 0h3v3h-3zm-271 1h3v3h-3zm133 0h3v3h-3zm153 0h3v3h-3zm-198 1h3v3h-3zm64 0h3v3h-3zm103 0h3v3h-3zm6 0h3v3h-3zm2 0h3v3h-3zm6 0h3v3h-3zm-179 1h3v3h-3zm15 0h3v3h-3zm136 0h3v3h-3zm33 0h3v3h-3zm-193 1h3v3h-3zm1 0h3v3h-3zm-79 1h3v3h-3zm1 0h3v3h-3zm28 0h3v3h-3zm50 0h3v3h-3zm176 0h3v3h-3zm31 0h3v3h-3zm-188 1h3v3h-3zm33 0h3v3h-3zm121 0h3v3h-3zm22 0h3v3h-3zm-328 1h3v3h-3zm139 0h3v3h-3zm153 0h3v3h-3zm-91 1h3v3h-3zm-11 1h3v3h-3zm152 0h3v3h-3zm-283 1h3v3h-3zm20 0h3v3h-3zm70 0h3v3h-3zm47 0h3v3h-3zm135 0h3v3h-3zm-199 1h3v3h-3zm7 0h3v3h-3zm166 0h3v3h-3zm2 0h3v3h-3zm-126 1h3v3h-3zm6 0h3v3h-3zm8 0h3v3h-3zm98 0h3v3h-3zm-219 1h3v3h-3zm101 0h3v3h-3zm18 0h3v3h-3zm70 0h3v3h-3zm81 0h3v3h-3zm-281 1h3v3h-3zm86 0h3v3h-3zm83 0h3v3h-3zm101 0h3v3h-3zm-265 1h3v3h-3zm102 0h3v3h-3zm29 0h3v3h-3zm38 0h3v3h-3zm69 0h3v3h-3zm-168 1h3v3h-3zm127 0h3v3h-3zm27 0h3v3h-3zm-208 1h3v3h-3zm85 0h3v3h-3zm35 0h3v3h-3zm-189 1h3v3h-3zm319 0h3v3h-3zm-245 1h3v3h-3zm60 0h3v3h-3zm74 0h3v3h-3zm40 0h3v3h-3zm6 0h3v3h-3zm-177 1h3v3h-3zm118 0h3v3h-3zm1 0h3v3h-3zm46 0h3v3h-3zm18 0h3v3h-3zm15 0h3v3h-3zm17 0h3v3h-3zm-168 1h3v3h-3zm12 2h3v3h-3zm17 0h3v3h-3zm22 0h3v3h-3zm4 0h3v3h-3zm24 0h3v3h-3zm35 0h3v3h-3zm27 0h3v3h-3zm54 0h3v3h-3zm-209 1h3v3h-3zm60 0h3v3h-3zm14 0h3v3h-3zm9 0h3v3h-3zm5 0h3v3h-3zm74 0h3v3h-3zm19 0h3v3h-3zm-166 1h3v3h-3zm63 0h3v3h-3zm-22 1h3v3h-3zm128 0h3v3h-3zm-157 1h3v3h-3zm18 0h3v3h-3zm37 0h3v3h-3zm72 0h3v3h-3zm4 0h3v3h-3zm-122 1h3v3h-3zm16 0h3v3h-3zm156 0h3v3h-3zm-208 1h3v3h-3zm17 0h3v3h-3zm102 0h3v3h-3zm9 0h3v3h-3zm22 0h3v3h-3zm30 0h3v3h-3zm-94 1h3v3h-3zm24 0h3v3h-3zm4 0h3v3h-3zm9 0h3v3h-3zm82 0h3v3h-3zm-19 1h3v3h-3zm-158 1h3v3h-3zm21 0h3v3h-3zm56 0h3v3h-3zm22 0h3v3h-3zm19 0h3v3h-3zm31 0h3v3h-3zm30 0h3v3h-3zm-232 1h3v3h-3zm63 0h3v3h-3zm51 0h3v3h-3zm-71 1h3v3h-3zm118 0h3v3h-3zm-137 1h3v3h-3zm103 0h3v3h-3zm29 0h3v3h-3zm42 0h3v3h-3zm28 0h3v3h-3zm-231 1h3v3h-3zm60 0h3v3h-3zm17 0h3v3h-3zm17 0h3v3h-3zm29 0h3v3h-3zm4 0h3v3h-3zm46 0h3v3h-3zm26 0h3v3h-3zm21 0h3v3h-3zm18 0h3v3h-3zm-167 1h3v3h-3zm19 0h3v3h-3zm9 0h3v3h-3zm66 0h3v3h-3zm25 0h3v3h-3zm4 0h3v3h-3zm32 0h3v3h-3zm-181 1h3v3h-3zm4 0h3v3h-3zm54 0h3v3h-3zm66 0h3v3h-3zm17 0h3v3h-3zm-99 1h3v3h-3zm110 0h3v3h-3zm-122 1h3v3h-3zm33 0h3v3h-3zm83 0h3v3h-3zm12 0h3v3h-3zm-142 1h3v3h-3zm85 0h3v3h-3zm4 0h3v3h-3zm-99 1h3v3h-3zm60 0h3v3h-3zm30 0h3v3h-3zm67 0h3v3h-3zm-123 1h3v3h-3zm99 0h3v3h-3zm-110 1h3v3h-3zm63 0h3v3h-3zm17 0h3v3h-3zm-91 1h3v3h-3zm45 0h3v3h-3zm7 0h3v3h-3zm98 0h3v3h-3zm-80 1h3v3h-3zm48 0h3v3h-3zm-129 1h3v3h-3zm67 0h3v3h-3zm5 0h3v3h-3zm5 0h3v3h-3zm28 0h3v3h-3zm-72 1h3v3h-3zm90 0h3v3h-3zm-110 1h3v3h-3zm9 0h3v3h-3zm-23 1h3v3h-3zm104 0h3v3h-3zm6 0h3v3h-3zm17 0h3v3h-3zm7 0h3v3h-3zm-131 1h3v3h-3zm124 0h3v3h-3zm38 0h3v3h-3zm-148 1h3v3h-3zm16 0h3v3h-3zm81 0h3v3h-3zm9 0h3v3h-3zm1 0h3v3h-3zm-103 1h3v3h-3zm62 0h3v3h-3zm35 0h3v3h-3zm-16 1h3v3h-3zm28 0h3v3h-3zm-124 1h3v3h-3zm82 0h3v3h-3zm6 0h3v3h-3zm33 0h3v3h-3zm11 0h3v3h-3zm-107 2h3v3h-3zm49 0h3v3h-3zm6 0h3v3h-3zm6 0h3v3h-3zm8 0h3v3h-3zm31 0h3v3h-3zm2 0h3v3h-3zm32 0h3v3h-3zm-156 1h3v3h-3zm65 0h3v3h-3zm68 0h3v3h-3zm-73 1h3v3h-3zm29 0h3v3h-3zm-31 1h3v3h-3zm67 0h3v3h-3zm2 0h3v3h-3zm-124 1h3v3h-3zm16 0h3v3h-3zm119 0h3v3h-3zm-9 1h3v3h-3zm26 0h3v3h-3zm-62 1h3v3h-3zm37 0h3v3h-3zm14 0h3v3h-3zm-137 1h3v3h-3zm9 0h3v3h-3zm116 0h3v3h-3zm18 0h3v3h-3zm-138 1h3v3h-3zm42 0h3v3h-3zm79 0h3v3h-3zm3 1h3v3h-3zm-118 2h3v3h-3zm30 0h3v3h-3zm48 0h3v3h-3zm41 0h3v3h-3zm2 0h3v3h-3zm-24 1h3v3h-3zm-61 2h3v3h-3zm55 0h3v3h-3zm12 0h3v3h-3zm19 0h3v3h-3zm3 0h3v3h-3zm0 2h3v3h-3zm4 0h3v3h-3zm-101 1h3v3h-3zm50 0h3v3h-3zm-39 1h3v3h-3zm6 0h3v3h-3zm6 0h3v3h-3zm56 0h3v3h-3zm13 0h3v3h-3zm9 0h3v3h-3zm3 0h3v3h-3zm-44 1h3v3h-3zm26 0h3v3h-3zm-57 1h3v3h-3zm55 0h3v3h-3zm-49 1h3v3h-3zm11 0h3v3h-3zm-5 1h3v3h-3zm16 0h3v3h-3zm22 2h3v3h-3zm5 0h3v3h-3zm-25 1h3v3h-3zm19 5h3v3h-3zm-19 1h3v3h-3zm16 3h3v3h-3zm-15 2h3v3h-3zm9 1h3v3h-3zm-6 2h3v3h-3z" fill="#000"/>
<text x="0" y="0" transform="translate(532,770) rotate(-28)" font-family="Liberation Sans,sans-serif" font-size="14.5" fill="#f00" shape-rendering="auto">р.Травянка</text>
</g>
<polygon points="654.6,102.2 933.5,182.6 828.3,552 826.2,632 731.2,956.3 342,844.5 448.5,456.5 356.2,430.3 409.3,236.6 599.6,291.2" stroke="#000" stroke-width="1"/>
</svg>
<svg class="a" style="left:1699px;top:127px" width="200" height="199" viewBox="1699 127 200 199" shape-rendering="crispEdges">
<polygon points="1771.7,127.3 1835.9,145.8 1811.7,230.9 1811.2,249.3 1789.3,323.9 1699.7,298.2 1724.2,208.9 1703.0,202.9 1715.2,158.3 1759.0,170.8" fill="#000"/>
<path d="M1770.4 134.8L1771.4 135.7L1771.6 136.7L1772.5 135.7L1772.7 134.9L1771.9 134.4L1771.1 133.3L1771.2 132.3L1772.1 131.2L1773.8 130.4L1771.8 129.4ZM1767.2 145.1L1770.8 144.3L1773.3 144.5L1773.3 144.1L1771.1 143.1L1770.7 142.5L1770.1 142.7L1769.1 143.7L1767.6 143.9ZM1773.4 146.3L1771.7 145.9L1767.8 146.6L1766.6 147.5L1766.8 149.1L1767.3 149.9L1768.5 150.4L1772.6 150.5L1774.1 148.3ZM1778.7 138.1L1778.4 134.8L1777.9 133.8L1776.7 133.2L1774.8 135.5L1773.8 138.4L1773.9 139.2L1775.8 140.2ZM1774.2 141.4L1772.5 140.0L1772.1 138.6L1770.8 140.2L1771.1 141.2L1773.6 142.4ZM1761.0 166.5L1762.0 165.5L1761.8 163.8L1762.9 163.5L1763.6 165.2L1765.4 166.1L1766.0 167.8L1767.0 167.6L1768.2 167.9L1769.2 168.7L1769.9 169.9L1770.7 167.7L1769.0 168.0L1767.4 166.1L1768.4 164.0L1769.9 162.4L1768.6 161.9L1768.4 163.6L1765.4 164.8L1763.2 162.8L1763.1 161.7L1765.5 160.2L1766.6 160.2L1765.4 159.4L1764.1 160.0L1763.1 159.5ZM1756.6 171.2L1755.4 171.8L1753.5 171.7L1754.4 173.7L1753.6 175.7L1754.8 174.9L1754.7 173.5L1755.2 172.7L1757.6 172.8L1757.3 172.1L1757.8 171.2ZM1745.7 168.4L1746.0 170.1L1747.0 171.1L1748.1 170.4L1748.9 168.6L1746.2 167.9ZM1737.2 167.0L1737.7 168.1L1737.6 166.8L1738.1 166.4L1738.7 166.3L1739.2 166.9L1740.1 166.1L1737.7 165.4ZM1731.5 163.7L1730.4 167.3L1731.8 165.6L1732.7 165.1L1733.9 165.2L1734.8 166.3L1734.9 169.3L1736.1 165.0ZM1712.7 170.5L1713.6 170.8L1715.3 169.8L1716.1 168.6L1714.7 168.0L1714.6 166.8L1715.1 166.6L1716.6 166.9L1716.3 166.2L1715.0 165.0L1714.5 163.5ZM1710.4 178.6L1711.7 179.0L1713.0 177.7L1710.9 176.8ZM1707.1 190.7L1709.5 189.4L1708.6 188.6L1708.3 187.8L1708.7 186.9L1708.1 186.9ZM1706.2 193.9L1709.8 194.7L1710.7 196.3L1711.4 195.3L1710.0 193.7L1710.2 190.9L1708.9 191.4L1706.3 193.3ZM1705.0 198.2L1707.5 198.8L1708.9 198.5L1709.2 197.8L1709.1 196.4L1708.0 195.7L1705.7 195.6ZM1706.9 203.3L1706.3 201.3L1707.1 200.4L1704.5 199.8L1703.8 202.4ZM1714.6 205.4L1713.2 203.3L1711.2 204.5ZM1720.5 206.9L1719.6 204.8L1718.2 204.1L1718.1 205.2L1717.0 206.1ZM1725.1 203.0L1724.4 203.0L1722.8 204.2L1722.0 205.6L1722.0 207.5L1723.7 208.0ZM1719.4 230.9L1719.9 231.5L1720.9 231.0L1719.7 229.7L1721.1 227.2L1720.6 226.5L1720.1 226.5L1718.9 230.9ZM1715.0 245.3L1715.6 244.5L1717.8 243.7L1719.3 242.3L1718.7 240.3L1716.7 238.9ZM1713.0 253.3L1713.7 252.6L1715.6 254.0L1718.7 254.9L1719.2 254.2L1718.4 252.4L1716.7 252.8L1714.4 251.8L1714.7 250.7L1715.3 250.6L1716.6 251.1L1719.0 250.9L1719.5 250.4L1719.6 249.2L1718.6 247.9L1715.8 246.9L1714.9 245.6ZM1710.1 263.0L1712.9 263.5L1713.2 262.7L1712.5 260.9L1711.3 261.8L1710.6 261.3ZM1709.4 266.1L1710.6 267.6L1712.1 268.4L1710.7 265.8L1711.5 265.1L1712.3 265.5L1712.2 264.9L1710.5 264.8L1709.8 264.0ZM1707.6 272.1L1709.2 271.4L1710.5 269.3L1709.4 268.8L1708.8 267.9ZM1707.0 274.5L1708.2 274.6L1708.8 275.8L1710.8 276.6L1711.8 276.0L1711.8 275.2L1710.9 274.8L1710.3 273.4L1709.8 272.9L1707.9 273.7L1707.2 273.5L1706.8 274.9ZM1725.1 281.7L1724.5 281.8L1722.4 280.7L1721.9 279.6L1720.2 278.5L1719.0 278.2L1717.0 279.6L1718.3 280.8L1719.3 280.5L1720.5 280.9L1720.7 282.5L1722.8 282.2L1724.9 282.5ZM1714.2 278.4L1714.8 277.8L1716.1 278.0L1718.0 276.9L1717.6 275.3L1716.6 275.7L1715.0 275.2L1713.9 276.3L1712.8 276.8L1712.3 277.5ZM1702.2 291.9L1703.5 292.1L1704.5 291.5L1705.5 292.0L1706.0 291.5L1704.9 289.5L1704.8 287.9L1704.3 290.2L1703.5 290.8L1702.5 290.9ZM1710.1 300.4L1704.2 298.7L1702.1 297.3L1701.1 297.9ZM1714.0 301.6L1714.7 298.5L1713.7 300.5L1711.6 300.9ZM1718.9 303.0L1718.8 302.3L1720.3 298.2L1719.0 300.5L1718.3 301.0L1717.1 301.0L1716.0 300.4L1715.5 302.0ZM1737.6 308.3L1737.1 307.2L1735.5 307.3L1733.2 306.0L1732.2 306.8ZM1742.9 308.2L1741.9 307.9L1742.4 308.9L1742.0 309.4L1740.0 309.0L1739.5 308.0L1739.9 307.5L1741.8 307.9L1740.3 306.4L1738.9 307.2L1739.1 308.1L1738.5 308.6L1742.4 309.7ZM1747.6 311.0L1748.2 310.3L1747.8 308.8L1747.3 308.3L1746.2 308.5L1746.5 310.9ZM1748.1 299.6L1746.5 302.1L1746.1 303.4L1746.4 304.1L1745.8 306.0L1747.8 305.7L1748.6 304.9L1747.8 302.3ZM1750.9 310.9L1749.8 310.7L1749.4 311.7L1752.6 312.7ZM1769.0 317.4L1769.1 316.6L1768.2 316.4L1764.5 316.1ZM1774.6 319.0L1775.1 316.7L1772.1 317.7L1770.6 317.3L1770.3 317.8ZM1790.2 318.3L1788.2 318.1L1786.7 317.2L1786.5 319.9L1785.0 321.6L1785.1 322.0L1788.9 323.1ZM1792.5 306.3L1790.5 307.6L1789.2 307.6L1789.3 308.3L1792.0 308.5L1792.9 309.2L1793.5 307.4ZM1796.9 295.3L1793.9 295.0L1792.1 293.8L1791.3 295.3L1793.7 297.3L1795.6 300.2ZM1800.7 282.6L1798.1 282.9L1797.7 283.0L1798.6 284.1L1800.3 283.9ZM1804.4 269.9L1802.5 271.5L1803.6 272.8ZM1807.2 260.3L1806.0 260.0L1805.2 260.2L1805.8 261.4L1806.8 261.9ZM1808.4 255.9L1807.5 255.5L1807.1 256.0L1806.4 256.0L1806.1 256.9L1806.2 257.8L1808.2 257.1ZM1808.8 254.1L1809.2 252.2L1809.5 249.8L1808.1 250.3L1807.7 250.9L1808.2 253.0ZM1811.0 230.8L1812.2 226.4L1810.2 226.0L1809.4 225.1L1809.3 224.1L1808.4 227.1L1809.1 229.1L1809.5 231.9L1810.9 232.3ZM1810.4 222.2L1810.9 224.5L1811.7 224.8L1812.7 224.6L1813.0 223.6L1812.7 222.1L1810.8 221.3ZM1810.8 216.7L1813.6 219.4L1815.4 212.8L1813.9 212.2L1809.5 209.1L1807.2 209.0L1805.5 209.5L1809.0 215.1L1810.3 216.8ZM1819.8 199.8L1817.2 199.9L1816.3 200.9L1816.9 202.3L1816.8 203.6L1816.2 203.9L1814.0 202.8L1811.4 206.5L1812.7 207.7L1813.6 207.2L1815.5 208.0L1816.0 208.7L1815.8 209.6L1816.8 210.3ZM1821.4 194.3L1819.4 192.6L1818.6 192.6L1818.1 193.1L1820.1 193.8L1821.3 194.7ZM1821.6 189.4L1820.2 190.4L1819.3 190.3L1820.5 190.9L1822.6 189.9ZM1828.5 169.0L1827.1 169.3L1826.2 169.0L1825.1 167.4L1824.8 168.9L1825.8 171.5L1825.8 172.9L1824.8 173.0L1824.5 174.1L1823.6 174.2L1823.1 175.4L1822.5 175.5L1822.0 175.1L1822.1 173.6L1821.8 173.6L1821.6 174.3L1821.1 174.6L1820.5 174.4L1819.4 172.6L1818.2 174.1L1815.5 174.1L1815.8 176.9L1817.0 177.2L1818.8 176.4L1822.1 175.8L1822.8 176.4L1825.0 175.5L1825.6 175.8L1825.7 176.7L1826.2 177.3ZM1832.3 155.8L1831.1 157.1L1830.0 157.3L1829.1 156.8L1828.3 157.2L1827.8 158.8L1830.5 158.1L1831.5 158.6ZM1789.1 134.3L1788.3 135.1L1789.2 137.0L1788.6 138.8L1789.2 139.4L1790.5 139.6L1791.6 139.3L1790.2 136.8L1790.9 134.6ZM1777.2 146.9L1777.8 146.9L1778.2 145.6L1777.7 145.1L1777.8 142.7L1776.5 143.8ZM1780.4 141.0L1781.0 141.6L1782.0 141.1L1783.1 141.7L1783.9 141.0L1784.0 140.0L1783.2 139.2L1782.8 137.5L1782.1 139.2ZM1783.6 135.2L1784.5 137.3L1785.8 137.6L1785.8 132.7L1785.4 132.0L1783.0 131.3L1783.6 132.3L1782.9 133.1L1783.1 135.0ZM1707.4 294.0L1705.9 295.4L1703.0 295.8L1704.8 297.2L1712.5 299.2L1712.8 299.0L1713.9 295.7L1715.9 294.2L1714.0 292.6L1710.5 292.0L1708.8 292.1ZM1718.5 293.3L1720.9 290.8L1720.6 290.1L1720.3 289.9L1719.8 291.5L1718.1 292.8ZM1722.6 287.8L1721.1 287.0L1720.4 287.4L1719.3 287.2L1718.8 287.6L1721.5 288.1L1722.5 288.1ZM1744.7 278.5L1744.7 277.3L1746.6 276.1L1746.2 275.6L1745.6 275.6L1745.4 276.5L1744.5 276.7L1744.1 276.2L1744.0 275.0L1743.2 274.8L1742.3 275.9L1742.2 277.2L1744.1 278.4ZM1736.3 277.8L1737.2 275.9L1736.0 275.0L1735.4 275.3L1735.2 277.0L1734.7 277.7L1733.7 278.1L1735.1 279.3L1736.5 278.2ZM1732.3 283.0L1731.8 281.5L1731.2 281.6L1730.4 283.0L1731.6 283.9ZM1727.6 284.1L1728.8 282.7L1728.2 280.7L1727.6 280.2L1726.9 281.1L1726.3 283.2ZM1732.3 276.9L1733.6 276.5L1733.8 275.6L1732.8 275.0L1732.0 276.2ZM1748.1 269.6L1747.7 265.9L1747.1 265.6L1746.4 267.0L1747.0 268.2L1746.9 269.2L1747.7 269.9ZM1748.6 263.3L1750.5 261.2L1749.9 260.8L1748.2 262.3L1748.0 263.1ZM1765.4 252.6L1768.0 251.3L1770.0 251.5L1768.6 250.6L1767.8 250.6L1766.0 251.7ZM1768.8 254.7L1771.0 253.8L1768.8 252.9L1766.2 254.0ZM1764.7 254.7L1762.4 255.6L1762.3 255.7L1765.8 255.6ZM1755.0 259.1L1752.9 260.8L1753.7 261.9L1753.2 264.5L1755.3 265.1L1755.9 263.0L1755.4 261.8L1756.0 260.0ZM1763.0 261.0L1763.6 262.6L1765.4 262.5L1764.7 259.7L1766.8 259.0L1766.8 258.3L1766.1 257.8L1766.0 257.2L1765.1 257.9L1764.9 259.1L1762.3 259.7L1762.1 260.2ZM1775.3 255.3L1777.6 254.9L1775.0 253.5L1775.6 254.6ZM1778.6 253.5L1780.2 254.4L1780.5 252.4L1781.2 251.4L1780.8 251.2L1778.5 252.2ZM1785.8 248.3L1785.6 245.8L1784.9 245.9L1784.5 247.6L1785.0 248.3ZM1790.4 249.3L1791.5 249.8L1792.8 250.1L1791.8 248.3L1790.9 248.2L1789.8 249.1L1789.6 249.8ZM1799.1 241.0L1801.2 241.2L1800.6 237.4L1802.1 236.7L1801.6 236.2L1800.4 236.9L1800.2 239.4ZM1802.7 234.5L1803.6 235.4L1804.5 235.1L1803.9 234.3L1804.1 232.5L1803.6 232.2L1803.3 233.7ZM1804.5 226.4L1803.1 228.0L1800.7 228.6L1798.6 228.0L1798.6 228.9L1803.1 230.2L1803.6 229.6L1804.3 229.6L1804.7 230.7L1806.1 231.0L1805.9 229.5ZM1798.0 199.2L1796.8 203.1L1797.4 204.3L1797.8 203.6L1799.2 202.7L1798.4 199.2ZM1799.6 204.2L1798.4 205.8L1799.1 206.6L1800.0 205.9ZM1803.4 205.8L1806.0 206.5L1809.6 205.9L1812.4 202.3L1809.7 202.0L1808.5 203.1L1807.4 203.2L1807.6 204.7L1806.7 205.5L1806.2 205.2L1805.8 203.7L1803.9 203.0L1802.8 201.6L1802.3 201.6ZM1801.9 200.1L1802.6 200.0L1803.1 198.7L1802.1 197.9L1801.7 196.4L1801.1 196.2ZM1800.8 194.2L1803.2 194.1L1803.3 192.8L1802.9 192.7L1800.8 193.6ZM1805.0 187.6L1806.5 186.0L1803.2 184.5L1802.3 186.6L1804.1 186.7ZM1807.8 188.4L1808.4 187.9L1808.5 187.0L1809.5 186.0L1808.0 186.2L1807.6 187.5L1807.1 187.8ZM1815.9 186.1L1816.6 185.8L1817.2 183.8L1818.1 183.3L1819.0 183.4L1820.0 183.0L1819.4 181.7L1818.3 180.5L1816.0 181.1L1811.6 184.5L1811.9 185.0ZM1823.5 178.3L1821.8 182.0L1821.4 182.1L1822.0 184.5L1822.6 185.2L1824.7 178.0L1824.3 177.5L1823.4 177.9ZM1815.6 166.5L1814.9 164.5L1814.0 164.7L1812.9 165.7L1813.0 166.2L1814.5 166.4L1814.5 167.8ZM1816.6 164.5L1817.7 166.7L1819.6 167.4L1820.8 167.4L1822.6 166.6L1823.9 165.3L1824.6 163.5L1824.5 162.3L1823.9 161.6L1820.9 162.0L1819.1 160.8L1816.7 163.1ZM1826.5 163.8L1826.6 167.0L1827.3 167.7L1828.3 166.4L1830.3 159.8L1827.4 160.9ZM1822.7 168.4L1821.9 168.7L1822.6 171.8L1823.1 169.3ZM1815.2 144.5L1814.3 142.4L1814.2 145.8ZM1823.2 145.0L1819.6 145.2L1818.6 146.3L1822.0 146.0ZM1826.7 146.8L1825.2 147.7L1825.2 149.4L1824.3 150.4L1825.9 152.4L1827.5 153.4L1827.8 147.7L1827.6 147.1ZM1825.3 154.0L1823.3 151.7L1822.3 152.3L1823.3 153.0L1823.4 154.3ZM1795.2 137.6L1796.8 138.3L1797.7 138.1L1796.9 137.3L1795.4 136.9ZM1789.6 141.0L1789.3 141.8L1789.9 143.0L1790.4 143.0L1790.6 141.3ZM1785.6 142.6L1784.2 142.9L1784.5 143.9L1786.3 144.1ZM1780.2 144.4L1782.6 145.5L1783.5 146.7L1783.3 145.0L1782.6 143.3L1781.9 142.9L1781.1 143.4L1779.6 142.8L1779.4 144.4ZM1807.3 142.2L1807.6 147.2L1808.0 148.0L1808.0 143.0L1807.9 142.3ZM1799.6 146.3L1797.5 145.5L1792.7 144.6L1791.6 145.2L1791.3 146.5L1792.3 148.3L1794.2 148.5L1795.9 148.3L1797.8 146.4L1799.1 146.5L1800.5 147.2ZM1787.8 146.2L1786.9 149.4L1788.2 150.8L1787.8 148.4L1788.3 146.8ZM1765.6 152.7L1766.4 154.2L1765.6 155.3L1765.7 156.4L1766.6 156.1L1766.7 154.5L1767.5 152.7ZM1768.1 157.0L1767.7 157.4L1766.2 158.0L1767.6 158.9L1768.3 157.6L1769.2 157.2L1769.4 155.7L1768.1 155.6ZM1768.7 154.1L1771.1 153.7L1772.2 154.3L1772.9 154.2L1772.4 152.8L1769.3 152.7ZM1774.1 152.8L1774.6 153.8L1777.0 153.3L1776.7 152.8ZM1779.4 159.0L1776.4 161.0L1776.7 162.1L1778.4 162.9L1780.6 165.4L1781.8 165.1L1783.1 165.6L1784.2 164.7L1783.2 163.3L1781.9 163.8L1780.2 163.3L1779.8 162.2L1780.3 159.9ZM1771.0 155.4L1770.9 157.5L1771.8 160.3L1771.3 161.5L1773.0 162.8L1773.4 162.2L1772.0 160.9L1771.9 160.3L1772.3 158.1L1772.1 157.4L1772.6 155.9L1772.0 156.0ZM1771.3 163.5L1769.3 165.7L1769.8 166.3L1771.3 166.1L1772.3 164.1ZM1774.3 160.9L1776.8 158.6L1776.4 157.4L1775.2 157.8L1774.0 156.9L1773.6 160.0ZM1773.3 168.5L1771.9 168.9L1771.1 171.2L1771.6 171.9L1773.7 171.5L1774.0 169.0ZM1766.2 169.4L1765.9 170.1L1767.4 171.2L1768.6 170.7L1767.5 169.4ZM1778.4 173.6L1779.9 174.7L1781.4 174.7L1782.1 172.2L1780.9 171.9L1779.9 173.0L1778.6 173.2ZM1776.4 173.9L1774.7 172.7L1773.5 173.4L1772.6 173.3L1772.6 173.8L1775.7 174.7ZM1785.8 169.2L1786.9 167.9L1786.9 166.7L1787.5 165.9L1787.2 165.5L1785.9 165.3L1785.6 165.8L1785.0 167.8L1785.5 168.3L1785.3 169.4ZM1791.0 170.5L1791.3 171.6L1792.9 172.8L1793.1 171.8ZM1794.5 172.8L1794.4 173.6L1795.2 174.1L1795.2 175.2L1795.7 175.6L1797.0 175.2ZM1798.2 176.3L1796.0 177.2L1795.8 178.7L1797.1 179.1L1797.9 180.0L1798.7 180.0L1800.4 178.3ZM1791.1 160.6L1791.7 160.6L1792.1 160.2L1792.5 159.1L1793.8 158.2L1794.1 157.3L1791.8 157.6L1790.8 158.5ZM1789.8 152.6L1790.4 153.9L1792.7 152.9L1792.5 151.3ZM1794.1 151.0L1794.8 152.8L1795.9 153.1L1797.0 152.7L1797.3 152.0L1797.2 151.0L1794.5 150.8ZM1782.7 152.8L1781.7 153.6L1782.2 155.2L1781.5 156.5L1782.8 157.7L1783.8 156.8L1784.6 157.0L1785.0 157.5L1785.6 156.1L1785.3 155.4L1784.2 154.8L1784.1 152.8ZM1781.2 167.1L1781.5 169.9L1782.0 170.6L1782.6 170.5L1783.2 168.2L1782.4 167.1L1781.4 166.7ZM1803.8 151.3L1805.2 151.9L1807.2 150.3L1806.7 149.4L1806.1 150.4L1804.0 150.7ZM1802.5 149.9L1799.3 150.1L1798.9 150.0L1801.2 150.9L1801.5 151.8L1802.2 151.4ZM1798.3 153.7L1796.6 154.7L1797.2 155.5L1800.1 154.8L1800.7 153.3L1798.6 153.0ZM1791.7 155.9L1794.9 155.7L1795.7 154.8L1793.8 154.0L1791.4 155.2ZM1809.9 150.1L1810.6 147.8L1809.7 147.5L1809.1 149.5ZM1815.9 151.6L1816.9 150.4L1817.9 150.4L1817.1 149.7L1816.8 148.3L1814.4 148.3L1813.6 147.7L1814.0 149.7ZM1809.6 151.8L1808.6 151.1L1806.4 152.9L1808.8 153.6ZM1805.1 153.8L1803.1 152.8L1802.3 153.2L1801.9 154.8L1804.4 156.5ZM1806.0 157.1L1807.6 157.5L1808.2 156.8L1808.5 155.2L1806.6 154.7ZM1805.8 165.7L1807.2 159.1L1804.7 158.8L1802.9 157.4L1800.5 156.4L1798.4 156.7L1796.7 157.7L1794.1 160.3L1793.1 161.9L1793.2 163.3L1794.2 164.8L1799.7 167.4L1803.8 165.3L1805.1 165.3ZM1795.3 168.2L1794.2 168.7L1797.2 170.8L1798.3 170.5L1798.5 168.8L1795.7 167.2ZM1805.6 172.8L1806.8 174.2L1807.9 173.6L1809.0 173.6L1810.8 173.1L1810.7 171.8L1808.7 169.4L1808.3 169.4L1807.0 170.5L1806.3 170.4ZM1807.9 175.3L1807.5 177.6L1809.9 177.8L1812.3 179.1L1812.9 180.4L1812.6 181.8L1815.6 179.5L1819.9 177.9L1817.2 178.8L1816.1 178.7L1815.6 179.2L1815.0 179.3L1814.6 178.9L1813.9 175.4L1812.2 174.3ZM1805.7 177.9L1806.2 175.7L1805.1 174.6L1804.3 177.7L1804.6 178.4ZM1804.6 180.9L1806.2 182.6L1807.6 183.1L1809.3 182.3L1811.2 180.4L1810.1 179.6L1808.2 179.2L1804.7 180.0ZM1801.4 180.4L1800.5 180.2L1799.4 181.4L1800.9 181.9ZM1793.1 174.8L1791.3 177.5L1793.0 179.0L1793.0 179.6L1794.2 180.0L1794.5 176.7L1793.9 176.2L1793.6 175.1ZM1787.1 176.7L1784.8 175.0L1783.7 172.4L1782.7 176.0L1783.0 176.8L1785.8 177.4ZM1774.9 177.3L1774.7 178.0L1776.4 177.9L1776.4 177.0L1776.0 176.8ZM1771.6 179.1L1771.6 176.5L1770.7 176.2L1768.0 176.6L1767.6 177.9L1767.8 180.3ZM1768.4 181.9L1770.4 181.7L1771.5 180.8L1768.7 181.6ZM1757.6 178.9L1758.1 180.0L1759.3 180.5L1762.8 180.1L1764.0 178.8L1764.4 176.2L1762.2 174.4L1759.5 173.6L1758.5 175.3ZM1732.2 167.5L1731.9 170.8L1730.8 174.3L1731.1 177.8L1732.3 175.6L1732.8 173.6L1733.2 166.7ZM1718.1 166.2L1718.0 168.2L1718.6 168.4L1720.2 167.6L1720.9 166.7L1720.0 165.9L1719.6 164.3L1719.2 165.5ZM1729.7 178.9L1729.5 180.1L1730.4 180.9L1730.6 181.7L1731.4 181.4L1732.0 179.2L1730.9 179.8ZM1728.6 177.3L1728.8 175.4L1726.2 172.4L1726.5 171.1L1728.3 169.6L1728.0 168.9L1727.1 167.8L1726.1 167.4L1722.0 167.8L1721.8 168.7L1722.4 171.0L1723.3 170.5L1724.6 172.6L1724.6 173.4L1724.2 173.9L1724.6 176.0L1723.8 178.4L1724.1 179.1L1724.4 179.4L1726.3 179.3L1727.4 179.6ZM1716.6 170.9L1713.1 172.6L1714.8 174.1L1715.3 175.8L1717.1 177.1L1719.3 176.5L1721.6 174.0L1719.9 173.2L1718.3 170.9L1717.0 170.1ZM1714.4 179.7L1715.0 179.1L1716.3 178.5L1714.5 178.2L1713.6 179.5ZM1720.9 177.1L1721.3 178.4L1722.2 178.6L1723.0 175.4L1722.4 175.4L1721.9 176.3ZM1735.4 177.4L1734.8 175.5L1733.7 179.3ZM1744.6 175.3L1745.8 173.9L1746.0 172.4L1745.1 171.5L1743.1 173.4L1743.0 173.9L1743.9 175.3ZM1746.8 176.2L1746.7 177.1L1749.3 178.2L1748.3 177.0L1748.1 176.1ZM1734.0 182.6L1735.5 184.6L1736.5 185.0L1738.4 184.7L1738.7 183.8L1736.5 181.8L1736.3 180.9L1735.6 180.7ZM1723.7 182.1L1724.3 182.9L1725.1 183.1L1726.4 182.9L1727.1 182.4L1727.0 181.9L1725.3 181.9L1724.0 181.2ZM1715.4 181.4L1716.1 183.7L1717.7 183.9L1718.8 183.6L1719.3 184.0L1721.3 183.7L1720.6 182.0L1718.9 181.7L1718.7 181.1L1719.4 180.4L1718.9 180.1L1716.3 180.2ZM1722.8 186.2L1723.3 188.6L1723.7 188.5L1723.4 187.4L1724.4 186.8L1724.9 187.3L1725.4 186.0L1725.1 185.2ZM1731.8 187.3L1731.0 188.6L1731.3 189.1L1732.4 189.2L1732.1 187.6ZM1733.6 190.5L1734.7 190.8L1736.4 189.9L1736.4 189.5L1735.7 189.8L1734.7 189.3L1733.3 189.9ZM1743.8 186.4L1738.6 186.4L1738.7 187.7L1739.6 188.8L1741.9 188.7L1744.4 188.0L1744.5 187.3ZM1756.9 183.6L1759.7 183.6L1762.9 183.8L1760.9 182.6L1759.7 182.3L1757.7 182.8ZM1755.0 179.3L1752.9 177.4L1751.4 179.1L1754.3 180.0ZM1752.8 173.7L1752.2 172.7L1751.4 173.1L1750.5 172.7L1749.9 173.5L1751.0 173.4L1752.6 174.2ZM1750.2 176.2L1750.8 177.2L1752.0 176.1L1751.6 175.5L1750.3 174.9ZM1741.5 179.4L1744.4 181.5L1744.6 182.2L1744.1 182.8L1742.5 183.3L1743.6 184.0L1749.0 183.6L1751.0 183.0L1751.4 182.3L1751.4 181.4L1748.8 180.3L1746.3 179.4L1740.6 178.3ZM1741.1 182.1L1741.8 181.8L1738.8 178.4L1737.7 178.9L1737.7 179.8L1738.5 181.6L1740.7 183.0ZM1774.2 182.2L1773.2 183.9L1775.1 183.3L1774.9 182.7ZM1777.9 180.1L1778.0 182.6L1778.6 183.8L1778.9 182.0L1779.7 180.1ZM1764.7 185.8L1756.5 185.2L1756.1 186.4L1756.3 186.8L1757.8 187.2L1763.2 186.9L1764.7 186.3ZM1746.3 187.4L1745.4 189.4L1746.0 189.4L1748.1 187.0L1747.4 186.8ZM1768.5 187.1L1769.8 187.5L1771.6 186.9L1771.7 185.1L1768.2 185.7ZM1767.0 189.0L1766.0 189.7L1765.9 190.2L1766.6 191.1L1768.7 191.9L1770.1 191.6L1770.3 190.5L1769.4 189.1ZM1748.5 193.6L1749.6 194.7L1750.4 195.1L1750.6 196.1L1751.0 194.9L1749.2 192.9L1748.5 193.1ZM1751.7 198.1L1752.5 198.8L1753.6 197.9L1752.7 196.2ZM1743.0 195.8L1741.0 196.2L1739.7 195.9L1739.4 196.4L1739.7 197.0L1741.3 196.3L1742.0 197.2L1740.7 198.4L1739.5 198.6L1739.3 199.9L1739.7 200.0L1741.2 199.2L1742.4 199.5L1743.4 199.0L1744.4 199.5L1745.6 199.5L1745.6 198.5L1745.2 197.7L1743.5 198.5L1742.9 198.2L1742.7 197.6L1743.3 196.7ZM1736.8 194.2L1745.1 193.9L1746.4 193.6L1747.0 192.8L1746.8 192.1L1741.9 193.8L1740.0 194.0L1733.9 192.2L1732.8 192.3L1732.9 193.0L1733.4 193.3ZM1731.8 195.6L1732.8 196.5L1734.9 197.2L1735.9 197.4L1736.6 196.8L1735.3 195.7L1733.3 195.1L1731.9 194.8ZM1735.2 198.9L1733.3 198.7L1733.1 199.6L1735.3 200.2ZM1726.4 193.4L1726.5 194.4L1727.4 195.0L1728.1 192.5L1726.9 192.5ZM1728.2 198.0L1730.3 196.5L1730.2 195.3L1729.6 195.1L1728.8 195.9ZM1731.2 198.0L1729.1 199.6L1727.8 199.6L1727.3 201.3L1728.1 202.1L1729.3 200.9L1730.4 201.1L1731.5 200.4L1731.7 198.9ZM1739.2 201.6L1736.6 201.3L1736.2 202.8L1737.2 203.0L1739.3 202.2ZM1734.7 201.7L1732.8 201.3L1730.9 202.9L1729.9 202.7L1729.0 203.5L1731.0 203.3L1733.2 203.9L1733.4 203.4L1734.6 203.0ZM1724.7 194.1L1725.0 192.4L1723.5 192.6L1723.0 193.3L1723.3 193.8L1724.4 193.8ZM1718.0 187.6L1718.5 189.6L1719.4 189.9L1720.6 189.5L1721.3 190.2L1721.7 189.5L1721.7 187.9L1721.1 186.6ZM1711.7 188.7L1713.4 187.5L1712.3 187.4L1710.2 187.9ZM1715.7 188.8L1714.3 188.9L1711.8 190.8L1714.6 190.8L1716.0 191.8L1716.6 191.4L1717.0 190.1L1716.4 188.2ZM1713.0 195.3L1712.3 196.7L1713.1 197.6L1715.0 196.9L1716.0 196.2L1715.6 194.9ZM1709.8 199.8L1711.3 200.8L1711.9 202.1L1712.5 201.9L1712.8 200.5L1712.1 198.9L1710.8 197.5L1710.6 198.8ZM1718.6 194.5L1719.7 194.9L1720.4 193.9L1721.4 193.7L1721.3 192.0L1720.2 191.3L1719.2 191.5L1718.3 191.2L1718.2 192.0L1716.9 193.2ZM1723.0 195.4L1722.9 197.3L1724.2 197.1L1724.3 196.2L1723.5 195.4ZM1724.7 198.7L1723.0 199.3L1724.0 199.7L1724.6 201.2L1725.6 201.1L1725.4 199.5ZM1721.4 203.3L1720.7 201.7L1719.0 201.5L1720.6 203.2ZM1708.3 202.3L1709.5 202.9L1710.4 202.6L1709.8 201.6L1708.9 201.3L1707.9 201.7ZM1725.9 208.5L1726.0 206.1L1727.6 204.3L1726.8 203.0L1725.2 208.3ZM1744.6 202.2L1745.1 202.6L1744.8 201.3L1743.4 200.8L1743.2 202.2ZM1747.2 198.8L1749.3 198.5L1748.9 197.5L1747.3 198.0ZM1750.2 203.0L1751.4 201.6L1752.8 201.1L1752.5 200.5L1751.2 199.9ZM1746.9 200.5L1746.3 201.0L1746.7 202.4L1747.8 202.5L1748.0 200.8ZM1748.1 204.4L1747.1 204.0L1746.0 204.2L1745.5 206.5L1744.2 207.6L1743.7 209.0L1744.3 209.7L1745.1 209.8L1747.1 207.5ZM1755.2 201.7L1756.4 203.6L1758.7 205.0L1759.4 204.8L1758.8 203.7L1759.7 202.0L1758.0 200.7L1758.0 199.0L1756.7 198.7L1756.0 197.7L1755.3 198.0L1755.0 198.9L1753.9 199.7L1754.4 201.2ZM1759.7 198.5L1759.6 200.0L1760.7 200.8L1762.0 200.7L1762.3 199.9L1763.9 199.3L1764.2 198.8L1763.6 197.8L1762.1 198.2L1761.0 197.8ZM1773.0 190.9L1772.5 192.9L1773.6 193.1L1773.3 189.7L1772.9 189.4L1772.1 189.8ZM1780.5 185.4L1781.8 187.4L1783.1 187.8L1784.2 185.4L1785.8 184.2L1782.9 183.5L1783.0 182.3L1786.2 182.6L1785.7 180.9L1784.5 180.0L1782.6 179.6L1783.1 180.6L1783.0 181.9L1781.9 184.3ZM1789.9 181.9L1789.4 186.2L1790.5 187.9L1795.1 190.9L1796.1 190.5L1797.6 188.9L1798.1 189.0L1799.2 185.8L1798.8 185.6L1798.1 184.0L1790.6 181.9ZM1792.9 192.0L1792.0 190.9L1791.0 192.8L1791.5 192.9ZM1786.2 187.8L1786.0 189.2L1786.8 190.3L1787.7 189.6L1786.8 187.8ZM1788.1 191.2L1789.1 192.5L1790.1 191.1L1789.0 190.7ZM1782.6 193.3L1781.8 193.6L1781.9 194.3L1783.3 194.9L1783.9 195.8L1785.0 195.3L1784.8 194.1ZM1769.1 193.7L1769.0 194.1L1770.2 196.4L1771.7 197.1L1772.2 198.3L1773.4 198.6L1772.9 196.9L1771.1 196.0L1771.2 193.9ZM1765.5 197.8L1767.2 197.9L1768.6 196.8L1767.6 195.0L1767.1 195.9L1765.7 196.3L1765.2 197.4ZM1761.3 202.3L1760.6 203.7L1760.9 204.7L1763.3 204.2L1762.8 202.4ZM1765.2 201.5L1764.5 202.5L1767.5 202.7L1768.2 204.0L1768.8 204.2L1769.7 202.8L1770.8 202.2L1771.6 200.9L1770.6 198.4L1769.7 198.0L1768.0 199.4L1765.6 199.6L1765.3 200.2ZM1775.8 200.1L1776.6 200.6L1777.9 199.7L1778.3 198.7L1778.0 197.0L1776.6 197.0ZM1773.0 200.2L1773.2 201.4L1772.5 202.3L1773.0 203.2L1772.6 203.7L1770.8 204.0L1770.3 204.7L1772.3 206.0L1773.9 200.5ZM1757.8 206.3L1754.3 204.5L1752.1 204.4L1750.4 204.8L1749.6 206.3L1748.8 212.0L1750.8 212.5L1753.6 212.4L1759.3 209.7L1759.3 208.3L1760.4 207.0L1760.3 206.4ZM1743.9 203.7L1742.2 203.8L1742.2 205.7L1740.9 207.2L1741.7 208.1L1742.4 208.0L1742.8 206.8L1744.1 205.7L1744.3 204.0ZM1740.6 205.1L1740.3 203.6L1737.2 204.6L1737.7 205.9L1740.0 205.8ZM1733.9 206.9L1734.9 208.3L1734.8 209.6L1735.5 209.9L1735.7 207.8L1735.1 207.1ZM1739.3 207.5L1737.4 207.8L1737.2 208.8L1737.1 210.0L1738.1 210.5L1739.1 209.9L1740.0 209.9L1740.3 208.9ZM1725.9 210.9L1726.2 212.6L1728.2 213.0L1729.2 212.8L1728.5 212.0L1728.4 210.9L1726.5 210.3ZM1730.9 212.2L1733.2 212.4L1735.2 214.2L1735.8 214.2L1735.6 212.8L1730.1 211.3ZM1750.2 215.2L1749.9 214.1L1748.8 213.8L1747.8 214.5ZM1751.6 214.2L1751.7 215.6L1754.2 216.3L1752.5 214.2ZM1748.7 223.0L1746.7 223.8L1746.5 225.2L1745.7 226.1L1746.1 226.8L1746.7 227.2L1747.1 226.1L1748.1 225.5L1748.5 225.9L1748.4 227.2L1749.2 227.2L1750.5 225.6ZM1739.7 215.9L1738.0 216.3L1737.1 217.2L1739.4 217.5L1741.1 219.6L1741.0 217.6L1739.9 216.9ZM1726.6 215.7L1727.2 217.8L1727.7 217.8L1728.0 216.9L1727.5 216.1ZM1741.8 221.3L1742.3 223.2L1742.6 223.5L1743.4 220.4L1742.4 220.5ZM1740.0 224.3L1737.1 224.3L1736.3 225.2L1737.2 225.7L1738.3 225.4L1740.3 226.5L1741.1 225.8L1742.0 225.5L1742.1 225.1L1740.7 223.7ZM1732.1 217.7L1731.9 219.9L1733.0 219.8L1734.1 218.7L1733.6 218.1ZM1724.5 217.7L1724.4 219.8L1725.2 220.8L1725.2 219.4L1725.6 218.8ZM1732.4 222.2L1730.7 223.4L1732.1 224.6L1734.8 224.6L1735.0 224.0L1733.7 223.1L1732.9 221.4L1732.6 221.4ZM1735.1 226.2L1732.8 226.1L1731.5 226.9L1730.7 226.8L1730.6 227.1L1732.0 228.0L1735.0 227.7ZM1728.5 224.3L1723.8 223.7L1723.2 224.1L1722.8 225.1L1726.0 225.5L1730.2 225.0ZM1728.8 226.9L1726.1 227.1L1726.1 228.1L1726.9 229.1L1728.7 228.8ZM1724.6 229.7L1723.7 231.0L1725.2 231.4L1725.6 230.2L1724.6 228.7ZM1720.4 240.6L1721.6 243.5L1722.5 242.0L1724.5 241.2L1723.6 240.1L1721.8 240.8ZM1717.5 245.7L1719.4 246.4L1720.4 247.8L1721.5 248.4L1722.0 247.1L1721.9 245.9L1720.3 244.7L1720.2 243.8L1719.4 244.1L1718.9 245.2ZM1726.5 240.9L1728.8 237.5L1728.4 237.1L1727.0 237.0L1725.1 238.1L1725.3 239.8ZM1728.5 235.4L1729.7 236.2L1730.7 234.5L1730.6 233.7L1729.1 234.0L1728.2 233.8L1727.1 232.1L1727.5 231.1L1728.1 231.0L1728.9 232.3L1729.5 232.3L1730.8 231.9L1731.3 231.2L1733.6 230.8L1734.4 230.1L1734.2 229.5L1731.8 229.6L1730.3 229.1L1729.5 230.3L1727.1 230.9L1726.7 232.8L1727.7 235.5ZM1735.9 229.6L1736.2 230.7L1737.9 231.4L1740.7 230.6L1741.4 227.7L1740.5 228.2L1738.1 227.1L1737.0 227.3L1736.8 228.5ZM1754.6 224.0L1756.7 225.8L1758.0 225.1L1758.3 224.5L1757.0 223.1L1755.1 223.2ZM1756.0 221.7L1757.0 221.5L1757.5 220.7L1757.1 218.9L1755.0 218.2L1755.6 219.4L1755.6 221.2ZM1758.3 217.5L1758.0 216.4L1758.5 215.2L1760.1 214.9L1760.2 214.5L1760.2 214.0L1758.9 212.6L1757.1 216.1L1757.7 217.1ZM1762.7 213.5L1761.8 214.1L1761.7 215.2L1763.1 215.6L1763.6 214.6L1763.4 213.6ZM1760.8 209.2L1764.0 209.4L1767.3 211.2L1768.8 210.8L1769.3 210.1L1769.1 209.3L1768.4 208.8L1765.0 207.7L1761.3 208.3ZM1780.7 199.8L1781.6 198.9L1782.7 199.1L1782.7 198.5L1781.1 198.6L1779.9 197.9L1779.9 198.8ZM1786.5 194.7L1787.8 194.9L1788.3 193.9L1787.1 192.5L1786.4 193.7ZM1796.5 194.8L1795.4 193.7L1793.8 193.6L1791.9 194.7L1790.3 197.0L1791.6 197.4L1792.7 197.2L1795.5 195.0ZM1795.2 197.4L1793.4 198.6L1794.8 199.9L1795.3 199.3L1795.6 198.2L1796.3 198.0L1795.6 198.0ZM1791.2 200.2L1786.6 202.0L1787.4 203.5L1788.5 203.1L1789.6 203.4L1790.8 202.5L1792.8 202.2L1793.7 201.2L1791.8 199.6ZM1782.4 205.8L1783.0 206.8L1783.8 206.8L1783.6 206.0L1784.1 205.2L1783.1 204.9ZM1787.0 206.3L1786.0 207.6L1786.2 207.8L1788.8 207.2L1789.4 205.9L1789.2 205.0L1786.8 205.0ZM1790.9 205.1L1792.5 206.5L1794.1 206.7L1795.0 203.6L1794.4 202.9L1793.6 204.0L1792.4 203.8L1791.1 204.2ZM1797.4 207.1L1795.3 208.2L1794.5 211.3L1797.9 207.6ZM1779.0 205.2L1778.5 203.9L1777.2 204.7L1776.8 205.8L1777.6 206.1ZM1775.7 204.1L1775.2 201.8L1773.7 207.1L1774.6 207.3L1775.2 206.2L1775.0 205.4ZM1766.8 213.2L1765.0 213.5L1765.1 213.9L1766.2 214.6L1767.7 214.6L1767.9 214.0ZM1767.4 217.6L1767.8 218.4L1768.7 218.5L1768.3 216.1L1767.6 216.3ZM1772.7 212.8L1775.5 212.7L1776.3 212.4L1776.9 211.6L1778.6 211.5L1779.0 210.8L1778.8 209.4L1774.5 209.3L1774.3 209.9L1773.4 210.4L1772.9 211.1ZM1780.5 211.5L1779.4 212.9L1780.0 213.9L1780.5 212.9L1781.6 212.3ZM1783.0 211.2L1784.3 210.7L1782.5 209.7L1781.9 210.5ZM1788.7 211.5L1789.5 210.2L1788.4 208.8L1786.4 209.5ZM1781.8 207.8L1780.6 206.7L1779.4 206.8L1778.5 207.6ZM1790.0 208.4L1791.1 210.1L1792.1 209.7L1793.1 210.0L1793.3 208.2L1791.8 208.0L1790.7 207.0ZM1790.3 212.1L1792.3 212.8L1792.6 211.6L1792.0 211.4ZM1796.6 212.3L1797.3 211.1L1798.0 210.7L1799.5 210.8L1800.3 210.1L1798.8 208.9L1795.7 212.3ZM1797.0 213.9L1795.1 214.0L1795.6 216.8ZM1788.4 214.2L1786.4 216.1L1786.7 217.6L1789.1 216.7L1789.3 215.3ZM1772.4 220.2L1770.3 219.2L1770.0 220.8L1771.3 221.1L1771.6 220.5ZM1771.7 217.2L1772.1 216.4L1771.8 214.9L1771.4 215.2L1770.9 217.0ZM1773.3 214.3L1773.7 216.6L1772.7 218.5L1775.9 217.9L1777.5 216.8L1777.8 215.5L1777.6 215.1L1774.9 214.2ZM1766.3 219.1L1763.0 217.3L1759.7 216.4L1760.5 218.1L1765.1 219.4ZM1761.1 220.5L1761.0 223.3L1761.5 224.7L1763.9 224.4L1765.3 223.4L1765.7 222.1L1765.2 221.2ZM1764.9 225.7L1763.3 226.3L1763.4 227.5L1764.7 228.6L1765.2 230.7L1766.0 227.8L1766.0 226.7ZM1761.7 226.4L1759.9 225.2L1759.7 225.2L1759.7 227.0L1760.3 227.3L1761.8 227.2ZM1751.1 227.1L1750.0 228.8L1749.2 228.8L1749.4 229.1L1750.9 229.7L1751.2 230.3L1751.5 229.8L1752.7 229.7L1752.0 228.8L1751.7 227.6ZM1752.8 226.2L1754.0 226.5L1754.7 228.4L1755.2 226.4L1754.1 225.6ZM1756.7 227.4L1755.4 230.2L1755.8 231.5L1756.1 232.0L1757.0 231.8L1757.9 232.2L1757.9 230.8L1756.9 230.3L1757.0 229.7L1758.3 229.0L1758.7 228.3L1758.2 227.9L1758.1 226.7ZM1772.0 226.2L1773.3 226.9L1774.7 225.7L1777.3 225.5L1777.7 224.5L1776.1 224.0L1774.6 225.4L1772.0 225.1ZM1795.6 219.3L1793.8 219.5L1793.4 221.7L1793.5 222.6L1795.5 223.3L1796.1 222.9L1796.6 220.2ZM1798.3 220.5L1797.7 222.0L1797.7 223.3L1796.7 224.6L1796.8 225.4L1797.9 226.5L1799.1 226.2L1800.6 227.0L1802.7 226.4L1803.4 223.6L1801.1 224.7L1799.8 224.5L1798.5 223.1L1798.7 221.9L1799.8 222.1L1800.7 223.1L1801.1 222.8L1798.7 220.5ZM1793.0 223.9L1792.3 224.0L1791.9 226.4L1793.1 227.1L1795.2 225.5L1795.1 224.9ZM1789.3 218.3L1788.0 218.8L1788.4 220.0L1788.3 221.2L1789.8 221.2L1790.3 219.5ZM1786.6 219.4L1784.8 219.7L1784.8 220.7L1786.5 220.5ZM1789.4 222.8L1787.5 223.1L1787.5 224.1L1788.1 225.1L1788.7 225.1ZM1779.3 224.9L1779.3 225.9L1780.2 226.7L1781.2 226.1L1781.3 225.4ZM1773.9 228.4L1773.8 229.7L1775.2 229.3L1775.6 228.7L1775.1 227.6ZM1776.7 227.2L1777.2 228.6L1777.8 228.9L1778.8 228.5L1779.1 227.8L1778.0 227.0ZM1783.1 227.6L1785.2 226.8L1786.0 227.3L1787.3 226.9L1782.9 225.8L1782.5 227.1ZM1782.2 228.9L1781.2 228.1L1780.6 228.3L1780.2 229.2L1780.9 229.9L1782.2 229.9ZM1791.2 228.2L1789.6 227.8L1789.4 229.5L1790.0 229.6ZM1788.5 232.9L1789.2 234.2L1790.1 234.7L1790.5 236.2L1790.7 234.9L1789.1 233.6L1789.8 231.2L1789.2 231.1L1788.6 231.6ZM1792.4 235.4L1792.0 236.9L1792.7 237.5L1793.4 236.9L1793.5 235.9L1794.0 235.3L1793.3 234.8ZM1788.2 235.4L1787.2 236.8L1788.2 237.4L1789.1 237.0L1788.6 235.7ZM1769.5 234.2L1771.6 233.8L1771.9 233.4L1771.3 230.5L1770.3 229.8L1768.3 230.3L1767.6 231.4L1768.0 232.9ZM1765.0 237.4L1765.4 239.2L1766.2 239.9L1767.9 240.0L1769.3 239.0L1768.8 237.5L1767.3 236.3L1765.4 236.0ZM1745.1 228.2L1744.2 226.6L1743.5 226.4L1743.0 228.2L1745.0 229.6L1745.8 228.6ZM1732.5 232.6L1732.2 234.1L1733.3 235.1L1734.9 235.0L1736.3 236.0L1736.4 237.6L1737.9 238.9L1738.5 238.8L1738.9 237.1L1737.0 235.8L1736.8 234.7L1737.9 234.5L1739.4 235.4L1740.2 232.2L1737.6 233.1L1734.9 231.7L1734.2 232.5ZM1742.6 235.6L1744.6 234.9L1744.8 234.1L1743.1 232.7L1742.5 233.0L1741.9 234.3L1742.3 236.0ZM1747.4 234.1L1748.1 233.2L1749.3 233.3L1750.4 234.2L1751.2 235.6L1751.3 235.2L1753.8 234.5L1751.5 233.7L1749.7 231.0L1749.0 230.8L1747.7 229.6L1746.6 233.7ZM1752.6 232.6L1754.3 232.8L1753.7 231.0L1752.6 231.3L1752.2 232.1ZM1747.7 235.7L1748.7 236.9L1749.7 236.5L1748.6 234.8L1747.9 234.7ZM1725.2 242.8L1723.5 243.3L1722.8 244.5L1723.7 244.9ZM1728.5 244.8L1730.2 245.3L1731.1 244.5L1730.8 243.1L1731.6 242.3L1731.7 241.6L1730.7 240.6L1730.0 241.0L1728.6 240.9L1727.1 243.0L1728.1 243.8ZM1730.4 238.1L1732.4 240.1L1733.5 239.3L1733.9 238.2L1734.8 237.6L1734.8 236.9L1734.3 236.5L1732.6 236.6L1731.8 235.7ZM1735.5 239.0L1734.7 240.5L1734.0 241.0L1735.9 241.7L1736.6 240.0ZM1733.2 242.5L1732.7 244.6L1734.3 244.9L1735.4 243.3ZM1742.7 241.8L1744.0 243.0L1744.6 241.1L1743.1 241.4ZM1751.5 242.3L1751.8 244.0L1753.4 242.8L1752.7 241.9L1752.0 241.8ZM1755.8 236.5L1755.3 238.0L1757.0 238.6L1757.5 240.0L1757.4 240.8L1757.9 241.4L1758.4 240.0L1757.8 239.2L1757.7 237.7L1756.9 236.7ZM1755.3 239.6L1754.5 240.4L1754.3 241.4L1755.8 240.7L1755.8 239.8ZM1760.4 242.4L1759.4 242.3L1758.7 243.0L1759.6 243.1L1760.4 243.8L1761.0 243.7L1761.1 242.9ZM1764.4 245.0L1763.6 245.5L1762.9 244.9L1762.9 246.1L1763.7 246.5L1764.3 247.8L1763.4 248.4L1762.0 247.5L1761.0 251.3L1761.3 251.9L1762.2 251.2L1761.9 250.6L1762.6 249.3L1763.6 248.7L1764.5 249.2L1766.8 246.7L1766.0 246.4L1765.9 245.8L1766.4 243.6L1765.4 243.1ZM1773.7 241.7L1774.5 242.5L1774.4 243.3L1775.0 242.1L1776.4 241.6L1776.2 240.9L1774.8 241.4L1773.6 241.0ZM1777.8 240.8L1778.0 241.8L1778.9 243.3L1779.5 242.9L1778.7 242.0L1778.9 240.7L1778.2 240.3ZM1782.1 242.7L1783.4 244.9L1783.9 242.5L1782.5 240.3L1780.6 241.0L1780.5 241.6L1781.0 242.4ZM1790.4 238.0L1788.9 238.9L1789.0 240.3L1791.3 240.4L1791.8 240.0L1791.8 238.9L1791.1 238.2ZM1770.0 245.0L1768.8 247.0L1769.6 247.3L1770.3 246.8L1770.4 245.3ZM1759.9 245.6L1759.0 244.6L1758.6 244.6L1758.8 246.1L1759.5 246.7L1760.8 246.2L1761.0 245.3ZM1749.1 246.4L1747.5 248.0L1747.0 248.4L1748.0 249.0ZM1756.2 248.3L1757.3 248.6L1758.0 247.5L1757.6 247.1L1756.2 247.2ZM1758.9 249.1L1759.5 250.6L1760.2 248.3L1759.5 248.3ZM1747.4 259.5L1749.1 259.4L1751.7 257.0L1755.9 254.2L1758.3 252.0L1752.0 248.0L1750.1 248.2L1749.8 249.1L1750.3 249.5L1750.3 250.1L1749.7 251.5L1749.0 252.1L1748.4 251.9L1747.3 253.2L1747.6 253.7L1746.5 256.8L1746.7 259.2ZM1745.7 252.5L1747.4 250.4L1746.0 249.9L1744.5 250.7ZM1744.8 248.6L1744.1 245.2L1742.8 245.8L1742.2 247.0L1743.1 249.1L1743.5 249.3ZM1740.6 243.0L1741.3 244.3L1740.9 245.1L1741.1 245.7L1741.5 244.7L1742.8 244.1L1741.3 242.6ZM1738.3 251.3L1739.1 247.2L1738.2 246.3L1737.4 248.8L1737.6 250.1L1737.1 250.4L1737.6 251.4ZM1734.5 248.6L1733.9 246.3L1731.9 246.1L1733.4 247.3ZM1734.4 253.9L1733.0 249.4L1731.1 247.6L1727.8 246.3L1726.5 246.5L1724.9 247.4L1725.1 251.1L1725.9 251.8L1725.9 254.3L1726.6 255.7L1730.1 257.0L1733.1 257.3L1733.5 257.1ZM1723.5 250.3L1721.8 249.2L1721.1 250.0L1720.9 251.3L1720.1 252.2L1721.0 254.1L1722.8 254.3ZM1715.2 264.6L1714.1 265.5L1714.8 266.8L1716.0 266.0ZM1711.9 270.0L1710.8 271.7L1711.9 272.8L1712.4 270.1ZM1719.3 263.7L1720.6 265.3L1720.4 265.8L1721.2 266.3L1721.5 265.9L1722.5 266.0L1723.0 266.8L1729.8 264.3L1730.1 262.1L1728.2 260.8L1724.5 259.3L1723.4 259.3L1718.9 261.8L1718.5 261.6L1718.3 262.2L1719.1 262.7ZM1744.7 256.8L1742.9 256.7L1742.7 256.2L1742.4 256.9L1740.5 258.1L1740.4 259.8L1740.9 261.2L1742.9 261.5L1744.7 260.7L1745.0 259.7ZM1734.6 267.1L1732.1 266.2L1732.0 266.5L1733.7 268.5ZM1732.7 264.6L1736.6 265.8L1738.7 265.8L1740.0 263.7L1738.5 263.0L1733.7 262.1ZM1721.0 268.8L1718.7 268.4L1717.9 268.7L1717.3 270.8L1717.7 272.1L1720.8 273.2L1725.6 273.6L1727.6 272.6L1728.8 270.4L1728.5 269.2L1727.6 268.5L1723.3 269.4L1722.2 269.1L1722.0 268.5L1721.4 268.3ZM1721.2 274.9L1719.4 274.6L1719.1 274.8L1719.6 276.7L1721.6 277.5L1722.5 276.1ZM1724.3 276.5L1723.0 278.3L1723.5 279.4L1724.9 279.9L1725.7 279.7L1726.3 277.4L1725.3 276.4ZM1741.9 267.5L1743.7 267.9L1744.6 269.1L1745.3 268.9L1744.7 266.7L1745.5 265.5L1744.7 265.2L1742.7 266.0ZM1717.3 258.6L1717.1 257.3L1713.7 256.4L1714.5 258.8L1716.3 259.0ZM1776.6 246.3L1772.2 246.9L1774.3 248.3L1776.1 248.6L1779.5 247.8L1781.0 246.8ZM1776.2 250.7L1778.6 250.5L1780.6 249.1L1777.8 250.0L1775.2 250.1ZM1771.1 237.0L1770.2 235.9L1769.5 235.9L1770.9 238.7L1771.5 238.9L1772.1 237.2ZM1769.5 224.0L1768.1 226.4L1767.7 227.8L1768.6 227.7L1770.4 225.9L1770.3 224.3ZM1785.7 191.6L1785.0 190.4L1783.9 190.8L1783.8 191.7L1784.5 192.5L1785.3 192.4ZM1743.8 211.2L1742.1 209.7L1741.6 209.7L1741.2 211.1L1742.5 211.0L1743.4 211.4ZM1745.2 213.8L1745.3 212.4L1743.6 213.2L1742.1 212.6L1741.6 212.8ZM1765.1 191.7L1764.4 189.8L1762.9 189.7L1762.9 190.4L1763.5 190.6L1764.7 192.0ZM1743.0 169.0L1738.1 169.7L1737.2 171.2L1738.4 171.3L1739.2 172.1L1738.4 172.9L1736.9 172.8L1737.1 173.8L1738.2 174.3ZM1814.9 162.6L1817.4 159.8L1816.9 159.0L1816.0 159.3L1815.1 160.4L1814.7 161.6L1813.7 162.5L1813.8 163.0ZM1820.9 156.6L1821.4 154.2L1819.7 153.5L1819.2 151.9L1817.7 152.0L1817.1 152.8ZM1803.2 168.1L1800.1 169.0L1799.8 171.2L1801.0 173.1L1802.3 173.1L1803.0 171.8L1802.1 171.4L1802.1 170.8L1804.4 169.5ZM1823.0 155.8L1822.2 157.9L1823.9 160.0L1825.5 160.8L1826.8 156.5L1825.1 155.6L1824.0 156.0ZM1763.2 169.8L1762.5 168.9L1760.7 169.0L1761.2 169.7L1762.7 170.2ZM1783.0 149.6L1781.5 146.7L1779.8 146.0L1779.3 148.4L1780.0 150.2L1781.3 150.9L1783.9 150.5ZM1821.5 187.2L1821.0 185.4L1820.3 184.5L1819.5 185.0L1818.3 185.0L1817.9 186.7L1822.0 187.7ZM1815.6 189.2L1813.4 187.6L1811.1 187.4L1810.0 187.7L1810.6 189.3L1812.3 190.1L1814.4 190.5L1816.2 190.2ZM1807.9 191.8L1807.8 193.2L1807.0 195.0L1807.3 196.2L1808.0 195.5L1807.9 193.5L1809.2 192.6L1808.7 191.9ZM1805.0 195.6L1804.4 196.8L1803.6 197.1L1804.5 197.6L1806.0 197.3L1805.7 196.0L1804.8 194.9ZM1814.1 197.9L1814.1 199.4L1813.8 200.5L1815.4 199.5L1815.0 198.6ZM1809.3 198.9L1808.6 197.3L1807.8 197.8L1808.6 199.3L1808.7 200.7L1809.3 200.4L1810.4 200.6L1810.7 199.5ZM1805.8 232.7L1805.5 233.7L1806.6 234.9L1807.1 234.7L1806.4 232.8ZM1802.5 239.0L1802.8 240.9L1803.8 240.8L1804.0 242.0L1804.8 240.9L1803.2 238.6ZM1804.6 237.6L1805.3 237.7L1806.3 236.6L1805.7 236.2L1804.1 237.0ZM1809.3 239.8L1807.7 239.5L1806.5 241.3L1807.8 245.6L1809.8 247.5L1809.6 241.0ZM1806.9 248.3L1806.4 247.4L1805.9 247.3L1806.2 249.5L1808.3 248.4ZM1801.8 244.6L1803.1 243.2L1802.8 243.0L1798.8 243.1ZM1797.6 245.2L1797.2 246.6L1797.7 248.4L1799.0 247.3L1799.7 245.8L1798.2 244.6ZM1795.4 247.2L1793.4 247.8L1794.4 249.8L1794.8 249.6ZM1797.9 250.6L1798.1 252.1L1799.7 251.4L1799.8 250.3L1799.2 249.4L1798.3 250.0L1797.3 250.0ZM1802.5 248.0L1800.8 249.0L1801.4 250.3L1802.0 250.5L1802.3 251.8L1803.3 251.6L1803.6 250.8L1802.8 249.6L1803.1 248.4ZM1792.5 251.7L1790.5 251.1L1789.6 251.6L1792.0 253.4L1793.1 255.4L1793.5 254.1L1792.8 254.0L1792.4 253.5ZM1783.3 253.3L1782.5 257.9L1783.8 259.6L1785.5 259.4L1786.6 258.7L1787.0 257.9L1786.8 252.7L1783.9 252.6ZM1788.5 253.2L1788.7 257.4L1791.6 256.2L1790.8 254.5ZM1786.7 260.6L1783.4 261.1L1781.8 260.0L1781.6 261.2L1786.3 261.9ZM1798.7 254.9L1799.7 255.7L1800.9 255.2L1800.5 254.1L1800.7 253.3L1799.5 253.1L1798.6 253.7ZM1804.9 255.5L1804.1 253.9L1803.5 254.7L1802.6 254.9L1802.4 255.9L1803.6 256.9L1803.8 257.9L1804.6 257.9L1804.5 256.5ZM1789.7 259.6L1791.1 260.1L1790.9 261.2L1791.9 261.7L1792.6 261.4L1791.3 259.7L1791.2 258.6ZM1795.3 260.9L1796.3 261.3L1797.4 260.9L1796.5 259.2L1794.6 259.7L1793.9 258.6L1793.1 259.2L1794.2 261.2ZM1793.5 262.8L1791.9 263.6L1790.9 263.0L1790.0 263.4L1790.2 266.3L1791.4 265.8L1794.0 265.7L1794.4 264.2ZM1777.6 256.6L1776.0 256.8L1775.7 257.3L1776.5 258.8L1778.0 258.1ZM1766.6 260.6L1767.0 262.6L1767.9 264.2L1768.3 264.5L1769.7 264.5L1770.0 262.3L1769.0 261.8L1768.0 260.2ZM1769.6 259.6L1770.5 260.8L1771.3 260.1L1771.2 259.3L1770.1 258.7ZM1779.6 259.5L1777.3 260.2L1777.2 261.7L1778.6 263.3ZM1781.5 262.8L1781.9 266.3L1782.8 267.0L1784.1 267.1L1784.8 266.4L1785.8 263.5ZM1775.6 260.1L1774.3 260.2L1774.0 260.6L1774.6 261.6L1775.7 260.9ZM1775.9 262.7L1774.5 263.8L1774.6 264.3L1776.6 264.4L1777.1 264.8L1777.3 268.2L1778.4 264.2L1777.5 264.3L1776.8 263.9ZM1770.0 266.0L1768.8 266.1L1768.6 267.4L1769.2 268.2L1769.0 268.8L1769.9 269.1L1770.5 267.1ZM1761.3 261.6L1760.6 262.3L1760.8 263.4L1761.5 265.1L1762.5 265.3L1762.9 264.6L1762.8 263.6L1762.2 263.4ZM1766.4 266.3L1765.4 266.5L1764.8 267.7L1767.1 268.3L1766.8 267.7L1767.2 265.7ZM1754.4 268.1L1750.9 267.0L1751.5 270.0L1753.6 271.0ZM1773.6 270.0L1775.5 270.6L1776.4 269.6L1776.0 269.2L1774.4 269.2L1773.2 267.8L1772.7 267.8L1772.4 268.5ZM1774.3 266.6L1775.1 267.6L1775.7 267.6L1775.4 265.9L1774.4 265.9ZM1802.7 263.1L1803.6 262.6L1804.2 261.8L1804.0 261.3L1802.8 261.1L1801.5 262.6ZM1803.5 268.7L1800.8 268.3L1799.5 267.9L1799.9 269.3L1801.0 269.9L1802.3 269.9ZM1793.7 271.6L1792.0 272.2L1793.0 273.5L1792.9 274.9L1794.1 275.2L1793.6 273.8ZM1779.3 271.1L1787.0 273.3L1788.2 273.4L1788.4 272.9L1787.6 270.6L1785.2 269.6L1782.6 270.3L1781.1 270.3L1780.2 269.9L1779.4 268.9ZM1747.9 271.7L1748.7 273.6L1747.9 275.2L1750.4 274.6L1751.2 273.8L1751.2 272.5L1750.2 270.9L1749.4 270.6ZM1760.4 271.0L1761.9 273.6L1763.5 274.4L1765.9 273.7L1767.5 272.3L1765.9 271.0L1763.3 270.1L1760.7 270.6ZM1772.6 273.1L1775.2 275.0L1775.6 275.0L1776.2 272.6L1774.3 272.5ZM1778.4 273.3L1778.3 275.3L1776.9 276.5L1777.5 277.0L1780.4 277.2L1781.0 275.0L1780.7 273.7ZM1770.2 274.3L1769.6 275.1L1770.5 276.1L1771.0 275.5L1771.6 275.5ZM1767.9 276.1L1766.0 276.2L1765.1 277.1L1765.2 277.5L1766.7 278.3L1768.0 278.1L1768.7 276.6ZM1763.7 276.1L1760.7 276.0L1760.3 276.7L1761.3 277.7L1763.1 278.0L1763.5 277.6ZM1757.3 276.2L1756.0 275.6L1755.7 274.6L1754.2 274.6L1753.9 275.8L1755.3 276.2L1756.4 277.0L1757.4 276.7ZM1763.7 303.2L1761.6 302.3L1760.5 303.2L1763.5 303.6ZM1753.5 308.6L1754.2 307.5L1753.5 306.7L1753.2 305.3L1752.1 305.3L1752.8 307.6ZM1751.7 303.9L1753.0 303.7L1753.8 302.7L1753.9 301.4L1753.1 300.1L1752.4 300.3L1751.7 299.9L1751.2 300.7L1751.1 302.1ZM1752.5 289.8L1753.6 290.0L1754.2 289.1L1755.7 288.8L1755.1 287.1L1752.7 288.3ZM1756.9 286.3L1758.0 287.6L1758.2 288.6L1758.8 288.6L1760.0 286.5L1761.4 286.5L1762.7 287.1L1763.8 286.0L1761.1 285.6L1759.4 284.9L1758.5 285.5L1757.7 285.2ZM1758.5 280.6L1759.4 280.0L1760.0 278.6L1759.1 277.9L1757.8 278.8ZM1724.5 289.4L1725.2 289.7L1726.3 288.9L1726.8 287.4L1725.4 286.5ZM1733.5 286.6L1735.8 286.3L1736.9 285.7L1735.1 284.6ZM1735.9 283.2L1737.4 284.2L1738.4 284.0L1739.0 283.3L1738.7 282.1L1737.3 281.6ZM1738.9 280.5L1740.0 281.1L1740.5 282.6L1742.6 282.7L1743.7 282.1L1743.8 281.7L1740.7 280.1ZM1745.3 281.9L1746.2 282.7L1747.6 283.0L1748.7 282.2L1747.6 280.9ZM1755.4 282.0L1753.9 281.4L1752.2 282.0L1752.1 283.7L1752.6 284.6L1754.9 283.5ZM1743.3 284.2L1740.1 284.5L1741.1 285.0L1742.1 286.5L1743.8 285.4ZM1745.3 284.8L1745.0 286.6L1742.8 288.1L1745.7 288.2L1745.6 287.0L1747.1 285.6L1746.9 284.4L1745.0 283.9ZM1729.1 289.5L1727.9 289.1L1727.7 289.8L1726.6 290.5L1725.9 291.5L1727.1 291.3L1728.2 292.0L1729.1 291.8L1728.9 290.5ZM1717.2 296.7L1716.3 298.8L1717.5 299.6L1719.2 297.1L1718.1 295.6ZM1720.1 295.4L1720.8 296.7L1721.5 294.1L1720.8 294.5L1720.1 294.4ZM1727.5 300.5L1725.8 299.3L1722.4 298.4L1721.7 299.2L1720.9 302.1L1721.8 302.9L1724.9 304.1L1731.0 305.3ZM1733.8 304.8L1735.9 305.7L1737.2 305.5L1736.9 303.5L1735.7 302.8L1734.7 302.9ZM1783.1 299.2L1781.8 299.7L1781.6 300.4L1781.4 302.9L1781.8 303.7L1783.6 301.0ZM1779.4 304.6L1779.1 303.5L1776.7 303.5L1775.6 304.8L1775.8 305.3L1778.2 305.7ZM1773.8 304.8L1774.0 302.8L1774.9 302.2L1773.9 302.0L1772.9 302.9L1772.6 303.5L1773.2 304.7ZM1771.4 304.6L1770.9 303.8L1771.2 302.5L1768.6 303.1L1767.7 306.1ZM1769.6 309.6L1771.0 310.4L1772.6 310.4L1773.1 309.9L1772.9 309.2L1773.3 308.5L1771.6 308.0L1769.4 309.0ZM1779.2 310.5L1780.2 311.7L1780.4 312.7L1779.9 313.6L1781.3 314.6L1781.0 313.1L1782.0 312.1L1779.8 309.6ZM1780.9 308.3L1783.3 311.1L1784.3 309.5L1786.2 308.7L1784.2 308.1ZM1786.9 305.9L1786.5 307.0L1787.6 307.7L1787.5 307.1L1787.9 306.5L1786.9 304.9L1786.6 305.5ZM1787.9 303.1L1789.7 306.0L1791.2 305.4L1792.3 304.2L1792.8 304.3L1792.1 303.5L1790.5 304.0L1789.7 303.8L1787.8 302.4L1788.4 301.5L1790.5 302.3L1792.2 301.9L1792.8 302.1L1791.1 299.2L1790.4 299.6L1788.2 299.7L1787.8 300.2L1787.8 301.6L1787.3 301.8L1787.4 303.0ZM1785.7 313.7L1789.3 316.5L1791.4 311.2L1791.5 310.0L1788.8 309.9L1788.9 311.7L1788.3 313.3L1787.4 313.7ZM1784.8 311.8L1787.2 312.1L1787.1 310.1L1785.1 311.1ZM1759.7 309.4L1761.5 309.4L1763.4 311.8L1763.9 311.5L1763.6 310.2L1762.8 309.6L1760.4 308.9L1759.6 308.9ZM1761.6 312.0L1760.5 310.8L1759.6 311.2L1760.0 312.0ZM1768.4 312.1L1765.6 312.9L1766.4 313.7L1771.0 315.3L1772.7 315.7L1773.2 315.4L1773.4 313.9L1772.4 312.5ZM1777.0 318.2L1777.4 319.4L1779.3 318.7L1780.1 317.2L1780.1 315.6L1778.6 314.9ZM1784.1 319.0L1784.8 319.7L1784.9 318.2L1783.2 318.3L1783.0 318.9ZM1787.6 285.5L1787.7 284.3L1786.9 283.8L1786.1 284.3L1786.5 285.2ZM1788.3 275.6L1788.5 277.0L1790.3 277.7L1790.7 276.0ZM1782.0 276.7L1783.4 276.8L1784.5 278.1L1786.9 276.7L1786.4 275.0L1785.1 274.7L1782.6 274.9ZM1771.9 277.5L1770.7 276.7L1769.6 277.9L1772.0 278.2ZM1780.9 280.5L1779.9 279.5L1777.4 279.1L1776.0 279.2L1775.6 280.6L1778.3 281.5L1781.4 281.7ZM1784.5 284.4L1783.1 285.0L1783.2 285.5L1784.2 285.9L1784.9 285.7ZM1769.3 286.0L1768.9 288.3L1767.9 289.2L1766.4 289.4L1766.8 290.1L1767.3 290.2L1768.8 289.6L1768.9 288.6L1770.6 286.6ZM1773.8 290.5L1772.5 292.2L1773.2 292.7L1774.9 292.2L1774.6 290.3ZM1771.5 284.1L1772.4 281.1L1772.0 279.9L1769.3 279.6L1766.6 280.0L1769.0 281.9L1769.8 280.8L1771.2 281.0L1771.9 282.0ZM1764.1 280.6L1761.1 281.1L1762.0 282.4L1764.0 283.5L1766.2 284.0L1767.3 283.7L1767.4 282.5ZM1765.3 287.1L1766.1 287.8L1767.2 287.7L1767.5 286.3L1765.4 286.1ZM1761.7 291.7L1762.3 294.5L1763.2 294.7L1764.9 293.9L1765.0 293.0L1764.6 291.4L1762.3 291.4ZM1759.5 296.8L1759.8 299.4L1761.1 299.6L1760.9 297.5L1761.9 296.2L1759.9 295.8ZM1782.5 291.7L1781.0 292.8L1782.8 293.9L1782.8 292.5ZM1776.2 293.9L1774.9 294.2L1774.9 295.2L1773.9 296.5L1775.0 297.0L1775.3 296.8ZM1771.0 295.3L1769.5 300.0L1769.9 300.0L1771.3 295.8ZM1772.1 300.5L1775.2 300.1L1775.1 299.1L1773.1 298.0ZM1763.5 300.2L1766.8 299.9L1766.6 298.3L1766.0 297.4L1764.0 297.3ZM1754.7 298.0L1754.6 299.6L1755.5 300.8L1757.3 300.2L1755.8 298.1ZM1792.1 277.5L1792.4 278.3L1794.0 278.6L1794.4 277.5L1794.3 276.9L1792.4 276.4ZM1740.8 288.0L1740.4 286.7L1739.6 286.0L1736.4 287.8L1732.2 288.3L1732.1 288.7L1732.6 290.1L1733.4 290.9L1736.3 291.3L1739.3 290.5L1740.6 288.9ZM1742.3 289.9L1740.8 291.4L1740.6 293.6L1741.5 299.9L1741.4 304.8L1741.9 305.9L1742.8 306.6L1743.7 305.4L1747.3 291.8L1746.7 290.5L1745.2 289.7ZM1736.0 294.5L1736.7 295.0L1738.7 293.9L1738.8 292.9L1737.9 292.9L1736.1 293.6ZM1746.5 272.1L1745.8 272.8L1745.7 274.0L1746.6 274.0L1747.0 273.5ZM1707.8 280.6L1708.3 282.1L1709.8 281.3L1709.2 280.5ZM1830.0 150.3L1829.8 154.2L1830.2 155.6L1830.7 155.4L1831.7 153.3L1833.0 147.7L1830.7 148.8ZM1815.9 195.5L1816.1 197.0L1816.9 198.1L1817.9 198.4L1818.8 198.1L1819.7 195.5L1816.4 194.7ZM1810.5 156.1L1810.0 158.0L1810.2 160.0L1810.7 160.6L1812.1 161.0L1813.0 161.0L1813.7 159.5L1815.7 157.5L1818.0 156.8L1816.0 154.4L1814.3 153.4L1811.8 154.6ZM1815.3 172.4L1817.8 172.4L1817.8 171.4L1816.9 170.9L1816.2 171.2ZM1810.1 195.0L1810.4 197.6L1811.2 197.9L1811.7 196.2ZM1804.1 200.5L1804.8 201.7L1806.2 202.0L1806.9 201.0L1807.1 199.8L1806.6 198.9L1805.8 198.9L1804.7 199.3ZM1797.3 216.7L1797.4 217.8L1799.3 218.8L1801.8 221.4L1804.3 221.7L1805.2 221.4L1805.8 220.7L1806.0 218.5L1802.7 214.0L1801.1 212.4L1800.5 212.5L1798.9 214.0ZM1796.8 265.3L1801.9 266.9L1802.6 266.1L1801.8 265.0L1799.8 264.3L1797.7 264.6ZM1798.5 257.9L1798.6 259.3L1799.3 261.2L1799.8 261.5L1801.0 261.1L1801.3 259.9L1800.8 258.1L1798.9 257.4ZM1795.6 271.1L1795.2 273.6L1795.8 274.6L1798.6 274.8L1800.2 274.2L1800.4 272.0L1799.8 271.0L1796.3 270.8ZM1791.8 231.3L1792.8 232.3L1797.2 233.9L1798.0 233.0L1798.4 231.5L1797.8 230.5L1795.9 229.8L1792.2 230.4ZM1785.9 288.0L1784.9 290.1L1785.2 293.6L1788.5 292.0L1790.3 291.8L1796.9 293.6L1797.5 291.3L1797.3 289.5L1794.4 287.6L1792.5 286.7L1790.6 286.5L1787.6 287.1ZM1791.0 268.3L1791.7 268.7L1793.1 268.7L1795.1 268.2L1795.3 267.8L1794.8 267.4L1792.3 267.3L1791.3 267.5ZM1785.6 279.3L1786.4 281.5L1788.0 282.6L1790.3 283.4L1792.3 283.1L1790.7 280.2L1789.0 278.8L1786.4 278.9ZM1787.4 242.4L1787.5 247.1L1788.2 247.7L1789.2 247.6L1791.3 245.0L1791.6 243.8L1791.2 242.5L1790.6 242.1L1788.2 242.0ZM1785.6 171.1L1785.9 173.6L1787.0 174.9L1789.2 175.1L1791.0 174.8L1790.9 173.9L1790.3 172.9L1787.9 171.1L1786.2 170.8ZM1784.3 198.3L1784.5 199.7L1785.4 200.6L1787.2 199.8L1788.7 198.3L1787.6 197.2L1786.1 196.7L1784.6 197.3ZM1781.4 215.1L1781.7 216.2L1783.7 216.3L1784.9 215.0L1784.9 214.0L1784.2 213.6L1782.1 213.8ZM1775.0 166.4L1776.7 169.9L1778.4 171.3L1779.3 171.5L1779.9 169.0L1778.8 165.8L1777.9 165.1L1776.8 164.9L1775.0 165.5ZM1777.2 296.1L1776.9 297.7L1778.1 298.2L1778.6 296.6ZM1759.6 230.2L1759.6 235.5L1759.9 237.0L1760.4 237.5L1761.6 236.9L1762.7 235.1L1763.4 233.0L1763.6 230.6L1763.2 229.2L1762.2 228.9L1760.1 229.1ZM1753.9 193.3L1754.2 194.4L1755.0 194.7L1760.5 196.0L1761.4 195.4L1761.5 194.5L1760.7 192.7L1759.3 191.8L1754.9 192.0L1754.2 192.3ZM1755.2 290.4L1755.6 293.9L1756.3 294.1L1757.1 293.8L1757.5 291.2ZM1751.2 219.4L1750.3 222.4L1750.8 223.3L1752.2 224.1L1753.8 222.3L1754.0 219.7L1753.5 219.0L1752.1 218.6ZM1749.0 189.1L1749.6 190.6L1752.3 190.4L1751.7 187.8L1749.3 188.1ZM1748.5 217.9L1747.1 221.3L1747.3 221.8L1748.2 220.2ZM1745.9 242.1L1745.7 245.5L1746.1 247.0L1747.3 245.7L1747.6 243.2L1747.4 242.4L1746.6 242.0ZM1737.7 268.8L1735.0 270.8L1735.1 271.7L1736.0 273.0L1737.7 274.0L1740.0 274.3L1741.3 274.1L1742.5 273.3L1742.6 271.9L1741.0 269.6L1739.4 268.6ZM1735.6 220.6L1736.3 222.0L1737.0 222.6L1739.1 222.9L1739.8 222.1L1739.7 220.5L1738.2 218.8L1735.7 219.5ZM1727.0 294.8L1727.4 296.4L1731.3 300.8L1732.1 300.9L1733.4 300.3L1735.3 298.3L1735.5 297.1L1735.1 296.2L1731.8 293.5L1729.1 293.4L1727.4 294.1ZM1727.5 206.8L1727.4 207.9L1730.4 209.5L1732.2 209.8L1733.4 208.9L1731.7 207.2L1731.1 204.9L1728.8 205.5ZM1726.8 163.6L1727.1 165.4L1728.3 165.7L1728.9 165.4L1729.3 164.3ZM1720.6 233.3L1720.5 234.9L1721.7 236.1L1724.4 236.6L1725.9 235.8L1725.8 234.5L1724.6 232.9L1721.6 232.4ZM1721.4 161.9L1721.4 165.1L1722.4 165.5L1723.3 165.3L1723.5 162.6ZM1715.1 290.1L1715.5 291.1L1717.0 291.4L1718.0 291.0L1718.6 290.3L1716.8 289.3L1715.3 289.4ZM1716.5 161.7L1716.5 164.4L1717.5 164.8L1718.1 163.7L1718.1 161.0L1717.1 160.6ZM1711.5 193.2L1713.3 193.7L1714.8 193.3L1714.4 192.4L1713.5 192.3L1711.7 192.4ZM1709.9 184.1L1712.8 184.7L1712.5 182.7L1710.7 183.2ZM1706.7 286.9L1706.5 288.9L1707.5 289.1L1707.7 287.4Z" fill="#fff"/>
</svg>
</body></html>
